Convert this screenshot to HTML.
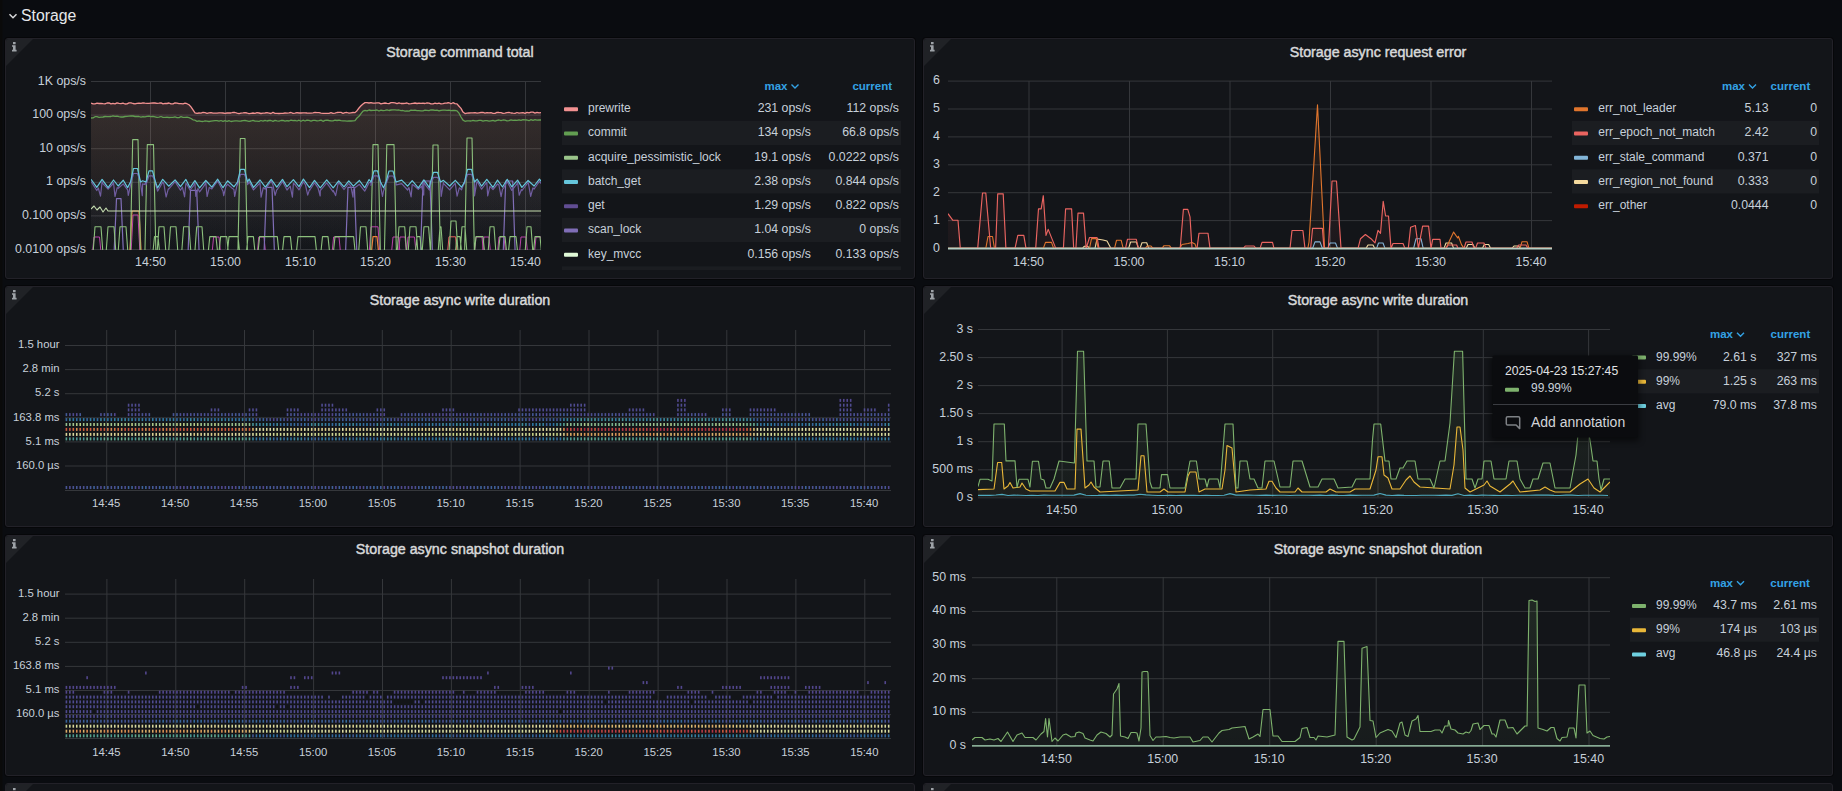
<!DOCTYPE html>
<html><head><meta charset="utf-8"><title>Storage</title>
<style>html,body{margin:0;padding:0;background:#0a0c10;overflow:hidden;width:1842px;height:791px}svg{display:block}</style>
</head><body><svg width="1842" height="791" viewBox="0 0 1842 791" font-family='"Liberation Sans", sans-serif'><rect x="0" y="0" width="1842" height="791" fill="#0a0c10"/>
<rect x="0" y="0" width="2.5" height="791" fill="#0a0a0a"/>
<path d="M9.5 14.2 l3.5 3.5 l3.5 -3.5" stroke="#d8d9da" stroke-width="1.5" fill="none"/>
<text x="21" y="20.5" font-size="15.8" fill="#e6e8ea" text-anchor="start" font-weight="normal" >Storage</text>
<rect x="4.5" y="37.5" width="911" height="242" rx="3" fill="none" stroke="#060709" stroke-width="1"/>
<rect x="5.5" y="38.5" width="909" height="240" rx="2.5" fill="#131519" stroke="#222128" stroke-width="1"/>
<path d="M6 41.5 Q6 39 8.5 39 L33 39 L6 66 Z" fill="#202226"/>
<path d="M13 42h2.6v2.2h-2.6z M12 45.2h3.6v4.6h1v1.6h-4.6v-1.6h1v-3h-1z" fill="#9ea3a8"/>
<text x="460.0" y="56.7" font-size="14.25" fill="#d8d9da" text-anchor="middle" font-weight="normal" stroke="#d8d9da" stroke-width="0.45">Storage command total</text>
<line x1="91" y1="81.5" x2="541" y2="81.5" stroke="#35373b" stroke-width="1"/>
<line x1="91" y1="115.1" x2="541" y2="115.1" stroke="#35373b" stroke-width="1"/>
<line x1="91" y1="148.7" x2="541" y2="148.7" stroke="#35373b" stroke-width="1"/>
<line x1="91" y1="182.3" x2="541" y2="182.3" stroke="#35373b" stroke-width="1"/>
<line x1="91" y1="215.9" x2="541" y2="215.9" stroke="#35373b" stroke-width="1"/>
<line x1="91" y1="249.5" x2="541" y2="249.5" stroke="#35373b" stroke-width="1"/>
<line x1="150.5" y1="81" x2="150.5" y2="249" stroke="#35373b" stroke-width="1"/>
<line x1="225.5" y1="81" x2="225.5" y2="249" stroke="#35373b" stroke-width="1"/>
<line x1="300.5" y1="81" x2="300.5" y2="249" stroke="#35373b" stroke-width="1"/>
<line x1="375.5" y1="81" x2="375.5" y2="249" stroke="#35373b" stroke-width="1"/>
<line x1="450.5" y1="81" x2="450.5" y2="249" stroke="#35373b" stroke-width="1"/>
<line x1="525.5" y1="81" x2="525.5" y2="249" stroke="#35373b" stroke-width="1"/>
<text x="86" y="84.5" font-size="12.4" fill="#c7d0d9" text-anchor="end" font-weight="normal" >1K ops/s</text>
<text x="86" y="118.1" font-size="12.4" fill="#c7d0d9" text-anchor="end" font-weight="normal" >100 ops/s</text>
<text x="86" y="151.7" font-size="12.4" fill="#c7d0d9" text-anchor="end" font-weight="normal" >10 ops/s</text>
<text x="86" y="185.3" font-size="12.4" fill="#c7d0d9" text-anchor="end" font-weight="normal" >1 ops/s</text>
<text x="86" y="218.9" font-size="12.4" fill="#c7d0d9" text-anchor="end" font-weight="normal" >0.100 ops/s</text>
<text x="86" y="252.5" font-size="12.4" fill="#c7d0d9" text-anchor="end" font-weight="normal" >0.0100 ops/s</text>
<text x="150.5" y="266" font-size="12.4" fill="#c7d0d9" text-anchor="middle" font-weight="normal" >14:50</text>
<text x="225.5" y="266" font-size="12.4" fill="#c7d0d9" text-anchor="middle" font-weight="normal" >15:00</text>
<text x="300.5" y="266" font-size="12.4" fill="#c7d0d9" text-anchor="middle" font-weight="normal" >15:10</text>
<text x="375.5" y="266" font-size="12.4" fill="#c7d0d9" text-anchor="middle" font-weight="normal" >15:20</text>
<text x="450.5" y="266" font-size="12.4" fill="#c7d0d9" text-anchor="middle" font-weight="normal" >15:30</text>
<text x="525.5" y="266" font-size="12.4" fill="#c7d0d9" text-anchor="middle" font-weight="normal" >15:40</text>
<clipPath id="cA"><rect x="91" y="60" width="450" height="190"/></clipPath>
<linearGradient id="gPink" x1="0" y1="81" x2="0" y2="249" gradientUnits="userSpaceOnUse"><stop offset="0" stop-color="#F29191" stop-opacity="0.17"/><stop offset="1" stop-color="#F29191" stop-opacity="0.0"/></linearGradient>
<linearGradient id="gGreen" x1="0" y1="81" x2="0" y2="249" gradientUnits="userSpaceOnUse"><stop offset="0" stop-color="#629E51" stop-opacity="0.07"/><stop offset="1" stop-color="#629E51" stop-opacity="0.0"/></linearGradient>
<linearGradient id="gBlue" x1="0" y1="81" x2="0" y2="249" gradientUnits="userSpaceOnUse"><stop offset="0" stop-color="#65C5DB" stop-opacity="0.06"/><stop offset="1" stop-color="#65C5DB" stop-opacity="0.005"/></linearGradient>
<linearGradient id="gPurp" x1="0" y1="81" x2="0" y2="249" gradientUnits="userSpaceOnUse"><stop offset="0" stop-color="#806EB7" stop-opacity="0.06"/><stop offset="1" stop-color="#806EB7" stop-opacity="0.005"/></linearGradient>
<path d="M91.0 103.1 L93.0 103.9 L95.0 103.8 L97.0 103.2 L99.0 103.5 L101.0 103.4 L103.0 103.7 L105.0 103.8 L107.0 103.0 L109.0 102.9 L111.0 103.9 L113.0 103.4 L115.0 103.8 L117.0 102.8 L119.0 103.4 L121.0 103.7 L123.0 103.1 L125.0 104.0 L127.0 103.9 L129.0 102.9 L131.0 102.8 L133.0 103.5 L135.0 103.9 L137.0 103.3 L139.0 103.1 L141.0 103.3 L143.0 102.8 L145.0 103.1 L147.0 103.3 L149.0 103.4 L151.0 103.1 L153.0 103.0 L155.0 103.0 L157.0 103.3 L159.0 103.1 L161.0 102.8 L163.0 103.8 L165.0 103.4 L167.0 103.5 L169.0 103.0 L171.0 103.9 L173.0 103.8 L175.0 102.9 L177.0 103.1 L179.0 103.6 L181.0 103.6 L183.0 103.8 L185.0 103.2 L187.0 103.7 L189.0 104.8 L191.0 106.9 L193.0 109.9 L195.0 112.8 L197.0 113.4 L199.0 113.0 L201.0 113.1 L203.0 112.4 L205.0 112.7 L207.0 113.4 L209.0 112.9 L211.0 112.6 L213.0 113.1 L215.0 113.2 L217.0 113.2 L219.0 112.8 L221.0 112.9 L223.0 113.0 L225.0 113.3 L227.0 113.0 L229.0 112.9 L231.0 113.0 L233.0 112.4 L235.0 112.5 L237.0 113.2 L239.0 113.6 L241.0 113.1 L243.0 112.9 L245.0 112.6 L247.0 113.0 L249.0 113.6 L251.0 113.3 L253.0 113.0 L255.0 113.4 L257.0 112.7 L259.0 113.0 L261.0 113.5 L263.0 113.1 L265.0 113.0 L267.0 112.7 L269.0 113.1 L271.0 113.5 L273.0 112.4 L275.0 113.3 L277.0 113.4 L279.0 113.5 L281.0 113.3 L283.0 113.4 L285.0 113.0 L287.0 113.1 L289.0 112.9 L291.0 112.5 L293.0 113.4 L295.0 113.1 L297.0 112.6 L299.0 113.0 L301.0 113.0 L303.0 112.8 L305.0 112.8 L307.0 113.0 L309.0 113.1 L311.0 113.1 L313.0 112.9 L315.0 112.4 L317.0 112.7 L319.0 112.6 L321.0 113.1 L323.0 113.4 L325.0 113.4 L327.0 113.4 L329.0 113.4 L331.0 112.7 L333.0 113.4 L335.0 113.2 L337.0 112.5 L339.0 112.4 L341.0 112.4 L343.0 113.3 L345.0 112.7 L347.0 112.5 L349.0 113.1 L351.0 112.8 L353.0 112.5 L355.0 112.6 L357.0 110.7 L359.0 108.0 L361.0 105.8 L363.0 104.0 L365.0 102.6 L367.0 102.6 L369.0 103.0 L371.0 102.6 L373.0 103.2 L375.0 103.2 L377.0 102.9 L379.0 102.8 L381.0 103.8 L383.0 103.3 L385.0 103.0 L387.0 103.4 L389.0 103.7 L391.0 102.7 L393.0 102.7 L395.0 102.9 L397.0 103.6 L399.0 102.9 L401.0 103.5 L403.0 103.5 L405.0 103.4 L407.0 103.0 L409.0 103.9 L411.0 103.7 L413.0 103.3 L415.0 103.0 L417.0 103.5 L419.0 103.2 L421.0 103.4 L423.0 103.1 L425.0 103.5 L427.0 102.8 L429.0 103.1 L431.0 103.9 L433.0 103.8 L435.0 103.1 L437.0 103.7 L439.0 103.1 L441.0 103.8 L443.0 103.6 L445.0 103.2 L447.0 103.0 L449.0 102.7 L451.0 103.8 L453.0 102.7 L455.0 103.7 L457.0 103.9 L459.0 106.2 L461.0 108.4 L463.0 112.1 L465.0 113.6 L467.0 113.2 L469.0 113.0 L471.0 112.8 L473.0 112.8 L475.0 112.6 L477.0 113.1 L479.0 112.8 L481.0 112.5 L483.0 112.4 L485.0 113.1 L487.0 112.6 L489.0 112.9 L491.0 112.7 L493.0 113.3 L495.0 113.3 L497.0 112.3 L499.0 112.5 L501.0 112.6 L503.0 113.4 L505.0 113.1 L507.0 112.6 L509.0 112.4 L511.0 113.0 L513.0 113.2 L515.0 113.3 L517.0 112.5 L519.0 113.2 L521.0 112.9 L523.0 112.7 L525.0 113.3 L527.0 112.4 L529.0 112.9 L531.0 112.2 L533.0 112.2 L535.0 113.1 L537.0 112.3 L539.0 112.9 L541.0 112.7 L541.0 249.2 L91.0 249.2 Z" fill="url(#gPink)" stroke="none" clip-path="url(#cA)"/>
<path d="M91.0 118.0 L93.0 117.9 L95.0 116.7 L97.0 116.7 L99.0 117.4 L101.0 117.2 L103.0 117.0 L105.0 116.5 L107.0 116.7 L109.0 116.6 L111.0 116.5 L113.0 115.9 L115.0 116.3 L117.0 116.2 L119.0 116.7 L121.0 117.0 L123.0 117.0 L125.0 116.5 L127.0 116.4 L129.0 116.2 L131.0 116.0 L133.0 116.0 L135.0 116.5 L137.0 116.4 L139.0 116.5 L141.0 117.1 L143.0 116.7 L145.0 116.8 L147.0 116.4 L149.0 116.2 L151.0 116.6 L153.0 116.3 L155.0 116.8 L157.0 117.4 L159.0 117.1 L161.0 116.5 L163.0 117.4 L165.0 117.3 L167.0 117.2 L169.0 117.5 L171.0 117.3 L173.0 117.4 L175.0 116.9 L177.0 117.6 L179.0 117.6 L181.0 116.7 L183.0 117.4 L185.0 117.4 L187.0 117.1 L189.0 117.7 L191.0 118.5 L193.0 119.8 L195.0 120.2 L197.0 121.4 L199.0 120.8 L201.0 121.4 L203.0 121.5 L205.0 120.9 L207.0 121.1 L209.0 121.5 L211.0 121.2 L213.0 120.9 L215.0 120.6 L217.0 120.7 L219.0 121.2 L221.0 120.5 L223.0 121.4 L225.0 120.7 L227.0 121.4 L229.0 120.7 L231.0 121.5 L233.0 121.2 L235.0 120.9 L237.0 120.9 L239.0 121.1 L241.0 121.0 L243.0 120.7 L245.0 120.5 L247.0 120.9 L249.0 121.4 L251.0 121.0 L253.0 120.3 L255.0 121.2 L257.0 121.1 L259.0 121.3 L261.0 120.5 L263.0 121.1 L265.0 120.3 L267.0 121.0 L269.0 120.5 L271.0 120.5 L273.0 121.3 L275.0 120.3 L277.0 120.8 L279.0 121.2 L281.0 120.5 L283.0 120.4 L285.0 121.2 L287.0 120.7 L289.0 121.0 L291.0 120.2 L293.0 120.6 L295.0 120.4 L297.0 121.0 L299.0 120.2 L301.0 121.3 L303.0 120.2 L305.0 121.0 L307.0 120.1 L309.0 120.4 L311.0 121.1 L313.0 120.3 L315.0 120.3 L317.0 120.9 L319.0 120.6 L321.0 120.1 L323.0 121.3 L325.0 120.3 L327.0 120.1 L329.0 120.5 L331.0 120.8 L333.0 120.9 L335.0 120.2 L337.0 120.5 L339.0 120.1 L341.0 120.6 L343.0 120.9 L345.0 120.9 L347.0 121.1 L349.0 120.9 L351.0 121.0 L353.0 120.9 L355.0 120.6 L357.0 118.0 L359.0 116.3 L361.0 113.6 L363.0 111.1 L365.0 110.3 L367.0 110.9 L369.0 110.0 L371.0 110.5 L373.0 110.3 L375.0 110.4 L377.0 110.0 L379.0 111.0 L381.0 110.1 L383.0 110.6 L385.0 110.3 L387.0 109.9 L389.0 110.5 L391.0 110.0 L393.0 109.9 L395.0 109.9 L397.0 110.1 L399.0 110.0 L401.0 110.6 L403.0 110.5 L405.0 111.1 L407.0 111.0 L409.0 111.1 L411.0 110.2 L413.0 110.4 L415.0 110.2 L417.0 110.6 L419.0 110.7 L421.0 110.9 L423.0 110.8 L425.0 110.2 L427.0 110.4 L429.0 110.6 L431.0 109.9 L433.0 110.0 L435.0 110.4 L437.0 110.1 L439.0 110.8 L441.0 110.3 L443.0 110.1 L445.0 110.2 L447.0 110.3 L449.0 110.2 L451.0 110.6 L453.0 110.5 L455.0 110.4 L457.0 110.8 L459.0 113.2 L461.0 117.0 L463.0 120.1 L465.0 121.3 L467.0 120.9 L469.0 120.9 L471.0 121.0 L473.0 120.3 L475.0 120.8 L477.0 120.9 L479.0 120.4 L481.0 120.3 L483.0 121.1 L485.0 120.6 L487.0 120.7 L489.0 121.2 L491.0 120.8 L493.0 120.4 L495.0 121.2 L497.0 120.4 L499.0 120.0 L501.0 120.7 L503.0 120.0 L505.0 120.2 L507.0 120.9 L509.0 120.6 L511.0 119.8 L513.0 120.3 L515.0 120.2 L517.0 120.3 L519.0 119.9 L521.0 120.4 L523.0 119.7 L525.0 119.9 L527.0 120.0 L529.0 120.7 L531.0 119.6 L533.0 120.4 L535.0 119.7 L537.0 120.1 L539.0 119.9 L541.0 120.0 L541.0 249.2 L91.0 249.2 Z" fill="url(#gGreen)" stroke="none" clip-path="url(#cA)"/>
<path d="M91.0 179.3 L96.8 187.3 L102.1 179.4 L108.1 187.6 L113.5 180.0 L118.2 186.0 L123.3 180.2 L127.6 187.6 L130.5 182.0 L133.5 168.5 L137.5 168.5 L140.5 182.0 L142.6 180.8 L146.0 182.0 L149.0 170.8 L152.5 170.8 L155.5 182.0 L157.6 187.9 L162.7 179.3 L168.7 186.2 L175.1 179.9 L180.5 186.7 L185.9 179.4 L190.1 187.7 L194.9 180.6 L199.6 187.9 L205.8 180.5 L211.8 187.2 L217.7 179.2 L223.0 187.7 L227.6 180.8 L233.9 186.8 L237.5 182.0 L240.5 169.3 L244.5 169.3 L247.5 182.0 L249.1 179.1 L253.5 187.4 L260.0 180.0 L265.3 187.1 L271.2 179.4 L276.8 187.1 L282.5 179.4 L287.0 186.7 L293.4 179.7 L299.0 186.6 L303.4 179.1 L309.5 187.6 L314.5 180.4 L320.3 187.8 L326.7 179.8 L333.2 187.9 L338.7 180.8 L344.0 186.8 L348.8 180.8 L353.4 186.1 L359.4 180.5 L364.7 187.7 L369.1 179.5 L371.0 182.0 L374.0 170.8 L377.5 170.8 L380.5 182.0 L383.5 187.8 L386.0 182.0 L389.0 171.0 L393.0 171.0 L396.0 182.0 L401.7 180.1 L407.6 186.1 L412.2 180.7 L418.3 187.8 L423.9 179.9 L429.4 187.7 L430.5 182.0 L433.5 172.4 L437.5 172.4 L440.5 182.0 L443.4 180.4 L449.7 186.0 L455.3 180.3 L461.5 187.2 L464.5 182.0 L467.5 169.4 L471.5 169.4 L474.5 182.0 L477.2 179.2 L481.6 186.1 L486.8 179.3 L493.0 187.3 L497.5 180.1 L502.5 187.0 L507.2 179.3 L511.8 186.8 L517.6 180.1 L521.9 187.4 L528.1 180.5 L534.1 186.0 L539.4 179.1 L545.4 186.4 L545.4 249.2 L91.0 249.2 Z" fill="url(#gBlue)" stroke="none" clip-path="url(#cA)"/>
<path d="M91.0 181.5 L96.8 190.5 L98.3 188.0 L100.5 196.2 L102.1 181.7 L102.7 183.3 L108.1 189.2 L112.8 184.0 L113.5 182.5 L115.0 196.5 L117.2 187.7 L118.2 188.3 L123.3 183.9 L126.1 187.9 L127.6 189.8 L128.3 195.4 L130.5 185.1 L130.5 182.0 L130.5 184.8 L133.5 173.5 L137.5 173.5 L140.5 182.0 L140.5 183.7 L142.3 195.7 L142.6 183.8 L144.5 184.5 L146.0 182.0 L146.0 184.8 L149.0 175.8 L152.5 175.8 L155.5 182.0 L155.5 184.3 L157.1 189.3 L157.6 191.2 L162.7 182.1 L163.9 183.8 L166.1 197.0 L168.3 188.8 L168.7 189.2 L175.1 181.6 L180.5 190.2 L182.4 187.1 L184.6 196.8 L185.9 183.3 L186.8 184.2 L190.1 190.1 L193.6 185.6 L194.9 182.9 L195.8 196.3 L198.0 188.4 L199.6 191.9 L204.9 184.6 L205.8 182.3 L207.1 196.5 L209.3 187.4 L211.8 188.9 L217.7 180.9 L221.5 188.3 L223.0 191.2 L223.7 195.6 L225.9 186.4 L227.6 184.2 L232.5 188.6 L233.9 189.4 L234.7 196.4 L236.9 185.7 L237.5 182.0 L237.5 185.1 L240.5 174.3 L244.5 174.3 L247.5 182.0 L247.5 184.6 L248.7 182.8 L249.1 181.8 L253.5 189.9 L258.9 184.2 L260.0 182.5 L261.1 197.2 L263.3 187.5 L265.3 189.2 L271.2 181.1 L272.9 184.7 L275.1 195.3 L276.8 189.7 L277.3 189.5 L282.5 181.5 L287.0 190.0 L290.2 186.2 L292.4 197.1 L293.4 183.2 L294.6 184.2 L299.0 189.9 L303.4 181.8 L305.5 185.0 L307.7 195.1 L309.5 189.6 L309.9 190.0 L314.5 182.8 L318.0 187.8 L320.2 196.0 L320.3 190.5 L322.4 188.2 L326.7 182.9 L333.2 191.8 L333.4 190.7 L335.6 195.6 L337.8 185.0 L338.7 182.5 L344.0 189.5 L348.8 183.5 L350.8 186.1 L353.0 197.1 L353.4 189.4 L355.2 187.5 L359.4 184.3 L364.7 191.1 L369.1 182.6 L369.2 182.7 L371.0 182.0 L371.0 185.4 L374.0 175.8 L377.5 175.8 L380.5 182.0 L380.5 185.2 L382.5 196.5 L383.5 191.0 L384.7 188.0 L386.0 182.0 L386.0 184.1 L389.0 176.0 L393.0 176.0 L396.0 182.0 L396.0 185.0 L396.4 184.9 L401.7 183.6 L407.6 190.0 L408.9 187.5 L411.1 196.9 L412.2 184.6 L413.3 185.0 L418.3 189.3 L421.5 186.2 L423.7 195.1 L423.9 182.1 L425.9 185.7 L429.4 190.0 L430.5 182.0 L430.5 184.5 L433.5 177.4 L437.5 177.4 L440.5 182.0 L440.5 183.7 L441.2 196.5 L443.4 182.6 L443.4 183.4 L449.7 189.9 L454.9 183.7 L455.3 183.6 L457.1 196.2 L459.3 187.8 L461.5 189.8 L464.5 182.0 L464.5 183.8 L467.5 174.4 L471.5 174.4 L474.5 182.0 L474.5 184.0 L474.5 195.8 L476.7 182.6 L477.2 181.5 L481.6 189.2 L485.5 184.0 L486.8 182.5 L487.7 195.9 L489.9 186.3 L493.0 189.5 L497.5 184.0 L498.9 185.0 L501.1 196.6 L502.5 189.3 L503.3 188.6 L507.2 181.5 L511.8 190.4 L517.0 183.8 L517.6 182.0 L519.2 195.2 L521.4 189.5 L521.9 190.6 L528.1 182.5 L528.5 183.9 L530.7 196.3 L532.9 187.9 L534.1 189.0 L539.4 181.3 L545.4 188.8 L545.4 249.2 L91.0 249.2 Z" fill="url(#gPurp)" stroke="none" clip-path="url(#cA)"/>
<path d="M91.0 262.0 L91.6 262.0 L94.0 237.0 L99.5 237.0 L101.9 262.0 L130.6 262.0 L133.0 215.0 L138.0 215.0 L140.4 262.0 L211.2 262.0 L213.6 237.0 L219.0 237.0 L221.4 262.0 L256.4 262.0 L258.8 237.0 L264.0 237.0 L266.4 262.0 L331.2 262.0 L333.6 237.0 L339.0 237.0 L341.4 262.0 L368.6 262.0 L371.0 226.8 L378.0 226.8 L380.4 262.0 L390.6 262.0 L393.0 237.0 L398.5 237.0 L400.9 262.0 L397.6 262.0 L400.0 237.0 L405.0 237.0 L407.4 262.0 L405.6 262.0 L408.0 237.0 L414.5 237.0 L416.9 262.0 L473.6 262.0 L476.0 237.0 L482.0 237.0 L484.4 262.0 L481.6 262.0 L484.0 237.0 L489.0 237.0 L491.4 262.0 L496.6 262.0 L499.0 237.0 L504.0 237.0 L506.4 262.0 L518.6 262.0 L521.0 237.0 L526.0 237.0 L528.4 262.0 L533.6 262.0 L536.0 237.0 L541.0 237.0 L543.4 262.0 L541.0 262.0" stroke="#BA43A9" stroke-width="1" fill="none" stroke-linejoin="round" clip-path="url(#cA)"/>
<path d="M91.0 262.0 L129.4 262.0 L132.0 211.0 L139.0 211.0 L141.6 262.0 L370.4 262.0 L373.0 236.7 L377.0 236.7 L379.6 262.0 L541.0 262.0" stroke="#EF843C" stroke-width="1.2" fill="none" stroke-linejoin="round" clip-path="url(#cA)"/>
<path d="M91.0 262.0 L446.6 262.0 L449.0 236.8 L455.6 236.8 L458.0 262.0 L541.0 262.0" stroke="#EA6460" stroke-width="1" fill="none" stroke-linejoin="round" clip-path="url(#cA)"/>
<path d="M91.0 262.0 L113.7 262.0 L116.5 198.6 L121.0 198.6 L123.8 262.0 L187.7 262.0 L190.5 190.4 L196.7 190.4 L199.5 262.0 L263.7 262.0 L266.5 187.3 L272.0 187.3 L274.8 262.0 L345.2 262.0 L348.0 187.3 L354.4 187.3 L357.2 262.0 L420.2 262.0 L423.0 181.0 L430.0 181.0 L432.8 262.0 L502.9 262.0 L505.7 181.0 L512.7 181.0 L515.5 262.0 L541.0 262.0" stroke="#806EB7" stroke-width="1.2" fill="none" stroke-linejoin="round" clip-path="url(#cA)"/>
<path d="M91.0 262.0 L92.4 262.0 L95.0 226.8 L101.0 226.8 L103.6 262.0 L105.4 262.0 L108.0 226.8 L114.0 226.8 L116.6 262.0 L117.4 262.0 L120.0 226.8 L126.0 226.8 L128.6 262.0 L130.1 262.0 L132.7 139.6 L138.0 139.6 L140.6 262.0 L144.7 262.0 L147.3 144.6 L153.5 144.6 L156.1 262.0 L151.9 262.0 L154.5 236.6 L158.0 236.6 L160.6 262.0 L156.4 262.0 L159.0 226.8 L164.0 226.8 L166.6 262.0 L167.9 262.0 L170.5 226.8 L176.0 226.8 L178.6 262.0 L181.0 262.0 L183.6 226.8 L189.0 226.8 L191.6 262.0 L194.1 262.0 L196.7 226.8 L202.0 226.8 L204.6 262.0 L207.2 262.0 L209.8 236.6 L216.0 236.6 L218.6 262.0 L218.0 262.0 L220.6 236.6 L226.7 236.6 L229.3 262.0 L226.4 262.0 L229.0 236.6 L238.0 236.6 L240.6 262.0 L237.7 262.0 L240.3 138.5 L245.0 138.5 L247.6 262.0 L245.4 262.0 L248.0 236.6 L253.4 236.6 L256.0 262.0 L257.0 262.0 L259.6 236.6 L277.3 236.6 L279.9 262.0 L281.4 262.0 L284.0 236.6 L290.4 236.6 L293.0 262.0 L295.4 262.0 L298.0 236.6 L315.0 236.6 L317.6 262.0 L319.9 262.0 L322.5 236.6 L328.0 236.6 L330.6 262.0 L332.4 262.0 L335.0 236.6 L353.6 236.6 L356.2 262.0 L357.9 262.0 L360.5 226.8 L366.0 226.8 L368.6 262.0 L370.4 262.0 L373.0 144.6 L378.0 144.6 L380.6 262.0 L384.2 262.0 L386.8 144.6 L394.0 144.6 L396.6 262.0 L396.4 262.0 L399.0 226.8 L404.7 226.8 L407.3 262.0 L407.4 262.0 L410.0 226.8 L416.0 226.8 L418.6 262.0 L414.4 262.0 L417.0 236.6 L420.0 236.6 L422.6 262.0 L421.4 262.0 L424.0 226.8 L428.6 226.8 L431.2 262.0 L430.4 262.0 L433.0 145.0 L438.0 145.0 L440.6 262.0 L437.4 262.0 L440.0 226.8 L441.0 226.8 L443.6 262.0 L448.4 262.0 L451.0 221.0 L456.0 221.0 L458.6 262.0 L454.4 262.0 L457.0 236.6 L460.0 236.6 L462.6 262.0 L459.4 262.0 L462.0 226.8 L465.0 226.8 L467.6 262.0 L464.4 262.0 L467.0 138.0 L472.0 138.0 L474.6 262.0 L473.4 262.0 L476.0 236.6 L483.0 236.6 L485.6 262.0 L487.4 262.0 L490.0 226.8 L494.0 226.8 L496.6 262.0 L497.4 262.0 L500.0 236.6 L505.0 236.6 L507.6 262.0 L507.4 262.0 L510.0 236.6 L516.0 236.6 L518.6 262.0 L524.4 262.0 L527.0 226.8 L531.0 226.8 L533.6 262.0 L532.4 262.0 L535.0 236.6 L540.0 236.6 L542.6 262.0 L541.0 262.0" stroke="#8CC07C" stroke-width="1.1" fill="none" stroke-linejoin="round" clip-path="url(#cA)"/>
<path d="M91.0 209.0 L94.0 206.0 L97.0 210.0 L100.0 207.0 L103.0 212.0 L106.0 208.0 L108.0 211.0 L541.0 211.0" stroke="#C5DDB0" stroke-width="1.1" fill="none" stroke-linejoin="round" clip-path="url(#cA)"/>
<path d="M91.0 181.5 L96.8 190.5 L98.3 188.0 L100.5 196.2 L102.1 181.7 L102.7 183.3 L108.1 189.2 L112.8 184.0 L113.5 182.5 L115.0 196.5 L117.2 187.7 L118.2 188.3 L123.3 183.9 L126.1 187.9 L127.6 189.8 L128.3 195.4 L130.5 185.1 L130.5 182.0 L130.5 184.8 L133.5 173.5 L137.5 173.5 L140.5 182.0 L140.5 183.7 L142.3 195.7 L142.6 183.8 L144.5 184.5 L146.0 182.0 L146.0 184.8 L149.0 175.8 L152.5 175.8 L155.5 182.0 L155.5 184.3 L157.1 189.3 L157.6 191.2 L162.7 182.1 L163.9 183.8 L166.1 197.0 L168.3 188.8 L168.7 189.2 L175.1 181.6 L180.5 190.2 L182.4 187.1 L184.6 196.8 L185.9 183.3 L186.8 184.2 L190.1 190.1 L193.6 185.6 L194.9 182.9 L195.8 196.3 L198.0 188.4 L199.6 191.9 L204.9 184.6 L205.8 182.3 L207.1 196.5 L209.3 187.4 L211.8 188.9 L217.7 180.9 L221.5 188.3 L223.0 191.2 L223.7 195.6 L225.9 186.4 L227.6 184.2 L232.5 188.6 L233.9 189.4 L234.7 196.4 L236.9 185.7 L237.5 182.0 L237.5 185.1 L240.5 174.3 L244.5 174.3 L247.5 182.0 L247.5 184.6 L248.7 182.8 L249.1 181.8 L253.5 189.9 L258.9 184.2 L260.0 182.5 L261.1 197.2 L263.3 187.5 L265.3 189.2 L271.2 181.1 L272.9 184.7 L275.1 195.3 L276.8 189.7 L277.3 189.5 L282.5 181.5 L287.0 190.0 L290.2 186.2 L292.4 197.1 L293.4 183.2 L294.6 184.2 L299.0 189.9 L303.4 181.8 L305.5 185.0 L307.7 195.1 L309.5 189.6 L309.9 190.0 L314.5 182.8 L318.0 187.8 L320.2 196.0 L320.3 190.5 L322.4 188.2 L326.7 182.9 L333.2 191.8 L333.4 190.7 L335.6 195.6 L337.8 185.0 L338.7 182.5 L344.0 189.5 L348.8 183.5 L350.8 186.1 L353.0 197.1 L353.4 189.4 L355.2 187.5 L359.4 184.3 L364.7 191.1 L369.1 182.6 L369.2 182.7 L371.0 182.0 L371.0 185.4 L374.0 175.8 L377.5 175.8 L380.5 182.0 L380.5 185.2 L382.5 196.5 L383.5 191.0 L384.7 188.0 L386.0 182.0 L386.0 184.1 L389.0 176.0 L393.0 176.0 L396.0 182.0 L396.0 185.0 L396.4 184.9 L401.7 183.6 L407.6 190.0 L408.9 187.5 L411.1 196.9 L412.2 184.6 L413.3 185.0 L418.3 189.3 L421.5 186.2 L423.7 195.1 L423.9 182.1 L425.9 185.7 L429.4 190.0 L430.5 182.0 L430.5 184.5 L433.5 177.4 L437.5 177.4 L440.5 182.0 L440.5 183.7 L441.2 196.5 L443.4 182.6 L443.4 183.4 L449.7 189.9 L454.9 183.7 L455.3 183.6 L457.1 196.2 L459.3 187.8 L461.5 189.8 L464.5 182.0 L464.5 183.8 L467.5 174.4 L471.5 174.4 L474.5 182.0 L474.5 184.0 L474.5 195.8 L476.7 182.6 L477.2 181.5 L481.6 189.2 L485.5 184.0 L486.8 182.5 L487.7 195.9 L489.9 186.3 L493.0 189.5 L497.5 184.0 L498.9 185.0 L501.1 196.6 L502.5 189.3 L503.3 188.6 L507.2 181.5 L511.8 190.4 L517.0 183.8 L517.6 182.0 L519.2 195.2 L521.4 189.5 L521.9 190.6 L528.1 182.5 L528.5 183.9 L530.7 196.3 L532.9 187.9 L534.1 189.0 L539.4 181.3 L545.4 188.8" stroke="#705DA0" stroke-width="1.2" fill="none" stroke-linejoin="round" clip-path="url(#cA)"/>
<path d="M91.0 179.3 L96.8 187.3 L102.1 179.4 L108.1 187.6 L113.5 180.0 L118.2 186.0 L123.3 180.2 L127.6 187.6 L130.5 182.0 L133.5 168.5 L137.5 168.5 L140.5 182.0 L142.6 180.8 L146.0 182.0 L149.0 170.8 L152.5 170.8 L155.5 182.0 L157.6 187.9 L162.7 179.3 L168.7 186.2 L175.1 179.9 L180.5 186.7 L185.9 179.4 L190.1 187.7 L194.9 180.6 L199.6 187.9 L205.8 180.5 L211.8 187.2 L217.7 179.2 L223.0 187.7 L227.6 180.8 L233.9 186.8 L237.5 182.0 L240.5 169.3 L244.5 169.3 L247.5 182.0 L249.1 179.1 L253.5 187.4 L260.0 180.0 L265.3 187.1 L271.2 179.4 L276.8 187.1 L282.5 179.4 L287.0 186.7 L293.4 179.7 L299.0 186.6 L303.4 179.1 L309.5 187.6 L314.5 180.4 L320.3 187.8 L326.7 179.8 L333.2 187.9 L338.7 180.8 L344.0 186.8 L348.8 180.8 L353.4 186.1 L359.4 180.5 L364.7 187.7 L369.1 179.5 L371.0 182.0 L374.0 170.8 L377.5 170.8 L380.5 182.0 L383.5 187.8 L386.0 182.0 L389.0 171.0 L393.0 171.0 L396.0 182.0 L401.7 180.1 L407.6 186.1 L412.2 180.7 L418.3 187.8 L423.9 179.9 L429.4 187.7 L430.5 182.0 L433.5 172.4 L437.5 172.4 L440.5 182.0 L443.4 180.4 L449.7 186.0 L455.3 180.3 L461.5 187.2 L464.5 182.0 L467.5 169.4 L471.5 169.4 L474.5 182.0 L477.2 179.2 L481.6 186.1 L486.8 179.3 L493.0 187.3 L497.5 180.1 L502.5 187.0 L507.2 179.3 L511.8 186.8 L517.6 180.1 L521.9 187.4 L528.1 180.5 L534.1 186.0 L539.4 179.1 L545.4 186.4" stroke="#65C5DB" stroke-width="1.2" fill="none" stroke-linejoin="round" clip-path="url(#cA)"/>
<path d="M91.0 118.0 L93.0 117.9 L95.0 116.7 L97.0 116.7 L99.0 117.4 L101.0 117.2 L103.0 117.0 L105.0 116.5 L107.0 116.7 L109.0 116.6 L111.0 116.5 L113.0 115.9 L115.0 116.3 L117.0 116.2 L119.0 116.7 L121.0 117.0 L123.0 117.0 L125.0 116.5 L127.0 116.4 L129.0 116.2 L131.0 116.0 L133.0 116.0 L135.0 116.5 L137.0 116.4 L139.0 116.5 L141.0 117.1 L143.0 116.7 L145.0 116.8 L147.0 116.4 L149.0 116.2 L151.0 116.6 L153.0 116.3 L155.0 116.8 L157.0 117.4 L159.0 117.1 L161.0 116.5 L163.0 117.4 L165.0 117.3 L167.0 117.2 L169.0 117.5 L171.0 117.3 L173.0 117.4 L175.0 116.9 L177.0 117.6 L179.0 117.6 L181.0 116.7 L183.0 117.4 L185.0 117.4 L187.0 117.1 L189.0 117.7 L191.0 118.5 L193.0 119.8 L195.0 120.2 L197.0 121.4 L199.0 120.8 L201.0 121.4 L203.0 121.5 L205.0 120.9 L207.0 121.1 L209.0 121.5 L211.0 121.2 L213.0 120.9 L215.0 120.6 L217.0 120.7 L219.0 121.2 L221.0 120.5 L223.0 121.4 L225.0 120.7 L227.0 121.4 L229.0 120.7 L231.0 121.5 L233.0 121.2 L235.0 120.9 L237.0 120.9 L239.0 121.1 L241.0 121.0 L243.0 120.7 L245.0 120.5 L247.0 120.9 L249.0 121.4 L251.0 121.0 L253.0 120.3 L255.0 121.2 L257.0 121.1 L259.0 121.3 L261.0 120.5 L263.0 121.1 L265.0 120.3 L267.0 121.0 L269.0 120.5 L271.0 120.5 L273.0 121.3 L275.0 120.3 L277.0 120.8 L279.0 121.2 L281.0 120.5 L283.0 120.4 L285.0 121.2 L287.0 120.7 L289.0 121.0 L291.0 120.2 L293.0 120.6 L295.0 120.4 L297.0 121.0 L299.0 120.2 L301.0 121.3 L303.0 120.2 L305.0 121.0 L307.0 120.1 L309.0 120.4 L311.0 121.1 L313.0 120.3 L315.0 120.3 L317.0 120.9 L319.0 120.6 L321.0 120.1 L323.0 121.3 L325.0 120.3 L327.0 120.1 L329.0 120.5 L331.0 120.8 L333.0 120.9 L335.0 120.2 L337.0 120.5 L339.0 120.1 L341.0 120.6 L343.0 120.9 L345.0 120.9 L347.0 121.1 L349.0 120.9 L351.0 121.0 L353.0 120.9 L355.0 120.6 L357.0 118.0 L359.0 116.3 L361.0 113.6 L363.0 111.1 L365.0 110.3 L367.0 110.9 L369.0 110.0 L371.0 110.5 L373.0 110.3 L375.0 110.4 L377.0 110.0 L379.0 111.0 L381.0 110.1 L383.0 110.6 L385.0 110.3 L387.0 109.9 L389.0 110.5 L391.0 110.0 L393.0 109.9 L395.0 109.9 L397.0 110.1 L399.0 110.0 L401.0 110.6 L403.0 110.5 L405.0 111.1 L407.0 111.0 L409.0 111.1 L411.0 110.2 L413.0 110.4 L415.0 110.2 L417.0 110.6 L419.0 110.7 L421.0 110.9 L423.0 110.8 L425.0 110.2 L427.0 110.4 L429.0 110.6 L431.0 109.9 L433.0 110.0 L435.0 110.4 L437.0 110.1 L439.0 110.8 L441.0 110.3 L443.0 110.1 L445.0 110.2 L447.0 110.3 L449.0 110.2 L451.0 110.6 L453.0 110.5 L455.0 110.4 L457.0 110.8 L459.0 113.2 L461.0 117.0 L463.0 120.1 L465.0 121.3 L467.0 120.9 L469.0 120.9 L471.0 121.0 L473.0 120.3 L475.0 120.8 L477.0 120.9 L479.0 120.4 L481.0 120.3 L483.0 121.1 L485.0 120.6 L487.0 120.7 L489.0 121.2 L491.0 120.8 L493.0 120.4 L495.0 121.2 L497.0 120.4 L499.0 120.0 L501.0 120.7 L503.0 120.0 L505.0 120.2 L507.0 120.9 L509.0 120.6 L511.0 119.8 L513.0 120.3 L515.0 120.2 L517.0 120.3 L519.0 119.9 L521.0 120.4 L523.0 119.7 L525.0 119.9 L527.0 120.0 L529.0 120.7 L531.0 119.6 L533.0 120.4 L535.0 119.7 L537.0 120.1 L539.0 119.9 L541.0 120.0" stroke="#629E51" stroke-width="1.3" fill="none" stroke-linejoin="round" clip-path="url(#cA)"/>
<path d="M91.0 103.1 L93.0 103.9 L95.0 103.8 L97.0 103.2 L99.0 103.5 L101.0 103.4 L103.0 103.7 L105.0 103.8 L107.0 103.0 L109.0 102.9 L111.0 103.9 L113.0 103.4 L115.0 103.8 L117.0 102.8 L119.0 103.4 L121.0 103.7 L123.0 103.1 L125.0 104.0 L127.0 103.9 L129.0 102.9 L131.0 102.8 L133.0 103.5 L135.0 103.9 L137.0 103.3 L139.0 103.1 L141.0 103.3 L143.0 102.8 L145.0 103.1 L147.0 103.3 L149.0 103.4 L151.0 103.1 L153.0 103.0 L155.0 103.0 L157.0 103.3 L159.0 103.1 L161.0 102.8 L163.0 103.8 L165.0 103.4 L167.0 103.5 L169.0 103.0 L171.0 103.9 L173.0 103.8 L175.0 102.9 L177.0 103.1 L179.0 103.6 L181.0 103.6 L183.0 103.8 L185.0 103.2 L187.0 103.7 L189.0 104.8 L191.0 106.9 L193.0 109.9 L195.0 112.8 L197.0 113.4 L199.0 113.0 L201.0 113.1 L203.0 112.4 L205.0 112.7 L207.0 113.4 L209.0 112.9 L211.0 112.6 L213.0 113.1 L215.0 113.2 L217.0 113.2 L219.0 112.8 L221.0 112.9 L223.0 113.0 L225.0 113.3 L227.0 113.0 L229.0 112.9 L231.0 113.0 L233.0 112.4 L235.0 112.5 L237.0 113.2 L239.0 113.6 L241.0 113.1 L243.0 112.9 L245.0 112.6 L247.0 113.0 L249.0 113.6 L251.0 113.3 L253.0 113.0 L255.0 113.4 L257.0 112.7 L259.0 113.0 L261.0 113.5 L263.0 113.1 L265.0 113.0 L267.0 112.7 L269.0 113.1 L271.0 113.5 L273.0 112.4 L275.0 113.3 L277.0 113.4 L279.0 113.5 L281.0 113.3 L283.0 113.4 L285.0 113.0 L287.0 113.1 L289.0 112.9 L291.0 112.5 L293.0 113.4 L295.0 113.1 L297.0 112.6 L299.0 113.0 L301.0 113.0 L303.0 112.8 L305.0 112.8 L307.0 113.0 L309.0 113.1 L311.0 113.1 L313.0 112.9 L315.0 112.4 L317.0 112.7 L319.0 112.6 L321.0 113.1 L323.0 113.4 L325.0 113.4 L327.0 113.4 L329.0 113.4 L331.0 112.7 L333.0 113.4 L335.0 113.2 L337.0 112.5 L339.0 112.4 L341.0 112.4 L343.0 113.3 L345.0 112.7 L347.0 112.5 L349.0 113.1 L351.0 112.8 L353.0 112.5 L355.0 112.6 L357.0 110.7 L359.0 108.0 L361.0 105.8 L363.0 104.0 L365.0 102.6 L367.0 102.6 L369.0 103.0 L371.0 102.6 L373.0 103.2 L375.0 103.2 L377.0 102.9 L379.0 102.8 L381.0 103.8 L383.0 103.3 L385.0 103.0 L387.0 103.4 L389.0 103.7 L391.0 102.7 L393.0 102.7 L395.0 102.9 L397.0 103.6 L399.0 102.9 L401.0 103.5 L403.0 103.5 L405.0 103.4 L407.0 103.0 L409.0 103.9 L411.0 103.7 L413.0 103.3 L415.0 103.0 L417.0 103.5 L419.0 103.2 L421.0 103.4 L423.0 103.1 L425.0 103.5 L427.0 102.8 L429.0 103.1 L431.0 103.9 L433.0 103.8 L435.0 103.1 L437.0 103.7 L439.0 103.1 L441.0 103.8 L443.0 103.6 L445.0 103.2 L447.0 103.0 L449.0 102.7 L451.0 103.8 L453.0 102.7 L455.0 103.7 L457.0 103.9 L459.0 106.2 L461.0 108.4 L463.0 112.1 L465.0 113.6 L467.0 113.2 L469.0 113.0 L471.0 112.8 L473.0 112.8 L475.0 112.6 L477.0 113.1 L479.0 112.8 L481.0 112.5 L483.0 112.4 L485.0 113.1 L487.0 112.6 L489.0 112.9 L491.0 112.7 L493.0 113.3 L495.0 113.3 L497.0 112.3 L499.0 112.5 L501.0 112.6 L503.0 113.4 L505.0 113.1 L507.0 112.6 L509.0 112.4 L511.0 113.0 L513.0 113.2 L515.0 113.3 L517.0 112.5 L519.0 113.2 L521.0 112.9 L523.0 112.7 L525.0 113.3 L527.0 112.4 L529.0 112.9 L531.0 112.2 L533.0 112.2 L535.0 113.1 L537.0 112.3 L539.0 112.9 L541.0 112.7" stroke="#F29191" stroke-width="1.3" fill="none" stroke-linejoin="round" clip-path="url(#cA)"/>
<text x="764.5" y="90" font-size="11.5" fill="#33a2e5" text-anchor="start" font-weight="bold" >max</text>
<path d="M791.5 84.4 l3.5 3.5 l3.5 -3.5" stroke="#33a2e5" stroke-width="1.4" fill="none"/>
<text x="852.4" y="90" font-size="11.5" fill="#33a2e5" text-anchor="start" font-weight="bold" >current</text>
<rect x="564" y="107.2" width="14" height="4" rx="1" fill="#F29191"/>
<text x="588" y="112.1" font-size="12" fill="#c7d0d9" text-anchor="start" font-weight="normal" >prewrite</text>
<text x="811" y="112.1" font-size="12.3" fill="#c7d0d9" text-anchor="end" font-weight="normal" >231 ops/s</text>
<text x="899" y="112.1" font-size="12.3" fill="#c7d0d9" text-anchor="end" font-weight="normal" >112 ops/s</text>
<rect x="562" y="120.8" width="339" height="24.2" fill="#1b1d21"/>
<rect x="564" y="131.4" width="14" height="4" rx="1" fill="#629E51"/>
<text x="588" y="136.3" font-size="12" fill="#c7d0d9" text-anchor="start" font-weight="normal" >commit</text>
<text x="811" y="136.3" font-size="12.3" fill="#c7d0d9" text-anchor="end" font-weight="normal" >134 ops/s</text>
<text x="899" y="136.3" font-size="12.3" fill="#c7d0d9" text-anchor="end" font-weight="normal" >66.8 ops/s</text>
<rect x="564" y="155.7" width="14" height="4" rx="1" fill="#9AC48A"/>
<text x="588" y="160.6" font-size="12" fill="#c7d0d9" text-anchor="start" font-weight="normal" >acquire_pessimistic_lock</text>
<text x="811" y="160.6" font-size="12.3" fill="#c7d0d9" text-anchor="end" font-weight="normal" >19.1 ops/s</text>
<text x="899" y="160.6" font-size="12.3" fill="#c7d0d9" text-anchor="end" font-weight="normal" >0.0222 ops/s</text>
<rect x="562" y="169.3" width="339" height="24.2" fill="#1b1d21"/>
<rect x="564" y="179.9" width="14" height="4" rx="1" fill="#65C5DB"/>
<text x="588" y="184.8" font-size="12" fill="#c7d0d9" text-anchor="start" font-weight="normal" >batch_get</text>
<text x="811" y="184.8" font-size="12.3" fill="#c7d0d9" text-anchor="end" font-weight="normal" >2.38 ops/s</text>
<text x="899" y="184.8" font-size="12.3" fill="#c7d0d9" text-anchor="end" font-weight="normal" >0.844 ops/s</text>
<rect x="564" y="204.2" width="14" height="4" rx="1" fill="#614D93"/>
<text x="588" y="209.1" font-size="12" fill="#c7d0d9" text-anchor="start" font-weight="normal" >get</text>
<text x="811" y="209.1" font-size="12.3" fill="#c7d0d9" text-anchor="end" font-weight="normal" >1.29 ops/s</text>
<text x="899" y="209.1" font-size="12.3" fill="#c7d0d9" text-anchor="end" font-weight="normal" >0.822 ops/s</text>
<rect x="562" y="217.8" width="339" height="24.2" fill="#1b1d21"/>
<rect x="564" y="228.4" width="14" height="4" rx="1" fill="#806EB7"/>
<text x="588" y="233.3" font-size="12" fill="#c7d0d9" text-anchor="start" font-weight="normal" >scan_lock</text>
<text x="811" y="233.3" font-size="12.3" fill="#c7d0d9" text-anchor="end" font-weight="normal" >1.04 ops/s</text>
<text x="899" y="233.3" font-size="12.3" fill="#c7d0d9" text-anchor="end" font-weight="normal" >0 ops/s</text>
<rect x="564" y="252.7" width="14" height="4" rx="1" fill="#E0F9D7"/>
<text x="588" y="257.6" font-size="12" fill="#c7d0d9" text-anchor="start" font-weight="normal" >key_mvcc</text>
<text x="811" y="257.6" font-size="12.3" fill="#c7d0d9" text-anchor="end" font-weight="normal" >0.156 ops/s</text>
<text x="899" y="257.6" font-size="12.3" fill="#c7d0d9" text-anchor="end" font-weight="normal" >0.133 ops/s</text>
<rect x="562" y="266.3" width="339" height="3.7" fill="#1b1d21"/>
<rect x="922.5" y="37.5" width="911" height="242" rx="3" fill="none" stroke="#060709" stroke-width="1"/>
<rect x="923.5" y="38.5" width="909" height="240" rx="2.5" fill="#131519" stroke="#222128" stroke-width="1"/>
<path d="M924 41.5 Q924 39 926.5 39 L951 39 L924 66 Z" fill="#202226"/>
<path d="M931 42h2.6v2.2h-2.6z M930 45.2h3.6v4.6h1v1.6h-4.6v-1.6h1v-3h-1z" fill="#9ea3a8"/>
<text x="1378.0" y="56.7" font-size="14.25" fill="#d8d9da" text-anchor="middle" font-weight="normal" stroke="#d8d9da" stroke-width="0.45">Storage async request error</text>
<line x1="948" y1="81.1" x2="1552" y2="81.1" stroke="#35373b" stroke-width="1"/>
<line x1="948" y1="109.0" x2="1552" y2="109.0" stroke="#35373b" stroke-width="1"/>
<line x1="948" y1="136.9" x2="1552" y2="136.9" stroke="#35373b" stroke-width="1"/>
<line x1="948" y1="164.8" x2="1552" y2="164.8" stroke="#35373b" stroke-width="1"/>
<line x1="948" y1="192.7" x2="1552" y2="192.7" stroke="#35373b" stroke-width="1"/>
<line x1="948" y1="220.6" x2="1552" y2="220.6" stroke="#35373b" stroke-width="1"/>
<line x1="948" y1="248.5" x2="1552" y2="248.5" stroke="#35373b" stroke-width="1"/>
<line x1="1029.0" y1="81" x2="1029.0" y2="248" stroke="#35373b" stroke-width="1"/>
<line x1="1129.5" y1="81" x2="1129.5" y2="248" stroke="#35373b" stroke-width="1"/>
<line x1="1230.0" y1="81" x2="1230.0" y2="248" stroke="#35373b" stroke-width="1"/>
<line x1="1330.5" y1="81" x2="1330.5" y2="248" stroke="#35373b" stroke-width="1"/>
<line x1="1431.0" y1="81" x2="1431.0" y2="248" stroke="#35373b" stroke-width="1"/>
<line x1="1531.5" y1="81" x2="1531.5" y2="248" stroke="#35373b" stroke-width="1"/>
<text x="940" y="84.1" font-size="12.4" fill="#c7d0d9" text-anchor="end" font-weight="normal" >6</text>
<text x="940" y="112.0" font-size="12.4" fill="#c7d0d9" text-anchor="end" font-weight="normal" >5</text>
<text x="940" y="139.9" font-size="12.4" fill="#c7d0d9" text-anchor="end" font-weight="normal" >4</text>
<text x="940" y="167.8" font-size="12.4" fill="#c7d0d9" text-anchor="end" font-weight="normal" >3</text>
<text x="940" y="195.7" font-size="12.4" fill="#c7d0d9" text-anchor="end" font-weight="normal" >2</text>
<text x="940" y="223.6" font-size="12.4" fill="#c7d0d9" text-anchor="end" font-weight="normal" >1</text>
<text x="940" y="251.5" font-size="12.4" fill="#c7d0d9" text-anchor="end" font-weight="normal" >0</text>
<text x="1028.5" y="266" font-size="12.4" fill="#c7d0d9" text-anchor="middle" font-weight="normal" >14:50</text>
<text x="1129" y="266" font-size="12.4" fill="#c7d0d9" text-anchor="middle" font-weight="normal" >15:00</text>
<text x="1229.5" y="266" font-size="12.4" fill="#c7d0d9" text-anchor="middle" font-weight="normal" >15:10</text>
<text x="1330" y="266" font-size="12.4" fill="#c7d0d9" text-anchor="middle" font-weight="normal" >15:20</text>
<text x="1430.5" y="266" font-size="12.4" fill="#c7d0d9" text-anchor="middle" font-weight="normal" >15:30</text>
<text x="1531" y="266" font-size="12.4" fill="#c7d0d9" text-anchor="middle" font-weight="normal" >15:40</text>
<clipPath id="cB"><rect x="948" y="60" width="604" height="189"/></clipPath>
<linearGradient id="gRed" x1="0" y1="80" x2="0" y2="248" gradientUnits="userSpaceOnUse"><stop offset="0" stop-color="#EA6460" stop-opacity="0.16"/><stop offset="1" stop-color="#EA6460" stop-opacity="0.04"/></linearGradient>
<linearGradient id="gOrg" x1="0" y1="80" x2="0" y2="248" gradientUnits="userSpaceOnUse"><stop offset="0" stop-color="#E0752D" stop-opacity="0.12"/><stop offset="1" stop-color="#E0752D" stop-opacity="0.03"/></linearGradient>
<path d="M948.0 213.7 L952.7 220.2 L958.0 220.2 L960.3 248.4 L977.7 248.4 L982.5 193.0 L985.8 193.0 L990.7 248.4 L995.6 248.4 L997.7 193.9 L1003.2 193.9 L1005.9 248.4 L1015.0 248.4 L1017.8 235.4 L1023.8 235.4 L1026.0 248.4 L1035.7 248.4 L1038.5 208.8 L1041.2 208.8 L1043.3 195.7 L1046.0 235.4 L1048.2 229.4 L1055.8 248.4 L1063.4 248.4 L1065.6 208.8 L1071.6 208.8 L1073.7 248.4 L1075.9 248.4 L1078.0 213.1 L1083.5 213.1 L1086.2 248.4 L1089.5 237.5 L1097.1 237.5 L1099.0 248.4 L1125.5 248.4 L1127.5 239.2 L1136.2 239.2 L1138.5 248.4 L1180.2 248.4 L1183.4 209.3 L1187.8 209.3 L1190.0 216.9 L1192.0 248.4 L1197.0 248.4 L1199.0 233.2 L1201.0 233.2 L1208.0 233.2 L1210.0 248.4 L1243.3 248.4 L1245.3 246.0 L1254.0 246.0 L1256.0 248.4 L1260.0 248.4 L1262.0 242.4 L1272.5 242.4 L1274.0 248.4 L1290.0 248.4 L1292.0 230.5 L1302.9 230.5 L1305.0 248.4 L1310.6 248.4 L1312.6 228.3 L1322.4 228.3 L1324.0 248.4 L1328.4 248.4 L1332.0 181.0 L1336.5 181.0 L1341.0 248.4 L1358.0 248.4 L1360.5 238.7 L1365.4 234.5 L1371.0 238.7 L1375.0 242.9 L1378.0 230.3 L1380.5 233.3 L1383.2 201.3 L1385.6 216.0 L1388.5 216.0 L1391.0 248.4 L1393.0 243.5 L1403.0 243.5 L1405.0 248.4 L1408.3 248.4 L1410.6 227.3 L1415.4 225.5 L1418.4 248.4 L1422.6 226.1 L1428.6 226.1 L1431.0 248.4 L1432.7 239.3 L1440.0 239.3 L1441.0 248.4 L1446.0 248.4 L1448.0 245.0 L1456.6 245.0 L1458.0 248.4 L1464.0 248.4 L1466.0 242.0 L1472.0 242.0 L1474.0 248.4 L1475.5 248.4 L1477.5 243.0 L1484.0 243.0 L1486.0 248.4 L1516.7 248.4 L1518.7 245.0 L1526.0 245.0 L1528.0 248.4 L1552.0 248.4 L1552.0 249.4 L948.0 249.4 Z" fill="url(#gRed)" stroke="none" clip-path="url(#cB)"/>
<path d="M948.0 248.4 L985.8 248.4 L988.0 236.5 L992.5 236.5 L994.5 248.4 L1043.3 248.4 L1045.5 242.4 L1051.5 242.4 L1053.7 248.4 L1089.5 248.4 L1091.5 238.6 L1096.2 238.6 L1098.2 248.4 L1114.5 248.4 L1116.5 240.3 L1121.2 240.3 L1123.2 248.4 L1145.4 248.4 L1147.0 246.0 L1151.0 246.0 L1153.0 248.4 L1162.0 248.4 L1164.0 245.7 L1169.5 245.7 L1171.5 248.4 L1179.6 248.4 L1182.0 244.5 L1188.0 243.5 L1192.0 242.5 L1195.0 244.0 L1196.5 248.4 L1307.8 248.4 L1309.0 242.0 L1317.5 104.9 L1324.6 248.4 L1445.9 248.4 L1453.6 232.1 L1457.7 238.0 L1458.4 236.3 L1461.5 244.6 L1464.0 248.4 L1520.0 248.4 L1522.0 241.7 L1527.0 241.7 L1529.0 248.4 L1552.0 248.4 L1552.0 249.4 L948.0 249.4 Z" fill="url(#gOrg)" stroke="none" clip-path="url(#cB)"/>
<path d="M948.0 248.4 L1082.4 248.4 L1084.4 246.2 L1087.5 246.2 L1089.5 248.4 L1095.0 248.4 L1097.0 239.0 L1103.0 240.0 L1107.0 241.0 L1111.0 248.4 L1128.6 248.4 L1130.6 242.0 L1136.4 242.0 L1138.4 248.4 L1140.0 248.4 L1142.0 242.8 L1146.7 242.8 L1148.7 248.4 L1366.0 248.4 L1368.0 245.0 L1373.0 245.0 L1374.8 248.4 L1444.0 248.4 L1446.0 243.0 L1451.6 243.0 L1453.6 248.4 L1466.0 248.4 L1468.0 244.5 L1473.0 244.5 L1475.0 248.4 L1482.3 248.4 L1484.3 244.5 L1488.7 244.5 L1490.7 248.4 L1512.0 248.4 L1514.0 246.0 L1518.5 246.0 L1520.5 248.4 L1552.0 248.4" stroke="#F2D9A0" stroke-width="1.1" fill="none" stroke-linejoin="round" clip-path="url(#cB)"/>
<path d="M948.0 248.4 L1312.6 248.4 L1315.0 241.9 L1320.0 241.9 L1322.4 248.4 L1327.8 248.4 L1330.0 243.0 L1335.5 243.0 L1337.6 248.4 L1376.6 248.4 L1378.5 243.0 L1383.0 243.0 L1385.0 248.4 L1413.6 248.4 L1416.0 238.7 L1421.0 238.7 L1423.2 248.4 L1552.0 248.4" stroke="#82B5D8" stroke-width="1.1" fill="none" stroke-linejoin="round" clip-path="url(#cB)"/>
<path d="M948.0 248.4 L985.8 248.4 L988.0 236.5 L992.5 236.5 L994.5 248.4 L1043.3 248.4 L1045.5 242.4 L1051.5 242.4 L1053.7 248.4 L1089.5 248.4 L1091.5 238.6 L1096.2 238.6 L1098.2 248.4 L1114.5 248.4 L1116.5 240.3 L1121.2 240.3 L1123.2 248.4 L1145.4 248.4 L1147.0 246.0 L1151.0 246.0 L1153.0 248.4 L1162.0 248.4 L1164.0 245.7 L1169.5 245.7 L1171.5 248.4 L1179.6 248.4 L1182.0 244.5 L1188.0 243.5 L1192.0 242.5 L1195.0 244.0 L1196.5 248.4 L1307.8 248.4 L1309.0 242.0 L1317.5 104.9 L1324.6 248.4 L1445.9 248.4 L1453.6 232.1 L1457.7 238.0 L1458.4 236.3 L1461.5 244.6 L1464.0 248.4 L1520.0 248.4 L1522.0 241.7 L1527.0 241.7 L1529.0 248.4 L1552.0 248.4" stroke="#E0752D" stroke-width="1.1" fill="none" stroke-linejoin="round" clip-path="url(#cB)"/>
<path d="M948.0 213.7 L952.7 220.2 L958.0 220.2 L960.3 248.4 L977.7 248.4 L982.5 193.0 L985.8 193.0 L990.7 248.4 L995.6 248.4 L997.7 193.9 L1003.2 193.9 L1005.9 248.4 L1015.0 248.4 L1017.8 235.4 L1023.8 235.4 L1026.0 248.4 L1035.7 248.4 L1038.5 208.8 L1041.2 208.8 L1043.3 195.7 L1046.0 235.4 L1048.2 229.4 L1055.8 248.4 L1063.4 248.4 L1065.6 208.8 L1071.6 208.8 L1073.7 248.4 L1075.9 248.4 L1078.0 213.1 L1083.5 213.1 L1086.2 248.4 L1089.5 237.5 L1097.1 237.5 L1099.0 248.4 L1125.5 248.4 L1127.5 239.2 L1136.2 239.2 L1138.5 248.4 L1180.2 248.4 L1183.4 209.3 L1187.8 209.3 L1190.0 216.9 L1192.0 248.4 L1197.0 248.4 L1199.0 233.2 L1201.0 233.2 L1208.0 233.2 L1210.0 248.4 L1243.3 248.4 L1245.3 246.0 L1254.0 246.0 L1256.0 248.4 L1260.0 248.4 L1262.0 242.4 L1272.5 242.4 L1274.0 248.4 L1290.0 248.4 L1292.0 230.5 L1302.9 230.5 L1305.0 248.4 L1310.6 248.4 L1312.6 228.3 L1322.4 228.3 L1324.0 248.4 L1328.4 248.4 L1332.0 181.0 L1336.5 181.0 L1341.0 248.4 L1358.0 248.4 L1360.5 238.7 L1365.4 234.5 L1371.0 238.7 L1375.0 242.9 L1378.0 230.3 L1380.5 233.3 L1383.2 201.3 L1385.6 216.0 L1388.5 216.0 L1391.0 248.4 L1393.0 243.5 L1403.0 243.5 L1405.0 248.4 L1408.3 248.4 L1410.6 227.3 L1415.4 225.5 L1418.4 248.4 L1422.6 226.1 L1428.6 226.1 L1431.0 248.4 L1432.7 239.3 L1440.0 239.3 L1441.0 248.4 L1446.0 248.4 L1448.0 245.0 L1456.6 245.0 L1458.0 248.4 L1464.0 248.4 L1466.0 242.0 L1472.0 242.0 L1474.0 248.4 L1475.5 248.4 L1477.5 243.0 L1484.0 243.0 L1486.0 248.4 L1516.7 248.4 L1518.7 245.0 L1526.0 245.0 L1528.0 248.4 L1552.0 248.4" stroke="#EA6460" stroke-width="1.15" fill="none" stroke-linejoin="round" clip-path="url(#cB)"/>
<line x1="948" y1="248.6" x2="1552" y2="248.6" stroke="#B5CFC4" stroke-width="1.6"/>
<text x="1722" y="90" font-size="11.5" fill="#33a2e5" text-anchor="start" font-weight="bold" >max</text>
<path d="M1749 84.4 l3.5 3.5 l3.5 -3.5" stroke="#33a2e5" stroke-width="1.4" fill="none"/>
<text x="1770.6" y="90" font-size="11.5" fill="#33a2e5" text-anchor="start" font-weight="bold" >current</text>
<rect x="1574" y="107.2" width="14" height="4" rx="1" fill="#E0752D"/>
<text x="1598.3" y="112.1" font-size="12" fill="#c7d0d9" text-anchor="start" font-weight="normal" >err_not_leader</text>
<text x="1768.5" y="112.1" font-size="12.3" fill="#c7d0d9" text-anchor="end" font-weight="normal" >5.13</text>
<text x="1817" y="112.1" font-size="12.3" fill="#c7d0d9" text-anchor="end" font-weight="normal" >0</text>
<rect x="1572" y="120.8" width="247" height="24.2" fill="#1b1d21"/>
<rect x="1574" y="131.4" width="14" height="4" rx="1" fill="#EA6460"/>
<text x="1598.3" y="136.3" font-size="12" fill="#c7d0d9" text-anchor="start" font-weight="normal" >err_epoch_not_match</text>
<text x="1768.5" y="136.3" font-size="12.3" fill="#c7d0d9" text-anchor="end" font-weight="normal" >2.42</text>
<text x="1817" y="136.3" font-size="12.3" fill="#c7d0d9" text-anchor="end" font-weight="normal" >0</text>
<rect x="1574" y="155.7" width="14" height="4" rx="1" fill="#82B5D8"/>
<text x="1598.3" y="160.6" font-size="12" fill="#c7d0d9" text-anchor="start" font-weight="normal" >err_stale_command</text>
<text x="1768.5" y="160.6" font-size="12.3" fill="#c7d0d9" text-anchor="end" font-weight="normal" >0.371</text>
<text x="1817" y="160.6" font-size="12.3" fill="#c7d0d9" text-anchor="end" font-weight="normal" >0</text>
<rect x="1572" y="169.3" width="247" height="24.2" fill="#1b1d21"/>
<rect x="1574" y="179.9" width="14" height="4" rx="1" fill="#F5DA9E"/>
<text x="1598.3" y="184.8" font-size="12" fill="#c7d0d9" text-anchor="start" font-weight="normal" >err_region_not_found</text>
<text x="1768.5" y="184.8" font-size="12.3" fill="#c7d0d9" text-anchor="end" font-weight="normal" >0.333</text>
<text x="1817" y="184.8" font-size="12.3" fill="#c7d0d9" text-anchor="end" font-weight="normal" >0</text>
<rect x="1574" y="204.2" width="14" height="4" rx="1" fill="#BF1B00"/>
<text x="1598.3" y="209.1" font-size="12" fill="#c7d0d9" text-anchor="start" font-weight="normal" >err_other</text>
<text x="1768.5" y="209.1" font-size="12.3" fill="#c7d0d9" text-anchor="end" font-weight="normal" >0.0444</text>
<text x="1817" y="209.1" font-size="12.3" fill="#c7d0d9" text-anchor="end" font-weight="normal" >0</text>
<rect x="4.5" y="285.5" width="911" height="242" rx="3" fill="none" stroke="#060709" stroke-width="1"/>
<rect x="5.5" y="286.5" width="909" height="240" rx="2.5" fill="#131519" stroke="#222128" stroke-width="1"/>
<path d="M6 289.5 Q6 287 8.5 287 L33 287 L6 314 Z" fill="#202226"/>
<path d="M13 290h2.6v2.2h-2.6z M12 293.2h3.6v4.6h1v1.6h-4.6v-1.6h1v-3h-1z" fill="#9ea3a8"/>
<text x="460.0" y="304.7" font-size="14.25" fill="#d8d9da" text-anchor="middle" font-weight="normal" stroke="#d8d9da" stroke-width="0.45">Storage async write duration</text>
<line x1="65" y1="345.5" x2="891" y2="345.5" stroke="#35373b" stroke-width="1"/>
<line x1="65" y1="369.6" x2="891" y2="369.6" stroke="#35373b" stroke-width="1"/>
<line x1="65" y1="393.7" x2="891" y2="393.7" stroke="#35373b" stroke-width="1"/>
<line x1="65" y1="417.8" x2="891" y2="417.8" stroke="#35373b" stroke-width="1"/>
<line x1="65" y1="441.9" x2="891" y2="441.9" stroke="#35373b" stroke-width="1"/>
<line x1="65" y1="466.0" x2="891" y2="466.0" stroke="#35373b" stroke-width="1"/>
<line x1="65" y1="490.5" x2="891" y2="490.5" stroke="#35373b" stroke-width="1"/>
<line x1="106.7" y1="330" x2="106.7" y2="490" stroke="#35373b" stroke-width="1"/>
<line x1="175.6" y1="330" x2="175.6" y2="490" stroke="#35373b" stroke-width="1"/>
<line x1="244.5" y1="330" x2="244.5" y2="490" stroke="#35373b" stroke-width="1"/>
<line x1="313.4" y1="330" x2="313.4" y2="490" stroke="#35373b" stroke-width="1"/>
<line x1="382.3" y1="330" x2="382.3" y2="490" stroke="#35373b" stroke-width="1"/>
<line x1="451.2" y1="330" x2="451.2" y2="490" stroke="#35373b" stroke-width="1"/>
<line x1="520.1" y1="330" x2="520.1" y2="490" stroke="#35373b" stroke-width="1"/>
<line x1="589.0" y1="330" x2="589.0" y2="490" stroke="#35373b" stroke-width="1"/>
<line x1="657.9" y1="330" x2="657.9" y2="490" stroke="#35373b" stroke-width="1"/>
<line x1="726.8" y1="330" x2="726.8" y2="490" stroke="#35373b" stroke-width="1"/>
<line x1="795.7" y1="330" x2="795.7" y2="490" stroke="#35373b" stroke-width="1"/>
<line x1="864.6" y1="330" x2="864.6" y2="490" stroke="#35373b" stroke-width="1"/>
<text x="59.5" y="348.2" font-size="11.3" fill="#c7d0d9" text-anchor="end" font-weight="normal" >1.5 hour</text>
<text x="59.5" y="372.3" font-size="11.3" fill="#c7d0d9" text-anchor="end" font-weight="normal" >2.8 min</text>
<text x="59.5" y="396.4" font-size="11.3" fill="#c7d0d9" text-anchor="end" font-weight="normal" >5.2 s</text>
<text x="59.5" y="420.5" font-size="11.3" fill="#c7d0d9" text-anchor="end" font-weight="normal" >163.8 ms</text>
<text x="59.5" y="444.6" font-size="11.3" fill="#c7d0d9" text-anchor="end" font-weight="normal" >5.1 ms</text>
<text x="59.5" y="468.7" font-size="11.3" fill="#c7d0d9" text-anchor="end" font-weight="normal" >160.0 µs</text>
<text x="106.2" y="507" font-size="11.3" fill="#c7d0d9" text-anchor="middle" font-weight="normal" >14:45</text>
<text x="175.10000000000002" y="507" font-size="11.3" fill="#c7d0d9" text-anchor="middle" font-weight="normal" >14:50</text>
<text x="244.0" y="507" font-size="11.3" fill="#c7d0d9" text-anchor="middle" font-weight="normal" >14:55</text>
<text x="312.90000000000003" y="507" font-size="11.3" fill="#c7d0d9" text-anchor="middle" font-weight="normal" >15:00</text>
<text x="381.8" y="507" font-size="11.3" fill="#c7d0d9" text-anchor="middle" font-weight="normal" >15:05</text>
<text x="450.7" y="507" font-size="11.3" fill="#c7d0d9" text-anchor="middle" font-weight="normal" >15:10</text>
<text x="519.6" y="507" font-size="11.3" fill="#c7d0d9" text-anchor="middle" font-weight="normal" >15:15</text>
<text x="588.5000000000001" y="507" font-size="11.3" fill="#c7d0d9" text-anchor="middle" font-weight="normal" >15:20</text>
<text x="657.4000000000001" y="507" font-size="11.3" fill="#c7d0d9" text-anchor="middle" font-weight="normal" >15:25</text>
<text x="726.3000000000001" y="507" font-size="11.3" fill="#c7d0d9" text-anchor="middle" font-weight="normal" >15:30</text>
<text x="795.2" y="507" font-size="11.3" fill="#c7d0d9" text-anchor="middle" font-weight="normal" >15:35</text>
<text x="864.1000000000001" y="507" font-size="11.3" fill="#c7d0d9" text-anchor="middle" font-weight="normal" >15:40</text>
<g opacity="0.85"><rect x="65.60" y="437.40" width="1.6" height="3.0" fill="#61bca7"/><rect x="69.06" y="437.40" width="1.6" height="3.0" fill="#5cb7aa"/><rect x="72.51" y="437.40" width="1.6" height="3.0" fill="#5ab4ab"/><rect x="75.97" y="437.40" width="1.6" height="3.0" fill="#54adad"/><rect x="79.42" y="437.40" width="1.6" height="3.0" fill="#5cb7aa"/><rect x="82.88" y="437.40" width="1.6" height="3.0" fill="#54aead"/><rect x="86.33" y="437.40" width="1.6" height="3.0" fill="#80cca5"/><rect x="89.79" y="437.40" width="1.6" height="3.0" fill="#68c3a5"/><rect x="93.24" y="437.40" width="1.6" height="3.0" fill="#54adae"/><rect x="96.70" y="437.40" width="1.6" height="3.0" fill="#60bba8"/><rect x="100.15" y="437.40" width="1.6" height="3.0" fill="#55afad"/><rect x="103.61" y="437.40" width="1.6" height="3.0" fill="#7bcaa5"/><rect x="107.06" y="437.40" width="1.6" height="3.0" fill="#68c3a5"/><rect x="110.52" y="437.40" width="1.6" height="3.0" fill="#74c7a5"/><rect x="113.97" y="437.40" width="1.6" height="3.0" fill="#64c0a6"/><rect x="117.43" y="437.40" width="1.6" height="3.0" fill="#63bfa6"/><rect x="120.88" y="437.40" width="1.6" height="3.0" fill="#81cda5"/><rect x="124.34" y="437.40" width="1.6" height="3.0" fill="#76c8a5"/><rect x="127.79" y="437.40" width="1.6" height="3.0" fill="#72c7a5"/><rect x="131.25" y="437.40" width="1.6" height="3.0" fill="#55afad"/><rect x="134.70" y="437.40" width="1.6" height="3.0" fill="#5bb6aa"/><rect x="138.16" y="437.40" width="1.6" height="3.0" fill="#79c9a5"/><rect x="141.61" y="437.40" width="1.6" height="3.0" fill="#5ab4ab"/><rect x="145.06" y="437.40" width="1.6" height="3.0" fill="#7acaa5"/><rect x="148.52" y="437.40" width="1.6" height="3.0" fill="#61bda7"/><rect x="151.97" y="437.40" width="1.6" height="3.0" fill="#7bcaa5"/><rect x="155.43" y="437.40" width="1.6" height="3.0" fill="#82cda5"/><rect x="158.88" y="437.40" width="1.6" height="3.0" fill="#57b1ac"/><rect x="162.34" y="437.40" width="1.6" height="3.0" fill="#76c8a5"/><rect x="165.80" y="437.40" width="1.6" height="3.0" fill="#76c8a5"/><rect x="169.25" y="437.40" width="1.6" height="3.0" fill="#52acae"/><rect x="172.70" y="437.40" width="1.6" height="3.0" fill="#57b1ac"/><rect x="176.16" y="437.40" width="1.6" height="3.0" fill="#72c7a5"/><rect x="179.62" y="437.40" width="1.6" height="3.0" fill="#53adae"/><rect x="183.07" y="437.40" width="1.6" height="3.0" fill="#64c0a6"/><rect x="186.52" y="437.40" width="1.6" height="3.0" fill="#5fbaa8"/><rect x="189.98" y="437.40" width="1.6" height="3.0" fill="#76c8a5"/><rect x="193.44" y="437.40" width="1.6" height="3.0" fill="#54aead"/><rect x="196.89" y="437.40" width="1.6" height="3.0" fill="#5eb9a9"/><rect x="200.34" y="437.40" width="1.6" height="3.0" fill="#53acae"/><rect x="203.80" y="437.40" width="1.6" height="3.0" fill="#56b0ad"/><rect x="207.25" y="437.40" width="1.6" height="3.0" fill="#71c6a5"/><rect x="210.71" y="437.40" width="1.6" height="3.0" fill="#6ec5a5"/><rect x="214.16" y="437.40" width="1.6" height="3.0" fill="#78c9a5"/><rect x="217.62" y="437.40" width="1.6" height="3.0" fill="#7acaa5"/><rect x="221.07" y="437.40" width="1.6" height="3.0" fill="#7ecba5"/><rect x="224.53" y="437.40" width="1.6" height="3.0" fill="#71c6a5"/><rect x="227.98" y="437.40" width="1.6" height="3.0" fill="#62bda7"/><rect x="231.44" y="437.40" width="1.6" height="3.0" fill="#81cda5"/><rect x="234.90" y="437.40" width="1.6" height="3.0" fill="#5fbaa8"/><rect x="238.35" y="437.40" width="1.6" height="3.0" fill="#6fc6a5"/><rect x="241.81" y="437.40" width="1.6" height="3.0" fill="#70c6a5"/><rect x="245.26" y="437.40" width="1.6" height="3.0" fill="#59b3ab"/><rect x="248.72" y="437.40" width="1.6" height="3.0" fill="#67c2a5"/><rect x="252.17" y="437.40" width="1.6" height="3.0" fill="#479fb3"/><rect x="255.62" y="437.40" width="1.6" height="3.0" fill="#3389bd"/><rect x="259.08" y="437.40" width="1.6" height="3.0" fill="#397fb9"/><rect x="262.54" y="437.40" width="1.6" height="3.0" fill="#449db4"/><rect x="265.99" y="437.40" width="1.6" height="3.0" fill="#4372b3"/><rect x="269.44" y="437.40" width="1.6" height="3.0" fill="#469eb4"/><rect x="272.90" y="437.40" width="1.6" height="3.0" fill="#3b7db8"/><rect x="276.35" y="437.40" width="1.6" height="3.0" fill="#3e78b6"/><rect x="279.81" y="437.40" width="1.6" height="3.0" fill="#469eb4"/><rect x="283.26" y="437.40" width="1.6" height="3.0" fill="#3c7bb7"/><rect x="286.72" y="437.40" width="1.6" height="3.0" fill="#388eba"/><rect x="290.18" y="437.40" width="1.6" height="3.0" fill="#3584bb"/><rect x="293.63" y="437.40" width="1.6" height="3.0" fill="#469fb4"/><rect x="297.08" y="437.40" width="1.6" height="3.0" fill="#459db4"/><rect x="300.54" y="437.40" width="1.6" height="3.0" fill="#3f97b7"/><rect x="304.00" y="437.40" width="1.6" height="3.0" fill="#4273b3"/><rect x="307.45" y="437.40" width="1.6" height="3.0" fill="#3f96b7"/><rect x="310.91" y="437.40" width="1.6" height="3.0" fill="#3b7cb7"/><rect x="314.36" y="437.40" width="1.6" height="3.0" fill="#4174b4"/><rect x="317.81" y="437.40" width="1.6" height="3.0" fill="#4274b3"/><rect x="321.27" y="437.40" width="1.6" height="3.0" fill="#388fba"/><rect x="324.72" y="437.40" width="1.6" height="3.0" fill="#388fba"/><rect x="328.18" y="437.40" width="1.6" height="3.0" fill="#3387bc"/><rect x="331.64" y="437.40" width="1.6" height="3.0" fill="#3c7bb7"/><rect x="335.09" y="437.40" width="1.6" height="3.0" fill="#429ab5"/><rect x="338.55" y="437.40" width="1.6" height="3.0" fill="#3b7db8"/><rect x="342.00" y="437.40" width="1.6" height="3.0" fill="#3c7ab7"/><rect x="345.45" y="437.40" width="1.6" height="3.0" fill="#3f78b5"/><rect x="348.91" y="437.40" width="1.6" height="3.0" fill="#459eb4"/><rect x="352.36" y="437.40" width="1.6" height="3.0" fill="#4274b3"/><rect x="355.82" y="437.40" width="1.6" height="3.0" fill="#439bb5"/><rect x="359.28" y="437.40" width="1.6" height="3.0" fill="#398fba"/><rect x="362.73" y="437.40" width="1.6" height="3.0" fill="#3683bb"/><rect x="366.19" y="437.40" width="1.6" height="3.0" fill="#4175b4"/><rect x="369.64" y="437.40" width="1.6" height="3.0" fill="#398fba"/><rect x="373.09" y="437.40" width="1.6" height="3.0" fill="#4175b4"/><rect x="376.55" y="437.40" width="1.6" height="3.0" fill="#3486bc"/><rect x="380.01" y="437.40" width="1.6" height="3.0" fill="#3a91b9"/><rect x="383.46" y="437.40" width="1.6" height="3.0" fill="#3a91b9"/><rect x="386.92" y="437.40" width="1.6" height="3.0" fill="#3f97b7"/><rect x="390.37" y="437.40" width="1.6" height="3.0" fill="#449cb5"/><rect x="393.82" y="437.40" width="1.6" height="3.0" fill="#4198b6"/><rect x="397.28" y="437.40" width="1.6" height="3.0" fill="#397fb9"/><rect x="400.73" y="437.40" width="1.6" height="3.0" fill="#4371b2"/><rect x="404.19" y="437.40" width="1.6" height="3.0" fill="#4098b7"/><rect x="407.65" y="437.40" width="1.6" height="3.0" fill="#459db4"/><rect x="411.10" y="437.40" width="1.6" height="3.0" fill="#4372b2"/><rect x="414.56" y="437.40" width="1.6" height="3.0" fill="#3386bc"/><rect x="418.01" y="437.40" width="1.6" height="3.0" fill="#368cbb"/><rect x="421.46" y="437.40" width="1.6" height="3.0" fill="#3d94b8"/><rect x="424.92" y="437.40" width="1.6" height="3.0" fill="#3584bb"/><rect x="428.38" y="437.40" width="1.6" height="3.0" fill="#3d79b6"/><rect x="431.83" y="437.40" width="1.6" height="3.0" fill="#348abc"/><rect x="435.29" y="437.40" width="1.6" height="3.0" fill="#358cbb"/><rect x="438.74" y="437.40" width="1.6" height="3.0" fill="#449db4"/><rect x="442.19" y="437.40" width="1.6" height="3.0" fill="#4175b4"/><rect x="445.65" y="437.40" width="1.6" height="3.0" fill="#459eb4"/><rect x="449.10" y="437.40" width="1.6" height="3.0" fill="#3288bd"/><rect x="452.56" y="437.40" width="1.6" height="3.0" fill="#3e79b6"/><rect x="456.02" y="437.40" width="1.6" height="3.0" fill="#4199b6"/><rect x="459.47" y="437.40" width="1.6" height="3.0" fill="#3a7db8"/><rect x="462.93" y="437.40" width="1.6" height="3.0" fill="#4273b3"/><rect x="466.38" y="437.40" width="1.6" height="3.0" fill="#3782ba"/><rect x="469.83" y="437.40" width="1.6" height="3.0" fill="#3c7bb7"/><rect x="473.29" y="437.40" width="1.6" height="3.0" fill="#429ab5"/><rect x="476.74" y="437.40" width="1.6" height="3.0" fill="#358bbc"/><rect x="480.20" y="437.40" width="1.6" height="3.0" fill="#4198b6"/><rect x="483.66" y="437.40" width="1.6" height="3.0" fill="#3e78b6"/><rect x="487.11" y="437.40" width="1.6" height="3.0" fill="#3b92b9"/><rect x="490.56" y="437.40" width="1.6" height="3.0" fill="#348abc"/><rect x="494.02" y="437.40" width="1.6" height="3.0" fill="#4471b2"/><rect x="497.47" y="437.40" width="1.6" height="3.0" fill="#3e78b5"/><rect x="500.93" y="437.40" width="1.6" height="3.0" fill="#4372b3"/><rect x="504.39" y="437.40" width="1.6" height="3.0" fill="#348abc"/><rect x="507.84" y="437.40" width="1.6" height="3.0" fill="#3289bd"/><rect x="511.30" y="437.40" width="1.6" height="3.0" fill="#3a7eb8"/><rect x="514.75" y="437.40" width="1.6" height="3.0" fill="#3389bd"/><rect x="518.21" y="437.40" width="1.6" height="3.0" fill="#3b92b9"/><rect x="521.66" y="437.40" width="1.6" height="3.0" fill="#368cbb"/><rect x="525.12" y="437.40" width="1.6" height="3.0" fill="#4198b6"/><rect x="528.57" y="437.40" width="1.6" height="3.0" fill="#378ebb"/><rect x="532.03" y="437.40" width="1.6" height="3.0" fill="#4372b2"/><rect x="535.48" y="437.40" width="1.6" height="3.0" fill="#4273b3"/><rect x="538.94" y="437.40" width="1.6" height="3.0" fill="#3682ba"/><rect x="542.39" y="437.40" width="1.6" height="3.0" fill="#3288bd"/><rect x="545.85" y="437.40" width="1.6" height="3.0" fill="#398fba"/><rect x="549.30" y="437.40" width="1.6" height="3.0" fill="#439bb5"/><rect x="552.76" y="437.40" width="1.6" height="3.0" fill="#3b93b9"/><rect x="556.21" y="437.40" width="1.6" height="3.0" fill="#3c7bb7"/><rect x="559.67" y="437.40" width="1.6" height="3.0" fill="#3485bc"/><rect x="563.12" y="437.40" width="1.6" height="3.0" fill="#57b1ac"/><rect x="566.58" y="437.40" width="1.6" height="3.0" fill="#57b1ac"/><rect x="570.03" y="437.40" width="1.6" height="3.0" fill="#5bb5aa"/><rect x="573.49" y="437.40" width="1.6" height="3.0" fill="#5eb9a9"/><rect x="576.94" y="437.40" width="1.6" height="3.0" fill="#5fbaa8"/><rect x="580.39" y="437.40" width="1.6" height="3.0" fill="#5bb6aa"/><rect x="583.85" y="437.40" width="1.6" height="3.0" fill="#6ec5a5"/><rect x="587.31" y="437.40" width="1.6" height="3.0" fill="#5db9a9"/><rect x="590.76" y="437.40" width="1.6" height="3.0" fill="#72c7a5"/><rect x="594.22" y="437.40" width="1.6" height="3.0" fill="#67c2a5"/><rect x="597.67" y="437.40" width="1.6" height="3.0" fill="#5bb5aa"/><rect x="601.12" y="437.40" width="1.6" height="3.0" fill="#5eb9a9"/><rect x="604.58" y="437.40" width="1.6" height="3.0" fill="#71c6a5"/><rect x="608.04" y="437.40" width="1.6" height="3.0" fill="#53adae"/><rect x="611.49" y="437.40" width="1.6" height="3.0" fill="#60bba8"/><rect x="614.95" y="437.40" width="1.6" height="3.0" fill="#63bea7"/><rect x="618.40" y="437.40" width="1.6" height="3.0" fill="#81cda5"/><rect x="621.86" y="437.40" width="1.6" height="3.0" fill="#64c0a6"/><rect x="625.31" y="437.40" width="1.6" height="3.0" fill="#74c7a5"/><rect x="628.76" y="437.40" width="1.6" height="3.0" fill="#5fbaa8"/><rect x="632.22" y="437.40" width="1.6" height="3.0" fill="#68c3a5"/><rect x="635.68" y="437.40" width="1.6" height="3.0" fill="#59b3ab"/><rect x="639.13" y="437.40" width="1.6" height="3.0" fill="#60bba8"/><rect x="642.59" y="437.40" width="1.6" height="3.0" fill="#5ab4ab"/><rect x="646.04" y="437.40" width="1.6" height="3.0" fill="#6ec5a5"/><rect x="649.50" y="437.40" width="1.6" height="3.0" fill="#60bba8"/><rect x="652.95" y="437.40" width="1.6" height="3.0" fill="#5cb7aa"/><rect x="656.41" y="437.40" width="1.6" height="3.0" fill="#58b3ab"/><rect x="659.86" y="437.40" width="1.6" height="3.0" fill="#6ec5a5"/><rect x="663.32" y="437.40" width="1.6" height="3.0" fill="#58b2ac"/><rect x="666.77" y="437.40" width="1.6" height="3.0" fill="#57b1ac"/><rect x="670.23" y="437.40" width="1.6" height="3.0" fill="#5eb9a9"/><rect x="673.68" y="437.40" width="1.6" height="3.0" fill="#52acae"/><rect x="677.13" y="437.40" width="1.6" height="3.0" fill="#53adae"/><rect x="680.59" y="437.40" width="1.6" height="3.0" fill="#65c1a5"/><rect x="684.05" y="437.40" width="1.6" height="3.0" fill="#65c1a6"/><rect x="687.50" y="437.40" width="1.6" height="3.0" fill="#78c9a5"/><rect x="690.96" y="437.40" width="1.6" height="3.0" fill="#58b2ab"/><rect x="694.41" y="437.40" width="1.6" height="3.0" fill="#54aead"/><rect x="697.87" y="437.40" width="1.6" height="3.0" fill="#67c2a5"/><rect x="701.32" y="437.40" width="1.6" height="3.0" fill="#5eb9a9"/><rect x="704.78" y="437.40" width="1.6" height="3.0" fill="#5db8a9"/><rect x="708.23" y="437.40" width="1.6" height="3.0" fill="#5cb7a9"/><rect x="711.69" y="437.40" width="1.6" height="3.0" fill="#78c9a5"/><rect x="715.14" y="437.40" width="1.6" height="3.0" fill="#5ab5aa"/><rect x="718.60" y="437.40" width="1.6" height="3.0" fill="#63bea7"/><rect x="722.05" y="437.40" width="1.6" height="3.0" fill="#5fbaa8"/><rect x="725.50" y="437.40" width="1.6" height="3.0" fill="#6ac4a5"/><rect x="728.96" y="437.40" width="1.6" height="3.0" fill="#61bca7"/><rect x="732.42" y="437.40" width="1.6" height="3.0" fill="#5bb5aa"/><rect x="735.87" y="437.40" width="1.6" height="3.0" fill="#60bca8"/><rect x="739.33" y="437.40" width="1.6" height="3.0" fill="#5db8a9"/><rect x="742.78" y="437.40" width="1.6" height="3.0" fill="#80cca5"/><rect x="746.24" y="437.40" width="1.6" height="3.0" fill="#79c9a5"/><rect x="749.69" y="437.40" width="1.6" height="3.0" fill="#5cb6aa"/><rect x="753.14" y="437.40" width="1.6" height="3.0" fill="#4199b6"/><rect x="756.60" y="437.40" width="1.6" height="3.0" fill="#4199b6"/><rect x="760.06" y="437.40" width="1.6" height="3.0" fill="#3980b9"/><rect x="763.51" y="437.40" width="1.6" height="3.0" fill="#3782ba"/><rect x="766.97" y="437.40" width="1.6" height="3.0" fill="#459db4"/><rect x="770.42" y="437.40" width="1.6" height="3.0" fill="#3389bc"/><rect x="773.88" y="437.40" width="1.6" height="3.0" fill="#3d95b8"/><rect x="777.33" y="437.40" width="1.6" height="3.0" fill="#459db4"/><rect x="780.79" y="437.40" width="1.6" height="3.0" fill="#4199b6"/><rect x="784.24" y="437.40" width="1.6" height="3.0" fill="#3a90b9"/><rect x="787.70" y="437.40" width="1.6" height="3.0" fill="#3f97b7"/><rect x="791.15" y="437.40" width="1.6" height="3.0" fill="#3f96b7"/><rect x="794.61" y="437.40" width="1.6" height="3.0" fill="#459eb4"/><rect x="798.06" y="437.40" width="1.6" height="3.0" fill="#338abc"/><rect x="801.51" y="437.40" width="1.6" height="3.0" fill="#378ebb"/><rect x="804.97" y="437.40" width="1.6" height="3.0" fill="#3683bb"/><rect x="808.43" y="437.40" width="1.6" height="3.0" fill="#3584bb"/><rect x="811.88" y="437.40" width="1.6" height="3.0" fill="#3d94b8"/><rect x="815.34" y="437.40" width="1.6" height="3.0" fill="#4076b4"/><rect x="818.79" y="437.40" width="1.6" height="3.0" fill="#479fb3"/><rect x="822.25" y="437.40" width="1.6" height="3.0" fill="#368cbb"/><rect x="825.70" y="437.40" width="1.6" height="3.0" fill="#3b92b9"/><rect x="829.16" y="437.40" width="1.6" height="3.0" fill="#368cbb"/><rect x="832.61" y="437.40" width="1.6" height="3.0" fill="#429ab6"/><rect x="836.07" y="437.40" width="1.6" height="3.0" fill="#3e79b6"/><rect x="839.52" y="437.40" width="1.6" height="3.0" fill="#378ebb"/><rect x="842.98" y="437.40" width="1.6" height="3.0" fill="#459eb4"/><rect x="846.43" y="437.40" width="1.6" height="3.0" fill="#3683bb"/><rect x="849.88" y="437.40" width="1.6" height="3.0" fill="#439bb5"/><rect x="853.34" y="437.40" width="1.6" height="3.0" fill="#3486bc"/><rect x="856.80" y="437.40" width="1.6" height="3.0" fill="#398fba"/><rect x="860.25" y="437.40" width="1.6" height="3.0" fill="#3584bb"/><rect x="863.71" y="437.40" width="1.6" height="3.0" fill="#4273b3"/><rect x="867.16" y="437.40" width="1.6" height="3.0" fill="#3d79b6"/><rect x="870.62" y="437.40" width="1.6" height="3.0" fill="#358cbb"/><rect x="874.07" y="437.40" width="1.6" height="3.0" fill="#3d7ab6"/><rect x="877.53" y="437.40" width="1.6" height="3.0" fill="#3782ba"/><rect x="880.98" y="437.40" width="1.6" height="3.0" fill="#378eba"/><rect x="884.44" y="437.40" width="1.6" height="3.0" fill="#4199b6"/><rect x="887.89" y="437.40" width="1.6" height="3.0" fill="#3584bb"/><rect x="65.60" y="432.90" width="1.6" height="3.0" fill="#fff8b3"/><rect x="69.06" y="432.90" width="1.6" height="3.0" fill="#fbfdb9"/><rect x="72.51" y="432.90" width="1.6" height="3.0" fill="#fbfdb8"/><rect x="75.97" y="432.90" width="1.6" height="3.0" fill="#fff9b5"/><rect x="79.42" y="432.90" width="1.6" height="3.0" fill="#fff1a8"/><rect x="82.88" y="432.90" width="1.6" height="3.0" fill="#fdfebb"/><rect x="86.33" y="432.90" width="1.6" height="3.0" fill="#fee695"/><rect x="89.79" y="432.90" width="1.6" height="3.0" fill="#feea9b"/><rect x="93.24" y="432.90" width="1.6" height="3.0" fill="#fff8b3"/><rect x="96.70" y="432.90" width="1.6" height="3.0" fill="#fff9b5"/><rect x="100.15" y="432.90" width="1.6" height="3.0" fill="#feeb9d"/><rect x="103.61" y="432.90" width="1.6" height="3.0" fill="#fffab6"/><rect x="107.06" y="432.90" width="1.6" height="3.0" fill="#fdfebb"/><rect x="110.52" y="432.90" width="1.6" height="3.0" fill="#fff2a9"/><rect x="113.97" y="432.90" width="1.6" height="3.0" fill="#fff4ac"/><rect x="117.43" y="432.90" width="1.6" height="3.0" fill="#feeda1"/><rect x="120.88" y="432.90" width="1.6" height="3.0" fill="#feefa5"/><rect x="124.34" y="432.90" width="1.6" height="3.0" fill="#fbfdb8"/><rect x="127.79" y="432.90" width="1.6" height="3.0" fill="#fff2a9"/><rect x="131.25" y="432.90" width="1.6" height="3.0" fill="#fbfdb9"/><rect x="134.70" y="432.90" width="1.6" height="3.0" fill="#fcfebb"/><rect x="138.16" y="432.90" width="1.6" height="3.0" fill="#fff9b4"/><rect x="141.61" y="432.90" width="1.6" height="3.0" fill="#feeea3"/><rect x="145.06" y="432.90" width="1.6" height="3.0" fill="#fafdb8"/><rect x="148.52" y="432.90" width="1.6" height="3.0" fill="#fff6af"/><rect x="151.97" y="432.90" width="1.6" height="3.0" fill="#fff3ab"/><rect x="155.43" y="432.90" width="1.6" height="3.0" fill="#fff0a6"/><rect x="158.88" y="432.90" width="1.6" height="3.0" fill="#fafdb8"/><rect x="162.34" y="432.90" width="1.6" height="3.0" fill="#fff5af"/><rect x="165.80" y="432.90" width="1.6" height="3.0" fill="#feefa4"/><rect x="169.25" y="432.90" width="1.6" height="3.0" fill="#fff5ae"/><rect x="172.70" y="432.90" width="1.6" height="3.0" fill="#feea9c"/><rect x="176.16" y="432.90" width="1.6" height="3.0" fill="#fff9b6"/><rect x="179.62" y="432.90" width="1.6" height="3.0" fill="#fff4ac"/><rect x="183.07" y="432.90" width="1.6" height="3.0" fill="#feefa5"/><rect x="186.52" y="432.90" width="1.6" height="3.0" fill="#fffebe"/><rect x="189.98" y="432.90" width="1.6" height="3.0" fill="#feffbe"/><rect x="193.44" y="432.90" width="1.6" height="3.0" fill="#fee796"/><rect x="196.89" y="432.90" width="1.6" height="3.0" fill="#fff7b1"/><rect x="200.34" y="432.90" width="1.6" height="3.0" fill="#feefa4"/><rect x="203.80" y="432.90" width="1.6" height="3.0" fill="#fcfeba"/><rect x="207.25" y="432.90" width="1.6" height="3.0" fill="#fffebe"/><rect x="210.71" y="432.90" width="1.6" height="3.0" fill="#feeea2"/><rect x="214.16" y="432.90" width="1.6" height="3.0" fill="#feeea3"/><rect x="217.62" y="432.90" width="1.6" height="3.0" fill="#feeb9d"/><rect x="221.07" y="432.90" width="1.6" height="3.0" fill="#fafdb8"/><rect x="224.53" y="432.90" width="1.6" height="3.0" fill="#feefa5"/><rect x="227.98" y="432.90" width="1.6" height="3.0" fill="#fff9b5"/><rect x="231.44" y="432.90" width="1.6" height="3.0" fill="#fff5ae"/><rect x="234.90" y="432.90" width="1.6" height="3.0" fill="#fffab7"/><rect x="238.35" y="432.90" width="1.6" height="3.0" fill="#fff9b5"/><rect x="241.81" y="432.90" width="1.6" height="3.0" fill="#fffdbc"/><rect x="245.26" y="432.90" width="1.6" height="3.0" fill="#feea9c"/><rect x="248.72" y="432.90" width="1.6" height="3.0" fill="#fffebd"/><rect x="252.17" y="432.90" width="1.6" height="3.0" fill="#fbfdb8"/><rect x="255.62" y="432.90" width="1.6" height="3.0" fill="#eff9a6"/><rect x="259.08" y="432.90" width="1.6" height="3.0" fill="#f4fbae"/><rect x="262.54" y="432.90" width="1.6" height="3.0" fill="#f5fbb0"/><rect x="265.99" y="432.90" width="1.6" height="3.0" fill="#eff9a6"/><rect x="269.44" y="432.90" width="1.6" height="3.0" fill="#f1f9a9"/><rect x="272.90" y="432.90" width="1.6" height="3.0" fill="#f3faad"/><rect x="276.35" y="432.90" width="1.6" height="3.0" fill="#eaf79e"/><rect x="279.81" y="432.90" width="1.6" height="3.0" fill="#eef8a4"/><rect x="283.26" y="432.90" width="1.6" height="3.0" fill="#fcfeba"/><rect x="286.72" y="432.90" width="1.6" height="3.0" fill="#f6fbb1"/><rect x="290.18" y="432.90" width="1.6" height="3.0" fill="#f1f9a9"/><rect x="293.63" y="432.90" width="1.6" height="3.0" fill="#e5f598"/><rect x="297.08" y="432.90" width="1.6" height="3.0" fill="#e6f598"/><rect x="300.54" y="432.90" width="1.6" height="3.0" fill="#eff9a6"/><rect x="304.00" y="432.90" width="1.6" height="3.0" fill="#fcfebb"/><rect x="307.45" y="432.90" width="1.6" height="3.0" fill="#e9f69d"/><rect x="310.91" y="432.90" width="1.6" height="3.0" fill="#f2faaa"/><rect x="314.36" y="432.90" width="1.6" height="3.0" fill="#eef8a5"/><rect x="317.81" y="432.90" width="1.6" height="3.0" fill="#ebf79f"/><rect x="321.27" y="432.90" width="1.6" height="3.0" fill="#edf8a2"/><rect x="324.72" y="432.90" width="1.6" height="3.0" fill="#f0f9a8"/><rect x="328.18" y="432.90" width="1.6" height="3.0" fill="#e5f598"/><rect x="331.64" y="432.90" width="1.6" height="3.0" fill="#f3faac"/><rect x="335.09" y="432.90" width="1.6" height="3.0" fill="#f3faac"/><rect x="338.55" y="432.90" width="1.6" height="3.0" fill="#e7f59a"/><rect x="342.00" y="432.90" width="1.6" height="3.0" fill="#f8fcb3"/><rect x="345.45" y="432.90" width="1.6" height="3.0" fill="#f5fbb0"/><rect x="348.91" y="432.90" width="1.6" height="3.0" fill="#e8f69b"/><rect x="352.36" y="432.90" width="1.6" height="3.0" fill="#fbfdb9"/><rect x="355.82" y="432.90" width="1.6" height="3.0" fill="#e8f69a"/><rect x="359.28" y="432.90" width="1.6" height="3.0" fill="#ebf7a0"/><rect x="362.73" y="432.90" width="1.6" height="3.0" fill="#f2faaa"/><rect x="366.19" y="432.90" width="1.6" height="3.0" fill="#f5fbb0"/><rect x="369.64" y="432.90" width="1.6" height="3.0" fill="#e9f69d"/><rect x="373.09" y="432.90" width="1.6" height="3.0" fill="#e5f598"/><rect x="376.55" y="432.90" width="1.6" height="3.0" fill="#f9fdb6"/><rect x="380.01" y="432.90" width="1.6" height="3.0" fill="#f1f9a8"/><rect x="383.46" y="432.90" width="1.6" height="3.0" fill="#eff9a6"/><rect x="386.92" y="432.90" width="1.6" height="3.0" fill="#f0f9a8"/><rect x="390.37" y="432.90" width="1.6" height="3.0" fill="#f4fbae"/><rect x="393.82" y="432.90" width="1.6" height="3.0" fill="#f9fcb5"/><rect x="397.28" y="432.90" width="1.6" height="3.0" fill="#eef8a4"/><rect x="400.73" y="432.90" width="1.6" height="3.0" fill="#e8f69b"/><rect x="404.19" y="432.90" width="1.6" height="3.0" fill="#fbfdb8"/><rect x="407.65" y="432.90" width="1.6" height="3.0" fill="#f7fcb2"/><rect x="411.10" y="432.90" width="1.6" height="3.0" fill="#e8f69b"/><rect x="414.56" y="432.90" width="1.6" height="3.0" fill="#e9f69c"/><rect x="418.01" y="432.90" width="1.6" height="3.0" fill="#ecf7a1"/><rect x="421.46" y="432.90" width="1.6" height="3.0" fill="#fcfeba"/><rect x="424.92" y="432.90" width="1.6" height="3.0" fill="#eaf79f"/><rect x="428.38" y="432.90" width="1.6" height="3.0" fill="#e1f399"/><rect x="431.83" y="432.90" width="1.6" height="3.0" fill="#e0f399"/><rect x="435.29" y="432.90" width="1.6" height="3.0" fill="#ebf7a0"/><rect x="438.74" y="432.90" width="1.6" height="3.0" fill="#fbfeb9"/><rect x="442.19" y="432.90" width="1.6" height="3.0" fill="#e7f69a"/><rect x="445.65" y="432.90" width="1.6" height="3.0" fill="#f7fcb3"/><rect x="449.10" y="432.90" width="1.6" height="3.0" fill="#ecf8a2"/><rect x="452.56" y="432.90" width="1.6" height="3.0" fill="#e3f499"/><rect x="456.02" y="432.90" width="1.6" height="3.0" fill="#ebf79f"/><rect x="459.47" y="432.90" width="1.6" height="3.0" fill="#f9fdb6"/><rect x="462.93" y="432.90" width="1.6" height="3.0" fill="#f5fbb0"/><rect x="466.38" y="432.90" width="1.6" height="3.0" fill="#e5f598"/><rect x="469.83" y="432.90" width="1.6" height="3.0" fill="#f9fdb5"/><rect x="473.29" y="432.90" width="1.6" height="3.0" fill="#edf8a3"/><rect x="476.74" y="432.90" width="1.6" height="3.0" fill="#f2faab"/><rect x="480.20" y="432.90" width="1.6" height="3.0" fill="#f8fcb5"/><rect x="483.66" y="432.90" width="1.6" height="3.0" fill="#edf8a3"/><rect x="487.11" y="432.90" width="1.6" height="3.0" fill="#fbfeb9"/><rect x="490.56" y="432.90" width="1.6" height="3.0" fill="#fafdb7"/><rect x="494.02" y="432.90" width="1.6" height="3.0" fill="#f3faac"/><rect x="497.47" y="432.90" width="1.6" height="3.0" fill="#fbfdb8"/><rect x="500.93" y="432.90" width="1.6" height="3.0" fill="#fbfdb9"/><rect x="504.39" y="432.90" width="1.6" height="3.0" fill="#eef8a5"/><rect x="507.84" y="432.90" width="1.6" height="3.0" fill="#eaf79e"/><rect x="511.30" y="432.90" width="1.6" height="3.0" fill="#e7f599"/><rect x="514.75" y="432.90" width="1.6" height="3.0" fill="#f9fdb6"/><rect x="518.21" y="432.90" width="1.6" height="3.0" fill="#f2faaa"/><rect x="521.66" y="432.90" width="1.6" height="3.0" fill="#f5fbaf"/><rect x="525.12" y="432.90" width="1.6" height="3.0" fill="#edf8a4"/><rect x="528.57" y="432.90" width="1.6" height="3.0" fill="#f0f9a8"/><rect x="532.03" y="432.90" width="1.6" height="3.0" fill="#e4f498"/><rect x="535.48" y="432.90" width="1.6" height="3.0" fill="#f3faad"/><rect x="538.94" y="432.90" width="1.6" height="3.0" fill="#fbfdb9"/><rect x="542.39" y="432.90" width="1.6" height="3.0" fill="#ebf7a0"/><rect x="545.85" y="432.90" width="1.6" height="3.0" fill="#f9fcb5"/><rect x="549.30" y="432.90" width="1.6" height="3.0" fill="#edf8a2"/><rect x="552.76" y="432.90" width="1.6" height="3.0" fill="#f0f9a7"/><rect x="556.21" y="432.90" width="1.6" height="3.0" fill="#e5f598"/><rect x="559.67" y="432.90" width="1.6" height="3.0" fill="#fdfebc"/><rect x="563.12" y="432.90" width="1.6" height="3.0" fill="#feeb9e"/><rect x="566.58" y="432.90" width="1.6" height="3.0" fill="#fdb86a"/><rect x="570.03" y="432.90" width="1.6" height="3.0" fill="#fdc070"/><rect x="573.49" y="432.90" width="1.6" height="3.0" fill="#fdb163"/><rect x="576.94" y="432.90" width="1.6" height="3.0" fill="#feca78"/><rect x="580.39" y="432.90" width="1.6" height="3.0" fill="#fdbe6e"/><rect x="583.85" y="432.90" width="1.6" height="3.0" fill="#fcaa5f"/><rect x="587.31" y="432.90" width="1.6" height="3.0" fill="#fdb062"/><rect x="590.76" y="432.90" width="1.6" height="3.0" fill="#fdb768"/><rect x="594.22" y="432.90" width="1.6" height="3.0" fill="#fec978"/><rect x="597.67" y="432.90" width="1.6" height="3.0" fill="#fdad60"/><rect x="601.12" y="432.90" width="1.6" height="3.0" fill="#fec877"/><rect x="604.58" y="432.90" width="1.6" height="3.0" fill="#fdc574"/><rect x="608.04" y="432.90" width="1.6" height="3.0" fill="#fca75e"/><rect x="611.49" y="432.90" width="1.6" height="3.0" fill="#fdc575"/><rect x="614.95" y="432.90" width="1.6" height="3.0" fill="#fca75e"/><rect x="618.40" y="432.90" width="1.6" height="3.0" fill="#fca95f"/><rect x="621.86" y="432.90" width="1.6" height="3.0" fill="#fdc272"/><rect x="625.31" y="432.90" width="1.6" height="3.0" fill="#fdb063"/><rect x="628.76" y="432.90" width="1.6" height="3.0" fill="#fed07d"/><rect x="632.22" y="432.90" width="1.6" height="3.0" fill="#fdbc6d"/><rect x="635.68" y="432.90" width="1.6" height="3.0" fill="#fdb466"/><rect x="639.13" y="432.90" width="1.6" height="3.0" fill="#fecc7a"/><rect x="642.59" y="432.90" width="1.6" height="3.0" fill="#fba35c"/><rect x="646.04" y="432.90" width="1.6" height="3.0" fill="#fec877"/><rect x="649.50" y="432.90" width="1.6" height="3.0" fill="#fca45d"/><rect x="652.95" y="432.90" width="1.6" height="3.0" fill="#fdab60"/><rect x="656.41" y="432.90" width="1.6" height="3.0" fill="#fed481"/><rect x="659.86" y="432.90" width="1.6" height="3.0" fill="#fdc675"/><rect x="663.32" y="432.90" width="1.6" height="3.0" fill="#fdaf62"/><rect x="666.77" y="432.90" width="1.6" height="3.0" fill="#fca95e"/><rect x="670.23" y="432.90" width="1.6" height="3.0" fill="#fed581"/><rect x="673.68" y="432.90" width="1.6" height="3.0" fill="#fdc575"/><rect x="677.13" y="432.90" width="1.6" height="3.0" fill="#fecd7b"/><rect x="680.59" y="432.90" width="1.6" height="3.0" fill="#fcaa5f"/><rect x="684.05" y="432.90" width="1.6" height="3.0" fill="#fdc373"/><rect x="687.50" y="432.90" width="1.6" height="3.0" fill="#fdb667"/><rect x="690.96" y="432.90" width="1.6" height="3.0" fill="#fdb062"/><rect x="694.41" y="432.90" width="1.6" height="3.0" fill="#fdb567"/><rect x="697.87" y="432.90" width="1.6" height="3.0" fill="#fdc372"/><rect x="701.32" y="432.90" width="1.6" height="3.0" fill="#fdb567"/><rect x="704.78" y="432.90" width="1.6" height="3.0" fill="#fdb769"/><rect x="708.23" y="432.90" width="1.6" height="3.0" fill="#fcaa5f"/><rect x="711.69" y="432.90" width="1.6" height="3.0" fill="#fece7c"/><rect x="715.14" y="432.90" width="1.6" height="3.0" fill="#fdc474"/><rect x="718.60" y="432.90" width="1.6" height="3.0" fill="#fecc7a"/><rect x="722.05" y="432.90" width="1.6" height="3.0" fill="#fdba6b"/><rect x="725.50" y="432.90" width="1.6" height="3.0" fill="#fecf7c"/><rect x="728.96" y="432.90" width="1.6" height="3.0" fill="#fdbe6e"/><rect x="732.42" y="432.90" width="1.6" height="3.0" fill="#fdc271"/><rect x="735.87" y="432.90" width="1.6" height="3.0" fill="#fdc171"/><rect x="739.33" y="432.90" width="1.6" height="3.0" fill="#fec978"/><rect x="742.78" y="432.90" width="1.6" height="3.0" fill="#fdb869"/><rect x="746.24" y="432.90" width="1.6" height="3.0" fill="#fca75e"/><rect x="749.69" y="432.90" width="1.6" height="3.0" fill="#fdc272"/><rect x="753.14" y="432.90" width="1.6" height="3.0" fill="#feeb9e"/><rect x="756.60" y="432.90" width="1.6" height="3.0" fill="#ffffbf"/><rect x="760.06" y="432.90" width="1.6" height="3.0" fill="#e6f598"/><rect x="763.51" y="432.90" width="1.6" height="3.0" fill="#f0f9a8"/><rect x="766.97" y="432.90" width="1.6" height="3.0" fill="#e9f69d"/><rect x="770.42" y="432.90" width="1.6" height="3.0" fill="#fcfebb"/><rect x="773.88" y="432.90" width="1.6" height="3.0" fill="#f1f9a9"/><rect x="777.33" y="432.90" width="1.6" height="3.0" fill="#e6f598"/><rect x="780.79" y="432.90" width="1.6" height="3.0" fill="#edf8a3"/><rect x="784.24" y="432.90" width="1.6" height="3.0" fill="#f2faaa"/><rect x="787.70" y="432.90" width="1.6" height="3.0" fill="#f1f9a9"/><rect x="791.15" y="432.90" width="1.6" height="3.0" fill="#fafdb7"/><rect x="794.61" y="432.90" width="1.6" height="3.0" fill="#f9fcb5"/><rect x="798.06" y="432.90" width="1.6" height="3.0" fill="#f9fcb5"/><rect x="801.51" y="432.90" width="1.6" height="3.0" fill="#f3faac"/><rect x="804.97" y="432.90" width="1.6" height="3.0" fill="#f3faac"/><rect x="808.43" y="432.90" width="1.6" height="3.0" fill="#e6f599"/><rect x="811.88" y="432.90" width="1.6" height="3.0" fill="#f9fcb5"/><rect x="815.34" y="432.90" width="1.6" height="3.0" fill="#f6fbb1"/><rect x="818.79" y="432.90" width="1.6" height="3.0" fill="#f6fbb0"/><rect x="822.25" y="432.90" width="1.6" height="3.0" fill="#f8fcb5"/><rect x="825.70" y="432.90" width="1.6" height="3.0" fill="#f5fbb0"/><rect x="829.16" y="432.90" width="1.6" height="3.0" fill="#f7fcb2"/><rect x="832.61" y="432.90" width="1.6" height="3.0" fill="#f0f9a8"/><rect x="836.07" y="432.90" width="1.6" height="3.0" fill="#fcfeba"/><rect x="839.52" y="432.90" width="1.6" height="3.0" fill="#e5f498"/><rect x="842.98" y="432.90" width="1.6" height="3.0" fill="#f3faad"/><rect x="846.43" y="432.90" width="1.6" height="3.0" fill="#e4f498"/><rect x="849.88" y="432.90" width="1.6" height="3.0" fill="#ebf7a0"/><rect x="853.34" y="432.90" width="1.6" height="3.0" fill="#ecf7a1"/><rect x="856.80" y="432.90" width="1.6" height="3.0" fill="#f1f9a9"/><rect x="860.25" y="432.90" width="1.6" height="3.0" fill="#e3f499"/><rect x="863.71" y="432.90" width="1.6" height="3.0" fill="#fafdb7"/><rect x="867.16" y="432.90" width="1.6" height="3.0" fill="#ecf7a1"/><rect x="870.62" y="432.90" width="1.6" height="3.0" fill="#f5fbb0"/><rect x="874.07" y="432.90" width="1.6" height="3.0" fill="#ecf7a1"/><rect x="877.53" y="432.90" width="1.6" height="3.0" fill="#eaf79f"/><rect x="880.98" y="432.90" width="1.6" height="3.0" fill="#f8fcb5"/><rect x="884.44" y="432.90" width="1.6" height="3.0" fill="#f7fcb3"/><rect x="887.89" y="432.90" width="1.6" height="3.0" fill="#fcfeba"/><rect x="65.60" y="427.90" width="1.6" height="3.0" fill="#f06744"/><rect x="69.06" y="427.90" width="1.6" height="3.0" fill="#eb5f47"/><rect x="72.51" y="427.90" width="1.6" height="3.0" fill="#f57245"/><rect x="75.97" y="427.90" width="1.6" height="3.0" fill="#fb9f5a"/><rect x="79.42" y="427.90" width="1.6" height="3.0" fill="#f46f44"/><rect x="82.88" y="427.90" width="1.6" height="3.0" fill="#f36c43"/><rect x="86.33" y="427.90" width="1.6" height="3.0" fill="#f57848"/><rect x="89.79" y="427.90" width="1.6" height="3.0" fill="#f26a44"/><rect x="93.24" y="427.90" width="1.6" height="3.0" fill="#f88c51"/><rect x="96.70" y="427.90" width="1.6" height="3.0" fill="#f88b51"/><rect x="100.15" y="427.90" width="1.6" height="3.0" fill="#ee6345"/><rect x="103.61" y="427.90" width="1.6" height="3.0" fill="#f16844"/><rect x="107.06" y="427.90" width="1.6" height="3.0" fill="#f8874f"/><rect x="110.52" y="427.90" width="1.6" height="3.0" fill="#fb9c59"/><rect x="113.97" y="427.90" width="1.6" height="3.0" fill="#f7854e"/><rect x="117.43" y="427.90" width="1.6" height="3.0" fill="#f57547"/><rect x="120.88" y="427.90" width="1.6" height="3.0" fill="#fb9f5a"/><rect x="124.34" y="427.90" width="1.6" height="3.0" fill="#e85b48"/><rect x="127.79" y="427.90" width="1.6" height="3.0" fill="#ea5e47"/><rect x="131.25" y="427.90" width="1.6" height="3.0" fill="#f99053"/><rect x="134.70" y="427.90" width="1.6" height="3.0" fill="#f57346"/><rect x="138.16" y="427.90" width="1.6" height="3.0" fill="#e95d47"/><rect x="141.61" y="427.90" width="1.6" height="3.0" fill="#f67e4b"/><rect x="145.06" y="427.90" width="1.6" height="3.0" fill="#fba05b"/><rect x="148.52" y="427.90" width="1.6" height="3.0" fill="#f67b4a"/><rect x="151.97" y="427.90" width="1.6" height="3.0" fill="#f46e44"/><rect x="155.43" y="427.90" width="1.6" height="3.0" fill="#eb5f46"/><rect x="158.88" y="427.90" width="1.6" height="3.0" fill="#ea5e47"/><rect x="162.34" y="427.90" width="1.6" height="3.0" fill="#fa9957"/><rect x="165.80" y="427.90" width="1.6" height="3.0" fill="#f67949"/><rect x="169.25" y="427.90" width="1.6" height="3.0" fill="#fb9c59"/><rect x="172.70" y="427.90" width="1.6" height="3.0" fill="#ea5d47"/><rect x="176.16" y="427.90" width="1.6" height="3.0" fill="#f16844"/><rect x="179.62" y="427.90" width="1.6" height="3.0" fill="#e95d47"/><rect x="183.07" y="427.90" width="1.6" height="3.0" fill="#f57245"/><rect x="186.52" y="427.90" width="1.6" height="3.0" fill="#ea5e47"/><rect x="189.98" y="427.90" width="1.6" height="3.0" fill="#f16944"/><rect x="193.44" y="427.90" width="1.6" height="3.0" fill="#f57346"/><rect x="196.89" y="427.90" width="1.6" height="3.0" fill="#f36b43"/><rect x="200.34" y="427.90" width="1.6" height="3.0" fill="#ea5d47"/><rect x="203.80" y="427.90" width="1.6" height="3.0" fill="#e95c47"/><rect x="207.25" y="427.90" width="1.6" height="3.0" fill="#fb9f5a"/><rect x="210.71" y="427.90" width="1.6" height="3.0" fill="#ee6445"/><rect x="214.16" y="427.90" width="1.6" height="3.0" fill="#f67b49"/><rect x="217.62" y="427.90" width="1.6" height="3.0" fill="#f57245"/><rect x="221.07" y="427.90" width="1.6" height="3.0" fill="#f67c4a"/><rect x="224.53" y="427.90" width="1.6" height="3.0" fill="#eb5f47"/><rect x="227.98" y="427.90" width="1.6" height="3.0" fill="#f36c43"/><rect x="231.44" y="427.90" width="1.6" height="3.0" fill="#ec6046"/><rect x="234.90" y="427.90" width="1.6" height="3.0" fill="#f67d4b"/><rect x="238.35" y="427.90" width="1.6" height="3.0" fill="#fa9b58"/><rect x="241.81" y="427.90" width="1.6" height="3.0" fill="#f7824d"/><rect x="245.26" y="427.90" width="1.6" height="3.0" fill="#fa9656"/><rect x="248.72" y="427.90" width="1.6" height="3.0" fill="#f06645"/><rect x="252.17" y="427.90" width="1.6" height="3.0" fill="#feca78"/><rect x="255.62" y="427.90" width="1.6" height="3.0" fill="#fffab7"/><rect x="259.08" y="427.90" width="1.6" height="3.0" fill="#fff8b4"/><rect x="262.54" y="427.90" width="1.6" height="3.0" fill="#fffbb9"/><rect x="265.99" y="427.90" width="1.6" height="3.0" fill="#fff4ad"/><rect x="269.44" y="427.90" width="1.6" height="3.0" fill="#fffdbc"/><rect x="272.90" y="427.90" width="1.6" height="3.0" fill="#fdfebc"/><rect x="276.35" y="427.90" width="1.6" height="3.0" fill="#f8fcb3"/><rect x="279.81" y="427.90" width="1.6" height="3.0" fill="#fff2a9"/><rect x="283.26" y="427.90" width="1.6" height="3.0" fill="#fff7b1"/><rect x="286.72" y="427.90" width="1.6" height="3.0" fill="#fafdb8"/><rect x="290.18" y="427.90" width="1.6" height="3.0" fill="#feefa3"/><rect x="293.63" y="427.90" width="1.6" height="3.0" fill="#feeb9d"/><rect x="297.08" y="427.90" width="1.6" height="3.0" fill="#fff2a9"/><rect x="300.54" y="427.90" width="1.6" height="3.0" fill="#fee99b"/><rect x="304.00" y="427.90" width="1.6" height="3.0" fill="#fcfeba"/><rect x="307.45" y="427.90" width="1.6" height="3.0" fill="#fafdb8"/><rect x="310.91" y="427.90" width="1.6" height="3.0" fill="#fff2a9"/><rect x="314.36" y="427.90" width="1.6" height="3.0" fill="#feeb9e"/><rect x="317.81" y="427.90" width="1.6" height="3.0" fill="#fee99b"/><rect x="321.27" y="427.90" width="1.6" height="3.0" fill="#feefa5"/><rect x="324.72" y="427.90" width="1.6" height="3.0" fill="#fee99b"/><rect x="328.18" y="427.90" width="1.6" height="3.0" fill="#fff6b0"/><rect x="331.64" y="427.90" width="1.6" height="3.0" fill="#fffcb9"/><rect x="335.09" y="427.90" width="1.6" height="3.0" fill="#feefa5"/><rect x="338.55" y="427.90" width="1.6" height="3.0" fill="#fee899"/><rect x="342.00" y="427.90" width="1.6" height="3.0" fill="#feffbd"/><rect x="345.45" y="427.90" width="1.6" height="3.0" fill="#fee898"/><rect x="348.91" y="427.90" width="1.6" height="3.0" fill="#feeea2"/><rect x="352.36" y="427.90" width="1.6" height="3.0" fill="#fff1a7"/><rect x="355.82" y="427.90" width="1.6" height="3.0" fill="#fff4ad"/><rect x="359.28" y="427.90" width="1.6" height="3.0" fill="#feea9c"/><rect x="362.73" y="427.90" width="1.6" height="3.0" fill="#fff6b0"/><rect x="366.19" y="427.90" width="1.6" height="3.0" fill="#fff2a9"/><rect x="369.64" y="427.90" width="1.6" height="3.0" fill="#fcfebb"/><rect x="373.09" y="427.90" width="1.6" height="3.0" fill="#fffbb8"/><rect x="376.55" y="427.90" width="1.6" height="3.0" fill="#f8fcb4"/><rect x="380.01" y="427.90" width="1.6" height="3.0" fill="#ffffbe"/><rect x="383.46" y="427.90" width="1.6" height="3.0" fill="#fcfebb"/><rect x="386.92" y="427.90" width="1.6" height="3.0" fill="#fffcb9"/><rect x="390.37" y="427.90" width="1.6" height="3.0" fill="#fff7b1"/><rect x="393.82" y="427.90" width="1.6" height="3.0" fill="#fafdb8"/><rect x="397.28" y="427.90" width="1.6" height="3.0" fill="#ffffbe"/><rect x="400.73" y="427.90" width="1.6" height="3.0" fill="#f6fcb2"/><rect x="404.19" y="427.90" width="1.6" height="3.0" fill="#fdfebc"/><rect x="407.65" y="427.90" width="1.6" height="3.0" fill="#feffbd"/><rect x="411.10" y="427.90" width="1.6" height="3.0" fill="#fff0a6"/><rect x="414.56" y="427.90" width="1.6" height="3.0" fill="#fbfdb8"/><rect x="418.01" y="427.90" width="1.6" height="3.0" fill="#fff4ad"/><rect x="421.46" y="427.90" width="1.6" height="3.0" fill="#feeb9e"/><rect x="424.92" y="427.90" width="1.6" height="3.0" fill="#fee99a"/><rect x="428.38" y="427.90" width="1.6" height="3.0" fill="#feeda0"/><rect x="431.83" y="427.90" width="1.6" height="3.0" fill="#fff0a6"/><rect x="435.29" y="427.90" width="1.6" height="3.0" fill="#ffffbf"/><rect x="438.74" y="427.90" width="1.6" height="3.0" fill="#fff1a7"/><rect x="442.19" y="427.90" width="1.6" height="3.0" fill="#fee999"/><rect x="445.65" y="427.90" width="1.6" height="3.0" fill="#fcfeba"/><rect x="449.10" y="427.90" width="1.6" height="3.0" fill="#fffbb8"/><rect x="452.56" y="427.90" width="1.6" height="3.0" fill="#fee797"/><rect x="456.02" y="427.90" width="1.6" height="3.0" fill="#fee899"/><rect x="459.47" y="427.90" width="1.6" height="3.0" fill="#feeb9e"/><rect x="462.93" y="427.90" width="1.6" height="3.0" fill="#fff3ac"/><rect x="466.38" y="427.90" width="1.6" height="3.0" fill="#f9fdb6"/><rect x="469.83" y="427.90" width="1.6" height="3.0" fill="#f7fcb2"/><rect x="473.29" y="427.90" width="1.6" height="3.0" fill="#fffdbc"/><rect x="476.74" y="427.90" width="1.6" height="3.0" fill="#feefa4"/><rect x="480.20" y="427.90" width="1.6" height="3.0" fill="#fff6b0"/><rect x="483.66" y="427.90" width="1.6" height="3.0" fill="#fff4ac"/><rect x="487.11" y="427.90" width="1.6" height="3.0" fill="#fff2aa"/><rect x="490.56" y="427.90" width="1.6" height="3.0" fill="#fee796"/><rect x="494.02" y="427.90" width="1.6" height="3.0" fill="#fffcba"/><rect x="497.47" y="427.90" width="1.6" height="3.0" fill="#fafdb8"/><rect x="500.93" y="427.90" width="1.6" height="3.0" fill="#fdfebc"/><rect x="504.39" y="427.90" width="1.6" height="3.0" fill="#feea9b"/><rect x="507.84" y="427.90" width="1.6" height="3.0" fill="#fffab6"/><rect x="511.30" y="427.90" width="1.6" height="3.0" fill="#feeda0"/><rect x="514.75" y="427.90" width="1.6" height="3.0" fill="#fefebd"/><rect x="518.21" y="427.90" width="1.6" height="3.0" fill="#fff7b1"/><rect x="521.66" y="427.90" width="1.6" height="3.0" fill="#f7fcb2"/><rect x="525.12" y="427.90" width="1.6" height="3.0" fill="#fbfdb9"/><rect x="528.57" y="427.90" width="1.6" height="3.0" fill="#feeb9d"/><rect x="532.03" y="427.90" width="1.6" height="3.0" fill="#fff2a9"/><rect x="535.48" y="427.90" width="1.6" height="3.0" fill="#f8fcb3"/><rect x="538.94" y="427.90" width="1.6" height="3.0" fill="#fff7b2"/><rect x="542.39" y="427.90" width="1.6" height="3.0" fill="#fff6b0"/><rect x="545.85" y="427.90" width="1.6" height="3.0" fill="#fff7b1"/><rect x="549.30" y="427.90" width="1.6" height="3.0" fill="#fcfeba"/><rect x="552.76" y="427.90" width="1.6" height="3.0" fill="#f7fcb2"/><rect x="556.21" y="427.90" width="1.6" height="3.0" fill="#fffab7"/><rect x="559.67" y="427.90" width="1.6" height="3.0" fill="#fff0a5"/><rect x="563.12" y="427.90" width="1.6" height="3.0" fill="#fca45c"/><rect x="566.58" y="427.90" width="1.6" height="3.0" fill="#d6404e"/><rect x="570.03" y="427.90" width="1.6" height="3.0" fill="#ea5e47"/><rect x="573.49" y="427.90" width="1.6" height="3.0" fill="#db484d"/><rect x="576.94" y="427.90" width="1.6" height="3.0" fill="#c8304c"/><rect x="580.39" y="427.90" width="1.6" height="3.0" fill="#f06745"/><rect x="583.85" y="427.90" width="1.6" height="3.0" fill="#c72e4c"/><rect x="587.31" y="427.90" width="1.6" height="3.0" fill="#e1504a"/><rect x="590.76" y="427.90" width="1.6" height="3.0" fill="#de4b4c"/><rect x="594.22" y="427.90" width="1.6" height="3.0" fill="#ed6246"/><rect x="597.67" y="427.90" width="1.6" height="3.0" fill="#da464d"/><rect x="601.12" y="427.90" width="1.6" height="3.0" fill="#d33b4e"/><rect x="604.58" y="427.90" width="1.6" height="3.0" fill="#d6404f"/><rect x="608.04" y="427.90" width="1.6" height="3.0" fill="#d23a4e"/><rect x="611.49" y="427.90" width="1.6" height="3.0" fill="#e1504b"/><rect x="614.95" y="427.90" width="1.6" height="3.0" fill="#d9444d"/><rect x="618.40" y="427.90" width="1.6" height="3.0" fill="#e85a48"/><rect x="621.86" y="427.90" width="1.6" height="3.0" fill="#d43d4f"/><rect x="625.31" y="427.90" width="1.6" height="3.0" fill="#d9444e"/><rect x="628.76" y="427.90" width="1.6" height="3.0" fill="#d53e4f"/><rect x="632.22" y="427.90" width="1.6" height="3.0" fill="#f06744"/><rect x="635.68" y="427.90" width="1.6" height="3.0" fill="#eb5f47"/><rect x="639.13" y="427.90" width="1.6" height="3.0" fill="#eb6046"/><rect x="642.59" y="427.90" width="1.6" height="3.0" fill="#e3534a"/><rect x="646.04" y="427.90" width="1.6" height="3.0" fill="#db474d"/><rect x="649.50" y="427.90" width="1.6" height="3.0" fill="#ce364d"/><rect x="652.95" y="427.90" width="1.6" height="3.0" fill="#eb5f47"/><rect x="656.41" y="427.90" width="1.6" height="3.0" fill="#de4c4c"/><rect x="659.86" y="427.90" width="1.6" height="3.0" fill="#c72e4c"/><rect x="663.32" y="427.90" width="1.6" height="3.0" fill="#d0384e"/><rect x="666.77" y="427.90" width="1.6" height="3.0" fill="#cb334d"/><rect x="670.23" y="427.90" width="1.6" height="3.0" fill="#e65848"/><rect x="673.68" y="427.90" width="1.6" height="3.0" fill="#ed6346"/><rect x="677.13" y="427.90" width="1.6" height="3.0" fill="#d23a4e"/><rect x="680.59" y="427.90" width="1.6" height="3.0" fill="#e95d47"/><rect x="684.05" y="427.90" width="1.6" height="3.0" fill="#d8424e"/><rect x="687.50" y="427.90" width="1.6" height="3.0" fill="#e55649"/><rect x="690.96" y="427.90" width="1.6" height="3.0" fill="#ec6146"/><rect x="694.41" y="427.90" width="1.6" height="3.0" fill="#e3534a"/><rect x="697.87" y="427.90" width="1.6" height="3.0" fill="#e95d47"/><rect x="701.32" y="427.90" width="1.6" height="3.0" fill="#da454d"/><rect x="704.78" y="427.90" width="1.6" height="3.0" fill="#c52c4b"/><rect x="708.23" y="427.90" width="1.6" height="3.0" fill="#df4d4b"/><rect x="711.69" y="427.90" width="1.6" height="3.0" fill="#e2514a"/><rect x="715.14" y="427.90" width="1.6" height="3.0" fill="#d1394e"/><rect x="718.60" y="427.90" width="1.6" height="3.0" fill="#da464d"/><rect x="722.05" y="427.90" width="1.6" height="3.0" fill="#d8424e"/><rect x="725.50" y="427.90" width="1.6" height="3.0" fill="#c62e4c"/><rect x="728.96" y="427.90" width="1.6" height="3.0" fill="#d7424e"/><rect x="732.42" y="427.90" width="1.6" height="3.0" fill="#da454d"/><rect x="735.87" y="427.90" width="1.6" height="3.0" fill="#dd4b4c"/><rect x="739.33" y="427.90" width="1.6" height="3.0" fill="#e65848"/><rect x="742.78" y="427.90" width="1.6" height="3.0" fill="#db464d"/><rect x="746.24" y="427.90" width="1.6" height="3.0" fill="#f06744"/><rect x="749.69" y="427.90" width="1.6" height="3.0" fill="#f99154"/><rect x="753.14" y="427.90" width="1.6" height="3.0" fill="#feda86"/><rect x="756.60" y="427.90" width="1.6" height="3.0" fill="#fff9b6"/><rect x="760.06" y="427.90" width="1.6" height="3.0" fill="#ffffbf"/><rect x="763.51" y="427.90" width="1.6" height="3.0" fill="#fffab7"/><rect x="766.97" y="427.90" width="1.6" height="3.0" fill="#fbfdb9"/><rect x="770.42" y="427.90" width="1.6" height="3.0" fill="#fff4ac"/><rect x="773.88" y="427.90" width="1.6" height="3.0" fill="#fffcba"/><rect x="777.33" y="427.90" width="1.6" height="3.0" fill="#ffffbe"/><rect x="780.79" y="427.90" width="1.6" height="3.0" fill="#fffab6"/><rect x="784.24" y="427.90" width="1.6" height="3.0" fill="#fff1a7"/><rect x="787.70" y="427.90" width="1.6" height="3.0" fill="#fee99a"/><rect x="791.15" y="427.90" width="1.6" height="3.0" fill="#fee99b"/><rect x="794.61" y="427.90" width="1.6" height="3.0" fill="#fff3ac"/><rect x="798.06" y="427.90" width="1.6" height="3.0" fill="#fffcba"/><rect x="801.51" y="427.90" width="1.6" height="3.0" fill="#fcfebb"/><rect x="804.97" y="427.90" width="1.6" height="3.0" fill="#fefebd"/><rect x="808.43" y="427.90" width="1.6" height="3.0" fill="#fff2a9"/><rect x="811.88" y="427.90" width="1.6" height="3.0" fill="#f7fcb3"/><rect x="815.34" y="427.90" width="1.6" height="3.0" fill="#fff0a7"/><rect x="818.79" y="427.90" width="1.6" height="3.0" fill="#fefebd"/><rect x="822.25" y="427.90" width="1.6" height="3.0" fill="#fee99a"/><rect x="825.70" y="427.90" width="1.6" height="3.0" fill="#fcfebb"/><rect x="829.16" y="427.90" width="1.6" height="3.0" fill="#ffffbf"/><rect x="832.61" y="427.90" width="1.6" height="3.0" fill="#f6fcb1"/><rect x="836.07" y="427.90" width="1.6" height="3.0" fill="#f8fcb4"/><rect x="839.52" y="427.90" width="1.6" height="3.0" fill="#feffbe"/><rect x="842.98" y="427.90" width="1.6" height="3.0" fill="#fafdb7"/><rect x="846.43" y="427.90" width="1.6" height="3.0" fill="#fdfebc"/><rect x="849.88" y="427.90" width="1.6" height="3.0" fill="#fffdbc"/><rect x="853.34" y="427.90" width="1.6" height="3.0" fill="#feeea2"/><rect x="856.80" y="427.90" width="1.6" height="3.0" fill="#fff9b6"/><rect x="860.25" y="427.90" width="1.6" height="3.0" fill="#f8fcb4"/><rect x="863.71" y="427.90" width="1.6" height="3.0" fill="#feefa4"/><rect x="867.16" y="427.90" width="1.6" height="3.0" fill="#f6fbb1"/><rect x="870.62" y="427.90" width="1.6" height="3.0" fill="#fffab7"/><rect x="874.07" y="427.90" width="1.6" height="3.0" fill="#fff5ae"/><rect x="877.53" y="427.90" width="1.6" height="3.0" fill="#fee696"/><rect x="880.98" y="427.90" width="1.6" height="3.0" fill="#fff5ae"/><rect x="884.44" y="427.90" width="1.6" height="3.0" fill="#feeda1"/><rect x="887.89" y="427.90" width="1.6" height="3.0" fill="#fffebe"/><rect x="65.60" y="423.00" width="1.6" height="3.0" fill="#abdda4"/><rect x="69.06" y="423.00" width="1.6" height="3.0" fill="#aadda4"/><rect x="72.51" y="423.00" width="1.6" height="3.0" fill="#bce4a1"/><rect x="75.97" y="423.00" width="1.6" height="3.0" fill="#c9e99e"/><rect x="79.42" y="423.00" width="1.6" height="3.0" fill="#daf09b"/><rect x="82.88" y="423.00" width="1.6" height="3.0" fill="#b7e2a1"/><rect x="86.33" y="423.00" width="1.6" height="3.0" fill="#bfe5a0"/><rect x="89.79" y="423.00" width="1.6" height="3.0" fill="#b6e1a2"/><rect x="93.24" y="423.00" width="1.6" height="3.0" fill="#caea9e"/><rect x="96.70" y="423.00" width="1.6" height="3.0" fill="#acdda4"/><rect x="100.15" y="423.00" width="1.6" height="3.0" fill="#d4ed9c"/><rect x="103.61" y="423.00" width="1.6" height="3.0" fill="#ceeb9d"/><rect x="107.06" y="423.00" width="1.6" height="3.0" fill="#d0ec9c"/><rect x="110.52" y="423.00" width="1.6" height="3.0" fill="#bbe4a1"/><rect x="113.97" y="423.00" width="1.6" height="3.0" fill="#abdda4"/><rect x="117.43" y="423.00" width="1.6" height="3.0" fill="#d6ef9b"/><rect x="120.88" y="423.00" width="1.6" height="3.0" fill="#bbe3a1"/><rect x="124.34" y="423.00" width="1.6" height="3.0" fill="#b3e0a2"/><rect x="127.79" y="423.00" width="1.6" height="3.0" fill="#d3ed9c"/><rect x="131.25" y="423.00" width="1.6" height="3.0" fill="#dcf19a"/><rect x="134.70" y="423.00" width="1.6" height="3.0" fill="#bfe5a0"/><rect x="138.16" y="423.00" width="1.6" height="3.0" fill="#afdfa3"/><rect x="141.61" y="423.00" width="1.6" height="3.0" fill="#acdea4"/><rect x="145.06" y="423.00" width="1.6" height="3.0" fill="#b5e1a2"/><rect x="148.52" y="423.00" width="1.6" height="3.0" fill="#c8e99e"/><rect x="151.97" y="423.00" width="1.6" height="3.0" fill="#c7e89e"/><rect x="155.43" y="423.00" width="1.6" height="3.0" fill="#c1e6a0"/><rect x="158.88" y="423.00" width="1.6" height="3.0" fill="#abdda4"/><rect x="162.34" y="423.00" width="1.6" height="3.0" fill="#ceeb9d"/><rect x="165.80" y="423.00" width="1.6" height="3.0" fill="#d0ec9d"/><rect x="169.25" y="423.00" width="1.6" height="3.0" fill="#bce4a0"/><rect x="172.70" y="423.00" width="1.6" height="3.0" fill="#a6dba4"/><rect x="176.16" y="423.00" width="1.6" height="3.0" fill="#d5ee9b"/><rect x="179.62" y="423.00" width="1.6" height="3.0" fill="#def29a"/><rect x="183.07" y="423.00" width="1.6" height="3.0" fill="#d9f09b"/><rect x="186.52" y="423.00" width="1.6" height="3.0" fill="#bfe5a0"/><rect x="189.98" y="423.00" width="1.6" height="3.0" fill="#bce4a0"/><rect x="193.44" y="423.00" width="1.6" height="3.0" fill="#d5ee9b"/><rect x="196.89" y="423.00" width="1.6" height="3.0" fill="#d5ee9b"/><rect x="200.34" y="423.00" width="1.6" height="3.0" fill="#bde4a0"/><rect x="203.80" y="423.00" width="1.6" height="3.0" fill="#bae3a1"/><rect x="207.25" y="423.00" width="1.6" height="3.0" fill="#b7e2a1"/><rect x="210.71" y="423.00" width="1.6" height="3.0" fill="#b5e1a2"/><rect x="214.16" y="423.00" width="1.6" height="3.0" fill="#dcf19a"/><rect x="217.62" y="423.00" width="1.6" height="3.0" fill="#c4e79f"/><rect x="221.07" y="423.00" width="1.6" height="3.0" fill="#afdfa3"/><rect x="224.53" y="423.00" width="1.6" height="3.0" fill="#a7dba4"/><rect x="227.98" y="423.00" width="1.6" height="3.0" fill="#cdeb9d"/><rect x="231.44" y="423.00" width="1.6" height="3.0" fill="#aedea3"/><rect x="234.90" y="423.00" width="1.6" height="3.0" fill="#bae3a1"/><rect x="238.35" y="423.00" width="1.6" height="3.0" fill="#a9dca4"/><rect x="241.81" y="423.00" width="1.6" height="3.0" fill="#d3ed9c"/><rect x="245.26" y="423.00" width="1.6" height="3.0" fill="#b7e2a2"/><rect x="248.72" y="423.00" width="1.6" height="3.0" fill="#aedea3"/><rect x="252.17" y="423.00" width="1.6" height="3.0" fill="#53adae"/><rect x="255.62" y="423.00" width="1.6" height="3.0" fill="#479fb3"/><rect x="259.08" y="423.00" width="1.6" height="3.0" fill="#429ab6"/><rect x="262.54" y="423.00" width="1.6" height="3.0" fill="#449cb5"/><rect x="265.99" y="423.00" width="1.6" height="3.0" fill="#47a0b3"/><rect x="269.44" y="423.00" width="1.6" height="3.0" fill="#449cb5"/><rect x="272.90" y="423.00" width="1.6" height="3.0" fill="#3781ba"/><rect x="276.35" y="423.00" width="1.6" height="3.0" fill="#479fb4"/><rect x="279.81" y="423.00" width="1.6" height="3.0" fill="#3d79b6"/><rect x="283.26" y="423.00" width="1.6" height="3.0" fill="#3c7bb7"/><rect x="286.72" y="423.00" width="1.6" height="3.0" fill="#4076b4"/><rect x="290.18" y="423.00" width="1.6" height="3.0" fill="#3f77b5"/><rect x="293.63" y="423.00" width="1.6" height="3.0" fill="#3b7cb7"/><rect x="297.08" y="423.00" width="1.6" height="3.0" fill="#4570b2"/><rect x="300.54" y="423.00" width="1.6" height="3.0" fill="#466eb1"/><rect x="304.00" y="423.00" width="1.6" height="3.0" fill="#3881ba"/><rect x="307.45" y="423.00" width="1.6" height="3.0" fill="#466db0"/><rect x="310.91" y="423.00" width="1.6" height="3.0" fill="#479fb3"/><rect x="314.36" y="423.00" width="1.6" height="3.0" fill="#479fb3"/><rect x="317.81" y="423.00" width="1.6" height="3.0" fill="#49a1b3"/><rect x="321.27" y="423.00" width="1.6" height="3.0" fill="#4199b6"/><rect x="324.72" y="423.00" width="1.6" height="3.0" fill="#398fba"/><rect x="328.18" y="423.00" width="1.6" height="3.0" fill="#348abc"/><rect x="331.64" y="423.00" width="1.6" height="3.0" fill="#3a7eb8"/><rect x="335.09" y="423.00" width="1.6" height="3.0" fill="#3d7ab6"/><rect x="338.55" y="423.00" width="1.6" height="3.0" fill="#48a0b3"/><rect x="342.00" y="423.00" width="1.6" height="3.0" fill="#378ebb"/><rect x="345.45" y="423.00" width="1.6" height="3.0" fill="#3486bc"/><rect x="348.91" y="423.00" width="1.6" height="3.0" fill="#388fba"/><rect x="352.36" y="423.00" width="1.6" height="3.0" fill="#469eb4"/><rect x="355.82" y="423.00" width="1.6" height="3.0" fill="#3682ba"/><rect x="359.28" y="423.00" width="1.6" height="3.0" fill="#398fba"/><rect x="362.73" y="423.00" width="1.6" height="3.0" fill="#3a7eb8"/><rect x="366.19" y="423.00" width="1.6" height="3.0" fill="#3288bd"/><rect x="369.64" y="423.00" width="1.6" height="3.0" fill="#466eb1"/><rect x="373.09" y="423.00" width="1.6" height="3.0" fill="#466fb1"/><rect x="376.55" y="423.00" width="1.6" height="3.0" fill="#48a1b3"/><rect x="380.01" y="423.00" width="1.6" height="3.0" fill="#3d79b6"/><rect x="383.46" y="423.00" width="1.6" height="3.0" fill="#3c7bb7"/><rect x="386.92" y="423.00" width="1.6" height="3.0" fill="#3d94b8"/><rect x="390.37" y="423.00" width="1.6" height="3.0" fill="#469eb4"/><rect x="393.82" y="423.00" width="1.6" height="3.0" fill="#3389bc"/><rect x="397.28" y="423.00" width="1.6" height="3.0" fill="#3a90b9"/><rect x="400.73" y="423.00" width="1.6" height="3.0" fill="#3c7ab7"/><rect x="404.19" y="423.00" width="1.6" height="3.0" fill="#4470b2"/><rect x="407.65" y="423.00" width="1.6" height="3.0" fill="#388fba"/><rect x="411.10" y="423.00" width="1.6" height="3.0" fill="#3d94b8"/><rect x="414.56" y="423.00" width="1.6" height="3.0" fill="#3288bd"/><rect x="418.01" y="423.00" width="1.6" height="3.0" fill="#3b7db8"/><rect x="421.46" y="423.00" width="1.6" height="3.0" fill="#3f78b5"/><rect x="424.92" y="423.00" width="1.6" height="3.0" fill="#3584bb"/><rect x="428.38" y="423.00" width="1.6" height="3.0" fill="#3d94b8"/><rect x="431.83" y="423.00" width="1.6" height="3.0" fill="#3a91b9"/><rect x="435.29" y="423.00" width="1.6" height="3.0" fill="#4174b4"/><rect x="438.74" y="423.00" width="1.6" height="3.0" fill="#3387bc"/><rect x="442.19" y="423.00" width="1.6" height="3.0" fill="#49a2b2"/><rect x="445.65" y="423.00" width="1.6" height="3.0" fill="#368dbb"/><rect x="449.10" y="423.00" width="1.6" height="3.0" fill="#4097b7"/><rect x="452.56" y="423.00" width="1.6" height="3.0" fill="#397fb9"/><rect x="456.02" y="423.00" width="1.6" height="3.0" fill="#48a1b3"/><rect x="459.47" y="423.00" width="1.6" height="3.0" fill="#3e95b8"/><rect x="462.93" y="423.00" width="1.6" height="3.0" fill="#479fb3"/><rect x="466.38" y="423.00" width="1.6" height="3.0" fill="#3389bc"/><rect x="469.83" y="423.00" width="1.6" height="3.0" fill="#476cb0"/><rect x="473.29" y="423.00" width="1.6" height="3.0" fill="#3486bc"/><rect x="476.74" y="423.00" width="1.6" height="3.0" fill="#388fba"/><rect x="480.20" y="423.00" width="1.6" height="3.0" fill="#456fb1"/><rect x="483.66" y="423.00" width="1.6" height="3.0" fill="#47a0b3"/><rect x="487.11" y="423.00" width="1.6" height="3.0" fill="#3990ba"/><rect x="490.56" y="423.00" width="1.6" height="3.0" fill="#4076b5"/><rect x="494.02" y="423.00" width="1.6" height="3.0" fill="#4ca5b1"/><rect x="497.47" y="423.00" width="1.6" height="3.0" fill="#3e79b6"/><rect x="500.93" y="423.00" width="1.6" height="3.0" fill="#3990ba"/><rect x="504.39" y="423.00" width="1.6" height="3.0" fill="#4ba4b1"/><rect x="507.84" y="423.00" width="1.6" height="3.0" fill="#3f96b7"/><rect x="511.30" y="423.00" width="1.6" height="3.0" fill="#348abc"/><rect x="514.75" y="423.00" width="1.6" height="3.0" fill="#388fba"/><rect x="518.21" y="423.00" width="1.6" height="3.0" fill="#3387bd"/><rect x="521.66" y="423.00" width="1.6" height="3.0" fill="#49a2b2"/><rect x="525.12" y="423.00" width="1.6" height="3.0" fill="#4198b6"/><rect x="528.57" y="423.00" width="1.6" height="3.0" fill="#476db0"/><rect x="532.03" y="423.00" width="1.6" height="3.0" fill="#358bbc"/><rect x="535.48" y="423.00" width="1.6" height="3.0" fill="#338abc"/><rect x="538.94" y="423.00" width="1.6" height="3.0" fill="#48a0b3"/><rect x="542.39" y="423.00" width="1.6" height="3.0" fill="#3d95b8"/><rect x="545.85" y="423.00" width="1.6" height="3.0" fill="#466eb1"/><rect x="549.30" y="423.00" width="1.6" height="3.0" fill="#3a7db8"/><rect x="552.76" y="423.00" width="1.6" height="3.0" fill="#3288bd"/><rect x="556.21" y="423.00" width="1.6" height="3.0" fill="#49a2b2"/><rect x="559.67" y="423.00" width="1.6" height="3.0" fill="#51abaf"/><rect x="563.12" y="423.00" width="1.6" height="3.0" fill="#61bda7"/><rect x="566.58" y="423.00" width="1.6" height="3.0" fill="#a7dba4"/><rect x="570.03" y="423.00" width="1.6" height="3.0" fill="#a5daa4"/><rect x="573.49" y="423.00" width="1.6" height="3.0" fill="#8fd2a4"/><rect x="576.94" y="423.00" width="1.6" height="3.0" fill="#a1d9a4"/><rect x="580.39" y="423.00" width="1.6" height="3.0" fill="#a2d9a4"/><rect x="583.85" y="423.00" width="1.6" height="3.0" fill="#c6e89e"/><rect x="587.31" y="423.00" width="1.6" height="3.0" fill="#c7e89e"/><rect x="590.76" y="423.00" width="1.6" height="3.0" fill="#98d6a4"/><rect x="594.22" y="423.00" width="1.6" height="3.0" fill="#b0dfa3"/><rect x="597.67" y="423.00" width="1.6" height="3.0" fill="#91d3a4"/><rect x="601.12" y="423.00" width="1.6" height="3.0" fill="#95d4a4"/><rect x="604.58" y="423.00" width="1.6" height="3.0" fill="#8ed2a4"/><rect x="608.04" y="423.00" width="1.6" height="3.0" fill="#b2e0a3"/><rect x="611.49" y="423.00" width="1.6" height="3.0" fill="#89d0a4"/><rect x="614.95" y="423.00" width="1.6" height="3.0" fill="#99d6a4"/><rect x="618.40" y="423.00" width="1.6" height="3.0" fill="#90d2a4"/><rect x="621.86" y="423.00" width="1.6" height="3.0" fill="#c0e5a0"/><rect x="625.31" y="423.00" width="1.6" height="3.0" fill="#98d5a4"/><rect x="628.76" y="423.00" width="1.6" height="3.0" fill="#b0dfa3"/><rect x="632.22" y="423.00" width="1.6" height="3.0" fill="#8ad0a4"/><rect x="635.68" y="423.00" width="1.6" height="3.0" fill="#89d0a4"/><rect x="639.13" y="423.00" width="1.6" height="3.0" fill="#bce4a1"/><rect x="642.59" y="423.00" width="1.6" height="3.0" fill="#b0dfa3"/><rect x="646.04" y="423.00" width="1.6" height="3.0" fill="#b9e2a1"/><rect x="649.50" y="423.00" width="1.6" height="3.0" fill="#addea4"/><rect x="652.95" y="423.00" width="1.6" height="3.0" fill="#b8e2a1"/><rect x="656.41" y="423.00" width="1.6" height="3.0" fill="#a0d9a4"/><rect x="659.86" y="423.00" width="1.6" height="3.0" fill="#c1e69f"/><rect x="663.32" y="423.00" width="1.6" height="3.0" fill="#bfe5a0"/><rect x="666.77" y="423.00" width="1.6" height="3.0" fill="#addea3"/><rect x="670.23" y="423.00" width="1.6" height="3.0" fill="#c4e79f"/><rect x="673.68" y="423.00" width="1.6" height="3.0" fill="#b2e0a3"/><rect x="677.13" y="423.00" width="1.6" height="3.0" fill="#90d2a4"/><rect x="680.59" y="423.00" width="1.6" height="3.0" fill="#90d3a4"/><rect x="684.05" y="423.00" width="1.6" height="3.0" fill="#bde4a0"/><rect x="687.50" y="423.00" width="1.6" height="3.0" fill="#c7e99e"/><rect x="690.96" y="423.00" width="1.6" height="3.0" fill="#94d4a4"/><rect x="694.41" y="423.00" width="1.6" height="3.0" fill="#8bd1a4"/><rect x="697.87" y="423.00" width="1.6" height="3.0" fill="#a4daa4"/><rect x="701.32" y="423.00" width="1.6" height="3.0" fill="#c0e6a0"/><rect x="704.78" y="423.00" width="1.6" height="3.0" fill="#bbe3a1"/><rect x="708.23" y="423.00" width="1.6" height="3.0" fill="#8ed2a4"/><rect x="711.69" y="423.00" width="1.6" height="3.0" fill="#8dd1a4"/><rect x="715.14" y="423.00" width="1.6" height="3.0" fill="#c7e89e"/><rect x="718.60" y="423.00" width="1.6" height="3.0" fill="#bee5a0"/><rect x="722.05" y="423.00" width="1.6" height="3.0" fill="#afdfa3"/><rect x="725.50" y="423.00" width="1.6" height="3.0" fill="#b9e3a1"/><rect x="728.96" y="423.00" width="1.6" height="3.0" fill="#99d6a4"/><rect x="732.42" y="423.00" width="1.6" height="3.0" fill="#b2e0a2"/><rect x="735.87" y="423.00" width="1.6" height="3.0" fill="#98d6a4"/><rect x="739.33" y="423.00" width="1.6" height="3.0" fill="#c0e5a0"/><rect x="742.78" y="423.00" width="1.6" height="3.0" fill="#aadda4"/><rect x="746.24" y="423.00" width="1.6" height="3.0" fill="#8ad0a4"/><rect x="749.69" y="423.00" width="1.6" height="3.0" fill="#7bcaa5"/><rect x="753.14" y="423.00" width="1.6" height="3.0" fill="#75c8a5"/><rect x="756.60" y="423.00" width="1.6" height="3.0" fill="#4ca6b1"/><rect x="760.06" y="423.00" width="1.6" height="3.0" fill="#3880b9"/><rect x="763.51" y="423.00" width="1.6" height="3.0" fill="#398fba"/><rect x="766.97" y="423.00" width="1.6" height="3.0" fill="#3990ba"/><rect x="770.42" y="423.00" width="1.6" height="3.0" fill="#3389bc"/><rect x="773.88" y="423.00" width="1.6" height="3.0" fill="#3683bb"/><rect x="777.33" y="423.00" width="1.6" height="3.0" fill="#466db0"/><rect x="780.79" y="423.00" width="1.6" height="3.0" fill="#3f97b7"/><rect x="784.24" y="423.00" width="1.6" height="3.0" fill="#3584bb"/><rect x="787.70" y="423.00" width="1.6" height="3.0" fill="#3e96b7"/><rect x="791.15" y="423.00" width="1.6" height="3.0" fill="#3485bc"/><rect x="794.61" y="423.00" width="1.6" height="3.0" fill="#3c7bb7"/><rect x="798.06" y="423.00" width="1.6" height="3.0" fill="#459db4"/><rect x="801.51" y="423.00" width="1.6" height="3.0" fill="#3389bd"/><rect x="804.97" y="423.00" width="1.6" height="3.0" fill="#3b7cb7"/><rect x="808.43" y="423.00" width="1.6" height="3.0" fill="#4ca5b1"/><rect x="811.88" y="423.00" width="1.6" height="3.0" fill="#3e79b6"/><rect x="815.34" y="423.00" width="1.6" height="3.0" fill="#368dbb"/><rect x="818.79" y="423.00" width="1.6" height="3.0" fill="#3288bd"/><rect x="822.25" y="423.00" width="1.6" height="3.0" fill="#3782ba"/><rect x="825.70" y="423.00" width="1.6" height="3.0" fill="#3f77b5"/><rect x="829.16" y="423.00" width="1.6" height="3.0" fill="#49a2b2"/><rect x="832.61" y="423.00" width="1.6" height="3.0" fill="#3288bd"/><rect x="836.07" y="423.00" width="1.6" height="3.0" fill="#4aa3b2"/><rect x="839.52" y="423.00" width="1.6" height="3.0" fill="#388fba"/><rect x="842.98" y="423.00" width="1.6" height="3.0" fill="#3a91b9"/><rect x="846.43" y="423.00" width="1.6" height="3.0" fill="#4ba4b2"/><rect x="849.88" y="423.00" width="1.6" height="3.0" fill="#3d94b8"/><rect x="853.34" y="423.00" width="1.6" height="3.0" fill="#358bbc"/><rect x="856.80" y="423.00" width="1.6" height="3.0" fill="#397fb9"/><rect x="860.25" y="423.00" width="1.6" height="3.0" fill="#4570b2"/><rect x="863.71" y="423.00" width="1.6" height="3.0" fill="#3990ba"/><rect x="867.16" y="423.00" width="1.6" height="3.0" fill="#3386bc"/><rect x="870.62" y="423.00" width="1.6" height="3.0" fill="#3b7cb7"/><rect x="874.07" y="423.00" width="1.6" height="3.0" fill="#456fb1"/><rect x="877.53" y="423.00" width="1.6" height="3.0" fill="#466eb1"/><rect x="880.98" y="423.00" width="1.6" height="3.0" fill="#476cb0"/><rect x="884.44" y="423.00" width="1.6" height="3.0" fill="#3c93b8"/><rect x="887.89" y="423.00" width="1.6" height="3.0" fill="#439bb5"/><rect x="65.60" y="418.10" width="1.6" height="3.0" fill="#3d79b6"/><rect x="69.06" y="418.10" width="1.6" height="3.0" fill="#3f97b7"/><rect x="72.51" y="418.10" width="1.6" height="3.0" fill="#348abc"/><rect x="75.97" y="418.10" width="1.6" height="3.0" fill="#3880b9"/><rect x="79.42" y="418.10" width="1.6" height="3.0" fill="#3387bd"/><rect x="82.88" y="418.10" width="1.6" height="3.0" fill="#358cbb"/><rect x="86.33" y="418.10" width="1.6" height="3.0" fill="#3d79b6"/><rect x="89.79" y="418.10" width="1.6" height="3.0" fill="#388fba"/><rect x="93.24" y="418.10" width="1.6" height="3.0" fill="#3386bc"/><rect x="96.70" y="418.10" width="1.6" height="3.0" fill="#3b7db8"/><rect x="100.15" y="418.10" width="1.6" height="3.0" fill="#3d95b8"/><rect x="103.61" y="418.10" width="1.6" height="3.0" fill="#378dbb"/><rect x="107.06" y="418.10" width="1.6" height="3.0" fill="#3288bd"/><rect x="110.52" y="418.10" width="1.6" height="3.0" fill="#3486bc"/><rect x="113.97" y="418.10" width="1.6" height="3.0" fill="#3b92b9"/><rect x="117.43" y="418.10" width="1.6" height="3.0" fill="#338abc"/><rect x="120.88" y="418.10" width="1.6" height="3.0" fill="#4097b7"/><rect x="124.34" y="418.10" width="1.6" height="3.0" fill="#3f96b7"/><rect x="127.79" y="418.10" width="1.6" height="3.0" fill="#378dbb"/><rect x="131.25" y="418.10" width="1.6" height="3.0" fill="#3d94b8"/><rect x="134.70" y="418.10" width="1.6" height="3.0" fill="#3e78b5"/><rect x="138.16" y="418.10" width="1.6" height="3.0" fill="#3990ba"/><rect x="141.61" y="418.10" width="1.6" height="3.0" fill="#3990ba"/><rect x="145.06" y="418.10" width="1.6" height="3.0" fill="#397eb8"/><rect x="148.52" y="418.10" width="1.6" height="3.0" fill="#3880b9"/><rect x="151.97" y="418.10" width="1.6" height="3.0" fill="#3990ba"/><rect x="155.43" y="418.10" width="1.6" height="3.0" fill="#3b7db8"/><rect x="158.88" y="418.10" width="1.6" height="3.0" fill="#3584bb"/><rect x="162.34" y="418.10" width="1.6" height="3.0" fill="#358cbb"/><rect x="165.80" y="418.10" width="1.6" height="3.0" fill="#3584bb"/><rect x="169.25" y="418.10" width="1.6" height="3.0" fill="#3a91b9"/><rect x="172.70" y="418.10" width="1.6" height="3.0" fill="#3990ba"/><rect x="176.16" y="418.10" width="1.6" height="3.0" fill="#3c7bb7"/><rect x="179.62" y="418.10" width="1.6" height="3.0" fill="#348abc"/><rect x="183.07" y="418.10" width="1.6" height="3.0" fill="#3c7ab7"/><rect x="186.52" y="418.10" width="1.6" height="3.0" fill="#3c93b8"/><rect x="189.98" y="418.10" width="1.6" height="3.0" fill="#3d95b8"/><rect x="193.44" y="418.10" width="1.6" height="3.0" fill="#4098b7"/><rect x="196.89" y="418.10" width="1.6" height="3.0" fill="#3880b9"/><rect x="200.34" y="418.10" width="1.6" height="3.0" fill="#3486bc"/><rect x="203.80" y="418.10" width="1.6" height="3.0" fill="#4199b6"/><rect x="207.25" y="418.10" width="1.6" height="3.0" fill="#4098b6"/><rect x="210.71" y="418.10" width="1.6" height="3.0" fill="#3b7db8"/><rect x="214.16" y="418.10" width="1.6" height="3.0" fill="#3288bd"/><rect x="217.62" y="418.10" width="1.6" height="3.0" fill="#3c7bb7"/><rect x="221.07" y="418.10" width="1.6" height="3.0" fill="#4098b6"/><rect x="224.53" y="418.10" width="1.6" height="3.0" fill="#3485bc"/><rect x="227.98" y="418.10" width="1.6" height="3.0" fill="#3e95b7"/><rect x="231.44" y="418.10" width="1.6" height="3.0" fill="#3880b9"/><rect x="234.90" y="418.10" width="1.6" height="3.0" fill="#3584bb"/><rect x="238.35" y="418.10" width="1.6" height="3.0" fill="#3584bb"/><rect x="241.81" y="418.10" width="1.6" height="3.0" fill="#3b92b9"/><rect x="245.26" y="418.10" width="1.6" height="3.0" fill="#3e79b6"/><rect x="248.72" y="418.10" width="1.6" height="3.0" fill="#3e96b7"/><rect x="252.17" y="418.10" width="1.6" height="3.0" fill="#3d79b6"/><rect x="255.62" y="418.10" width="1.6" height="3.0" fill="#565aa7"/><rect x="259.08" y="418.10" width="1.6" height="3.0" fill="#466eb1"/><rect x="262.54" y="418.10" width="1.6" height="3.0" fill="#456fb1"/><rect x="265.99" y="418.10" width="1.6" height="3.0" fill="#5061ab"/><rect x="269.44" y="418.10" width="1.6" height="3.0" fill="#555ba8"/><rect x="272.90" y="418.10" width="1.6" height="3.0" fill="#5b53a4"/><rect x="276.35" y="418.10" width="1.6" height="3.0" fill="#5759a7"/><rect x="279.81" y="418.10" width="1.6" height="3.0" fill="#456fb1"/><rect x="283.26" y="418.10" width="1.6" height="3.0" fill="#555ba8"/><rect x="286.72" y="418.10" width="1.6" height="3.0" fill="#5a54a5"/><rect x="290.18" y="418.10" width="1.6" height="3.0" fill="#476db0"/><rect x="293.63" y="418.10" width="1.6" height="3.0" fill="#5857a6"/><rect x="297.08" y="418.10" width="1.6" height="3.0" fill="#4a68ae"/><rect x="300.54" y="418.10" width="1.6" height="3.0" fill="#4b67ad"/><rect x="304.00" y="418.10" width="1.6" height="3.0" fill="#4471b2"/><rect x="307.45" y="418.10" width="1.6" height="3.0" fill="#5857a6"/><rect x="310.91" y="418.10" width="1.6" height="3.0" fill="#5160aa"/><rect x="314.36" y="418.10" width="1.6" height="3.0" fill="#5b52a4"/><rect x="317.81" y="418.10" width="1.6" height="3.0" fill="#5061ab"/><rect x="321.27" y="418.10" width="1.6" height="3.0" fill="#486cb0"/><rect x="324.72" y="418.10" width="1.6" height="3.0" fill="#496aaf"/><rect x="328.18" y="418.10" width="1.6" height="3.0" fill="#4b68ae"/><rect x="331.64" y="418.10" width="1.6" height="3.0" fill="#5d51a3"/><rect x="335.09" y="418.10" width="1.6" height="3.0" fill="#496aaf"/><rect x="338.55" y="418.10" width="1.6" height="3.0" fill="#466eb1"/><rect x="342.00" y="418.10" width="1.6" height="3.0" fill="#4d65ac"/><rect x="345.45" y="418.10" width="1.6" height="3.0" fill="#466eb1"/><rect x="348.91" y="418.10" width="1.6" height="3.0" fill="#4f63ab"/><rect x="352.36" y="418.10" width="1.6" height="3.0" fill="#545ca8"/><rect x="355.82" y="418.10" width="1.6" height="3.0" fill="#555ba8"/><rect x="359.28" y="418.10" width="1.6" height="3.0" fill="#486baf"/><rect x="362.73" y="418.10" width="1.6" height="3.0" fill="#476cb0"/><rect x="366.19" y="418.10" width="1.6" height="3.0" fill="#5160aa"/><rect x="369.64" y="418.10" width="1.6" height="3.0" fill="#565aa7"/><rect x="373.09" y="418.10" width="1.6" height="3.0" fill="#4f62ab"/><rect x="376.55" y="418.10" width="1.6" height="3.0" fill="#535ea9"/><rect x="380.01" y="418.10" width="1.6" height="3.0" fill="#5c52a3"/><rect x="383.46" y="418.10" width="1.6" height="3.0" fill="#476cb0"/><rect x="386.92" y="418.10" width="1.6" height="3.0" fill="#4b68ae"/><rect x="390.37" y="418.10" width="1.6" height="3.0" fill="#5160aa"/><rect x="393.82" y="418.10" width="1.6" height="3.0" fill="#525faa"/><rect x="397.28" y="418.10" width="1.6" height="3.0" fill="#5b52a4"/><rect x="400.73" y="418.10" width="1.6" height="3.0" fill="#525ea9"/><rect x="404.19" y="418.10" width="1.6" height="3.0" fill="#555ba7"/><rect x="407.65" y="418.10" width="1.6" height="3.0" fill="#4f63ab"/><rect x="411.10" y="418.10" width="1.6" height="3.0" fill="#5856a5"/><rect x="414.56" y="418.10" width="1.6" height="3.0" fill="#5a55a5"/><rect x="418.01" y="418.10" width="1.6" height="3.0" fill="#4b67ad"/><rect x="421.46" y="418.10" width="1.6" height="3.0" fill="#466eb0"/><rect x="424.92" y="418.10" width="1.6" height="3.0" fill="#4a68ae"/><rect x="428.38" y="418.10" width="1.6" height="3.0" fill="#4d65ac"/><rect x="431.83" y="418.10" width="1.6" height="3.0" fill="#5b53a4"/><rect x="435.29" y="418.10" width="1.6" height="3.0" fill="#4b68ae"/><rect x="438.74" y="418.10" width="1.6" height="3.0" fill="#545ca8"/><rect x="442.19" y="418.10" width="1.6" height="3.0" fill="#555ba8"/><rect x="445.65" y="418.10" width="1.6" height="3.0" fill="#5d50a3"/><rect x="449.10" y="418.10" width="1.6" height="3.0" fill="#476db0"/><rect x="452.56" y="418.10" width="1.6" height="3.0" fill="#5857a6"/><rect x="456.02" y="418.10" width="1.6" height="3.0" fill="#4c66ad"/><rect x="459.47" y="418.10" width="1.6" height="3.0" fill="#466eb1"/><rect x="462.93" y="418.10" width="1.6" height="3.0" fill="#545ca8"/><rect x="466.38" y="418.10" width="1.6" height="3.0" fill="#5a54a5"/><rect x="469.83" y="418.10" width="1.6" height="3.0" fill="#535da9"/><rect x="473.29" y="418.10" width="1.6" height="3.0" fill="#456fb1"/><rect x="476.74" y="418.10" width="1.6" height="3.0" fill="#5d50a2"/><rect x="480.20" y="418.10" width="1.6" height="3.0" fill="#4e64ac"/><rect x="483.66" y="418.10" width="1.6" height="3.0" fill="#545ba8"/><rect x="487.11" y="418.10" width="1.6" height="3.0" fill="#5758a6"/><rect x="490.56" y="418.10" width="1.6" height="3.0" fill="#4a68ae"/><rect x="494.02" y="418.10" width="1.6" height="3.0" fill="#4e63ac"/><rect x="497.47" y="418.10" width="1.6" height="3.0" fill="#4c66ad"/><rect x="500.93" y="418.10" width="1.6" height="3.0" fill="#466eb1"/><rect x="504.39" y="418.10" width="1.6" height="3.0" fill="#456fb1"/><rect x="507.84" y="418.10" width="1.6" height="3.0" fill="#5759a7"/><rect x="511.30" y="418.10" width="1.6" height="3.0" fill="#4e63ac"/><rect x="514.75" y="418.10" width="1.6" height="3.0" fill="#5b53a4"/><rect x="518.21" y="418.10" width="1.6" height="3.0" fill="#456fb1"/><rect x="521.66" y="418.10" width="1.6" height="3.0" fill="#4c67ad"/><rect x="525.12" y="418.10" width="1.6" height="3.0" fill="#486baf"/><rect x="528.57" y="418.10" width="1.6" height="3.0" fill="#5d51a3"/><rect x="532.03" y="418.10" width="1.6" height="3.0" fill="#5856a5"/><rect x="535.48" y="418.10" width="1.6" height="3.0" fill="#5b53a4"/><rect x="538.94" y="418.10" width="1.6" height="3.0" fill="#5160aa"/><rect x="542.39" y="418.10" width="1.6" height="3.0" fill="#466eb1"/><rect x="545.85" y="418.10" width="1.6" height="3.0" fill="#4f63ab"/><rect x="549.30" y="418.10" width="1.6" height="3.0" fill="#4a69af"/><rect x="552.76" y="418.10" width="1.6" height="3.0" fill="#4470b2"/><rect x="556.21" y="418.10" width="1.6" height="3.0" fill="#535ea9"/><rect x="559.67" y="418.10" width="1.6" height="3.0" fill="#3f77b5"/><rect x="563.12" y="418.10" width="1.6" height="3.0" fill="#3c93b9"/><rect x="566.58" y="418.10" width="1.6" height="3.0" fill="#439bb5"/><rect x="570.03" y="418.10" width="1.6" height="3.0" fill="#3990ba"/><rect x="573.49" y="418.10" width="1.6" height="3.0" fill="#3990ba"/><rect x="576.94" y="418.10" width="1.6" height="3.0" fill="#48a0b3"/><rect x="580.39" y="418.10" width="1.6" height="3.0" fill="#53adae"/><rect x="583.85" y="418.10" width="1.6" height="3.0" fill="#3e96b7"/><rect x="587.31" y="418.10" width="1.6" height="3.0" fill="#53adae"/><rect x="590.76" y="418.10" width="1.6" height="3.0" fill="#469eb4"/><rect x="594.22" y="418.10" width="1.6" height="3.0" fill="#54aead"/><rect x="597.67" y="418.10" width="1.6" height="3.0" fill="#388eba"/><rect x="601.12" y="418.10" width="1.6" height="3.0" fill="#459eb4"/><rect x="604.58" y="418.10" width="1.6" height="3.0" fill="#49a1b2"/><rect x="608.04" y="418.10" width="1.6" height="3.0" fill="#4ea7b0"/><rect x="611.49" y="418.10" width="1.6" height="3.0" fill="#459db4"/><rect x="614.95" y="418.10" width="1.6" height="3.0" fill="#388fba"/><rect x="618.40" y="418.10" width="1.6" height="3.0" fill="#49a2b2"/><rect x="621.86" y="418.10" width="1.6" height="3.0" fill="#50a9af"/><rect x="625.31" y="418.10" width="1.6" height="3.0" fill="#469fb4"/><rect x="628.76" y="418.10" width="1.6" height="3.0" fill="#3a91b9"/><rect x="632.22" y="418.10" width="1.6" height="3.0" fill="#4aa3b2"/><rect x="635.68" y="418.10" width="1.6" height="3.0" fill="#439bb5"/><rect x="639.13" y="418.10" width="1.6" height="3.0" fill="#3a91b9"/><rect x="642.59" y="418.10" width="1.6" height="3.0" fill="#4ca5b1"/><rect x="646.04" y="418.10" width="1.6" height="3.0" fill="#3d94b8"/><rect x="649.50" y="418.10" width="1.6" height="3.0" fill="#469eb4"/><rect x="652.95" y="418.10" width="1.6" height="3.0" fill="#52acae"/><rect x="656.41" y="418.10" width="1.6" height="3.0" fill="#55afad"/><rect x="659.86" y="418.10" width="1.6" height="3.0" fill="#3990ba"/><rect x="663.32" y="418.10" width="1.6" height="3.0" fill="#48a0b3"/><rect x="666.77" y="418.10" width="1.6" height="3.0" fill="#49a1b3"/><rect x="670.23" y="418.10" width="1.6" height="3.0" fill="#3a91b9"/><rect x="673.68" y="418.10" width="1.6" height="3.0" fill="#449db4"/><rect x="677.13" y="418.10" width="1.6" height="3.0" fill="#479fb3"/><rect x="680.59" y="418.10" width="1.6" height="3.0" fill="#4ea7b0"/><rect x="684.05" y="418.10" width="1.6" height="3.0" fill="#3f97b7"/><rect x="687.50" y="418.10" width="1.6" height="3.0" fill="#4ea8b0"/><rect x="690.96" y="418.10" width="1.6" height="3.0" fill="#48a0b3"/><rect x="694.41" y="418.10" width="1.6" height="3.0" fill="#3f96b7"/><rect x="697.87" y="418.10" width="1.6" height="3.0" fill="#449cb5"/><rect x="701.32" y="418.10" width="1.6" height="3.0" fill="#52acae"/><rect x="704.78" y="418.10" width="1.6" height="3.0" fill="#50aaaf"/><rect x="708.23" y="418.10" width="1.6" height="3.0" fill="#4198b6"/><rect x="711.69" y="418.10" width="1.6" height="3.0" fill="#4097b7"/><rect x="715.14" y="418.10" width="1.6" height="3.0" fill="#53adae"/><rect x="718.60" y="418.10" width="1.6" height="3.0" fill="#378ebb"/><rect x="722.05" y="418.10" width="1.6" height="3.0" fill="#52acae"/><rect x="725.50" y="418.10" width="1.6" height="3.0" fill="#51abaf"/><rect x="728.96" y="418.10" width="1.6" height="3.0" fill="#54adad"/><rect x="732.42" y="418.10" width="1.6" height="3.0" fill="#48a1b3"/><rect x="735.87" y="418.10" width="1.6" height="3.0" fill="#439bb5"/><rect x="739.33" y="418.10" width="1.6" height="3.0" fill="#3c93b9"/><rect x="742.78" y="418.10" width="1.6" height="3.0" fill="#51abaf"/><rect x="746.24" y="418.10" width="1.6" height="3.0" fill="#4198b6"/><rect x="749.69" y="418.10" width="1.6" height="3.0" fill="#459db4"/><rect x="753.14" y="418.10" width="1.6" height="3.0" fill="#3f77b5"/><rect x="756.60" y="418.10" width="1.6" height="3.0" fill="#476cb0"/><rect x="760.06" y="418.10" width="1.6" height="3.0" fill="#4d65ac"/><rect x="763.51" y="418.10" width="1.6" height="3.0" fill="#456fb1"/><rect x="766.97" y="418.10" width="1.6" height="3.0" fill="#5759a7"/><rect x="770.42" y="418.10" width="1.6" height="3.0" fill="#476db0"/><rect x="773.88" y="418.10" width="1.6" height="3.0" fill="#5857a6"/><rect x="777.33" y="418.10" width="1.6" height="3.0" fill="#4c66ad"/><rect x="780.79" y="418.10" width="1.6" height="3.0" fill="#535da9"/><rect x="784.24" y="418.10" width="1.6" height="3.0" fill="#545ba8"/><rect x="787.70" y="418.10" width="1.6" height="3.0" fill="#5160aa"/><rect x="791.15" y="418.10" width="1.6" height="3.0" fill="#5b53a4"/><rect x="794.61" y="418.10" width="1.6" height="3.0" fill="#5c52a3"/><rect x="798.06" y="418.10" width="1.6" height="3.0" fill="#4b68ae"/><rect x="801.51" y="418.10" width="1.6" height="3.0" fill="#4c66ad"/><rect x="804.97" y="418.10" width="1.6" height="3.0" fill="#5b53a4"/><rect x="808.43" y="418.10" width="1.6" height="3.0" fill="#476db0"/><rect x="811.88" y="418.10" width="1.6" height="3.0" fill="#4f63ab"/><rect x="815.34" y="418.10" width="1.6" height="3.0" fill="#4f63ab"/><rect x="818.79" y="418.10" width="1.6" height="3.0" fill="#5d50a2"/><rect x="822.25" y="418.10" width="1.6" height="3.0" fill="#476db0"/><rect x="825.70" y="418.10" width="1.6" height="3.0" fill="#555ba8"/><rect x="829.16" y="418.10" width="1.6" height="3.0" fill="#5857a6"/><rect x="832.61" y="418.10" width="1.6" height="3.0" fill="#5758a6"/><rect x="836.07" y="418.10" width="1.6" height="3.0" fill="#4471b2"/><rect x="839.52" y="418.10" width="1.6" height="3.0" fill="#5d51a3"/><rect x="842.98" y="418.10" width="1.6" height="3.0" fill="#4c67ad"/><rect x="846.43" y="418.10" width="1.6" height="3.0" fill="#5a54a4"/><rect x="849.88" y="418.10" width="1.6" height="3.0" fill="#555ba7"/><rect x="853.34" y="418.10" width="1.6" height="3.0" fill="#4f63ab"/><rect x="856.80" y="418.10" width="1.6" height="3.0" fill="#5a55a5"/><rect x="860.25" y="418.10" width="1.6" height="3.0" fill="#555aa7"/><rect x="863.71" y="418.10" width="1.6" height="3.0" fill="#4d66ad"/><rect x="867.16" y="418.10" width="1.6" height="3.0" fill="#5758a6"/><rect x="870.62" y="418.10" width="1.6" height="3.0" fill="#5160aa"/><rect x="874.07" y="418.10" width="1.6" height="3.0" fill="#5659a7"/><rect x="877.53" y="418.10" width="1.6" height="3.0" fill="#545ca8"/><rect x="880.98" y="418.10" width="1.6" height="3.0" fill="#5956a5"/><rect x="884.44" y="418.10" width="1.6" height="3.0" fill="#486cb0"/><rect x="887.89" y="418.10" width="1.6" height="3.0" fill="#5160aa"/><rect x="65.60" y="413.10" width="1.6" height="3.0" fill="#4c66ad"/><rect x="69.06" y="413.10" width="1.6" height="3.0" fill="#5a54a4"/><rect x="72.51" y="413.10" width="1.6" height="3.0" fill="#5a54a4"/><rect x="75.97" y="413.10" width="1.6" height="3.0" fill="#5b53a4"/><rect x="79.42" y="413.10" width="1.6" height="3.0" fill="#4d65ac"/><rect x="100.15" y="413.10" width="1.6" height="3.0" fill="#565aa7"/><rect x="103.61" y="413.10" width="1.6" height="3.0" fill="#555ba8"/><rect x="107.06" y="413.10" width="1.6" height="3.0" fill="#4f63ac"/><rect x="110.52" y="413.10" width="1.6" height="3.0" fill="#5061ab"/><rect x="113.97" y="413.10" width="1.6" height="3.0" fill="#5e50a2"/><rect x="127.79" y="413.10" width="1.6" height="3.0" fill="#5b52a4"/><rect x="131.25" y="413.10" width="1.6" height="3.0" fill="#5160aa"/><rect x="134.70" y="413.10" width="1.6" height="3.0" fill="#5b53a4"/><rect x="138.16" y="413.10" width="1.6" height="3.0" fill="#5857a6"/><rect x="141.61" y="413.10" width="1.6" height="3.0" fill="#535da9"/><rect x="145.06" y="413.10" width="1.6" height="3.0" fill="#5857a6"/><rect x="148.52" y="413.10" width="1.6" height="3.0" fill="#5061aa"/><rect x="172.70" y="413.10" width="1.6" height="3.0" fill="#5160aa"/><rect x="176.16" y="413.10" width="1.6" height="3.0" fill="#4d66ad"/><rect x="179.62" y="413.10" width="1.6" height="3.0" fill="#5857a6"/><rect x="183.07" y="413.10" width="1.6" height="3.0" fill="#5759a7"/><rect x="186.52" y="413.10" width="1.6" height="3.0" fill="#5955a5"/><rect x="189.98" y="413.10" width="1.6" height="3.0" fill="#555aa7"/><rect x="193.44" y="413.10" width="1.6" height="3.0" fill="#545ca8"/><rect x="196.89" y="413.10" width="1.6" height="3.0" fill="#525fa9"/><rect x="200.34" y="413.10" width="1.6" height="3.0" fill="#5955a5"/><rect x="203.80" y="413.10" width="1.6" height="3.0" fill="#535da9"/><rect x="207.25" y="413.10" width="1.6" height="3.0" fill="#5758a6"/><rect x="210.71" y="413.10" width="1.6" height="3.0" fill="#5a55a5"/><rect x="214.16" y="413.10" width="1.6" height="3.0" fill="#545ca8"/><rect x="217.62" y="413.10" width="1.6" height="3.0" fill="#5856a5"/><rect x="221.07" y="413.10" width="1.6" height="3.0" fill="#4d64ac"/><rect x="224.53" y="413.10" width="1.6" height="3.0" fill="#5160aa"/><rect x="227.98" y="413.10" width="1.6" height="3.0" fill="#5b53a4"/><rect x="231.44" y="413.10" width="1.6" height="3.0" fill="#4f62ab"/><rect x="234.90" y="413.10" width="1.6" height="3.0" fill="#4d65ac"/><rect x="238.35" y="413.10" width="1.6" height="3.0" fill="#4d65ad"/><rect x="241.81" y="413.10" width="1.6" height="3.0" fill="#5a54a5"/><rect x="245.26" y="413.10" width="1.6" height="3.0" fill="#4e63ac"/><rect x="248.72" y="413.10" width="1.6" height="3.0" fill="#545ba8"/><rect x="252.17" y="413.10" width="1.6" height="3.0" fill="#545ca8"/><rect x="255.62" y="413.10" width="1.6" height="3.0" fill="#5b53a4"/><rect x="286.72" y="413.10" width="1.6" height="3.0" fill="#555ba8"/><rect x="290.18" y="413.10" width="1.6" height="3.0" fill="#565aa7"/><rect x="293.63" y="413.10" width="1.6" height="3.0" fill="#4d65ad"/><rect x="297.08" y="413.10" width="1.6" height="3.0" fill="#5a54a4"/><rect x="300.54" y="413.10" width="1.6" height="3.0" fill="#5a54a5"/><rect x="304.00" y="413.10" width="1.6" height="3.0" fill="#5758a6"/><rect x="307.45" y="413.10" width="1.6" height="3.0" fill="#5b53a4"/><rect x="310.91" y="413.10" width="1.6" height="3.0" fill="#5758a6"/><rect x="314.36" y="413.10" width="1.6" height="3.0" fill="#5955a5"/><rect x="317.81" y="413.10" width="1.6" height="3.0" fill="#5b52a4"/><rect x="321.27" y="413.10" width="1.6" height="3.0" fill="#5758a6"/><rect x="324.72" y="413.10" width="1.6" height="3.0" fill="#4d65ad"/><rect x="328.18" y="413.10" width="1.6" height="3.0" fill="#5c52a3"/><rect x="331.64" y="413.10" width="1.6" height="3.0" fill="#5e4fa2"/><rect x="335.09" y="413.10" width="1.6" height="3.0" fill="#5061ab"/><rect x="338.55" y="413.10" width="1.6" height="3.0" fill="#4e64ac"/><rect x="342.00" y="413.10" width="1.6" height="3.0" fill="#525ea9"/><rect x="345.45" y="413.10" width="1.6" height="3.0" fill="#4e64ac"/><rect x="348.91" y="413.10" width="1.6" height="3.0" fill="#535da9"/><rect x="352.36" y="413.10" width="1.6" height="3.0" fill="#4e64ac"/><rect x="355.82" y="413.10" width="1.6" height="3.0" fill="#5061aa"/><rect x="359.28" y="413.10" width="1.6" height="3.0" fill="#4c66ad"/><rect x="362.73" y="413.10" width="1.6" height="3.0" fill="#545ca8"/><rect x="366.19" y="413.10" width="1.6" height="3.0" fill="#525faa"/><rect x="369.64" y="413.10" width="1.6" height="3.0" fill="#5955a5"/><rect x="373.09" y="413.10" width="1.6" height="3.0" fill="#535da9"/><rect x="376.55" y="413.10" width="1.6" height="3.0" fill="#4f62ab"/><rect x="380.01" y="413.10" width="1.6" height="3.0" fill="#5d50a3"/><rect x="383.46" y="413.10" width="1.6" height="3.0" fill="#5c51a3"/><rect x="400.73" y="413.10" width="1.6" height="3.0" fill="#5956a5"/><rect x="404.19" y="413.10" width="1.6" height="3.0" fill="#5061aa"/><rect x="407.65" y="413.10" width="1.6" height="3.0" fill="#535da8"/><rect x="411.10" y="413.10" width="1.6" height="3.0" fill="#545ca8"/><rect x="414.56" y="413.10" width="1.6" height="3.0" fill="#545ca8"/><rect x="418.01" y="413.10" width="1.6" height="3.0" fill="#4d65ad"/><rect x="421.46" y="413.10" width="1.6" height="3.0" fill="#545ba8"/><rect x="424.92" y="413.10" width="1.6" height="3.0" fill="#5a54a5"/><rect x="428.38" y="413.10" width="1.6" height="3.0" fill="#5956a5"/><rect x="431.83" y="413.10" width="1.6" height="3.0" fill="#5c52a4"/><rect x="435.29" y="413.10" width="1.6" height="3.0" fill="#5856a5"/><rect x="438.74" y="413.10" width="1.6" height="3.0" fill="#5a54a5"/><rect x="442.19" y="413.10" width="1.6" height="3.0" fill="#5c52a3"/><rect x="445.65" y="413.10" width="1.6" height="3.0" fill="#5d51a3"/><rect x="449.10" y="413.10" width="1.6" height="3.0" fill="#5a54a4"/><rect x="452.56" y="413.10" width="1.6" height="3.0" fill="#545ca8"/><rect x="456.02" y="413.10" width="1.6" height="3.0" fill="#5857a6"/><rect x="459.47" y="413.10" width="1.6" height="3.0" fill="#5857a6"/><rect x="462.93" y="413.10" width="1.6" height="3.0" fill="#5c52a3"/><rect x="466.38" y="413.10" width="1.6" height="3.0" fill="#5956a5"/><rect x="469.83" y="413.10" width="1.6" height="3.0" fill="#545ca8"/><rect x="473.29" y="413.10" width="1.6" height="3.0" fill="#5061ab"/><rect x="476.74" y="413.10" width="1.6" height="3.0" fill="#525ea9"/><rect x="480.20" y="413.10" width="1.6" height="3.0" fill="#5160aa"/><rect x="483.66" y="413.10" width="1.6" height="3.0" fill="#5856a5"/><rect x="487.11" y="413.10" width="1.6" height="3.0" fill="#5a54a4"/><rect x="490.56" y="413.10" width="1.6" height="3.0" fill="#5061ab"/><rect x="494.02" y="413.10" width="1.6" height="3.0" fill="#565aa7"/><rect x="497.47" y="413.10" width="1.6" height="3.0" fill="#5b53a4"/><rect x="500.93" y="413.10" width="1.6" height="3.0" fill="#535da9"/><rect x="504.39" y="413.10" width="1.6" height="3.0" fill="#4e64ac"/><rect x="507.84" y="413.10" width="1.6" height="3.0" fill="#5758a6"/><rect x="511.30" y="413.10" width="1.6" height="3.0" fill="#535ea9"/><rect x="514.75" y="413.10" width="1.6" height="3.0" fill="#4f63ab"/><rect x="518.21" y="413.10" width="1.6" height="3.0" fill="#515faa"/><rect x="521.66" y="413.10" width="1.6" height="3.0" fill="#4d66ad"/><rect x="525.12" y="413.10" width="1.6" height="3.0" fill="#4f62ab"/><rect x="528.57" y="413.10" width="1.6" height="3.0" fill="#545ca8"/><rect x="532.03" y="413.10" width="1.6" height="3.0" fill="#4e63ac"/><rect x="535.48" y="413.10" width="1.6" height="3.0" fill="#4d66ad"/><rect x="538.94" y="413.10" width="1.6" height="3.0" fill="#5659a7"/><rect x="542.39" y="413.10" width="1.6" height="3.0" fill="#5d50a2"/><rect x="545.85" y="413.10" width="1.6" height="3.0" fill="#5b53a4"/><rect x="549.30" y="413.10" width="1.6" height="3.0" fill="#525ea9"/><rect x="552.76" y="413.10" width="1.6" height="3.0" fill="#5d51a3"/><rect x="556.21" y="413.10" width="1.6" height="3.0" fill="#4e64ac"/><rect x="559.67" y="413.10" width="1.6" height="3.0" fill="#4f62ab"/><rect x="563.12" y="413.10" width="1.6" height="3.0" fill="#4d66ad"/><rect x="566.58" y="413.10" width="1.6" height="3.0" fill="#4d64ac"/><rect x="570.03" y="413.10" width="1.6" height="3.0" fill="#5758a6"/><rect x="573.49" y="413.10" width="1.6" height="3.0" fill="#5a55a5"/><rect x="576.94" y="413.10" width="1.6" height="3.0" fill="#555ba8"/><rect x="580.39" y="413.10" width="1.6" height="3.0" fill="#5b53a4"/><rect x="583.85" y="413.10" width="1.6" height="3.0" fill="#545ca8"/><rect x="587.31" y="413.10" width="1.6" height="3.0" fill="#5d51a3"/><rect x="590.76" y="413.10" width="1.6" height="3.0" fill="#5758a6"/><rect x="594.22" y="413.10" width="1.6" height="3.0" fill="#565aa7"/><rect x="597.67" y="413.10" width="1.6" height="3.0" fill="#4f62ab"/><rect x="601.12" y="413.10" width="1.6" height="3.0" fill="#545ca8"/><rect x="604.58" y="413.10" width="1.6" height="3.0" fill="#545ca8"/><rect x="608.04" y="413.10" width="1.6" height="3.0" fill="#5b53a4"/><rect x="611.49" y="413.10" width="1.6" height="3.0" fill="#5061aa"/><rect x="614.95" y="413.10" width="1.6" height="3.0" fill="#525faa"/><rect x="618.40" y="413.10" width="1.6" height="3.0" fill="#5b53a4"/><rect x="621.86" y="413.10" width="1.6" height="3.0" fill="#4e64ac"/><rect x="625.31" y="413.10" width="1.6" height="3.0" fill="#565aa7"/><rect x="628.76" y="413.10" width="1.6" height="3.0" fill="#5061aa"/><rect x="632.22" y="413.10" width="1.6" height="3.0" fill="#5857a6"/><rect x="635.68" y="413.10" width="1.6" height="3.0" fill="#5758a6"/><rect x="639.13" y="413.10" width="1.6" height="3.0" fill="#4e64ac"/><rect x="642.59" y="413.10" width="1.6" height="3.0" fill="#5955a5"/><rect x="646.04" y="413.10" width="1.6" height="3.0" fill="#545da8"/><rect x="649.50" y="413.10" width="1.6" height="3.0" fill="#525ea9"/><rect x="652.95" y="413.10" width="1.6" height="3.0" fill="#5b52a4"/><rect x="677.13" y="413.10" width="1.6" height="3.0" fill="#5a54a4"/><rect x="680.59" y="413.10" width="1.6" height="3.0" fill="#525fa9"/><rect x="684.05" y="413.10" width="1.6" height="3.0" fill="#5856a5"/><rect x="687.50" y="413.10" width="1.6" height="3.0" fill="#4f63ab"/><rect x="690.96" y="413.10" width="1.6" height="3.0" fill="#565aa7"/><rect x="694.41" y="413.10" width="1.6" height="3.0" fill="#4e64ac"/><rect x="697.87" y="413.10" width="1.6" height="3.0" fill="#5857a6"/><rect x="701.32" y="413.10" width="1.6" height="3.0" fill="#5d51a3"/><rect x="704.78" y="413.10" width="1.6" height="3.0" fill="#5857a6"/><rect x="722.05" y="413.10" width="1.6" height="3.0" fill="#4d65ac"/><rect x="725.50" y="413.10" width="1.6" height="3.0" fill="#555aa7"/><rect x="728.96" y="413.10" width="1.6" height="3.0" fill="#555ba8"/><rect x="749.69" y="413.10" width="1.6" height="3.0" fill="#545ca8"/><rect x="753.14" y="413.10" width="1.6" height="3.0" fill="#4f62ab"/><rect x="756.60" y="413.10" width="1.6" height="3.0" fill="#515faa"/><rect x="760.06" y="413.10" width="1.6" height="3.0" fill="#545ca8"/><rect x="763.51" y="413.10" width="1.6" height="3.0" fill="#4e64ac"/><rect x="766.97" y="413.10" width="1.6" height="3.0" fill="#5856a6"/><rect x="770.42" y="413.10" width="1.6" height="3.0" fill="#5160aa"/><rect x="773.88" y="413.10" width="1.6" height="3.0" fill="#525faa"/><rect x="777.33" y="413.10" width="1.6" height="3.0" fill="#4e64ac"/><rect x="780.79" y="413.10" width="1.6" height="3.0" fill="#525faa"/><rect x="784.24" y="413.10" width="1.6" height="3.0" fill="#5d51a3"/><rect x="787.70" y="413.10" width="1.6" height="3.0" fill="#525faa"/><rect x="791.15" y="413.10" width="1.6" height="3.0" fill="#4e64ac"/><rect x="794.61" y="413.10" width="1.6" height="3.0" fill="#525ea9"/><rect x="798.06" y="413.10" width="1.6" height="3.0" fill="#5d50a3"/><rect x="801.51" y="413.10" width="1.6" height="3.0" fill="#4e64ac"/><rect x="804.97" y="413.10" width="1.6" height="3.0" fill="#525ea9"/><rect x="808.43" y="413.10" width="1.6" height="3.0" fill="#5061ab"/><rect x="839.52" y="413.10" width="1.6" height="3.0" fill="#5856a5"/><rect x="842.98" y="413.10" width="1.6" height="3.0" fill="#555ba8"/><rect x="846.43" y="413.10" width="1.6" height="3.0" fill="#4e64ac"/><rect x="849.88" y="413.10" width="1.6" height="3.0" fill="#5c52a3"/><rect x="853.34" y="413.10" width="1.6" height="3.0" fill="#525ea9"/><rect x="856.80" y="413.10" width="1.6" height="3.0" fill="#5856a5"/><rect x="860.25" y="413.10" width="1.6" height="3.0" fill="#545ba8"/><rect x="863.71" y="413.10" width="1.6" height="3.0" fill="#5c52a3"/><rect x="867.16" y="413.10" width="1.6" height="3.0" fill="#4d64ac"/><rect x="870.62" y="413.10" width="1.6" height="3.0" fill="#5061aa"/><rect x="874.07" y="413.10" width="1.6" height="3.0" fill="#515faa"/><rect x="877.53" y="413.10" width="1.6" height="3.0" fill="#5160aa"/><rect x="880.98" y="413.10" width="1.6" height="3.0" fill="#5b53a4"/><rect x="884.44" y="413.10" width="1.6" height="3.0" fill="#555aa7"/><rect x="887.89" y="413.10" width="1.6" height="3.0" fill="#535ea9"/><rect x="127.79" y="408.40" width="1.6" height="3.0" fill="#5a55a5"/><rect x="131.25" y="408.40" width="1.6" height="3.0" fill="#5a55a5"/><rect x="134.70" y="408.40" width="1.6" height="3.0" fill="#5a55a5"/><rect x="138.16" y="408.40" width="1.6" height="3.0" fill="#5a55a5"/><rect x="210.71" y="408.40" width="1.6" height="3.0" fill="#5a55a5"/><rect x="214.16" y="408.40" width="1.6" height="3.0" fill="#5a55a5"/><rect x="217.62" y="408.40" width="1.6" height="3.0" fill="#5a55a5"/><rect x="248.72" y="408.40" width="1.6" height="3.0" fill="#5a55a5"/><rect x="252.17" y="408.40" width="1.6" height="3.0" fill="#5a55a5"/><rect x="255.62" y="408.40" width="1.6" height="3.0" fill="#5a55a5"/><rect x="286.72" y="408.40" width="1.6" height="3.0" fill="#5a55a5"/><rect x="290.18" y="408.40" width="1.6" height="3.0" fill="#5a55a5"/><rect x="293.63" y="408.40" width="1.6" height="3.0" fill="#5a55a5"/><rect x="297.08" y="408.40" width="1.6" height="3.0" fill="#5a55a5"/><rect x="321.27" y="408.40" width="1.6" height="3.0" fill="#5a55a5"/><rect x="324.72" y="408.40" width="1.6" height="3.0" fill="#5a55a5"/><rect x="328.18" y="408.40" width="1.6" height="3.0" fill="#5a55a5"/><rect x="331.64" y="408.40" width="1.6" height="3.0" fill="#5a55a5"/><rect x="335.09" y="408.40" width="1.6" height="3.0" fill="#5a55a5"/><rect x="338.55" y="408.40" width="1.6" height="3.0" fill="#5a55a5"/><rect x="342.00" y="408.40" width="1.6" height="3.0" fill="#5a55a5"/><rect x="345.45" y="408.40" width="1.6" height="3.0" fill="#5a55a5"/><rect x="376.55" y="408.40" width="1.6" height="3.0" fill="#5a55a5"/><rect x="380.01" y="408.40" width="1.6" height="3.0" fill="#5a55a5"/><rect x="383.46" y="408.40" width="1.6" height="3.0" fill="#5a55a5"/><rect x="442.19" y="408.40" width="1.6" height="3.0" fill="#5a55a5"/><rect x="445.65" y="408.40" width="1.6" height="3.0" fill="#5a55a5"/><rect x="449.10" y="408.40" width="1.6" height="3.0" fill="#5a55a5"/><rect x="452.56" y="408.40" width="1.6" height="3.0" fill="#5a55a5"/><rect x="518.21" y="408.40" width="1.6" height="3.0" fill="#5a55a5"/><rect x="521.66" y="408.40" width="1.6" height="3.0" fill="#5a55a5"/><rect x="525.12" y="408.40" width="1.6" height="3.0" fill="#5a55a5"/><rect x="528.57" y="408.40" width="1.6" height="3.0" fill="#5a55a5"/><rect x="532.03" y="408.40" width="1.6" height="3.0" fill="#5a55a5"/><rect x="535.48" y="408.40" width="1.6" height="3.0" fill="#5a55a5"/><rect x="538.94" y="408.40" width="1.6" height="3.0" fill="#5a55a5"/><rect x="542.39" y="408.40" width="1.6" height="3.0" fill="#5a55a5"/><rect x="545.85" y="408.40" width="1.6" height="3.0" fill="#5a55a5"/><rect x="549.30" y="408.40" width="1.6" height="3.0" fill="#5a55a5"/><rect x="552.76" y="408.40" width="1.6" height="3.0" fill="#5a55a5"/><rect x="556.21" y="408.40" width="1.6" height="3.0" fill="#5a55a5"/><rect x="559.67" y="408.40" width="1.6" height="3.0" fill="#5a55a5"/><rect x="563.12" y="408.40" width="1.6" height="3.0" fill="#5a55a5"/><rect x="566.58" y="408.40" width="1.6" height="3.0" fill="#5a55a5"/><rect x="570.03" y="408.40" width="1.6" height="3.0" fill="#5a55a5"/><rect x="573.49" y="408.40" width="1.6" height="3.0" fill="#5a55a5"/><rect x="576.94" y="408.40" width="1.6" height="3.0" fill="#5a55a5"/><rect x="580.39" y="408.40" width="1.6" height="3.0" fill="#5a55a5"/><rect x="583.85" y="408.40" width="1.6" height="3.0" fill="#5a55a5"/><rect x="628.76" y="408.40" width="1.6" height="3.0" fill="#5a55a5"/><rect x="632.22" y="408.40" width="1.6" height="3.0" fill="#5a55a5"/><rect x="635.68" y="408.40" width="1.6" height="3.0" fill="#5a55a5"/><rect x="639.13" y="408.40" width="1.6" height="3.0" fill="#5a55a5"/><rect x="642.59" y="408.40" width="1.6" height="3.0" fill="#5a55a5"/><rect x="677.13" y="408.40" width="1.6" height="3.0" fill="#5a55a5"/><rect x="680.59" y="408.40" width="1.6" height="3.0" fill="#5a55a5"/><rect x="684.05" y="408.40" width="1.6" height="3.0" fill="#5a55a5"/><rect x="722.05" y="408.40" width="1.6" height="3.0" fill="#5a55a5"/><rect x="725.50" y="408.40" width="1.6" height="3.0" fill="#5a55a5"/><rect x="728.96" y="408.40" width="1.6" height="3.0" fill="#5a55a5"/><rect x="749.69" y="408.40" width="1.6" height="3.0" fill="#5a55a5"/><rect x="753.14" y="408.40" width="1.6" height="3.0" fill="#5a55a5"/><rect x="756.60" y="408.40" width="1.6" height="3.0" fill="#5a55a5"/><rect x="760.06" y="408.40" width="1.6" height="3.0" fill="#5a55a5"/><rect x="763.51" y="408.40" width="1.6" height="3.0" fill="#5a55a5"/><rect x="766.97" y="408.40" width="1.6" height="3.0" fill="#5a55a5"/><rect x="770.42" y="408.40" width="1.6" height="3.0" fill="#5a55a5"/><rect x="773.88" y="408.40" width="1.6" height="3.0" fill="#5a55a5"/><rect x="839.52" y="408.40" width="1.6" height="3.0" fill="#5a55a5"/><rect x="842.98" y="408.40" width="1.6" height="3.0" fill="#5a55a5"/><rect x="846.43" y="408.40" width="1.6" height="3.0" fill="#5a55a5"/><rect x="849.88" y="408.40" width="1.6" height="3.0" fill="#5a55a5"/><rect x="863.71" y="408.40" width="1.6" height="3.0" fill="#5a55a5"/><rect x="867.16" y="408.40" width="1.6" height="3.0" fill="#5a55a5"/><rect x="870.62" y="408.40" width="1.6" height="3.0" fill="#5a55a5"/><rect x="874.07" y="408.40" width="1.6" height="3.0" fill="#5a55a5"/><rect x="887.89" y="408.40" width="1.6" height="3.0" fill="#5a55a5"/><rect x="127.79" y="403.70" width="1.6" height="3.0" fill="#5a55a5"/><rect x="131.25" y="403.70" width="1.6" height="3.0" fill="#5a55a5"/><rect x="134.70" y="403.70" width="1.6" height="3.0" fill="#5a55a5"/><rect x="138.16" y="403.70" width="1.6" height="3.0" fill="#5a55a5"/><rect x="321.27" y="403.70" width="1.6" height="3.0" fill="#5a55a5"/><rect x="324.72" y="403.70" width="1.6" height="3.0" fill="#5a55a5"/><rect x="328.18" y="403.70" width="1.6" height="3.0" fill="#5a55a5"/><rect x="331.64" y="403.70" width="1.6" height="3.0" fill="#5a55a5"/><rect x="570.03" y="403.70" width="1.6" height="3.0" fill="#5a55a5"/><rect x="573.49" y="403.70" width="1.6" height="3.0" fill="#5a55a5"/><rect x="576.94" y="403.70" width="1.6" height="3.0" fill="#5a55a5"/><rect x="580.39" y="403.70" width="1.6" height="3.0" fill="#5a55a5"/><rect x="583.85" y="403.70" width="1.6" height="3.0" fill="#5a55a5"/><rect x="677.13" y="403.70" width="1.6" height="3.0" fill="#5a55a5"/><rect x="680.59" y="403.70" width="1.6" height="3.0" fill="#5a55a5"/><rect x="684.05" y="403.70" width="1.6" height="3.0" fill="#5a55a5"/><rect x="839.52" y="403.70" width="1.6" height="3.0" fill="#5a55a5"/><rect x="842.98" y="403.70" width="1.6" height="3.0" fill="#5a55a5"/><rect x="846.43" y="403.70" width="1.6" height="3.0" fill="#5a55a5"/><rect x="849.88" y="403.70" width="1.6" height="3.0" fill="#5a55a5"/><rect x="887.89" y="403.70" width="1.6" height="3.0" fill="#5a55a5"/><rect x="677.13" y="398.90" width="1.6" height="3.0" fill="#5e4fa2"/><rect x="680.59" y="398.90" width="1.6" height="3.0" fill="#5e4fa2"/><rect x="684.05" y="398.90" width="1.6" height="3.0" fill="#5e4fa2"/><rect x="839.52" y="398.90" width="1.6" height="3.0" fill="#5e4fa2"/><rect x="842.98" y="398.90" width="1.6" height="3.0" fill="#5e4fa2"/><rect x="846.43" y="398.90" width="1.6" height="3.0" fill="#5e4fa2"/><rect x="849.88" y="398.90" width="1.6" height="3.0" fill="#5e4fa2"/><rect x="65.60" y="486.00" width="1.6" height="3.0" fill="#5160aa"/><rect x="69.06" y="486.00" width="1.6" height="3.0" fill="#5a54a4"/><rect x="72.51" y="486.00" width="1.6" height="3.0" fill="#535ea9"/><rect x="75.97" y="486.00" width="1.6" height="3.0" fill="#5062ab"/><rect x="79.42" y="486.00" width="1.6" height="3.0" fill="#555ba8"/><rect x="82.88" y="486.00" width="1.6" height="3.0" fill="#545ca8"/><rect x="86.33" y="486.00" width="1.6" height="3.0" fill="#4e63ac"/><rect x="89.79" y="486.00" width="1.6" height="3.0" fill="#4f63ab"/><rect x="93.24" y="486.00" width="1.6" height="3.0" fill="#476db0"/><rect x="96.70" y="486.00" width="1.6" height="3.0" fill="#4f62ab"/><rect x="100.15" y="486.00" width="1.6" height="3.0" fill="#5b53a4"/><rect x="103.61" y="486.00" width="1.6" height="3.0" fill="#4c67ad"/><rect x="107.06" y="486.00" width="1.6" height="3.0" fill="#4d65ac"/><rect x="110.52" y="486.00" width="1.6" height="3.0" fill="#545da8"/><rect x="113.97" y="486.00" width="1.6" height="3.0" fill="#535da9"/><rect x="117.43" y="486.00" width="1.6" height="3.0" fill="#486baf"/><rect x="120.88" y="486.00" width="1.6" height="3.0" fill="#4f62ab"/><rect x="124.34" y="486.00" width="1.6" height="3.0" fill="#5758a6"/><rect x="127.79" y="486.00" width="1.6" height="3.0" fill="#4570b2"/><rect x="131.25" y="486.00" width="1.6" height="3.0" fill="#466db0"/><rect x="134.70" y="486.00" width="1.6" height="3.0" fill="#5857a6"/><rect x="138.16" y="486.00" width="1.6" height="3.0" fill="#5b52a4"/><rect x="141.61" y="486.00" width="1.6" height="3.0" fill="#456fb1"/><rect x="145.06" y="486.00" width="1.6" height="3.0" fill="#466eb1"/><rect x="148.52" y="486.00" width="1.6" height="3.0" fill="#545ca8"/><rect x="151.97" y="486.00" width="1.6" height="3.0" fill="#4b67ae"/><rect x="155.43" y="486.00" width="1.6" height="3.0" fill="#555ba8"/><rect x="158.88" y="486.00" width="1.6" height="3.0" fill="#4570b2"/><rect x="162.34" y="486.00" width="1.6" height="3.0" fill="#5062ab"/><rect x="165.80" y="486.00" width="1.6" height="3.0" fill="#486cb0"/><rect x="169.25" y="486.00" width="1.6" height="3.0" fill="#4c66ad"/><rect x="172.70" y="486.00" width="1.6" height="3.0" fill="#5659a7"/><rect x="176.16" y="486.00" width="1.6" height="3.0" fill="#5160aa"/><rect x="179.62" y="486.00" width="1.6" height="3.0" fill="#5a54a4"/><rect x="183.07" y="486.00" width="1.6" height="3.0" fill="#5a54a5"/><rect x="186.52" y="486.00" width="1.6" height="3.0" fill="#545ca8"/><rect x="189.98" y="486.00" width="1.6" height="3.0" fill="#5a54a4"/><rect x="193.44" y="486.00" width="1.6" height="3.0" fill="#486baf"/><rect x="196.89" y="486.00" width="1.6" height="3.0" fill="#5061ab"/><rect x="200.34" y="486.00" width="1.6" height="3.0" fill="#4c66ad"/><rect x="203.80" y="486.00" width="1.6" height="3.0" fill="#545ca8"/><rect x="207.25" y="486.00" width="1.6" height="3.0" fill="#476db0"/><rect x="210.71" y="486.00" width="1.6" height="3.0" fill="#5b53a4"/><rect x="214.16" y="486.00" width="1.6" height="3.0" fill="#4d65ac"/><rect x="217.62" y="486.00" width="1.6" height="3.0" fill="#5856a6"/><rect x="221.07" y="486.00" width="1.6" height="3.0" fill="#5c51a3"/><rect x="224.53" y="486.00" width="1.6" height="3.0" fill="#5c51a3"/><rect x="227.98" y="486.00" width="1.6" height="3.0" fill="#4e64ac"/><rect x="231.44" y="486.00" width="1.6" height="3.0" fill="#5a54a4"/><rect x="234.90" y="486.00" width="1.6" height="3.0" fill="#5e4fa2"/><rect x="238.35" y="486.00" width="1.6" height="3.0" fill="#476db0"/><rect x="241.81" y="486.00" width="1.6" height="3.0" fill="#5758a6"/><rect x="245.26" y="486.00" width="1.6" height="3.0" fill="#5758a6"/><rect x="248.72" y="486.00" width="1.6" height="3.0" fill="#5062ab"/><rect x="252.17" y="486.00" width="1.6" height="3.0" fill="#4b68ae"/><rect x="255.62" y="486.00" width="1.6" height="3.0" fill="#486baf"/><rect x="259.08" y="486.00" width="1.6" height="3.0" fill="#4e63ac"/><rect x="262.54" y="486.00" width="1.6" height="3.0" fill="#5c51a3"/><rect x="265.99" y="486.00" width="1.6" height="3.0" fill="#4e63ac"/><rect x="269.44" y="486.00" width="1.6" height="3.0" fill="#4a68ae"/><rect x="272.90" y="486.00" width="1.6" height="3.0" fill="#545ca8"/><rect x="276.35" y="486.00" width="1.6" height="3.0" fill="#4f62ab"/><rect x="279.81" y="486.00" width="1.6" height="3.0" fill="#545ca8"/><rect x="283.26" y="486.00" width="1.6" height="3.0" fill="#5062ab"/><rect x="286.72" y="486.00" width="1.6" height="3.0" fill="#4b67ae"/><rect x="290.18" y="486.00" width="1.6" height="3.0" fill="#4570b2"/><rect x="293.63" y="486.00" width="1.6" height="3.0" fill="#5955a5"/><rect x="297.08" y="486.00" width="1.6" height="3.0" fill="#555ba8"/><rect x="300.54" y="486.00" width="1.6" height="3.0" fill="#4a69ae"/><rect x="304.00" y="486.00" width="1.6" height="3.0" fill="#5160aa"/><rect x="307.45" y="486.00" width="1.6" height="3.0" fill="#535da9"/><rect x="310.91" y="486.00" width="1.6" height="3.0" fill="#5160aa"/><rect x="314.36" y="486.00" width="1.6" height="3.0" fill="#5b52a4"/><rect x="317.81" y="486.00" width="1.6" height="3.0" fill="#5857a6"/><rect x="321.27" y="486.00" width="1.6" height="3.0" fill="#4c67ad"/><rect x="324.72" y="486.00" width="1.6" height="3.0" fill="#4d66ad"/><rect x="328.18" y="486.00" width="1.6" height="3.0" fill="#545ca8"/><rect x="331.64" y="486.00" width="1.6" height="3.0" fill="#486cb0"/><rect x="335.09" y="486.00" width="1.6" height="3.0" fill="#5c51a3"/><rect x="338.55" y="486.00" width="1.6" height="3.0" fill="#4570b1"/><rect x="342.00" y="486.00" width="1.6" height="3.0" fill="#5160aa"/><rect x="345.45" y="486.00" width="1.6" height="3.0" fill="#4b68ae"/><rect x="348.91" y="486.00" width="1.6" height="3.0" fill="#515faa"/><rect x="352.36" y="486.00" width="1.6" height="3.0" fill="#4570b1"/><rect x="355.82" y="486.00" width="1.6" height="3.0" fill="#4a6aaf"/><rect x="359.28" y="486.00" width="1.6" height="3.0" fill="#5e4fa2"/><rect x="362.73" y="486.00" width="1.6" height="3.0" fill="#5856a5"/><rect x="366.19" y="486.00" width="1.6" height="3.0" fill="#496aaf"/><rect x="369.64" y="486.00" width="1.6" height="3.0" fill="#5062ab"/><rect x="373.09" y="486.00" width="1.6" height="3.0" fill="#4470b2"/><rect x="376.55" y="486.00" width="1.6" height="3.0" fill="#476db0"/><rect x="380.01" y="486.00" width="1.6" height="3.0" fill="#496baf"/><rect x="383.46" y="486.00" width="1.6" height="3.0" fill="#5e50a2"/><rect x="386.92" y="486.00" width="1.6" height="3.0" fill="#4c67ad"/><rect x="390.37" y="486.00" width="1.6" height="3.0" fill="#4a69ae"/><rect x="393.82" y="486.00" width="1.6" height="3.0" fill="#456fb1"/><rect x="397.28" y="486.00" width="1.6" height="3.0" fill="#476db0"/><rect x="400.73" y="486.00" width="1.6" height="3.0" fill="#5e4fa2"/><rect x="404.19" y="486.00" width="1.6" height="3.0" fill="#5758a6"/><rect x="407.65" y="486.00" width="1.6" height="3.0" fill="#5c52a3"/><rect x="411.10" y="486.00" width="1.6" height="3.0" fill="#5a55a5"/><rect x="414.56" y="486.00" width="1.6" height="3.0" fill="#5856a6"/><rect x="418.01" y="486.00" width="1.6" height="3.0" fill="#4a68ae"/><rect x="421.46" y="486.00" width="1.6" height="3.0" fill="#486baf"/><rect x="424.92" y="486.00" width="1.6" height="3.0" fill="#4b68ae"/><rect x="428.38" y="486.00" width="1.6" height="3.0" fill="#456fb1"/><rect x="431.83" y="486.00" width="1.6" height="3.0" fill="#486baf"/><rect x="435.29" y="486.00" width="1.6" height="3.0" fill="#5759a7"/><rect x="438.74" y="486.00" width="1.6" height="3.0" fill="#5160aa"/><rect x="442.19" y="486.00" width="1.6" height="3.0" fill="#4471b2"/><rect x="445.65" y="486.00" width="1.6" height="3.0" fill="#4c67ad"/><rect x="449.10" y="486.00" width="1.6" height="3.0" fill="#5a54a4"/><rect x="452.56" y="486.00" width="1.6" height="3.0" fill="#5a54a4"/><rect x="456.02" y="486.00" width="1.6" height="3.0" fill="#5758a6"/><rect x="459.47" y="486.00" width="1.6" height="3.0" fill="#5758a6"/><rect x="462.93" y="486.00" width="1.6" height="3.0" fill="#5c52a3"/><rect x="466.38" y="486.00" width="1.6" height="3.0" fill="#525ea9"/><rect x="469.83" y="486.00" width="1.6" height="3.0" fill="#4e64ac"/><rect x="473.29" y="486.00" width="1.6" height="3.0" fill="#535ea9"/><rect x="476.74" y="486.00" width="1.6" height="3.0" fill="#4b68ae"/><rect x="480.20" y="486.00" width="1.6" height="3.0" fill="#4570b2"/><rect x="483.66" y="486.00" width="1.6" height="3.0" fill="#4a68ae"/><rect x="487.11" y="486.00" width="1.6" height="3.0" fill="#5062ab"/><rect x="490.56" y="486.00" width="1.6" height="3.0" fill="#476db0"/><rect x="494.02" y="486.00" width="1.6" height="3.0" fill="#466eb1"/><rect x="497.47" y="486.00" width="1.6" height="3.0" fill="#4a69ae"/><rect x="500.93" y="486.00" width="1.6" height="3.0" fill="#4d65ac"/><rect x="504.39" y="486.00" width="1.6" height="3.0" fill="#5d50a3"/><rect x="507.84" y="486.00" width="1.6" height="3.0" fill="#5061aa"/><rect x="511.30" y="486.00" width="1.6" height="3.0" fill="#5a55a5"/><rect x="514.75" y="486.00" width="1.6" height="3.0" fill="#5758a6"/><rect x="518.21" y="486.00" width="1.6" height="3.0" fill="#535da9"/><rect x="521.66" y="486.00" width="1.6" height="3.0" fill="#4c66ad"/><rect x="525.12" y="486.00" width="1.6" height="3.0" fill="#4e64ac"/><rect x="528.57" y="486.00" width="1.6" height="3.0" fill="#4c66ad"/><rect x="532.03" y="486.00" width="1.6" height="3.0" fill="#545ca8"/><rect x="535.48" y="486.00" width="1.6" height="3.0" fill="#5a54a4"/><rect x="538.94" y="486.00" width="1.6" height="3.0" fill="#5856a5"/><rect x="542.39" y="486.00" width="1.6" height="3.0" fill="#4b67ad"/><rect x="545.85" y="486.00" width="1.6" height="3.0" fill="#486cb0"/><rect x="549.30" y="486.00" width="1.6" height="3.0" fill="#4471b2"/><rect x="552.76" y="486.00" width="1.6" height="3.0" fill="#535da9"/><rect x="556.21" y="486.00" width="1.6" height="3.0" fill="#4a69af"/><rect x="559.67" y="486.00" width="1.6" height="3.0" fill="#4471b2"/><rect x="563.12" y="486.00" width="1.6" height="3.0" fill="#4c67ad"/><rect x="566.58" y="486.00" width="1.6" height="3.0" fill="#4a69ae"/><rect x="570.03" y="486.00" width="1.6" height="3.0" fill="#496aaf"/><rect x="573.49" y="486.00" width="1.6" height="3.0" fill="#555aa7"/><rect x="576.94" y="486.00" width="1.6" height="3.0" fill="#535da9"/><rect x="580.39" y="486.00" width="1.6" height="3.0" fill="#4b68ae"/><rect x="583.85" y="486.00" width="1.6" height="3.0" fill="#5758a6"/><rect x="587.31" y="486.00" width="1.6" height="3.0" fill="#496aaf"/><rect x="590.76" y="486.00" width="1.6" height="3.0" fill="#5c52a3"/><rect x="594.22" y="486.00" width="1.6" height="3.0" fill="#476db0"/><rect x="597.67" y="486.00" width="1.6" height="3.0" fill="#535da9"/><rect x="601.12" y="486.00" width="1.6" height="3.0" fill="#5659a7"/><rect x="604.58" y="486.00" width="1.6" height="3.0" fill="#5758a6"/><rect x="608.04" y="486.00" width="1.6" height="3.0" fill="#5061aa"/><rect x="611.49" y="486.00" width="1.6" height="3.0" fill="#5b53a4"/><rect x="614.95" y="486.00" width="1.6" height="3.0" fill="#545ca8"/><rect x="618.40" y="486.00" width="1.6" height="3.0" fill="#565aa7"/><rect x="621.86" y="486.00" width="1.6" height="3.0" fill="#466eb1"/><rect x="625.31" y="486.00" width="1.6" height="3.0" fill="#496baf"/><rect x="628.76" y="486.00" width="1.6" height="3.0" fill="#5061ab"/><rect x="632.22" y="486.00" width="1.6" height="3.0" fill="#525fa9"/><rect x="635.68" y="486.00" width="1.6" height="3.0" fill="#466eb1"/><rect x="639.13" y="486.00" width="1.6" height="3.0" fill="#5758a6"/><rect x="642.59" y="486.00" width="1.6" height="3.0" fill="#4d65ad"/><rect x="646.04" y="486.00" width="1.6" height="3.0" fill="#5061ab"/><rect x="649.50" y="486.00" width="1.6" height="3.0" fill="#515faa"/><rect x="652.95" y="486.00" width="1.6" height="3.0" fill="#5a55a5"/><rect x="656.41" y="486.00" width="1.6" height="3.0" fill="#4c67ad"/><rect x="659.86" y="486.00" width="1.6" height="3.0" fill="#525ea9"/><rect x="663.32" y="486.00" width="1.6" height="3.0" fill="#545ca8"/><rect x="666.77" y="486.00" width="1.6" height="3.0" fill="#555ba8"/><rect x="670.23" y="486.00" width="1.6" height="3.0" fill="#4c67ad"/><rect x="673.68" y="486.00" width="1.6" height="3.0" fill="#4b68ae"/><rect x="677.13" y="486.00" width="1.6" height="3.0" fill="#5061ab"/><rect x="680.59" y="486.00" width="1.6" height="3.0" fill="#535da8"/><rect x="684.05" y="486.00" width="1.6" height="3.0" fill="#555ba8"/><rect x="687.50" y="486.00" width="1.6" height="3.0" fill="#476db0"/><rect x="690.96" y="486.00" width="1.6" height="3.0" fill="#4f62ab"/><rect x="694.41" y="486.00" width="1.6" height="3.0" fill="#525ea9"/><rect x="697.87" y="486.00" width="1.6" height="3.0" fill="#496baf"/><rect x="701.32" y="486.00" width="1.6" height="3.0" fill="#466eb1"/><rect x="704.78" y="486.00" width="1.6" height="3.0" fill="#5c51a3"/><rect x="708.23" y="486.00" width="1.6" height="3.0" fill="#4470b2"/><rect x="711.69" y="486.00" width="1.6" height="3.0" fill="#5160aa"/><rect x="715.14" y="486.00" width="1.6" height="3.0" fill="#4b67ad"/><rect x="718.60" y="486.00" width="1.6" height="3.0" fill="#4470b2"/><rect x="722.05" y="486.00" width="1.6" height="3.0" fill="#4b68ae"/><rect x="725.50" y="486.00" width="1.6" height="3.0" fill="#486cb0"/><rect x="728.96" y="486.00" width="1.6" height="3.0" fill="#4e64ac"/><rect x="732.42" y="486.00" width="1.6" height="3.0" fill="#5c52a3"/><rect x="735.87" y="486.00" width="1.6" height="3.0" fill="#466eb1"/><rect x="739.33" y="486.00" width="1.6" height="3.0" fill="#4d65ad"/><rect x="742.78" y="486.00" width="1.6" height="3.0" fill="#5659a7"/><rect x="746.24" y="486.00" width="1.6" height="3.0" fill="#545ca8"/><rect x="749.69" y="486.00" width="1.6" height="3.0" fill="#4470b2"/><rect x="753.14" y="486.00" width="1.6" height="3.0" fill="#4a69ae"/><rect x="756.60" y="486.00" width="1.6" height="3.0" fill="#4b68ae"/><rect x="760.06" y="486.00" width="1.6" height="3.0" fill="#5b53a4"/><rect x="763.51" y="486.00" width="1.6" height="3.0" fill="#4f62ab"/><rect x="766.97" y="486.00" width="1.6" height="3.0" fill="#4a68ae"/><rect x="770.42" y="486.00" width="1.6" height="3.0" fill="#5061aa"/><rect x="773.88" y="486.00" width="1.6" height="3.0" fill="#5061aa"/><rect x="777.33" y="486.00" width="1.6" height="3.0" fill="#486cb0"/><rect x="780.79" y="486.00" width="1.6" height="3.0" fill="#555aa7"/><rect x="784.24" y="486.00" width="1.6" height="3.0" fill="#5759a7"/><rect x="787.70" y="486.00" width="1.6" height="3.0" fill="#5061aa"/><rect x="791.15" y="486.00" width="1.6" height="3.0" fill="#525fa9"/><rect x="794.61" y="486.00" width="1.6" height="3.0" fill="#5857a6"/><rect x="798.06" y="486.00" width="1.6" height="3.0" fill="#5d50a3"/><rect x="801.51" y="486.00" width="1.6" height="3.0" fill="#545ca8"/><rect x="804.97" y="486.00" width="1.6" height="3.0" fill="#4570b1"/><rect x="808.43" y="486.00" width="1.6" height="3.0" fill="#5160aa"/><rect x="811.88" y="486.00" width="1.6" height="3.0" fill="#555ba7"/><rect x="815.34" y="486.00" width="1.6" height="3.0" fill="#4c66ad"/><rect x="818.79" y="486.00" width="1.6" height="3.0" fill="#565aa7"/><rect x="822.25" y="486.00" width="1.6" height="3.0" fill="#4d65ac"/><rect x="825.70" y="486.00" width="1.6" height="3.0" fill="#545ca8"/><rect x="829.16" y="486.00" width="1.6" height="3.0" fill="#545ca8"/><rect x="832.61" y="486.00" width="1.6" height="3.0" fill="#555aa7"/><rect x="836.07" y="486.00" width="1.6" height="3.0" fill="#5c52a3"/><rect x="839.52" y="486.00" width="1.6" height="3.0" fill="#5659a7"/><rect x="842.98" y="486.00" width="1.6" height="3.0" fill="#5659a7"/><rect x="846.43" y="486.00" width="1.6" height="3.0" fill="#5659a7"/><rect x="849.88" y="486.00" width="1.6" height="3.0" fill="#4a69ae"/><rect x="853.34" y="486.00" width="1.6" height="3.0" fill="#545ca8"/><rect x="856.80" y="486.00" width="1.6" height="3.0" fill="#545ca8"/><rect x="860.25" y="486.00" width="1.6" height="3.0" fill="#456fb1"/><rect x="863.71" y="486.00" width="1.6" height="3.0" fill="#5857a6"/><rect x="867.16" y="486.00" width="1.6" height="3.0" fill="#4a69af"/><rect x="870.62" y="486.00" width="1.6" height="3.0" fill="#5160aa"/><rect x="874.07" y="486.00" width="1.6" height="3.0" fill="#515faa"/><rect x="877.53" y="486.00" width="1.6" height="3.0" fill="#5759a7"/><rect x="880.98" y="486.00" width="1.6" height="3.0" fill="#5857a6"/><rect x="884.44" y="486.00" width="1.6" height="3.0" fill="#5061ab"/><rect x="887.89" y="486.00" width="1.6" height="3.0" fill="#5c51a3"/></g>
<rect x="922.5" y="285.5" width="911" height="242" rx="3" fill="none" stroke="#060709" stroke-width="1"/>
<rect x="923.5" y="286.5" width="909" height="240" rx="2.5" fill="#131519" stroke="#222128" stroke-width="1"/>
<path d="M924 289.5 Q924 287 926.5 287 L951 287 L924 314 Z" fill="#202226"/>
<path d="M931 290h2.6v2.2h-2.6z M930 293.2h3.6v4.6h1v1.6h-4.6v-1.6h1v-3h-1z" fill="#9ea3a8"/>
<text x="1378.0" y="304.7" font-size="14.25" fill="#d8d9da" text-anchor="middle" font-weight="normal" stroke="#d8d9da" stroke-width="0.45">Storage async write duration</text>
<line x1="978" y1="329.5" x2="1610" y2="329.5" stroke="#35373b" stroke-width="1"/>
<line x1="978" y1="357.6" x2="1610" y2="357.6" stroke="#35373b" stroke-width="1"/>
<line x1="978" y1="385.6" x2="1610" y2="385.6" stroke="#35373b" stroke-width="1"/>
<line x1="978" y1="413.6" x2="1610" y2="413.6" stroke="#35373b" stroke-width="1"/>
<line x1="978" y1="441.7" x2="1610" y2="441.7" stroke="#35373b" stroke-width="1"/>
<line x1="978" y1="469.8" x2="1610" y2="469.8" stroke="#35373b" stroke-width="1"/>
<line x1="978" y1="497.8" x2="1610" y2="497.8" stroke="#35373b" stroke-width="1"/>
<line x1="1062.1" y1="329" x2="1062.1" y2="497.5" stroke="#35373b" stroke-width="1"/>
<line x1="1167.4" y1="329" x2="1167.4" y2="497.5" stroke="#35373b" stroke-width="1"/>
<line x1="1272.7" y1="329" x2="1272.7" y2="497.5" stroke="#35373b" stroke-width="1"/>
<line x1="1378.0" y1="329" x2="1378.0" y2="497.5" stroke="#35373b" stroke-width="1"/>
<line x1="1483.3" y1="329" x2="1483.3" y2="497.5" stroke="#35373b" stroke-width="1"/>
<line x1="1588.6" y1="329" x2="1588.6" y2="497.5" stroke="#35373b" stroke-width="1"/>
<text x="973" y="332.5" font-size="12.4" fill="#c7d0d9" text-anchor="end" font-weight="normal" >3 s</text>
<text x="973" y="360.5" font-size="12.4" fill="#c7d0d9" text-anchor="end" font-weight="normal" >2.50 s</text>
<text x="973" y="388.6" font-size="12.4" fill="#c7d0d9" text-anchor="end" font-weight="normal" >2 s</text>
<text x="973" y="416.6" font-size="12.4" fill="#c7d0d9" text-anchor="end" font-weight="normal" >1.50 s</text>
<text x="973" y="444.7" font-size="12.4" fill="#c7d0d9" text-anchor="end" font-weight="normal" >1 s</text>
<text x="973" y="472.7" font-size="12.4" fill="#c7d0d9" text-anchor="end" font-weight="normal" >500 ms</text>
<text x="973" y="500.8" font-size="12.4" fill="#c7d0d9" text-anchor="end" font-weight="normal" >0 s</text>
<text x="1061.6" y="514" font-size="12.4" fill="#c7d0d9" text-anchor="middle" font-weight="normal" >14:50</text>
<text x="1166.8999999999999" y="514" font-size="12.4" fill="#c7d0d9" text-anchor="middle" font-weight="normal" >15:00</text>
<text x="1272.1999999999998" y="514" font-size="12.4" fill="#c7d0d9" text-anchor="middle" font-weight="normal" >15:10</text>
<text x="1377.5" y="514" font-size="12.4" fill="#c7d0d9" text-anchor="middle" font-weight="normal" >15:20</text>
<text x="1482.8" y="514" font-size="12.4" fill="#c7d0d9" text-anchor="middle" font-weight="normal" >15:30</text>
<text x="1588.1" y="514" font-size="12.4" fill="#c7d0d9" text-anchor="middle" font-weight="normal" >15:40</text>
<clipPath id="cD"><rect x="978" y="320" width="632" height="178"/></clipPath>
<linearGradient id="gGrnD" x1="0" y1="329" x2="0" y2="497" gradientUnits="userSpaceOnUse"><stop offset="0" stop-color="#7EB26D" stop-opacity="0.14"/><stop offset="1" stop-color="#7EB26D" stop-opacity="0.04"/></linearGradient>
<linearGradient id="gYelD" x1="0" y1="329" x2="0" y2="497" gradientUnits="userSpaceOnUse"><stop offset="0" stop-color="#EAB839" stop-opacity="0.1"/><stop offset="1" stop-color="#EAB839" stop-opacity="0.03"/></linearGradient>
<path d="M978.0 486.5 L980.0 479.3 L988.0 479.3 L992.0 481.0 L994.0 424.0 L995.5 424.0 L1004.3 424.0 L1006.0 460.9 L1015.0 460.9 L1017.0 487.5 L1019.0 479.3 L1028.0 479.3 L1030.0 487.0 L1032.4 461.3 L1038.5 461.3 L1041.0 479.0 L1044.0 480.0 L1046.0 488.0 L1050.0 488.0 L1054.0 479.0 L1059.0 461.0 L1074.4 463.0 L1077.5 351.3 L1083.6 351.3 L1087.0 461.0 L1094.0 461.0 L1096.0 487.0 L1100.0 487.0 L1103.0 461.0 L1109.2 461.0 L1112.0 488.0 L1120.0 488.0 L1125.0 479.0 L1136.0 479.0 L1138.0 424.0 L1146.0 424.0 L1150.0 482.0 L1152.0 488.0 L1160.0 488.0 L1161.5 474.6 L1167.6 474.6 L1170.0 488.0 L1185.0 488.0 L1190.0 461.0 L1196.4 461.0 L1199.0 479.0 L1205.0 479.0 L1207.0 487.0 L1209.0 479.0 L1218.0 479.0 L1220.0 488.0 L1225.0 424.0 L1233.0 424.0 L1236.0 488.0 L1238.0 488.0 L1240.0 461.0 L1247.0 461.0 L1250.0 479.0 L1254.0 479.0 L1258.0 488.0 L1262.0 488.0 L1265.0 461.0 L1274.0 461.0 L1280.0 487.0 L1290.0 487.0 L1293.0 461.0 L1302.0 461.0 L1310.0 487.0 L1318.0 487.0 L1322.0 479.0 L1334.0 479.0 L1338.0 488.0 L1352.0 487.0 L1356.0 479.0 L1370.0 479.0 L1372.5 440.0 L1374.0 424.0 L1380.7 424.0 L1385.0 461.0 L1389.0 461.0 L1391.0 479.0 L1396.0 479.0 L1400.0 468.0 L1403.0 468.0 L1407.0 461.0 L1415.0 461.0 L1418.0 479.0 L1430.0 479.0 L1434.0 488.0 L1440.0 461.0 L1445.0 461.0 L1450.0 423.0 L1454.4 351.3 L1462.6 351.3 L1466.0 479.0 L1472.0 479.0 L1475.0 488.0 L1478.0 479.0 L1482.0 479.0 L1484.0 461.0 L1491.0 461.0 L1494.0 479.0 L1506.0 479.0 L1509.0 461.0 L1517.0 461.0 L1520.0 479.0 L1525.0 488.0 L1530.0 488.0 L1533.0 479.0 L1538.0 479.0 L1543.0 463.0 L1550.0 463.0 L1555.0 488.0 L1570.0 488.0 L1576.0 455.0 L1579.0 424.0 L1587.0 424.0 L1590.0 440.0 L1593.0 461.0 L1597.0 461.0 L1599.0 479.0 L1601.0 490.0 L1604.0 479.0 L1610.0 479.0 L1610.0 497.5 L978.0 497.5 Z" fill="url(#gGrnD)" stroke="none" clip-path="url(#cD)"/>
<path d="M978.0 489.6 L994.0 489.0 L997.6 462.5 L1001.7 462.5 L1004.0 489.0 L1008.0 486.0 L1010.0 482.4 L1013.0 488.0 L1020.0 487.0 L1022.0 483.0 L1026.0 489.0 L1030.0 491.0 L1055.0 491.0 L1060.0 482.4 L1064.0 482.4 L1067.0 489.0 L1075.0 489.0 L1077.0 429.1 L1081.0 429.1 L1085.0 488.0 L1089.0 485.0 L1091.0 482.0 L1094.0 487.0 L1100.0 492.0 L1138.0 490.0 L1141.0 455.8 L1144.0 455.8 L1147.0 492.0 L1160.0 492.0 L1164.0 489.0 L1168.0 492.0 L1185.0 492.0 L1188.0 476.0 L1190.0 472.0 L1196.0 472.0 L1199.0 492.0 L1205.0 489.0 L1222.0 489.0 L1225.0 470.0 L1227.0 445.5 L1232.0 448.0 L1236.0 492.0 L1250.0 490.0 L1266.0 489.0 L1269.0 481.3 L1272.0 481.3 L1276.0 488.0 L1280.0 492.0 L1295.0 492.0 L1298.0 488.0 L1302.0 492.0 L1326.0 492.0 L1330.0 489.0 L1336.0 492.0 L1350.0 492.0 L1355.0 489.0 L1370.0 489.0 L1376.0 470.0 L1378.0 456.8 L1382.0 456.8 L1384.0 475.0 L1388.0 478.0 L1392.0 489.0 L1400.0 489.0 L1406.0 480.0 L1410.0 476.0 L1414.0 482.0 L1420.0 487.0 L1450.0 489.0 L1454.0 465.0 L1457.0 427.0 L1460.0 427.0 L1463.0 450.0 L1465.0 488.0 L1470.0 492.0 L1484.0 485.0 L1487.0 481.0 L1490.0 486.0 L1500.0 492.0 L1510.0 484.0 L1513.0 481.0 L1516.0 486.0 L1520.0 492.0 L1540.0 490.0 L1545.0 487.0 L1550.0 490.0 L1555.0 492.0 L1570.0 492.0 L1580.0 484.0 L1588.0 479.0 L1594.0 488.0 L1600.0 492.0 L1606.0 486.0 L1610.0 482.0 L1610.0 497.5 L978.0 497.5 Z" fill="url(#gYelD)" stroke="none" clip-path="url(#cD)"/>
<path d="M978.0 495.4 L984.0 495.4 L990.0 495.4 L996.0 495.0 L1002.0 494.4 L1008.0 495.5 L1014.0 495.1 L1020.0 495.3 L1026.0 495.5 L1032.0 495.4 L1038.0 495.5 L1044.0 495.1 L1050.0 495.3 L1056.0 495.2 L1062.0 495.3 L1068.0 495.3 L1074.0 495.1 L1080.0 493.6 L1086.0 495.2 L1092.0 495.5 L1098.0 495.4 L1104.0 495.1 L1110.0 495.4 L1116.0 495.1 L1122.0 495.4 L1128.0 495.1 L1134.0 495.1 L1140.0 494.2 L1146.0 494.9 L1152.0 495.2 L1158.0 495.5 L1164.0 495.5 L1170.0 495.2 L1176.0 495.5 L1182.0 495.3 L1188.0 495.4 L1194.0 495.2 L1200.0 495.5 L1206.0 495.4 L1212.0 495.5 L1218.0 495.5 L1224.0 495.2 L1230.0 493.6 L1236.0 495.1 L1242.0 495.1 L1248.0 495.1 L1254.0 495.2 L1260.0 495.4 L1266.0 495.1 L1272.0 495.4 L1278.0 495.2 L1284.0 495.2 L1290.0 495.5 L1296.0 495.3 L1302.0 495.2 L1308.0 495.3 L1314.0 495.4 L1320.0 495.1 L1326.0 495.5 L1332.0 495.1 L1338.0 495.4 L1344.0 495.5 L1350.0 495.1 L1356.0 495.4 L1362.0 495.2 L1368.0 495.3 L1374.0 495.1 L1380.0 493.5 L1386.0 495.1 L1392.0 495.5 L1398.0 495.1 L1404.0 495.4 L1410.0 495.5 L1416.0 495.5 L1422.0 495.2 L1428.0 495.2 L1434.0 495.3 L1440.0 495.4 L1446.0 495.1 L1452.0 495.4 L1458.0 493.8 L1464.0 495.5 L1470.0 495.1 L1476.0 495.5 L1482.0 495.1 L1488.0 495.2 L1494.0 495.4 L1500.0 495.5 L1506.0 495.2 L1512.0 495.5 L1518.0 495.3 L1524.0 495.2 L1530.0 495.2 L1536.0 495.1 L1542.0 495.1 L1548.0 495.1 L1554.0 495.4 L1560.0 495.5 L1566.0 495.1 L1572.0 495.1 L1578.0 495.5 L1584.0 495.3 L1590.0 495.3 L1596.0 495.2 L1602.0 495.3 L1608.0 495.5" stroke="#4FA9BE" stroke-width="1.1" fill="none" stroke-linejoin="round" clip-path="url(#cD)"/>
<path d="M978.0 489.6 L994.0 489.0 L997.6 462.5 L1001.7 462.5 L1004.0 489.0 L1008.0 486.0 L1010.0 482.4 L1013.0 488.0 L1020.0 487.0 L1022.0 483.0 L1026.0 489.0 L1030.0 491.0 L1055.0 491.0 L1060.0 482.4 L1064.0 482.4 L1067.0 489.0 L1075.0 489.0 L1077.0 429.1 L1081.0 429.1 L1085.0 488.0 L1089.0 485.0 L1091.0 482.0 L1094.0 487.0 L1100.0 492.0 L1138.0 490.0 L1141.0 455.8 L1144.0 455.8 L1147.0 492.0 L1160.0 492.0 L1164.0 489.0 L1168.0 492.0 L1185.0 492.0 L1188.0 476.0 L1190.0 472.0 L1196.0 472.0 L1199.0 492.0 L1205.0 489.0 L1222.0 489.0 L1225.0 470.0 L1227.0 445.5 L1232.0 448.0 L1236.0 492.0 L1250.0 490.0 L1266.0 489.0 L1269.0 481.3 L1272.0 481.3 L1276.0 488.0 L1280.0 492.0 L1295.0 492.0 L1298.0 488.0 L1302.0 492.0 L1326.0 492.0 L1330.0 489.0 L1336.0 492.0 L1350.0 492.0 L1355.0 489.0 L1370.0 489.0 L1376.0 470.0 L1378.0 456.8 L1382.0 456.8 L1384.0 475.0 L1388.0 478.0 L1392.0 489.0 L1400.0 489.0 L1406.0 480.0 L1410.0 476.0 L1414.0 482.0 L1420.0 487.0 L1450.0 489.0 L1454.0 465.0 L1457.0 427.0 L1460.0 427.0 L1463.0 450.0 L1465.0 488.0 L1470.0 492.0 L1484.0 485.0 L1487.0 481.0 L1490.0 486.0 L1500.0 492.0 L1510.0 484.0 L1513.0 481.0 L1516.0 486.0 L1520.0 492.0 L1540.0 490.0 L1545.0 487.0 L1550.0 490.0 L1555.0 492.0 L1570.0 492.0 L1580.0 484.0 L1588.0 479.0 L1594.0 488.0 L1600.0 492.0 L1606.0 486.0 L1610.0 482.0" stroke="#EAB839" stroke-width="1.1" fill="none" stroke-linejoin="round" clip-path="url(#cD)"/>
<path d="M978.0 486.5 L980.0 479.3 L988.0 479.3 L992.0 481.0 L994.0 424.0 L995.5 424.0 L1004.3 424.0 L1006.0 460.9 L1015.0 460.9 L1017.0 487.5 L1019.0 479.3 L1028.0 479.3 L1030.0 487.0 L1032.4 461.3 L1038.5 461.3 L1041.0 479.0 L1044.0 480.0 L1046.0 488.0 L1050.0 488.0 L1054.0 479.0 L1059.0 461.0 L1074.4 463.0 L1077.5 351.3 L1083.6 351.3 L1087.0 461.0 L1094.0 461.0 L1096.0 487.0 L1100.0 487.0 L1103.0 461.0 L1109.2 461.0 L1112.0 488.0 L1120.0 488.0 L1125.0 479.0 L1136.0 479.0 L1138.0 424.0 L1146.0 424.0 L1150.0 482.0 L1152.0 488.0 L1160.0 488.0 L1161.5 474.6 L1167.6 474.6 L1170.0 488.0 L1185.0 488.0 L1190.0 461.0 L1196.4 461.0 L1199.0 479.0 L1205.0 479.0 L1207.0 487.0 L1209.0 479.0 L1218.0 479.0 L1220.0 488.0 L1225.0 424.0 L1233.0 424.0 L1236.0 488.0 L1238.0 488.0 L1240.0 461.0 L1247.0 461.0 L1250.0 479.0 L1254.0 479.0 L1258.0 488.0 L1262.0 488.0 L1265.0 461.0 L1274.0 461.0 L1280.0 487.0 L1290.0 487.0 L1293.0 461.0 L1302.0 461.0 L1310.0 487.0 L1318.0 487.0 L1322.0 479.0 L1334.0 479.0 L1338.0 488.0 L1352.0 487.0 L1356.0 479.0 L1370.0 479.0 L1372.5 440.0 L1374.0 424.0 L1380.7 424.0 L1385.0 461.0 L1389.0 461.0 L1391.0 479.0 L1396.0 479.0 L1400.0 468.0 L1403.0 468.0 L1407.0 461.0 L1415.0 461.0 L1418.0 479.0 L1430.0 479.0 L1434.0 488.0 L1440.0 461.0 L1445.0 461.0 L1450.0 423.0 L1454.4 351.3 L1462.6 351.3 L1466.0 479.0 L1472.0 479.0 L1475.0 488.0 L1478.0 479.0 L1482.0 479.0 L1484.0 461.0 L1491.0 461.0 L1494.0 479.0 L1506.0 479.0 L1509.0 461.0 L1517.0 461.0 L1520.0 479.0 L1525.0 488.0 L1530.0 488.0 L1533.0 479.0 L1538.0 479.0 L1543.0 463.0 L1550.0 463.0 L1555.0 488.0 L1570.0 488.0 L1576.0 455.0 L1579.0 424.0 L1587.0 424.0 L1590.0 440.0 L1593.0 461.0 L1597.0 461.0 L1599.0 479.0 L1601.0 490.0 L1604.0 479.0 L1610.0 479.0" stroke="#7EB26D" stroke-width="1.1" fill="none" stroke-linejoin="round" clip-path="url(#cD)"/>
<line x1="978" y1="497.5" x2="1610" y2="497.5" stroke="#262a2e" stroke-width="1"/>
<text x="1710" y="338.4" font-size="11.5" fill="#33a2e5" text-anchor="start" font-weight="bold" >max</text>
<path d="M1737 332.79999999999995 l3.5 3.5 l3.5 -3.5" stroke="#33a2e5" stroke-width="1.4" fill="none"/>
<text x="1770.6" y="338.4" font-size="11.5" fill="#33a2e5" text-anchor="start" font-weight="bold" >current</text>
<rect x="1632" y="355.6" width="14" height="4" rx="1" fill="#7EB26D"/>
<text x="1656" y="360.5" font-size="12" fill="#c7d0d9" text-anchor="start" font-weight="normal" >99.99%</text>
<text x="1756.5" y="360.5" font-size="12.3" fill="#c7d0d9" text-anchor="end" font-weight="normal" >2.61 s</text>
<text x="1817" y="360.5" font-size="12.3" fill="#c7d0d9" text-anchor="end" font-weight="normal" >327 ms</text>
<rect x="1630" y="369.2" width="189" height="24.2" fill="#1b1d21"/>
<rect x="1632" y="379.8" width="14" height="4" rx="1" fill="#EAB839"/>
<text x="1656" y="384.7" font-size="12" fill="#c7d0d9" text-anchor="start" font-weight="normal" >99%</text>
<text x="1756.5" y="384.7" font-size="12.3" fill="#c7d0d9" text-anchor="end" font-weight="normal" >1.25 s</text>
<text x="1817" y="384.7" font-size="12.3" fill="#c7d0d9" text-anchor="end" font-weight="normal" >263 ms</text>
<rect x="1632" y="404.1" width="14" height="4" rx="1" fill="#6ED0E0"/>
<text x="1656" y="409.0" font-size="12" fill="#c7d0d9" text-anchor="start" font-weight="normal" >avg</text>
<text x="1756.5" y="409.0" font-size="12.3" fill="#c7d0d9" text-anchor="end" font-weight="normal" >79.0 ms</text>
<text x="1817" y="409.0" font-size="12.3" fill="#c7d0d9" text-anchor="end" font-weight="normal" >37.8 ms</text>
<rect x="4.5" y="534.5" width="911" height="242" rx="3" fill="none" stroke="#060709" stroke-width="1"/>
<rect x="5.5" y="535.5" width="909" height="240" rx="2.5" fill="#131519" stroke="#222128" stroke-width="1"/>
<path d="M6 538.5 Q6 536 8.5 536 L33 536 L6 563 Z" fill="#202226"/>
<path d="M13 539h2.6v2.2h-2.6z M12 542.2h3.6v4.6h1v1.6h-4.6v-1.6h1v-3h-1z" fill="#9ea3a8"/>
<text x="460.0" y="553.7" font-size="14.25" fill="#d8d9da" text-anchor="middle" font-weight="normal" stroke="#d8d9da" stroke-width="0.45">Storage async snapshot duration</text>
<line x1="65" y1="594.1" x2="891" y2="594.1" stroke="#35373b" stroke-width="1"/>
<line x1="65" y1="618.2" x2="891" y2="618.2" stroke="#35373b" stroke-width="1"/>
<line x1="65" y1="642.3" x2="891" y2="642.3" stroke="#35373b" stroke-width="1"/>
<line x1="65" y1="666.4" x2="891" y2="666.4" stroke="#35373b" stroke-width="1"/>
<line x1="65" y1="690.5" x2="891" y2="690.5" stroke="#35373b" stroke-width="1"/>
<line x1="65" y1="714.6" x2="891" y2="714.6" stroke="#35373b" stroke-width="1"/>
<line x1="65" y1="738.5" x2="891" y2="738.5" stroke="#35373b" stroke-width="1"/>
<line x1="106.9" y1="579" x2="106.9" y2="738" stroke="#35373b" stroke-width="1"/>
<line x1="175.8" y1="579" x2="175.8" y2="738" stroke="#35373b" stroke-width="1"/>
<line x1="244.7" y1="579" x2="244.7" y2="738" stroke="#35373b" stroke-width="1"/>
<line x1="313.6" y1="579" x2="313.6" y2="738" stroke="#35373b" stroke-width="1"/>
<line x1="382.5" y1="579" x2="382.5" y2="738" stroke="#35373b" stroke-width="1"/>
<line x1="451.4" y1="579" x2="451.4" y2="738" stroke="#35373b" stroke-width="1"/>
<line x1="520.3" y1="579" x2="520.3" y2="738" stroke="#35373b" stroke-width="1"/>
<line x1="589.2" y1="579" x2="589.2" y2="738" stroke="#35373b" stroke-width="1"/>
<line x1="658.1" y1="579" x2="658.1" y2="738" stroke="#35373b" stroke-width="1"/>
<line x1="727.0" y1="579" x2="727.0" y2="738" stroke="#35373b" stroke-width="1"/>
<line x1="795.9" y1="579" x2="795.9" y2="738" stroke="#35373b" stroke-width="1"/>
<line x1="864.8" y1="579" x2="864.8" y2="738" stroke="#35373b" stroke-width="1"/>
<text x="59.5" y="596.8" font-size="11.3" fill="#c7d0d9" text-anchor="end" font-weight="normal" >1.5 hour</text>
<text x="59.5" y="620.9" font-size="11.3" fill="#c7d0d9" text-anchor="end" font-weight="normal" >2.8 min</text>
<text x="59.5" y="645.0" font-size="11.3" fill="#c7d0d9" text-anchor="end" font-weight="normal" >5.2 s</text>
<text x="59.5" y="669.1" font-size="11.3" fill="#c7d0d9" text-anchor="end" font-weight="normal" >163.8 ms</text>
<text x="59.5" y="693.2" font-size="11.3" fill="#c7d0d9" text-anchor="end" font-weight="normal" >5.1 ms</text>
<text x="59.5" y="717.3" font-size="11.3" fill="#c7d0d9" text-anchor="end" font-weight="normal" >160.0 µs</text>
<text x="106.4" y="755.5" font-size="11.3" fill="#c7d0d9" text-anchor="middle" font-weight="normal" >14:45</text>
<text x="175.3" y="755.5" font-size="11.3" fill="#c7d0d9" text-anchor="middle" font-weight="normal" >14:50</text>
<text x="244.20000000000002" y="755.5" font-size="11.3" fill="#c7d0d9" text-anchor="middle" font-weight="normal" >14:55</text>
<text x="313.1" y="755.5" font-size="11.3" fill="#c7d0d9" text-anchor="middle" font-weight="normal" >15:00</text>
<text x="382.0" y="755.5" font-size="11.3" fill="#c7d0d9" text-anchor="middle" font-weight="normal" >15:05</text>
<text x="450.9" y="755.5" font-size="11.3" fill="#c7d0d9" text-anchor="middle" font-weight="normal" >15:10</text>
<text x="519.8000000000001" y="755.5" font-size="11.3" fill="#c7d0d9" text-anchor="middle" font-weight="normal" >15:15</text>
<text x="588.7" y="755.5" font-size="11.3" fill="#c7d0d9" text-anchor="middle" font-weight="normal" >15:20</text>
<text x="657.6" y="755.5" font-size="11.3" fill="#c7d0d9" text-anchor="middle" font-weight="normal" >15:25</text>
<text x="726.5" y="755.5" font-size="11.3" fill="#c7d0d9" text-anchor="middle" font-weight="normal" >15:30</text>
<text x="795.4" y="755.5" font-size="11.3" fill="#c7d0d9" text-anchor="middle" font-weight="normal" >15:35</text>
<text x="864.3000000000001" y="755.5" font-size="11.3" fill="#c7d0d9" text-anchor="middle" font-weight="normal" >15:40</text>
<g opacity="0.85"><rect x="65.60" y="734.30" width="1.6" height="3.0" fill="#68c3a5"/><rect x="69.06" y="734.30" width="1.6" height="3.0" fill="#64c0a6"/><rect x="72.51" y="734.30" width="1.6" height="3.0" fill="#59b3ab"/><rect x="75.97" y="734.30" width="1.6" height="3.0" fill="#67c3a5"/><rect x="79.42" y="734.30" width="1.6" height="3.0" fill="#66c2a5"/><rect x="82.88" y="734.30" width="1.6" height="3.0" fill="#63bfa6"/><rect x="86.33" y="734.30" width="1.6" height="3.0" fill="#73c7a5"/><rect x="89.79" y="734.30" width="1.6" height="3.0" fill="#66c2a5"/><rect x="93.24" y="734.30" width="1.6" height="3.0" fill="#62bda7"/><rect x="96.70" y="734.30" width="1.6" height="3.0" fill="#5db8a9"/><rect x="100.15" y="734.30" width="1.6" height="3.0" fill="#77c9a5"/><rect x="103.61" y="734.30" width="1.6" height="3.0" fill="#6ec5a5"/><rect x="107.06" y="734.30" width="1.6" height="3.0" fill="#77c9a5"/><rect x="110.52" y="734.30" width="1.6" height="3.0" fill="#5cb7a9"/><rect x="113.97" y="734.30" width="1.6" height="3.0" fill="#60bba8"/><rect x="117.43" y="734.30" width="1.6" height="3.0" fill="#79c9a5"/><rect x="120.88" y="734.30" width="1.6" height="3.0" fill="#57b1ac"/><rect x="124.34" y="734.30" width="1.6" height="3.0" fill="#57b2ac"/><rect x="127.79" y="734.30" width="1.6" height="3.0" fill="#61bda7"/><rect x="131.25" y="734.30" width="1.6" height="3.0" fill="#62bea7"/><rect x="134.70" y="734.30" width="1.6" height="3.0" fill="#74c8a5"/><rect x="138.16" y="734.30" width="1.6" height="3.0" fill="#7acaa5"/><rect x="141.61" y="734.30" width="1.6" height="3.0" fill="#65c1a5"/><rect x="145.06" y="734.30" width="1.6" height="3.0" fill="#78c9a5"/><rect x="148.52" y="734.30" width="1.6" height="3.0" fill="#73c7a5"/><rect x="151.97" y="734.30" width="1.6" height="3.0" fill="#71c6a5"/><rect x="155.43" y="734.30" width="1.6" height="3.0" fill="#79caa5"/><rect x="158.88" y="734.30" width="1.6" height="3.0" fill="#67c3a5"/><rect x="162.34" y="734.30" width="1.6" height="3.0" fill="#68c3a5"/><rect x="165.80" y="734.30" width="1.6" height="3.0" fill="#5bb6aa"/><rect x="169.25" y="734.30" width="1.6" height="3.0" fill="#65c1a5"/><rect x="172.70" y="734.30" width="1.6" height="3.0" fill="#62bda7"/><rect x="176.16" y="734.30" width="1.6" height="3.0" fill="#66c2a5"/><rect x="179.62" y="734.30" width="1.6" height="3.0" fill="#61bca7"/><rect x="183.07" y="734.30" width="1.6" height="3.0" fill="#68c3a5"/><rect x="186.52" y="734.30" width="1.6" height="3.0" fill="#6fc6a5"/><rect x="189.98" y="734.30" width="1.6" height="3.0" fill="#56b1ac"/><rect x="193.44" y="734.30" width="1.6" height="3.0" fill="#57b1ac"/><rect x="196.89" y="734.30" width="1.6" height="3.0" fill="#5bb6aa"/><rect x="200.34" y="734.30" width="1.6" height="3.0" fill="#60bba8"/><rect x="203.80" y="734.30" width="1.6" height="3.0" fill="#6ec5a5"/><rect x="207.25" y="734.30" width="1.6" height="3.0" fill="#71c6a5"/><rect x="210.71" y="734.30" width="1.6" height="3.0" fill="#6fc5a5"/><rect x="214.16" y="734.30" width="1.6" height="3.0" fill="#78c9a5"/><rect x="217.62" y="734.30" width="1.6" height="3.0" fill="#5eb9a9"/><rect x="221.07" y="734.30" width="1.6" height="3.0" fill="#6ac4a5"/><rect x="224.53" y="734.30" width="1.6" height="3.0" fill="#5bb6aa"/><rect x="227.98" y="734.30" width="1.6" height="3.0" fill="#6bc4a5"/><rect x="231.44" y="734.30" width="1.6" height="3.0" fill="#58b2ac"/><rect x="234.90" y="734.30" width="1.6" height="3.0" fill="#5bb6aa"/><rect x="238.35" y="734.30" width="1.6" height="3.0" fill="#7bcaa5"/><rect x="241.81" y="734.30" width="1.6" height="3.0" fill="#72c7a5"/><rect x="245.26" y="734.30" width="1.6" height="3.0" fill="#59b4ab"/><rect x="248.72" y="734.30" width="1.6" height="3.0" fill="#5bb6aa"/><rect x="252.17" y="734.30" width="1.6" height="3.0" fill="#4c66ad"/><rect x="255.62" y="734.30" width="1.6" height="3.0" fill="#3c7ab7"/><rect x="259.08" y="734.30" width="1.6" height="3.0" fill="#3486bc"/><rect x="262.54" y="734.30" width="1.6" height="3.0" fill="#4372b3"/><rect x="265.99" y="734.30" width="1.6" height="3.0" fill="#476db0"/><rect x="269.44" y="734.30" width="1.6" height="3.0" fill="#397fb9"/><rect x="272.90" y="734.30" width="1.6" height="3.0" fill="#3485bc"/><rect x="276.35" y="734.30" width="1.6" height="3.0" fill="#3b7db8"/><rect x="279.81" y="734.30" width="1.6" height="3.0" fill="#4b67ad"/><rect x="283.26" y="734.30" width="1.6" height="3.0" fill="#466eb1"/><rect x="286.72" y="734.30" width="1.6" height="3.0" fill="#3584bb"/><rect x="290.18" y="734.30" width="1.6" height="3.0" fill="#3980b9"/><rect x="293.63" y="734.30" width="1.6" height="3.0" fill="#3585bb"/><rect x="297.08" y="734.30" width="1.6" height="3.0" fill="#3486bc"/><rect x="300.54" y="734.30" width="1.6" height="3.0" fill="#476db0"/><rect x="304.00" y="734.30" width="1.6" height="3.0" fill="#3782ba"/><rect x="307.45" y="734.30" width="1.6" height="3.0" fill="#4175b4"/><rect x="310.91" y="734.30" width="1.6" height="3.0" fill="#3e79b6"/><rect x="314.36" y="734.30" width="1.6" height="3.0" fill="#3781ba"/><rect x="317.81" y="734.30" width="1.6" height="3.0" fill="#456fb1"/><rect x="321.27" y="734.30" width="1.6" height="3.0" fill="#3584bb"/><rect x="324.72" y="734.30" width="1.6" height="3.0" fill="#4372b3"/><rect x="328.18" y="734.30" width="1.6" height="3.0" fill="#3584bb"/><rect x="331.64" y="734.30" width="1.6" height="3.0" fill="#3d7ab6"/><rect x="335.09" y="734.30" width="1.6" height="3.0" fill="#3881ba"/><rect x="338.55" y="734.30" width="1.6" height="3.0" fill="#397fb9"/><rect x="342.00" y="734.30" width="1.6" height="3.0" fill="#4c67ad"/><rect x="345.45" y="734.30" width="1.6" height="3.0" fill="#476db0"/><rect x="348.91" y="734.30" width="1.6" height="3.0" fill="#3a7eb8"/><rect x="352.36" y="734.30" width="1.6" height="3.0" fill="#496aaf"/><rect x="355.82" y="734.30" width="1.6" height="3.0" fill="#3881ba"/><rect x="359.28" y="734.30" width="1.6" height="3.0" fill="#3c7bb7"/><rect x="362.73" y="734.30" width="1.6" height="3.0" fill="#496baf"/><rect x="366.19" y="734.30" width="1.6" height="3.0" fill="#4372b3"/><rect x="369.64" y="734.30" width="1.6" height="3.0" fill="#3585bb"/><rect x="373.09" y="734.30" width="1.6" height="3.0" fill="#4c66ad"/><rect x="376.55" y="734.30" width="1.6" height="3.0" fill="#3881ba"/><rect x="380.01" y="734.30" width="1.6" height="3.0" fill="#397fb9"/><rect x="383.46" y="734.30" width="1.6" height="3.0" fill="#466eb0"/><rect x="386.92" y="734.30" width="1.6" height="3.0" fill="#3b7db8"/><rect x="390.37" y="734.30" width="1.6" height="3.0" fill="#3a7eb8"/><rect x="393.82" y="734.30" width="1.6" height="3.0" fill="#3485bc"/><rect x="397.28" y="734.30" width="1.6" height="3.0" fill="#3485bc"/><rect x="400.73" y="734.30" width="1.6" height="3.0" fill="#4174b4"/><rect x="404.19" y="734.30" width="1.6" height="3.0" fill="#3880b9"/><rect x="407.65" y="734.30" width="1.6" height="3.0" fill="#4273b3"/><rect x="411.10" y="734.30" width="1.6" height="3.0" fill="#3c7bb7"/><rect x="414.56" y="734.30" width="1.6" height="3.0" fill="#3e79b6"/><rect x="418.01" y="734.30" width="1.6" height="3.0" fill="#4b67ad"/><rect x="421.46" y="734.30" width="1.6" height="3.0" fill="#3f77b5"/><rect x="424.92" y="734.30" width="1.6" height="3.0" fill="#4174b4"/><rect x="428.38" y="734.30" width="1.6" height="3.0" fill="#496aaf"/><rect x="431.83" y="734.30" width="1.6" height="3.0" fill="#3782ba"/><rect x="435.29" y="734.30" width="1.6" height="3.0" fill="#3683bb"/><rect x="438.74" y="734.30" width="1.6" height="3.0" fill="#4a69ae"/><rect x="442.19" y="734.30" width="1.6" height="3.0" fill="#486cb0"/><rect x="445.65" y="734.30" width="1.6" height="3.0" fill="#397fb9"/><rect x="449.10" y="734.30" width="1.6" height="3.0" fill="#3782ba"/><rect x="452.56" y="734.30" width="1.6" height="3.0" fill="#466fb1"/><rect x="456.02" y="734.30" width="1.6" height="3.0" fill="#4b68ae"/><rect x="459.47" y="734.30" width="1.6" height="3.0" fill="#3781ba"/><rect x="462.93" y="734.30" width="1.6" height="3.0" fill="#4b68ae"/><rect x="466.38" y="734.30" width="1.6" height="3.0" fill="#496aaf"/><rect x="469.83" y="734.30" width="1.6" height="3.0" fill="#4273b3"/><rect x="473.29" y="734.30" width="1.6" height="3.0" fill="#3d7ab6"/><rect x="476.74" y="734.30" width="1.6" height="3.0" fill="#3584bb"/><rect x="480.20" y="734.30" width="1.6" height="3.0" fill="#3387bc"/><rect x="483.66" y="734.30" width="1.6" height="3.0" fill="#4b67ad"/><rect x="487.11" y="734.30" width="1.6" height="3.0" fill="#3880b9"/><rect x="490.56" y="734.30" width="1.6" height="3.0" fill="#4570b2"/><rect x="494.02" y="734.30" width="1.6" height="3.0" fill="#397fb9"/><rect x="497.47" y="734.30" width="1.6" height="3.0" fill="#486cb0"/><rect x="500.93" y="734.30" width="1.6" height="3.0" fill="#4274b3"/><rect x="504.39" y="734.30" width="1.6" height="3.0" fill="#3a7eb8"/><rect x="507.84" y="734.30" width="1.6" height="3.0" fill="#3782ba"/><rect x="511.30" y="734.30" width="1.6" height="3.0" fill="#456fb1"/><rect x="514.75" y="734.30" width="1.6" height="3.0" fill="#3486bc"/><rect x="518.21" y="734.30" width="1.6" height="3.0" fill="#3880b9"/><rect x="521.66" y="734.30" width="1.6" height="3.0" fill="#4175b4"/><rect x="525.12" y="734.30" width="1.6" height="3.0" fill="#496baf"/><rect x="528.57" y="734.30" width="1.6" height="3.0" fill="#4273b3"/><rect x="532.03" y="734.30" width="1.6" height="3.0" fill="#397eb8"/><rect x="535.48" y="734.30" width="1.6" height="3.0" fill="#4a69ae"/><rect x="538.94" y="734.30" width="1.6" height="3.0" fill="#3781ba"/><rect x="542.39" y="734.30" width="1.6" height="3.0" fill="#3287bd"/><rect x="545.85" y="734.30" width="1.6" height="3.0" fill="#397fb9"/><rect x="549.30" y="734.30" width="1.6" height="3.0" fill="#3e79b6"/><rect x="552.76" y="734.30" width="1.6" height="3.0" fill="#3990ba"/><rect x="556.21" y="734.30" width="1.6" height="3.0" fill="#3f96b7"/><rect x="559.67" y="734.30" width="1.6" height="3.0" fill="#4098b6"/><rect x="563.12" y="734.30" width="1.6" height="3.0" fill="#3a91b9"/><rect x="566.58" y="734.30" width="1.6" height="3.0" fill="#48a0b3"/><rect x="570.03" y="734.30" width="1.6" height="3.0" fill="#4198b6"/><rect x="573.49" y="734.30" width="1.6" height="3.0" fill="#3486bc"/><rect x="576.94" y="734.30" width="1.6" height="3.0" fill="#3683bb"/><rect x="580.39" y="734.30" width="1.6" height="3.0" fill="#388eba"/><rect x="583.85" y="734.30" width="1.6" height="3.0" fill="#368dbb"/><rect x="587.31" y="734.30" width="1.6" height="3.0" fill="#3a91b9"/><rect x="590.76" y="734.30" width="1.6" height="3.0" fill="#48a0b3"/><rect x="594.22" y="734.30" width="1.6" height="3.0" fill="#4ba4b2"/><rect x="597.67" y="734.30" width="1.6" height="3.0" fill="#4ba4b1"/><rect x="601.12" y="734.30" width="1.6" height="3.0" fill="#3485bc"/><rect x="604.58" y="734.30" width="1.6" height="3.0" fill="#368dbb"/><rect x="608.04" y="734.30" width="1.6" height="3.0" fill="#3584bb"/><rect x="611.49" y="734.30" width="1.6" height="3.0" fill="#4ba4b1"/><rect x="614.95" y="734.30" width="1.6" height="3.0" fill="#388fba"/><rect x="618.40" y="734.30" width="1.6" height="3.0" fill="#3d94b8"/><rect x="621.86" y="734.30" width="1.6" height="3.0" fill="#358cbc"/><rect x="625.31" y="734.30" width="1.6" height="3.0" fill="#429ab6"/><rect x="628.76" y="734.30" width="1.6" height="3.0" fill="#3682ba"/><rect x="632.22" y="734.30" width="1.6" height="3.0" fill="#4aa2b2"/><rect x="635.68" y="734.30" width="1.6" height="3.0" fill="#3b92b9"/><rect x="639.13" y="734.30" width="1.6" height="3.0" fill="#358bbc"/><rect x="642.59" y="734.30" width="1.6" height="3.0" fill="#3486bc"/><rect x="646.04" y="734.30" width="1.6" height="3.0" fill="#358bbc"/><rect x="649.50" y="734.30" width="1.6" height="3.0" fill="#368dbb"/><rect x="652.95" y="734.30" width="1.6" height="3.0" fill="#3389bc"/><rect x="656.41" y="734.30" width="1.6" height="3.0" fill="#3485bc"/><rect x="659.86" y="734.30" width="1.6" height="3.0" fill="#4199b6"/><rect x="663.32" y="734.30" width="1.6" height="3.0" fill="#378dbb"/><rect x="666.77" y="734.30" width="1.6" height="3.0" fill="#3486bc"/><rect x="670.23" y="734.30" width="1.6" height="3.0" fill="#3387bc"/><rect x="673.68" y="734.30" width="1.6" height="3.0" fill="#3f96b7"/><rect x="677.13" y="734.30" width="1.6" height="3.0" fill="#3389bc"/><rect x="680.59" y="734.30" width="1.6" height="3.0" fill="#3387bd"/><rect x="684.05" y="734.30" width="1.6" height="3.0" fill="#3a91b9"/><rect x="687.50" y="734.30" width="1.6" height="3.0" fill="#398fba"/><rect x="690.96" y="734.30" width="1.6" height="3.0" fill="#4098b7"/><rect x="694.41" y="734.30" width="1.6" height="3.0" fill="#3a91b9"/><rect x="697.87" y="734.30" width="1.6" height="3.0" fill="#3990ba"/><rect x="701.32" y="734.30" width="1.6" height="3.0" fill="#49a2b2"/><rect x="704.78" y="734.30" width="1.6" height="3.0" fill="#388fba"/><rect x="708.23" y="734.30" width="1.6" height="3.0" fill="#3683ba"/><rect x="711.69" y="734.30" width="1.6" height="3.0" fill="#3386bc"/><rect x="715.14" y="734.30" width="1.6" height="3.0" fill="#358cbb"/><rect x="718.60" y="734.30" width="1.6" height="3.0" fill="#4097b7"/><rect x="722.05" y="734.30" width="1.6" height="3.0" fill="#358bbc"/><rect x="725.50" y="734.30" width="1.6" height="3.0" fill="#3a91b9"/><rect x="728.96" y="734.30" width="1.6" height="3.0" fill="#3e96b7"/><rect x="732.42" y="734.30" width="1.6" height="3.0" fill="#3288bd"/><rect x="735.87" y="734.30" width="1.6" height="3.0" fill="#49a2b2"/><rect x="739.33" y="734.30" width="1.6" height="3.0" fill="#358bbc"/><rect x="742.78" y="734.30" width="1.6" height="3.0" fill="#4ba4b1"/><rect x="746.24" y="734.30" width="1.6" height="3.0" fill="#348abc"/><rect x="749.69" y="734.30" width="1.6" height="3.0" fill="#3584bb"/><rect x="753.14" y="734.30" width="1.6" height="3.0" fill="#3683bb"/><rect x="756.60" y="734.30" width="1.6" height="3.0" fill="#4470b2"/><rect x="760.06" y="734.30" width="1.6" height="3.0" fill="#3f77b5"/><rect x="763.51" y="734.30" width="1.6" height="3.0" fill="#4273b3"/><rect x="766.97" y="734.30" width="1.6" height="3.0" fill="#4a69ae"/><rect x="770.42" y="734.30" width="1.6" height="3.0" fill="#397fb9"/><rect x="773.88" y="734.30" width="1.6" height="3.0" fill="#3288bd"/><rect x="777.33" y="734.30" width="1.6" height="3.0" fill="#3a7eb8"/><rect x="780.79" y="734.30" width="1.6" height="3.0" fill="#4471b2"/><rect x="784.24" y="734.30" width="1.6" height="3.0" fill="#3781ba"/><rect x="787.70" y="734.30" width="1.6" height="3.0" fill="#3682ba"/><rect x="791.15" y="734.30" width="1.6" height="3.0" fill="#4a69ae"/><rect x="794.61" y="734.30" width="1.6" height="3.0" fill="#4371b2"/><rect x="798.06" y="734.30" width="1.6" height="3.0" fill="#3e79b6"/><rect x="801.51" y="734.30" width="1.6" height="3.0" fill="#4a6aaf"/><rect x="804.97" y="734.30" width="1.6" height="3.0" fill="#3b7db8"/><rect x="808.43" y="734.30" width="1.6" height="3.0" fill="#4471b2"/><rect x="811.88" y="734.30" width="1.6" height="3.0" fill="#3781ba"/><rect x="815.34" y="734.30" width="1.6" height="3.0" fill="#3d79b6"/><rect x="818.79" y="734.30" width="1.6" height="3.0" fill="#476cb0"/><rect x="822.25" y="734.30" width="1.6" height="3.0" fill="#4a69ae"/><rect x="825.70" y="734.30" width="1.6" height="3.0" fill="#496aaf"/><rect x="829.16" y="734.30" width="1.6" height="3.0" fill="#3c7bb7"/><rect x="832.61" y="734.30" width="1.6" height="3.0" fill="#4174b4"/><rect x="836.07" y="734.30" width="1.6" height="3.0" fill="#3a7db8"/><rect x="839.52" y="734.30" width="1.6" height="3.0" fill="#3683bb"/><rect x="842.98" y="734.30" width="1.6" height="3.0" fill="#3f77b5"/><rect x="846.43" y="734.30" width="1.6" height="3.0" fill="#486baf"/><rect x="849.88" y="734.30" width="1.6" height="3.0" fill="#486baf"/><rect x="853.34" y="734.30" width="1.6" height="3.0" fill="#4570b1"/><rect x="856.80" y="734.30" width="1.6" height="3.0" fill="#4b68ae"/><rect x="860.25" y="734.30" width="1.6" height="3.0" fill="#397fb9"/><rect x="863.71" y="734.30" width="1.6" height="3.0" fill="#3682ba"/><rect x="867.16" y="734.30" width="1.6" height="3.0" fill="#3e79b6"/><rect x="870.62" y="734.30" width="1.6" height="3.0" fill="#397fb9"/><rect x="874.07" y="734.30" width="1.6" height="3.0" fill="#3881ba"/><rect x="877.53" y="734.30" width="1.6" height="3.0" fill="#3d7ab6"/><rect x="880.98" y="734.30" width="1.6" height="3.0" fill="#4373b3"/><rect x="884.44" y="734.30" width="1.6" height="3.0" fill="#3f77b5"/><rect x="887.89" y="734.30" width="1.6" height="3.0" fill="#3a7db8"/><rect x="65.60" y="729.70" width="1.6" height="3.0" fill="#fec978"/><rect x="69.06" y="729.70" width="1.6" height="3.0" fill="#fed07e"/><rect x="72.51" y="729.70" width="1.6" height="3.0" fill="#fdb667"/><rect x="75.97" y="729.70" width="1.6" height="3.0" fill="#fb9f5a"/><rect x="79.42" y="729.70" width="1.6" height="3.0" fill="#fb9d59"/><rect x="82.88" y="729.70" width="1.6" height="3.0" fill="#fecb79"/><rect x="86.33" y="729.70" width="1.6" height="3.0" fill="#fb9d59"/><rect x="89.79" y="729.70" width="1.6" height="3.0" fill="#fdc272"/><rect x="93.24" y="729.70" width="1.6" height="3.0" fill="#fdbc6c"/><rect x="96.70" y="729.70" width="1.6" height="3.0" fill="#fdae61"/><rect x="100.15" y="729.70" width="1.6" height="3.0" fill="#fdc776"/><rect x="103.61" y="729.70" width="1.6" height="3.0" fill="#fa9c59"/><rect x="107.06" y="729.70" width="1.6" height="3.0" fill="#fca35c"/><rect x="110.52" y="729.70" width="1.6" height="3.0" fill="#fdb668"/><rect x="113.97" y="729.70" width="1.6" height="3.0" fill="#fb9c59"/><rect x="117.43" y="729.70" width="1.6" height="3.0" fill="#fec877"/><rect x="120.88" y="729.70" width="1.6" height="3.0" fill="#fcaa5f"/><rect x="124.34" y="729.70" width="1.6" height="3.0" fill="#fca45c"/><rect x="127.79" y="729.70" width="1.6" height="3.0" fill="#fb9e59"/><rect x="131.25" y="729.70" width="1.6" height="3.0" fill="#fdbe6f"/><rect x="134.70" y="729.70" width="1.6" height="3.0" fill="#fdb567"/><rect x="138.16" y="729.70" width="1.6" height="3.0" fill="#fdbe6f"/><rect x="141.61" y="729.70" width="1.6" height="3.0" fill="#fdc070"/><rect x="145.06" y="729.70" width="1.6" height="3.0" fill="#fec776"/><rect x="148.52" y="729.70" width="1.6" height="3.0" fill="#fecf7d"/><rect x="151.97" y="729.70" width="1.6" height="3.0" fill="#fdc171"/><rect x="155.43" y="729.70" width="1.6" height="3.0" fill="#fca75e"/><rect x="158.88" y="729.70" width="1.6" height="3.0" fill="#fdb768"/><rect x="162.34" y="729.70" width="1.6" height="3.0" fill="#fca65d"/><rect x="165.80" y="729.70" width="1.6" height="3.0" fill="#fa9b58"/><rect x="169.25" y="729.70" width="1.6" height="3.0" fill="#fdb768"/><rect x="172.70" y="729.70" width="1.6" height="3.0" fill="#fdc372"/><rect x="176.16" y="729.70" width="1.6" height="3.0" fill="#fca65d"/><rect x="179.62" y="729.70" width="1.6" height="3.0" fill="#fdac60"/><rect x="183.07" y="729.70" width="1.6" height="3.0" fill="#fdb063"/><rect x="186.52" y="729.70" width="1.6" height="3.0" fill="#fdc272"/><rect x="189.98" y="729.70" width="1.6" height="3.0" fill="#fdb96a"/><rect x="193.44" y="729.70" width="1.6" height="3.0" fill="#fdbe6e"/><rect x="196.89" y="729.70" width="1.6" height="3.0" fill="#fdc574"/><rect x="200.34" y="729.70" width="1.6" height="3.0" fill="#fdb365"/><rect x="203.80" y="729.70" width="1.6" height="3.0" fill="#fdc776"/><rect x="207.25" y="729.70" width="1.6" height="3.0" fill="#fecc7a"/><rect x="210.71" y="729.70" width="1.6" height="3.0" fill="#fba05b"/><rect x="214.16" y="729.70" width="1.6" height="3.0" fill="#fece7c"/><rect x="217.62" y="729.70" width="1.6" height="3.0" fill="#fdc373"/><rect x="221.07" y="729.70" width="1.6" height="3.0" fill="#fba35c"/><rect x="224.53" y="729.70" width="1.6" height="3.0" fill="#fdb667"/><rect x="227.98" y="729.70" width="1.6" height="3.0" fill="#fdbe6f"/><rect x="231.44" y="729.70" width="1.6" height="3.0" fill="#fecc7b"/><rect x="234.90" y="729.70" width="1.6" height="3.0" fill="#fdb264"/><rect x="238.35" y="729.70" width="1.6" height="3.0" fill="#fdbb6c"/><rect x="241.81" y="729.70" width="1.6" height="3.0" fill="#fecb79"/><rect x="245.26" y="729.70" width="1.6" height="3.0" fill="#fdc776"/><rect x="248.72" y="729.70" width="1.6" height="3.0" fill="#fedf8a"/><rect x="252.17" y="729.70" width="1.6" height="3.0" fill="#fbfdb9"/><rect x="255.62" y="729.70" width="1.6" height="3.0" fill="#f6fbb1"/><rect x="259.08" y="729.70" width="1.6" height="3.0" fill="#fffcba"/><rect x="262.54" y="729.70" width="1.6" height="3.0" fill="#f4fbaf"/><rect x="265.99" y="729.70" width="1.6" height="3.0" fill="#f2faab"/><rect x="269.44" y="729.70" width="1.6" height="3.0" fill="#f6fcb2"/><rect x="272.90" y="729.70" width="1.6" height="3.0" fill="#f5fbaf"/><rect x="276.35" y="729.70" width="1.6" height="3.0" fill="#fffcba"/><rect x="279.81" y="729.70" width="1.6" height="3.0" fill="#f0f9a8"/><rect x="283.26" y="729.70" width="1.6" height="3.0" fill="#eef8a4"/><rect x="286.72" y="729.70" width="1.6" height="3.0" fill="#eef8a5"/><rect x="290.18" y="729.70" width="1.6" height="3.0" fill="#f9fdb6"/><rect x="293.63" y="729.70" width="1.6" height="3.0" fill="#f3faac"/><rect x="297.08" y="729.70" width="1.6" height="3.0" fill="#feffbe"/><rect x="300.54" y="729.70" width="1.6" height="3.0" fill="#f0f9a7"/><rect x="304.00" y="729.70" width="1.6" height="3.0" fill="#f1f9a9"/><rect x="307.45" y="729.70" width="1.6" height="3.0" fill="#feffbd"/><rect x="310.91" y="729.70" width="1.6" height="3.0" fill="#fff8b4"/><rect x="314.36" y="729.70" width="1.6" height="3.0" fill="#fbfeba"/><rect x="317.81" y="729.70" width="1.6" height="3.0" fill="#f9fcb5"/><rect x="321.27" y="729.70" width="1.6" height="3.0" fill="#f3faad"/><rect x="324.72" y="729.70" width="1.6" height="3.0" fill="#fafdb8"/><rect x="328.18" y="729.70" width="1.6" height="3.0" fill="#fff7b1"/><rect x="331.64" y="729.70" width="1.6" height="3.0" fill="#f2faab"/><rect x="335.09" y="729.70" width="1.6" height="3.0" fill="#fff8b3"/><rect x="338.55" y="729.70" width="1.6" height="3.0" fill="#f3faac"/><rect x="342.00" y="729.70" width="1.6" height="3.0" fill="#fffbb8"/><rect x="345.45" y="729.70" width="1.6" height="3.0" fill="#feffbe"/><rect x="348.91" y="729.70" width="1.6" height="3.0" fill="#f3faac"/><rect x="352.36" y="729.70" width="1.6" height="3.0" fill="#fffab7"/><rect x="355.82" y="729.70" width="1.6" height="3.0" fill="#fffab7"/><rect x="359.28" y="729.70" width="1.6" height="3.0" fill="#fafdb7"/><rect x="362.73" y="729.70" width="1.6" height="3.0" fill="#f4fbae"/><rect x="366.19" y="729.70" width="1.6" height="3.0" fill="#f2faaa"/><rect x="369.64" y="729.70" width="1.6" height="3.0" fill="#f5fbb0"/><rect x="373.09" y="729.70" width="1.6" height="3.0" fill="#eff9a6"/><rect x="376.55" y="729.70" width="1.6" height="3.0" fill="#fafdb7"/><rect x="380.01" y="729.70" width="1.6" height="3.0" fill="#eff9a6"/><rect x="383.46" y="729.70" width="1.6" height="3.0" fill="#fff8b4"/><rect x="386.92" y="729.70" width="1.6" height="3.0" fill="#fffdbb"/><rect x="390.37" y="729.70" width="1.6" height="3.0" fill="#f9fdb6"/><rect x="393.82" y="729.70" width="1.6" height="3.0" fill="#ffffbe"/><rect x="397.28" y="729.70" width="1.6" height="3.0" fill="#f4fbae"/><rect x="400.73" y="729.70" width="1.6" height="3.0" fill="#f7fcb2"/><rect x="404.19" y="729.70" width="1.6" height="3.0" fill="#f9fdb6"/><rect x="407.65" y="729.70" width="1.6" height="3.0" fill="#f1faaa"/><rect x="411.10" y="729.70" width="1.6" height="3.0" fill="#f9fcb5"/><rect x="414.56" y="729.70" width="1.6" height="3.0" fill="#ffffbf"/><rect x="418.01" y="729.70" width="1.6" height="3.0" fill="#fdfebc"/><rect x="421.46" y="729.70" width="1.6" height="3.0" fill="#f1faaa"/><rect x="424.92" y="729.70" width="1.6" height="3.0" fill="#f0f9a8"/><rect x="428.38" y="729.70" width="1.6" height="3.0" fill="#fffcba"/><rect x="431.83" y="729.70" width="1.6" height="3.0" fill="#f1f9aa"/><rect x="435.29" y="729.70" width="1.6" height="3.0" fill="#eef8a5"/><rect x="438.74" y="729.70" width="1.6" height="3.0" fill="#f9fdb6"/><rect x="442.19" y="729.70" width="1.6" height="3.0" fill="#f8fcb4"/><rect x="445.65" y="729.70" width="1.6" height="3.0" fill="#fffcba"/><rect x="449.10" y="729.70" width="1.6" height="3.0" fill="#f9fdb6"/><rect x="452.56" y="729.70" width="1.6" height="3.0" fill="#fafdb7"/><rect x="456.02" y="729.70" width="1.6" height="3.0" fill="#f7fcb3"/><rect x="459.47" y="729.70" width="1.6" height="3.0" fill="#fff7b1"/><rect x="462.93" y="729.70" width="1.6" height="3.0" fill="#eef8a5"/><rect x="466.38" y="729.70" width="1.6" height="3.0" fill="#fafdb7"/><rect x="469.83" y="729.70" width="1.6" height="3.0" fill="#fcfebb"/><rect x="473.29" y="729.70" width="1.6" height="3.0" fill="#f2faab"/><rect x="476.74" y="729.70" width="1.6" height="3.0" fill="#f8fcb5"/><rect x="480.20" y="729.70" width="1.6" height="3.0" fill="#fafdb8"/><rect x="483.66" y="729.70" width="1.6" height="3.0" fill="#f5fbb0"/><rect x="487.11" y="729.70" width="1.6" height="3.0" fill="#fff8b3"/><rect x="490.56" y="729.70" width="1.6" height="3.0" fill="#f9fdb6"/><rect x="494.02" y="729.70" width="1.6" height="3.0" fill="#fcfebb"/><rect x="497.47" y="729.70" width="1.6" height="3.0" fill="#eff8a5"/><rect x="500.93" y="729.70" width="1.6" height="3.0" fill="#eff9a7"/><rect x="504.39" y="729.70" width="1.6" height="3.0" fill="#fffebd"/><rect x="507.84" y="729.70" width="1.6" height="3.0" fill="#fbfdb8"/><rect x="511.30" y="729.70" width="1.6" height="3.0" fill="#fffab6"/><rect x="514.75" y="729.70" width="1.6" height="3.0" fill="#fcfeba"/><rect x="518.21" y="729.70" width="1.6" height="3.0" fill="#f2faab"/><rect x="521.66" y="729.70" width="1.6" height="3.0" fill="#f0f9a8"/><rect x="525.12" y="729.70" width="1.6" height="3.0" fill="#fbfdb8"/><rect x="528.57" y="729.70" width="1.6" height="3.0" fill="#ffffbe"/><rect x="532.03" y="729.70" width="1.6" height="3.0" fill="#fffcb9"/><rect x="535.48" y="729.70" width="1.6" height="3.0" fill="#f7fcb3"/><rect x="538.94" y="729.70" width="1.6" height="3.0" fill="#eff9a7"/><rect x="542.39" y="729.70" width="1.6" height="3.0" fill="#fffab6"/><rect x="545.85" y="729.70" width="1.6" height="3.0" fill="#f3faac"/><rect x="549.30" y="729.70" width="1.6" height="3.0" fill="#fff5af"/><rect x="552.76" y="729.70" width="1.6" height="3.0" fill="#fec978"/><rect x="556.21" y="729.70" width="1.6" height="3.0" fill="#f67e4b"/><rect x="559.67" y="729.70" width="1.6" height="3.0" fill="#e75a48"/><rect x="563.12" y="729.70" width="1.6" height="3.0" fill="#dc484c"/><rect x="566.58" y="729.70" width="1.6" height="3.0" fill="#dd4a4c"/><rect x="570.03" y="729.70" width="1.6" height="3.0" fill="#e55649"/><rect x="573.49" y="729.70" width="1.6" height="3.0" fill="#d53e4f"/><rect x="576.94" y="729.70" width="1.6" height="3.0" fill="#e95c47"/><rect x="580.39" y="729.70" width="1.6" height="3.0" fill="#d63f4f"/><rect x="583.85" y="729.70" width="1.6" height="3.0" fill="#e2514a"/><rect x="587.31" y="729.70" width="1.6" height="3.0" fill="#da454d"/><rect x="590.76" y="729.70" width="1.6" height="3.0" fill="#d8434e"/><rect x="594.22" y="729.70" width="1.6" height="3.0" fill="#e2524a"/><rect x="597.67" y="729.70" width="1.6" height="3.0" fill="#df4e4b"/><rect x="601.12" y="729.70" width="1.6" height="3.0" fill="#de4b4c"/><rect x="604.58" y="729.70" width="1.6" height="3.0" fill="#df4d4b"/><rect x="608.04" y="729.70" width="1.6" height="3.0" fill="#e2524a"/><rect x="611.49" y="729.70" width="1.6" height="3.0" fill="#d7414e"/><rect x="614.95" y="729.70" width="1.6" height="3.0" fill="#d8434e"/><rect x="618.40" y="729.70" width="1.6" height="3.0" fill="#e55749"/><rect x="621.86" y="729.70" width="1.6" height="3.0" fill="#e65749"/><rect x="625.31" y="729.70" width="1.6" height="3.0" fill="#e2524a"/><rect x="628.76" y="729.70" width="1.6" height="3.0" fill="#ec6146"/><rect x="632.22" y="729.70" width="1.6" height="3.0" fill="#e55649"/><rect x="635.68" y="729.70" width="1.6" height="3.0" fill="#ec6246"/><rect x="639.13" y="729.70" width="1.6" height="3.0" fill="#d9444d"/><rect x="642.59" y="729.70" width="1.6" height="3.0" fill="#e95c47"/><rect x="646.04" y="729.70" width="1.6" height="3.0" fill="#eb5f46"/><rect x="649.50" y="729.70" width="1.6" height="3.0" fill="#ee6445"/><rect x="652.95" y="729.70" width="1.6" height="3.0" fill="#dc484c"/><rect x="656.41" y="729.70" width="1.6" height="3.0" fill="#dc484c"/><rect x="659.86" y="729.70" width="1.6" height="3.0" fill="#ef6545"/><rect x="663.32" y="729.70" width="1.6" height="3.0" fill="#d9444e"/><rect x="666.77" y="729.70" width="1.6" height="3.0" fill="#f16844"/><rect x="670.23" y="729.70" width="1.6" height="3.0" fill="#ed6346"/><rect x="673.68" y="729.70" width="1.6" height="3.0" fill="#d6404f"/><rect x="677.13" y="729.70" width="1.6" height="3.0" fill="#d9454d"/><rect x="680.59" y="729.70" width="1.6" height="3.0" fill="#e85b47"/><rect x="684.05" y="729.70" width="1.6" height="3.0" fill="#da454d"/><rect x="687.50" y="729.70" width="1.6" height="3.0" fill="#d53e4f"/><rect x="690.96" y="729.70" width="1.6" height="3.0" fill="#ec6046"/><rect x="694.41" y="729.70" width="1.6" height="3.0" fill="#df4d4b"/><rect x="697.87" y="729.70" width="1.6" height="3.0" fill="#ea5e47"/><rect x="701.32" y="729.70" width="1.6" height="3.0" fill="#d63f4f"/><rect x="704.78" y="729.70" width="1.6" height="3.0" fill="#de4c4b"/><rect x="708.23" y="729.70" width="1.6" height="3.0" fill="#e75a48"/><rect x="711.69" y="729.70" width="1.6" height="3.0" fill="#d0394e"/><rect x="715.14" y="729.70" width="1.6" height="3.0" fill="#d8434e"/><rect x="718.60" y="729.70" width="1.6" height="3.0" fill="#e75948"/><rect x="722.05" y="729.70" width="1.6" height="3.0" fill="#ee6445"/><rect x="725.50" y="729.70" width="1.6" height="3.0" fill="#f06745"/><rect x="728.96" y="729.70" width="1.6" height="3.0" fill="#d53f4f"/><rect x="732.42" y="729.70" width="1.6" height="3.0" fill="#e2514a"/><rect x="735.87" y="729.70" width="1.6" height="3.0" fill="#e95d47"/><rect x="739.33" y="729.70" width="1.6" height="3.0" fill="#e1514a"/><rect x="742.78" y="729.70" width="1.6" height="3.0" fill="#e75a48"/><rect x="746.24" y="729.70" width="1.6" height="3.0" fill="#f06745"/><rect x="749.69" y="729.70" width="1.6" height="3.0" fill="#fdb163"/><rect x="753.14" y="729.70" width="1.6" height="3.0" fill="#feeda0"/><rect x="756.60" y="729.70" width="1.6" height="3.0" fill="#fff7b1"/><rect x="760.06" y="729.70" width="1.6" height="3.0" fill="#f9fcb5"/><rect x="763.51" y="729.70" width="1.6" height="3.0" fill="#fafdb7"/><rect x="766.97" y="729.70" width="1.6" height="3.0" fill="#f8fcb5"/><rect x="770.42" y="729.70" width="1.6" height="3.0" fill="#fffab7"/><rect x="773.88" y="729.70" width="1.6" height="3.0" fill="#fffbb9"/><rect x="777.33" y="729.70" width="1.6" height="3.0" fill="#fffcba"/><rect x="780.79" y="729.70" width="1.6" height="3.0" fill="#f1faaa"/><rect x="784.24" y="729.70" width="1.6" height="3.0" fill="#eef8a4"/><rect x="787.70" y="729.70" width="1.6" height="3.0" fill="#eff9a7"/><rect x="791.15" y="729.70" width="1.6" height="3.0" fill="#fff9b4"/><rect x="794.61" y="729.70" width="1.6" height="3.0" fill="#fff8b3"/><rect x="798.06" y="729.70" width="1.6" height="3.0" fill="#eff8a6"/><rect x="801.51" y="729.70" width="1.6" height="3.0" fill="#fbfdb9"/><rect x="804.97" y="729.70" width="1.6" height="3.0" fill="#f3faad"/><rect x="808.43" y="729.70" width="1.6" height="3.0" fill="#feffbe"/><rect x="811.88" y="729.70" width="1.6" height="3.0" fill="#fbfdb8"/><rect x="815.34" y="729.70" width="1.6" height="3.0" fill="#fafdb7"/><rect x="818.79" y="729.70" width="1.6" height="3.0" fill="#fcfeba"/><rect x="822.25" y="729.70" width="1.6" height="3.0" fill="#f7fcb3"/><rect x="825.70" y="729.70" width="1.6" height="3.0" fill="#fff6b0"/><rect x="829.16" y="729.70" width="1.6" height="3.0" fill="#f5fbaf"/><rect x="832.61" y="729.70" width="1.6" height="3.0" fill="#f1faaa"/><rect x="836.07" y="729.70" width="1.6" height="3.0" fill="#fffbb9"/><rect x="839.52" y="729.70" width="1.6" height="3.0" fill="#fbfdb9"/><rect x="842.98" y="729.70" width="1.6" height="3.0" fill="#f4fbae"/><rect x="846.43" y="729.70" width="1.6" height="3.0" fill="#fcfebb"/><rect x="849.88" y="729.70" width="1.6" height="3.0" fill="#fffcba"/><rect x="853.34" y="729.70" width="1.6" height="3.0" fill="#fffbb8"/><rect x="856.80" y="729.70" width="1.6" height="3.0" fill="#fafdb7"/><rect x="860.25" y="729.70" width="1.6" height="3.0" fill="#fff6b0"/><rect x="863.71" y="729.70" width="1.6" height="3.0" fill="#f0f9a8"/><rect x="867.16" y="729.70" width="1.6" height="3.0" fill="#f2faab"/><rect x="870.62" y="729.70" width="1.6" height="3.0" fill="#f5fbaf"/><rect x="874.07" y="729.70" width="1.6" height="3.0" fill="#f1f9a9"/><rect x="877.53" y="729.70" width="1.6" height="3.0" fill="#f7fcb2"/><rect x="880.98" y="729.70" width="1.6" height="3.0" fill="#fcfebb"/><rect x="884.44" y="729.70" width="1.6" height="3.0" fill="#f8fcb3"/><rect x="887.89" y="729.70" width="1.6" height="3.0" fill="#fafdb7"/><rect x="65.60" y="724.70" width="1.6" height="3.0" fill="#f3faac"/><rect x="69.06" y="724.70" width="1.6" height="3.0" fill="#f7fcb3"/><rect x="72.51" y="724.70" width="1.6" height="3.0" fill="#fff8b2"/><rect x="75.97" y="724.70" width="1.6" height="3.0" fill="#f5fbaf"/><rect x="79.42" y="724.70" width="1.6" height="3.0" fill="#f9fdb5"/><rect x="82.88" y="724.70" width="1.6" height="3.0" fill="#f8fcb4"/><rect x="86.33" y="724.70" width="1.6" height="3.0" fill="#f7fcb3"/><rect x="89.79" y="724.70" width="1.6" height="3.0" fill="#fffcba"/><rect x="93.24" y="724.70" width="1.6" height="3.0" fill="#f5fbb0"/><rect x="96.70" y="724.70" width="1.6" height="3.0" fill="#f6fbb0"/><rect x="100.15" y="724.70" width="1.6" height="3.0" fill="#fafdb7"/><rect x="103.61" y="724.70" width="1.6" height="3.0" fill="#f8fcb5"/><rect x="107.06" y="724.70" width="1.6" height="3.0" fill="#f8fcb5"/><rect x="110.52" y="724.70" width="1.6" height="3.0" fill="#fffcba"/><rect x="113.97" y="724.70" width="1.6" height="3.0" fill="#f9fdb6"/><rect x="117.43" y="724.70" width="1.6" height="3.0" fill="#fff2a9"/><rect x="120.88" y="724.70" width="1.6" height="3.0" fill="#fffab7"/><rect x="124.34" y="724.70" width="1.6" height="3.0" fill="#fffebd"/><rect x="127.79" y="724.70" width="1.6" height="3.0" fill="#fff0a6"/><rect x="131.25" y="724.70" width="1.6" height="3.0" fill="#fffbb7"/><rect x="134.70" y="724.70" width="1.6" height="3.0" fill="#fcfeba"/><rect x="138.16" y="724.70" width="1.6" height="3.0" fill="#fcfeba"/><rect x="141.61" y="724.70" width="1.6" height="3.0" fill="#fff7b1"/><rect x="145.06" y="724.70" width="1.6" height="3.0" fill="#f4fbae"/><rect x="148.52" y="724.70" width="1.6" height="3.0" fill="#fbfdb9"/><rect x="151.97" y="724.70" width="1.6" height="3.0" fill="#fffab7"/><rect x="155.43" y="724.70" width="1.6" height="3.0" fill="#fbfdb9"/><rect x="158.88" y="724.70" width="1.6" height="3.0" fill="#fdfebc"/><rect x="162.34" y="724.70" width="1.6" height="3.0" fill="#feffbe"/><rect x="165.80" y="724.70" width="1.6" height="3.0" fill="#fffcb9"/><rect x="169.25" y="724.70" width="1.6" height="3.0" fill="#f3faac"/><rect x="172.70" y="724.70" width="1.6" height="3.0" fill="#fbfeb9"/><rect x="176.16" y="724.70" width="1.6" height="3.0" fill="#fafdb7"/><rect x="179.62" y="724.70" width="1.6" height="3.0" fill="#f8fcb5"/><rect x="183.07" y="724.70" width="1.6" height="3.0" fill="#f3faac"/><rect x="186.52" y="724.70" width="1.6" height="3.0" fill="#fff0a6"/><rect x="189.98" y="724.70" width="1.6" height="3.0" fill="#fcfeba"/><rect x="193.44" y="724.70" width="1.6" height="3.0" fill="#f9fdb6"/><rect x="196.89" y="724.70" width="1.6" height="3.0" fill="#fff7b2"/><rect x="200.34" y="724.70" width="1.6" height="3.0" fill="#fffcba"/><rect x="203.80" y="724.70" width="1.6" height="3.0" fill="#fff1a8"/><rect x="207.25" y="724.70" width="1.6" height="3.0" fill="#fff6af"/><rect x="210.71" y="724.70" width="1.6" height="3.0" fill="#fffbb9"/><rect x="214.16" y="724.70" width="1.6" height="3.0" fill="#fff3aa"/><rect x="217.62" y="724.70" width="1.6" height="3.0" fill="#fff7b2"/><rect x="221.07" y="724.70" width="1.6" height="3.0" fill="#f5fbaf"/><rect x="224.53" y="724.70" width="1.6" height="3.0" fill="#fefebd"/><rect x="227.98" y="724.70" width="1.6" height="3.0" fill="#ffffbf"/><rect x="231.44" y="724.70" width="1.6" height="3.0" fill="#f3faad"/><rect x="234.90" y="724.70" width="1.6" height="3.0" fill="#fdfebc"/><rect x="238.35" y="724.70" width="1.6" height="3.0" fill="#f3faac"/><rect x="241.81" y="724.70" width="1.6" height="3.0" fill="#fcfeba"/><rect x="245.26" y="724.70" width="1.6" height="3.0" fill="#f7fcb3"/><rect x="248.72" y="724.70" width="1.6" height="3.0" fill="#fff2a9"/><rect x="252.17" y="724.70" width="1.6" height="3.0" fill="#fdfebb"/><rect x="255.62" y="724.70" width="1.6" height="3.0" fill="#f9fcb5"/><rect x="259.08" y="724.70" width="1.6" height="3.0" fill="#fff1a7"/><rect x="262.54" y="724.70" width="1.6" height="3.0" fill="#f4fbae"/><rect x="265.99" y="724.70" width="1.6" height="3.0" fill="#fff4ad"/><rect x="269.44" y="724.70" width="1.6" height="3.0" fill="#fffebe"/><rect x="272.90" y="724.70" width="1.6" height="3.0" fill="#fff5ae"/><rect x="276.35" y="724.70" width="1.6" height="3.0" fill="#ffffbf"/><rect x="279.81" y="724.70" width="1.6" height="3.0" fill="#fcfebb"/><rect x="283.26" y="724.70" width="1.6" height="3.0" fill="#fff1a8"/><rect x="286.72" y="724.70" width="1.6" height="3.0" fill="#f4fbae"/><rect x="290.18" y="724.70" width="1.6" height="3.0" fill="#fffdbb"/><rect x="293.63" y="724.70" width="1.6" height="3.0" fill="#feffbe"/><rect x="297.08" y="724.70" width="1.6" height="3.0" fill="#fdfebb"/><rect x="300.54" y="724.70" width="1.6" height="3.0" fill="#fffbb8"/><rect x="304.00" y="724.70" width="1.6" height="3.0" fill="#fff8b4"/><rect x="307.45" y="724.70" width="1.6" height="3.0" fill="#fbfdb9"/><rect x="310.91" y="724.70" width="1.6" height="3.0" fill="#fdfebd"/><rect x="314.36" y="724.70" width="1.6" height="3.0" fill="#fff8b4"/><rect x="317.81" y="724.70" width="1.6" height="3.0" fill="#fafdb7"/><rect x="321.27" y="724.70" width="1.6" height="3.0" fill="#fff9b4"/><rect x="324.72" y="724.70" width="1.6" height="3.0" fill="#fff0a6"/><rect x="328.18" y="724.70" width="1.6" height="3.0" fill="#fff7b2"/><rect x="331.64" y="724.70" width="1.6" height="3.0" fill="#fff1a7"/><rect x="335.09" y="724.70" width="1.6" height="3.0" fill="#fff4ad"/><rect x="338.55" y="724.70" width="1.6" height="3.0" fill="#f9fcb5"/><rect x="342.00" y="724.70" width="1.6" height="3.0" fill="#fffcb9"/><rect x="345.45" y="724.70" width="1.6" height="3.0" fill="#f5fbaf"/><rect x="348.91" y="724.70" width="1.6" height="3.0" fill="#f9fdb5"/><rect x="352.36" y="724.70" width="1.6" height="3.0" fill="#fff1a8"/><rect x="355.82" y="724.70" width="1.6" height="3.0" fill="#f3faac"/><rect x="359.28" y="724.70" width="1.6" height="3.0" fill="#f4fbae"/><rect x="362.73" y="724.70" width="1.6" height="3.0" fill="#fff2a9"/><rect x="366.19" y="724.70" width="1.6" height="3.0" fill="#f5fbaf"/><rect x="369.64" y="724.70" width="1.6" height="3.0" fill="#fffdbb"/><rect x="373.09" y="724.70" width="1.6" height="3.0" fill="#fffebe"/><rect x="376.55" y="724.70" width="1.6" height="3.0" fill="#f3faad"/><rect x="380.01" y="724.70" width="1.6" height="3.0" fill="#fff7b2"/><rect x="383.46" y="724.70" width="1.6" height="3.0" fill="#feffbe"/><rect x="386.92" y="724.70" width="1.6" height="3.0" fill="#f4fbae"/><rect x="390.37" y="724.70" width="1.6" height="3.0" fill="#f9fdb6"/><rect x="393.82" y="724.70" width="1.6" height="3.0" fill="#fffebd"/><rect x="397.28" y="724.70" width="1.6" height="3.0" fill="#f3faac"/><rect x="400.73" y="724.70" width="1.6" height="3.0" fill="#f7fcb3"/><rect x="404.19" y="724.70" width="1.6" height="3.0" fill="#fcfebb"/><rect x="407.65" y="724.70" width="1.6" height="3.0" fill="#fff3ab"/><rect x="411.10" y="724.70" width="1.6" height="3.0" fill="#fcfeba"/><rect x="414.56" y="724.70" width="1.6" height="3.0" fill="#fffebd"/><rect x="418.01" y="724.70" width="1.6" height="3.0" fill="#fff6b0"/><rect x="421.46" y="724.70" width="1.6" height="3.0" fill="#fff1a8"/><rect x="424.92" y="724.70" width="1.6" height="3.0" fill="#feffbe"/><rect x="428.38" y="724.70" width="1.6" height="3.0" fill="#fff3ab"/><rect x="431.83" y="724.70" width="1.6" height="3.0" fill="#fffdbc"/><rect x="435.29" y="724.70" width="1.6" height="3.0" fill="#fbfdb8"/><rect x="438.74" y="724.70" width="1.6" height="3.0" fill="#fffebd"/><rect x="442.19" y="724.70" width="1.6" height="3.0" fill="#fff8b3"/><rect x="445.65" y="724.70" width="1.6" height="3.0" fill="#fdfebc"/><rect x="449.10" y="724.70" width="1.6" height="3.0" fill="#fffdbb"/><rect x="452.56" y="724.70" width="1.6" height="3.0" fill="#f8fcb4"/><rect x="456.02" y="724.70" width="1.6" height="3.0" fill="#feffbe"/><rect x="459.47" y="724.70" width="1.6" height="3.0" fill="#f3faac"/><rect x="462.93" y="724.70" width="1.6" height="3.0" fill="#f4faad"/><rect x="466.38" y="724.70" width="1.6" height="3.0" fill="#f9fdb6"/><rect x="469.83" y="724.70" width="1.6" height="3.0" fill="#fff7b1"/><rect x="473.29" y="724.70" width="1.6" height="3.0" fill="#fff3ab"/><rect x="476.74" y="724.70" width="1.6" height="3.0" fill="#f5fbb0"/><rect x="480.20" y="724.70" width="1.6" height="3.0" fill="#f8fcb4"/><rect x="483.66" y="724.70" width="1.6" height="3.0" fill="#fcfeba"/><rect x="487.11" y="724.70" width="1.6" height="3.0" fill="#fffbb8"/><rect x="490.56" y="724.70" width="1.6" height="3.0" fill="#fff8b3"/><rect x="494.02" y="724.70" width="1.6" height="3.0" fill="#fafdb8"/><rect x="497.47" y="724.70" width="1.6" height="3.0" fill="#fdfebc"/><rect x="500.93" y="724.70" width="1.6" height="3.0" fill="#fdfebb"/><rect x="504.39" y="724.70" width="1.6" height="3.0" fill="#fcfeba"/><rect x="507.84" y="724.70" width="1.6" height="3.0" fill="#f9fcb5"/><rect x="511.30" y="724.70" width="1.6" height="3.0" fill="#fff5af"/><rect x="514.75" y="724.70" width="1.6" height="3.0" fill="#fff7b2"/><rect x="518.21" y="724.70" width="1.6" height="3.0" fill="#f3faac"/><rect x="521.66" y="724.70" width="1.6" height="3.0" fill="#f5fbaf"/><rect x="525.12" y="724.70" width="1.6" height="3.0" fill="#f6fbb0"/><rect x="528.57" y="724.70" width="1.6" height="3.0" fill="#fff1a7"/><rect x="532.03" y="724.70" width="1.6" height="3.0" fill="#fff1a8"/><rect x="535.48" y="724.70" width="1.6" height="3.0" fill="#fff8b3"/><rect x="538.94" y="724.70" width="1.6" height="3.0" fill="#fffdbb"/><rect x="542.39" y="724.70" width="1.6" height="3.0" fill="#fcfeba"/><rect x="545.85" y="724.70" width="1.6" height="3.0" fill="#fff3aa"/><rect x="549.30" y="724.70" width="1.6" height="3.0" fill="#feffbe"/><rect x="552.76" y="724.70" width="1.6" height="3.0" fill="#fee593"/><rect x="556.21" y="724.70" width="1.6" height="3.0" fill="#fed380"/><rect x="559.67" y="724.70" width="1.6" height="3.0" fill="#fedf8a"/><rect x="563.12" y="724.70" width="1.6" height="3.0" fill="#fed985"/><rect x="566.58" y="724.70" width="1.6" height="3.0" fill="#fedd88"/><rect x="570.03" y="724.70" width="1.6" height="3.0" fill="#fed07d"/><rect x="573.49" y="724.70" width="1.6" height="3.0" fill="#fed582"/><rect x="576.94" y="724.70" width="1.6" height="3.0" fill="#fec876"/><rect x="580.39" y="724.70" width="1.6" height="3.0" fill="#fece7c"/><rect x="583.85" y="724.70" width="1.6" height="3.0" fill="#fee18d"/><rect x="587.31" y="724.70" width="1.6" height="3.0" fill="#fee492"/><rect x="590.76" y="724.70" width="1.6" height="3.0" fill="#fdc171"/><rect x="594.22" y="724.70" width="1.6" height="3.0" fill="#fdc373"/><rect x="597.67" y="724.70" width="1.6" height="3.0" fill="#fee391"/><rect x="601.12" y="724.70" width="1.6" height="3.0" fill="#fedc88"/><rect x="604.58" y="724.70" width="1.6" height="3.0" fill="#fee28f"/><rect x="608.04" y="724.70" width="1.6" height="3.0" fill="#fec877"/><rect x="611.49" y="724.70" width="1.6" height="3.0" fill="#fed27f"/><rect x="614.95" y="724.70" width="1.6" height="3.0" fill="#feca78"/><rect x="618.40" y="724.70" width="1.6" height="3.0" fill="#fee391"/><rect x="621.86" y="724.70" width="1.6" height="3.0" fill="#fecf7d"/><rect x="625.31" y="724.70" width="1.6" height="3.0" fill="#fede89"/><rect x="628.76" y="724.70" width="1.6" height="3.0" fill="#fee99a"/><rect x="632.22" y="724.70" width="1.6" height="3.0" fill="#fecd7b"/><rect x="635.68" y="724.70" width="1.6" height="3.0" fill="#fed885"/><rect x="639.13" y="724.70" width="1.6" height="3.0" fill="#fee18d"/><rect x="642.59" y="724.70" width="1.6" height="3.0" fill="#fee796"/><rect x="646.04" y="724.70" width="1.6" height="3.0" fill="#fed280"/><rect x="649.50" y="724.70" width="1.6" height="3.0" fill="#fecf7d"/><rect x="652.95" y="724.70" width="1.6" height="3.0" fill="#fdc272"/><rect x="656.41" y="724.70" width="1.6" height="3.0" fill="#fee594"/><rect x="659.86" y="724.70" width="1.6" height="3.0" fill="#fdc171"/><rect x="663.32" y="724.70" width="1.6" height="3.0" fill="#fdc171"/><rect x="666.77" y="724.70" width="1.6" height="3.0" fill="#fed985"/><rect x="670.23" y="724.70" width="1.6" height="3.0" fill="#fed582"/><rect x="673.68" y="724.70" width="1.6" height="3.0" fill="#fedf8a"/><rect x="677.13" y="724.70" width="1.6" height="3.0" fill="#fecc7a"/><rect x="680.59" y="724.70" width="1.6" height="3.0" fill="#fee28f"/><rect x="684.05" y="724.70" width="1.6" height="3.0" fill="#fdc171"/><rect x="687.50" y="724.70" width="1.6" height="3.0" fill="#fec877"/><rect x="690.96" y="724.70" width="1.6" height="3.0" fill="#fede89"/><rect x="694.41" y="724.70" width="1.6" height="3.0" fill="#fdc171"/><rect x="697.87" y="724.70" width="1.6" height="3.0" fill="#fecc7a"/><rect x="701.32" y="724.70" width="1.6" height="3.0" fill="#fee18c"/><rect x="704.78" y="724.70" width="1.6" height="3.0" fill="#fee08b"/><rect x="708.23" y="724.70" width="1.6" height="3.0" fill="#fecb79"/><rect x="711.69" y="724.70" width="1.6" height="3.0" fill="#fdc474"/><rect x="715.14" y="724.70" width="1.6" height="3.0" fill="#fecf7d"/><rect x="718.60" y="724.70" width="1.6" height="3.0" fill="#fee18c"/><rect x="722.05" y="724.70" width="1.6" height="3.0" fill="#fecf7d"/><rect x="725.50" y="724.70" width="1.6" height="3.0" fill="#fdc373"/><rect x="728.96" y="724.70" width="1.6" height="3.0" fill="#fee08b"/><rect x="732.42" y="724.70" width="1.6" height="3.0" fill="#fed986"/><rect x="735.87" y="724.70" width="1.6" height="3.0" fill="#fee796"/><rect x="739.33" y="724.70" width="1.6" height="3.0" fill="#fee797"/><rect x="742.78" y="724.70" width="1.6" height="3.0" fill="#fee796"/><rect x="746.24" y="724.70" width="1.6" height="3.0" fill="#fedf8a"/><rect x="749.69" y="724.70" width="1.6" height="3.0" fill="#fff8b3"/><rect x="753.14" y="724.70" width="1.6" height="3.0" fill="#fff5ae"/><rect x="756.60" y="724.70" width="1.6" height="3.0" fill="#fff9b6"/><rect x="760.06" y="724.70" width="1.6" height="3.0" fill="#fffcba"/><rect x="763.51" y="724.70" width="1.6" height="3.0" fill="#f4fbae"/><rect x="766.97" y="724.70" width="1.6" height="3.0" fill="#f5fbb0"/><rect x="770.42" y="724.70" width="1.6" height="3.0" fill="#fff7b2"/><rect x="773.88" y="724.70" width="1.6" height="3.0" fill="#fffbb8"/><rect x="777.33" y="724.70" width="1.6" height="3.0" fill="#fffbb8"/><rect x="780.79" y="724.70" width="1.6" height="3.0" fill="#fffbb8"/><rect x="784.24" y="724.70" width="1.6" height="3.0" fill="#fffcba"/><rect x="787.70" y="724.70" width="1.6" height="3.0" fill="#fffcb9"/><rect x="791.15" y="724.70" width="1.6" height="3.0" fill="#fff6af"/><rect x="794.61" y="724.70" width="1.6" height="3.0" fill="#fdfebd"/><rect x="798.06" y="724.70" width="1.6" height="3.0" fill="#f8fcb3"/><rect x="801.51" y="724.70" width="1.6" height="3.0" fill="#feffbd"/><rect x="804.97" y="724.70" width="1.6" height="3.0" fill="#f7fcb2"/><rect x="808.43" y="724.70" width="1.6" height="3.0" fill="#fdfebd"/><rect x="811.88" y="724.70" width="1.6" height="3.0" fill="#fff5ae"/><rect x="815.34" y="724.70" width="1.6" height="3.0" fill="#f9fcb5"/><rect x="818.79" y="724.70" width="1.6" height="3.0" fill="#f5fbb0"/><rect x="822.25" y="724.70" width="1.6" height="3.0" fill="#fff8b4"/><rect x="825.70" y="724.70" width="1.6" height="3.0" fill="#fff0a6"/><rect x="829.16" y="724.70" width="1.6" height="3.0" fill="#ffffbe"/><rect x="832.61" y="724.70" width="1.6" height="3.0" fill="#feffbd"/><rect x="836.07" y="724.70" width="1.6" height="3.0" fill="#fdfebc"/><rect x="839.52" y="724.70" width="1.6" height="3.0" fill="#f3faad"/><rect x="842.98" y="724.70" width="1.6" height="3.0" fill="#fbfdb9"/><rect x="846.43" y="724.70" width="1.6" height="3.0" fill="#f7fcb3"/><rect x="849.88" y="724.70" width="1.6" height="3.0" fill="#fff1a8"/><rect x="853.34" y="724.70" width="1.6" height="3.0" fill="#feffbd"/><rect x="856.80" y="724.70" width="1.6" height="3.0" fill="#f8fcb4"/><rect x="860.25" y="724.70" width="1.6" height="3.0" fill="#fff2a9"/><rect x="863.71" y="724.70" width="1.6" height="3.0" fill="#fff2a9"/><rect x="867.16" y="724.70" width="1.6" height="3.0" fill="#f9fdb6"/><rect x="870.62" y="724.70" width="1.6" height="3.0" fill="#f5fbaf"/><rect x="874.07" y="724.70" width="1.6" height="3.0" fill="#fff2a9"/><rect x="877.53" y="724.70" width="1.6" height="3.0" fill="#fcfeba"/><rect x="880.98" y="724.70" width="1.6" height="3.0" fill="#fff4ac"/><rect x="884.44" y="724.70" width="1.6" height="3.0" fill="#f9fdb5"/><rect x="887.89" y="724.70" width="1.6" height="3.0" fill="#fbfeb9"/><rect x="65.60" y="719.70" width="1.6" height="3.0" fill="#4174b4"/><rect x="69.06" y="719.70" width="1.6" height="3.0" fill="#4175b4"/><rect x="72.51" y="719.70" width="1.6" height="3.0" fill="#4f62ab"/><rect x="75.97" y="719.70" width="1.6" height="3.0" fill="#496baf"/><rect x="79.42" y="719.70" width="1.6" height="3.0" fill="#4f62ab"/><rect x="82.88" y="719.70" width="1.6" height="3.0" fill="#456fb1"/><rect x="86.33" y="719.70" width="1.6" height="3.0" fill="#4471b2"/><rect x="89.79" y="719.70" width="1.6" height="3.0" fill="#545ba8"/><rect x="93.24" y="719.70" width="1.6" height="3.0" fill="#4d66ad"/><rect x="96.70" y="719.70" width="1.6" height="3.0" fill="#486cb0"/><rect x="100.15" y="719.70" width="1.6" height="3.0" fill="#496aaf"/><rect x="103.61" y="719.70" width="1.6" height="3.0" fill="#4e64ac"/><rect x="107.06" y="719.70" width="1.6" height="3.0" fill="#4d64ac"/><rect x="110.52" y="719.70" width="1.6" height="3.0" fill="#535da9"/><rect x="113.97" y="719.70" width="1.6" height="3.0" fill="#466fb1"/><rect x="117.43" y="719.70" width="1.6" height="3.0" fill="#5160aa"/><rect x="120.88" y="719.70" width="1.6" height="3.0" fill="#4c66ad"/><rect x="124.34" y="719.70" width="1.6" height="3.0" fill="#515faa"/><rect x="127.79" y="719.70" width="1.6" height="3.0" fill="#5061ab"/><rect x="131.25" y="719.70" width="1.6" height="3.0" fill="#5160aa"/><rect x="134.70" y="719.70" width="1.6" height="3.0" fill="#525ea9"/><rect x="138.16" y="719.70" width="1.6" height="3.0" fill="#545ca8"/><rect x="141.61" y="719.70" width="1.6" height="3.0" fill="#4c67ad"/><rect x="145.06" y="719.70" width="1.6" height="3.0" fill="#496baf"/><rect x="148.52" y="719.70" width="1.6" height="3.0" fill="#4e64ac"/><rect x="151.97" y="719.70" width="1.6" height="3.0" fill="#5061ab"/><rect x="155.43" y="719.70" width="1.6" height="3.0" fill="#466eb1"/><rect x="158.88" y="719.70" width="1.6" height="3.0" fill="#466eb1"/><rect x="162.34" y="719.70" width="1.6" height="3.0" fill="#3f78b5"/><rect x="165.80" y="719.70" width="1.6" height="3.0" fill="#4e63ac"/><rect x="169.25" y="719.70" width="1.6" height="3.0" fill="#555ba8"/><rect x="172.70" y="719.70" width="1.6" height="3.0" fill="#4570b2"/><rect x="176.16" y="719.70" width="1.6" height="3.0" fill="#3f77b5"/><rect x="179.62" y="719.70" width="1.6" height="3.0" fill="#4076b4"/><rect x="183.07" y="719.70" width="1.6" height="3.0" fill="#466eb1"/><rect x="186.52" y="719.70" width="1.6" height="3.0" fill="#4373b3"/><rect x="189.98" y="719.70" width="1.6" height="3.0" fill="#545ba8"/><rect x="193.44" y="719.70" width="1.6" height="3.0" fill="#3c7bb7"/><rect x="196.89" y="719.70" width="1.6" height="3.0" fill="#4372b3"/><rect x="200.34" y="719.70" width="1.6" height="3.0" fill="#3e79b6"/><rect x="203.80" y="719.70" width="1.6" height="3.0" fill="#4c66ad"/><rect x="207.25" y="719.70" width="1.6" height="3.0" fill="#4f62ab"/><rect x="210.71" y="719.70" width="1.6" height="3.0" fill="#4076b5"/><rect x="214.16" y="719.70" width="1.6" height="3.0" fill="#3c7ab7"/><rect x="217.62" y="719.70" width="1.6" height="3.0" fill="#476db0"/><rect x="221.07" y="719.70" width="1.6" height="3.0" fill="#4a69ae"/><rect x="224.53" y="719.70" width="1.6" height="3.0" fill="#535ea9"/><rect x="227.98" y="719.70" width="1.6" height="3.0" fill="#3c7bb7"/><rect x="231.44" y="719.70" width="1.6" height="3.0" fill="#3e79b6"/><rect x="234.90" y="719.70" width="1.6" height="3.0" fill="#4076b5"/><rect x="238.35" y="719.70" width="1.6" height="3.0" fill="#4175b4"/><rect x="241.81" y="719.70" width="1.6" height="3.0" fill="#4175b4"/><rect x="245.26" y="719.70" width="1.6" height="3.0" fill="#4e64ac"/><rect x="248.72" y="719.70" width="1.6" height="3.0" fill="#4b68ae"/><rect x="252.17" y="719.70" width="1.6" height="3.0" fill="#4175b4"/><rect x="255.62" y="719.70" width="1.6" height="3.0" fill="#4076b5"/><rect x="259.08" y="719.70" width="1.6" height="3.0" fill="#4273b3"/><rect x="262.54" y="719.70" width="1.6" height="3.0" fill="#3f77b5"/><rect x="265.99" y="719.70" width="1.6" height="3.0" fill="#4f63ab"/><rect x="269.44" y="719.70" width="1.6" height="3.0" fill="#4372b3"/><rect x="272.90" y="719.70" width="1.6" height="3.0" fill="#496aaf"/><rect x="276.35" y="719.70" width="1.6" height="3.0" fill="#5061aa"/><rect x="279.81" y="719.70" width="1.6" height="3.0" fill="#476cb0"/><rect x="283.26" y="719.70" width="1.6" height="3.0" fill="#4274b3"/><rect x="286.72" y="719.70" width="1.6" height="3.0" fill="#525ea9"/><rect x="290.18" y="719.70" width="1.6" height="3.0" fill="#535da9"/><rect x="293.63" y="719.70" width="1.6" height="3.0" fill="#4471b2"/><rect x="297.08" y="719.70" width="1.6" height="3.0" fill="#496aaf"/><rect x="300.54" y="719.70" width="1.6" height="3.0" fill="#545ca8"/><rect x="304.00" y="719.70" width="1.6" height="3.0" fill="#486cb0"/><rect x="307.45" y="719.70" width="1.6" height="3.0" fill="#4175b4"/><rect x="310.91" y="719.70" width="1.6" height="3.0" fill="#3c7bb7"/><rect x="314.36" y="719.70" width="1.6" height="3.0" fill="#545ca8"/><rect x="317.81" y="719.70" width="1.6" height="3.0" fill="#5061ab"/><rect x="321.27" y="719.70" width="1.6" height="3.0" fill="#456fb1"/><rect x="324.72" y="719.70" width="1.6" height="3.0" fill="#496baf"/><rect x="328.18" y="719.70" width="1.6" height="3.0" fill="#486baf"/><rect x="331.64" y="719.70" width="1.6" height="3.0" fill="#4273b3"/><rect x="335.09" y="719.70" width="1.6" height="3.0" fill="#555ba8"/><rect x="338.55" y="719.70" width="1.6" height="3.0" fill="#4c66ad"/><rect x="342.00" y="719.70" width="1.6" height="3.0" fill="#4174b4"/><rect x="345.45" y="719.70" width="1.6" height="3.0" fill="#3b7cb7"/><rect x="348.91" y="719.70" width="1.6" height="3.0" fill="#476cb0"/><rect x="352.36" y="719.70" width="1.6" height="3.0" fill="#4570b2"/><rect x="355.82" y="719.70" width="1.6" height="3.0" fill="#5061ab"/><rect x="359.28" y="719.70" width="1.6" height="3.0" fill="#4e64ac"/><rect x="362.73" y="719.70" width="1.6" height="3.0" fill="#4b68ae"/><rect x="366.19" y="719.70" width="1.6" height="3.0" fill="#3f77b5"/><rect x="369.64" y="719.70" width="1.6" height="3.0" fill="#3f77b5"/><rect x="373.09" y="719.70" width="1.6" height="3.0" fill="#4372b2"/><rect x="376.55" y="719.70" width="1.6" height="3.0" fill="#4274b3"/><rect x="380.01" y="719.70" width="1.6" height="3.0" fill="#525faa"/><rect x="383.46" y="719.70" width="1.6" height="3.0" fill="#486baf"/><rect x="386.92" y="719.70" width="1.6" height="3.0" fill="#4c67ad"/><rect x="390.37" y="719.70" width="1.6" height="3.0" fill="#555ba8"/><rect x="393.82" y="719.70" width="1.6" height="3.0" fill="#4273b3"/><rect x="397.28" y="719.70" width="1.6" height="3.0" fill="#496aaf"/><rect x="400.73" y="719.70" width="1.6" height="3.0" fill="#3f77b5"/><rect x="404.19" y="719.70" width="1.6" height="3.0" fill="#4f62ab"/><rect x="407.65" y="719.70" width="1.6" height="3.0" fill="#3b7db8"/><rect x="411.10" y="719.70" width="1.6" height="3.0" fill="#5061aa"/><rect x="414.56" y="719.70" width="1.6" height="3.0" fill="#5160aa"/><rect x="418.01" y="719.70" width="1.6" height="3.0" fill="#5160aa"/><rect x="421.46" y="719.70" width="1.6" height="3.0" fill="#3d7ab6"/><rect x="424.92" y="719.70" width="1.6" height="3.0" fill="#4273b3"/><rect x="428.38" y="719.70" width="1.6" height="3.0" fill="#4e64ac"/><rect x="431.83" y="719.70" width="1.6" height="3.0" fill="#3d79b6"/><rect x="435.29" y="719.70" width="1.6" height="3.0" fill="#476cb0"/><rect x="438.74" y="719.70" width="1.6" height="3.0" fill="#476db0"/><rect x="442.19" y="719.70" width="1.6" height="3.0" fill="#545ca8"/><rect x="445.65" y="719.70" width="1.6" height="3.0" fill="#4a69ae"/><rect x="449.10" y="719.70" width="1.6" height="3.0" fill="#515faa"/><rect x="452.56" y="719.70" width="1.6" height="3.0" fill="#4372b3"/><rect x="456.02" y="719.70" width="1.6" height="3.0" fill="#5062ab"/><rect x="459.47" y="719.70" width="1.6" height="3.0" fill="#466eb1"/><rect x="462.93" y="719.70" width="1.6" height="3.0" fill="#535da9"/><rect x="466.38" y="719.70" width="1.6" height="3.0" fill="#3d79b6"/><rect x="469.83" y="719.70" width="1.6" height="3.0" fill="#5160aa"/><rect x="473.29" y="719.70" width="1.6" height="3.0" fill="#4075b4"/><rect x="476.74" y="719.70" width="1.6" height="3.0" fill="#496aaf"/><rect x="480.20" y="719.70" width="1.6" height="3.0" fill="#496baf"/><rect x="483.66" y="719.70" width="1.6" height="3.0" fill="#3f77b5"/><rect x="487.11" y="719.70" width="1.6" height="3.0" fill="#5160aa"/><rect x="490.56" y="719.70" width="1.6" height="3.0" fill="#4372b3"/><rect x="494.02" y="719.70" width="1.6" height="3.0" fill="#4372b3"/><rect x="497.47" y="719.70" width="1.6" height="3.0" fill="#3d7ab6"/><rect x="500.93" y="719.70" width="1.6" height="3.0" fill="#4372b3"/><rect x="504.39" y="719.70" width="1.6" height="3.0" fill="#476db0"/><rect x="507.84" y="719.70" width="1.6" height="3.0" fill="#4e64ac"/><rect x="511.30" y="719.70" width="1.6" height="3.0" fill="#4470b2"/><rect x="514.75" y="719.70" width="1.6" height="3.0" fill="#4d65ac"/><rect x="518.21" y="719.70" width="1.6" height="3.0" fill="#3e79b6"/><rect x="521.66" y="719.70" width="1.6" height="3.0" fill="#456fb1"/><rect x="525.12" y="719.70" width="1.6" height="3.0" fill="#476db0"/><rect x="528.57" y="719.70" width="1.6" height="3.0" fill="#545ca8"/><rect x="532.03" y="719.70" width="1.6" height="3.0" fill="#5160aa"/><rect x="535.48" y="719.70" width="1.6" height="3.0" fill="#4c66ad"/><rect x="538.94" y="719.70" width="1.6" height="3.0" fill="#3b7cb7"/><rect x="542.39" y="719.70" width="1.6" height="3.0" fill="#4570b1"/><rect x="545.85" y="719.70" width="1.6" height="3.0" fill="#4e64ac"/><rect x="549.30" y="719.70" width="1.6" height="3.0" fill="#4174b4"/><rect x="552.76" y="719.70" width="1.6" height="3.0" fill="#4a69ae"/><rect x="556.21" y="719.70" width="1.6" height="3.0" fill="#476db0"/><rect x="559.67" y="719.70" width="1.6" height="3.0" fill="#3b7cb7"/><rect x="563.12" y="719.70" width="1.6" height="3.0" fill="#555ba8"/><rect x="566.58" y="719.70" width="1.6" height="3.0" fill="#5061ab"/><rect x="570.03" y="719.70" width="1.6" height="3.0" fill="#4076b4"/><rect x="573.49" y="719.70" width="1.6" height="3.0" fill="#4b68ae"/><rect x="576.94" y="719.70" width="1.6" height="3.0" fill="#4273b3"/><rect x="580.39" y="719.70" width="1.6" height="3.0" fill="#4570b2"/><rect x="583.85" y="719.70" width="1.6" height="3.0" fill="#496aaf"/><rect x="587.31" y="719.70" width="1.6" height="3.0" fill="#4372b3"/><rect x="590.76" y="719.70" width="1.6" height="3.0" fill="#4471b2"/><rect x="594.22" y="719.70" width="1.6" height="3.0" fill="#456fb1"/><rect x="597.67" y="719.70" width="1.6" height="3.0" fill="#4c66ad"/><rect x="601.12" y="719.70" width="1.6" height="3.0" fill="#4274b3"/><rect x="604.58" y="719.70" width="1.6" height="3.0" fill="#4076b4"/><rect x="608.04" y="719.70" width="1.6" height="3.0" fill="#4e64ac"/><rect x="611.49" y="719.70" width="1.6" height="3.0" fill="#4371b2"/><rect x="614.95" y="719.70" width="1.6" height="3.0" fill="#545ca8"/><rect x="618.40" y="719.70" width="1.6" height="3.0" fill="#4a69ae"/><rect x="621.86" y="719.70" width="1.6" height="3.0" fill="#4e64ac"/><rect x="625.31" y="719.70" width="1.6" height="3.0" fill="#4471b2"/><rect x="628.76" y="719.70" width="1.6" height="3.0" fill="#5160aa"/><rect x="632.22" y="719.70" width="1.6" height="3.0" fill="#3d79b6"/><rect x="635.68" y="719.70" width="1.6" height="3.0" fill="#3f78b5"/><rect x="639.13" y="719.70" width="1.6" height="3.0" fill="#3d79b6"/><rect x="642.59" y="719.70" width="1.6" height="3.0" fill="#4d65ad"/><rect x="646.04" y="719.70" width="1.6" height="3.0" fill="#4d64ac"/><rect x="649.50" y="719.70" width="1.6" height="3.0" fill="#4076b5"/><rect x="652.95" y="719.70" width="1.6" height="3.0" fill="#456fb1"/><rect x="656.41" y="719.70" width="1.6" height="3.0" fill="#5160aa"/><rect x="659.86" y="719.70" width="1.6" height="3.0" fill="#4a68ae"/><rect x="663.32" y="719.70" width="1.6" height="3.0" fill="#3d7ab6"/><rect x="666.77" y="719.70" width="1.6" height="3.0" fill="#4175b4"/><rect x="670.23" y="719.70" width="1.6" height="3.0" fill="#3f77b5"/><rect x="673.68" y="719.70" width="1.6" height="3.0" fill="#3e78b6"/><rect x="677.13" y="719.70" width="1.6" height="3.0" fill="#466fb1"/><rect x="680.59" y="719.70" width="1.6" height="3.0" fill="#3d7ab6"/><rect x="684.05" y="719.70" width="1.6" height="3.0" fill="#535da9"/><rect x="687.50" y="719.70" width="1.6" height="3.0" fill="#466eb1"/><rect x="690.96" y="719.70" width="1.6" height="3.0" fill="#486baf"/><rect x="694.41" y="719.70" width="1.6" height="3.0" fill="#4c66ad"/><rect x="697.87" y="719.70" width="1.6" height="3.0" fill="#4f62ab"/><rect x="701.32" y="719.70" width="1.6" height="3.0" fill="#5061aa"/><rect x="704.78" y="719.70" width="1.6" height="3.0" fill="#456fb1"/><rect x="708.23" y="719.70" width="1.6" height="3.0" fill="#4471b2"/><rect x="711.69" y="719.70" width="1.6" height="3.0" fill="#466fb1"/><rect x="715.14" y="719.70" width="1.6" height="3.0" fill="#3b7cb7"/><rect x="718.60" y="719.70" width="1.6" height="3.0" fill="#456fb1"/><rect x="722.05" y="719.70" width="1.6" height="3.0" fill="#4d65ac"/><rect x="725.50" y="719.70" width="1.6" height="3.0" fill="#555ba8"/><rect x="728.96" y="719.70" width="1.6" height="3.0" fill="#5062ab"/><rect x="732.42" y="719.70" width="1.6" height="3.0" fill="#4c66ad"/><rect x="735.87" y="719.70" width="1.6" height="3.0" fill="#4b68ae"/><rect x="739.33" y="719.70" width="1.6" height="3.0" fill="#3b7cb7"/><rect x="742.78" y="719.70" width="1.6" height="3.0" fill="#4471b2"/><rect x="746.24" y="719.70" width="1.6" height="3.0" fill="#4471b2"/><rect x="749.69" y="719.70" width="1.6" height="3.0" fill="#4c66ad"/><rect x="753.14" y="719.70" width="1.6" height="3.0" fill="#3e79b6"/><rect x="756.60" y="719.70" width="1.6" height="3.0" fill="#4570b1"/><rect x="760.06" y="719.70" width="1.6" height="3.0" fill="#486baf"/><rect x="763.51" y="719.70" width="1.6" height="3.0" fill="#5062ab"/><rect x="766.97" y="719.70" width="1.6" height="3.0" fill="#5160aa"/><rect x="770.42" y="719.70" width="1.6" height="3.0" fill="#4b68ae"/><rect x="773.88" y="719.70" width="1.6" height="3.0" fill="#3f77b5"/><rect x="777.33" y="719.70" width="1.6" height="3.0" fill="#4f62ab"/><rect x="780.79" y="719.70" width="1.6" height="3.0" fill="#535ea9"/><rect x="784.24" y="719.70" width="1.6" height="3.0" fill="#496aaf"/><rect x="787.70" y="719.70" width="1.6" height="3.0" fill="#4471b2"/><rect x="791.15" y="719.70" width="1.6" height="3.0" fill="#486baf"/><rect x="794.61" y="719.70" width="1.6" height="3.0" fill="#3f78b5"/><rect x="798.06" y="719.70" width="1.6" height="3.0" fill="#4e64ac"/><rect x="801.51" y="719.70" width="1.6" height="3.0" fill="#555ba8"/><rect x="804.97" y="719.70" width="1.6" height="3.0" fill="#486baf"/><rect x="808.43" y="719.70" width="1.6" height="3.0" fill="#4e64ac"/><rect x="811.88" y="719.70" width="1.6" height="3.0" fill="#5160aa"/><rect x="815.34" y="719.70" width="1.6" height="3.0" fill="#4076b4"/><rect x="818.79" y="719.70" width="1.6" height="3.0" fill="#545ca8"/><rect x="822.25" y="719.70" width="1.6" height="3.0" fill="#4b67ad"/><rect x="825.70" y="719.70" width="1.6" height="3.0" fill="#4076b4"/><rect x="829.16" y="719.70" width="1.6" height="3.0" fill="#3d7ab6"/><rect x="832.61" y="719.70" width="1.6" height="3.0" fill="#4174b4"/><rect x="836.07" y="719.70" width="1.6" height="3.0" fill="#4a69ae"/><rect x="839.52" y="719.70" width="1.6" height="3.0" fill="#4d65ac"/><rect x="842.98" y="719.70" width="1.6" height="3.0" fill="#4371b2"/><rect x="846.43" y="719.70" width="1.6" height="3.0" fill="#535da9"/><rect x="849.88" y="719.70" width="1.6" height="3.0" fill="#4470b2"/><rect x="853.34" y="719.70" width="1.6" height="3.0" fill="#476db0"/><rect x="856.80" y="719.70" width="1.6" height="3.0" fill="#3e78b6"/><rect x="860.25" y="719.70" width="1.6" height="3.0" fill="#555ba8"/><rect x="863.71" y="719.70" width="1.6" height="3.0" fill="#3e78b5"/><rect x="867.16" y="719.70" width="1.6" height="3.0" fill="#535ea9"/><rect x="870.62" y="719.70" width="1.6" height="3.0" fill="#496aaf"/><rect x="874.07" y="719.70" width="1.6" height="3.0" fill="#4a69af"/><rect x="877.53" y="719.70" width="1.6" height="3.0" fill="#4a69af"/><rect x="880.98" y="719.70" width="1.6" height="3.0" fill="#4274b3"/><rect x="884.44" y="719.70" width="1.6" height="3.0" fill="#535ea9"/><rect x="887.89" y="719.70" width="1.6" height="3.0" fill="#555ba8"/><rect x="65.60" y="714.90" width="1.6" height="3.0" fill="#5c51a3"/><rect x="69.06" y="714.90" width="1.6" height="3.0" fill="#5a54a4"/><rect x="72.51" y="714.90" width="1.6" height="3.0" fill="#5659a7"/><rect x="75.97" y="714.90" width="1.6" height="3.0" fill="#5c51a3"/><rect x="79.42" y="714.90" width="1.6" height="3.0" fill="#5857a6"/><rect x="82.88" y="714.90" width="1.6" height="3.0" fill="#5d50a3"/><rect x="86.33" y="714.90" width="1.6" height="3.0" fill="#5758a6"/><rect x="89.79" y="714.90" width="1.6" height="3.0" fill="#5a54a4"/><rect x="93.24" y="714.90" width="1.6" height="3.0" fill="#5d51a3"/><rect x="96.70" y="714.90" width="1.6" height="3.0" fill="#5758a6"/><rect x="100.15" y="714.90" width="1.6" height="3.0" fill="#5a54a4"/><rect x="103.61" y="714.90" width="1.6" height="3.0" fill="#565aa7"/><rect x="107.06" y="714.90" width="1.6" height="3.0" fill="#555aa7"/><rect x="110.52" y="714.90" width="1.6" height="3.0" fill="#5758a6"/><rect x="113.97" y="714.90" width="1.6" height="3.0" fill="#5e4fa2"/><rect x="117.43" y="714.90" width="1.6" height="3.0" fill="#5d50a2"/><rect x="120.88" y="714.90" width="1.6" height="3.0" fill="#5b53a4"/><rect x="124.34" y="714.90" width="1.6" height="3.0" fill="#5857a6"/><rect x="127.79" y="714.90" width="1.6" height="3.0" fill="#5b53a4"/><rect x="131.25" y="714.90" width="1.6" height="3.0" fill="#5c52a3"/><rect x="134.70" y="714.90" width="1.6" height="3.0" fill="#5956a5"/><rect x="138.16" y="714.90" width="1.6" height="3.0" fill="#5a54a4"/><rect x="141.61" y="714.90" width="1.6" height="3.0" fill="#5c51a3"/><rect x="145.06" y="714.90" width="1.6" height="3.0" fill="#555aa7"/><rect x="148.52" y="714.90" width="1.6" height="3.0" fill="#5758a6"/><rect x="151.97" y="714.90" width="1.6" height="3.0" fill="#5955a5"/><rect x="155.43" y="714.90" width="1.6" height="3.0" fill="#5659a7"/><rect x="158.88" y="714.90" width="1.6" height="3.0" fill="#5956a5"/><rect x="162.34" y="714.90" width="1.6" height="3.0" fill="#5a54a4"/><rect x="165.80" y="714.90" width="1.6" height="3.0" fill="#5758a6"/><rect x="169.25" y="714.90" width="1.6" height="3.0" fill="#5a54a5"/><rect x="172.70" y="714.90" width="1.6" height="3.0" fill="#5857a6"/><rect x="176.16" y="714.90" width="1.6" height="3.0" fill="#5a54a4"/><rect x="179.62" y="714.90" width="1.6" height="3.0" fill="#5857a6"/><rect x="183.07" y="714.90" width="1.6" height="3.0" fill="#5b53a4"/><rect x="186.52" y="714.90" width="1.6" height="3.0" fill="#565aa7"/><rect x="189.98" y="714.90" width="1.6" height="3.0" fill="#5b53a4"/><rect x="193.44" y="714.90" width="1.6" height="3.0" fill="#5659a7"/><rect x="196.89" y="714.90" width="1.6" height="3.0" fill="#5e4fa2"/><rect x="200.34" y="714.90" width="1.6" height="3.0" fill="#5a54a4"/><rect x="203.80" y="714.90" width="1.6" height="3.0" fill="#5955a5"/><rect x="207.25" y="714.90" width="1.6" height="3.0" fill="#5956a5"/><rect x="210.71" y="714.90" width="1.6" height="3.0" fill="#5b53a4"/><rect x="214.16" y="714.90" width="1.6" height="3.0" fill="#5b53a4"/><rect x="217.62" y="714.90" width="1.6" height="3.0" fill="#5c52a3"/><rect x="221.07" y="714.90" width="1.6" height="3.0" fill="#5c52a3"/><rect x="224.53" y="714.90" width="1.6" height="3.0" fill="#5955a5"/><rect x="227.98" y="714.90" width="1.6" height="3.0" fill="#5e4fa2"/><rect x="231.44" y="714.90" width="1.6" height="3.0" fill="#5d51a3"/><rect x="234.90" y="714.90" width="1.6" height="3.0" fill="#5d51a3"/><rect x="238.35" y="714.90" width="1.6" height="3.0" fill="#5956a5"/><rect x="241.81" y="714.90" width="1.6" height="3.0" fill="#5955a5"/><rect x="245.26" y="714.90" width="1.6" height="3.0" fill="#5a54a4"/><rect x="248.72" y="714.90" width="1.6" height="3.0" fill="#5d50a3"/><rect x="252.17" y="714.90" width="1.6" height="3.0" fill="#5a54a5"/><rect x="255.62" y="714.90" width="1.6" height="3.0" fill="#5a54a5"/><rect x="259.08" y="714.90" width="1.6" height="3.0" fill="#5955a5"/><rect x="262.54" y="714.90" width="1.6" height="3.0" fill="#5d50a3"/><rect x="265.99" y="714.90" width="1.6" height="3.0" fill="#5857a6"/><rect x="269.44" y="714.90" width="1.6" height="3.0" fill="#565aa7"/><rect x="272.90" y="714.90" width="1.6" height="3.0" fill="#5c52a3"/><rect x="276.35" y="714.90" width="1.6" height="3.0" fill="#5d50a3"/><rect x="279.81" y="714.90" width="1.6" height="3.0" fill="#5c52a3"/><rect x="283.26" y="714.90" width="1.6" height="3.0" fill="#5a54a4"/><rect x="286.72" y="714.90" width="1.6" height="3.0" fill="#5c52a3"/><rect x="290.18" y="714.90" width="1.6" height="3.0" fill="#5857a6"/><rect x="293.63" y="714.90" width="1.6" height="3.0" fill="#5a54a4"/><rect x="297.08" y="714.90" width="1.6" height="3.0" fill="#565aa7"/><rect x="300.54" y="714.90" width="1.6" height="3.0" fill="#5659a7"/><rect x="304.00" y="714.90" width="1.6" height="3.0" fill="#5955a5"/><rect x="307.45" y="714.90" width="1.6" height="3.0" fill="#5a55a5"/><rect x="310.91" y="714.90" width="1.6" height="3.0" fill="#5956a5"/><rect x="314.36" y="714.90" width="1.6" height="3.0" fill="#565aa7"/><rect x="317.81" y="714.90" width="1.6" height="3.0" fill="#5b52a4"/><rect x="321.27" y="714.90" width="1.6" height="3.0" fill="#5a54a5"/><rect x="324.72" y="714.90" width="1.6" height="3.0" fill="#5758a6"/><rect x="328.18" y="714.90" width="1.6" height="3.0" fill="#5857a6"/><rect x="331.64" y="714.90" width="1.6" height="3.0" fill="#5956a5"/><rect x="335.09" y="714.90" width="1.6" height="3.0" fill="#5758a6"/><rect x="338.55" y="714.90" width="1.6" height="3.0" fill="#565aa7"/><rect x="342.00" y="714.90" width="1.6" height="3.0" fill="#5d50a2"/><rect x="345.45" y="714.90" width="1.6" height="3.0" fill="#5e4fa2"/><rect x="348.91" y="714.90" width="1.6" height="3.0" fill="#5b53a4"/><rect x="352.36" y="714.90" width="1.6" height="3.0" fill="#5d51a3"/><rect x="355.82" y="714.90" width="1.6" height="3.0" fill="#5956a5"/><rect x="359.28" y="714.90" width="1.6" height="3.0" fill="#5c51a3"/><rect x="362.73" y="714.90" width="1.6" height="3.0" fill="#5758a6"/><rect x="366.19" y="714.90" width="1.6" height="3.0" fill="#5c52a3"/><rect x="369.64" y="714.90" width="1.6" height="3.0" fill="#5a54a4"/><rect x="373.09" y="714.90" width="1.6" height="3.0" fill="#5d50a3"/><rect x="376.55" y="714.90" width="1.6" height="3.0" fill="#5659a7"/><rect x="380.01" y="714.90" width="1.6" height="3.0" fill="#5c51a3"/><rect x="383.46" y="714.90" width="1.6" height="3.0" fill="#5659a7"/><rect x="386.92" y="714.90" width="1.6" height="3.0" fill="#5a54a4"/><rect x="390.37" y="714.90" width="1.6" height="3.0" fill="#5e50a2"/><rect x="393.82" y="714.90" width="1.6" height="3.0" fill="#555aa7"/><rect x="397.28" y="714.90" width="1.6" height="3.0" fill="#5758a6"/><rect x="400.73" y="714.90" width="1.6" height="3.0" fill="#5857a6"/><rect x="404.19" y="714.90" width="1.6" height="3.0" fill="#5857a6"/><rect x="407.65" y="714.90" width="1.6" height="3.0" fill="#565aa7"/><rect x="411.10" y="714.90" width="1.6" height="3.0" fill="#5d50a3"/><rect x="414.56" y="714.90" width="1.6" height="3.0" fill="#5c51a3"/><rect x="418.01" y="714.90" width="1.6" height="3.0" fill="#5956a5"/><rect x="421.46" y="714.90" width="1.6" height="3.0" fill="#5856a5"/><rect x="424.92" y="714.90" width="1.6" height="3.0" fill="#5a54a4"/><rect x="428.38" y="714.90" width="1.6" height="3.0" fill="#565aa7"/><rect x="431.83" y="714.90" width="1.6" height="3.0" fill="#555aa7"/><rect x="435.29" y="714.90" width="1.6" height="3.0" fill="#5d50a3"/><rect x="438.74" y="714.90" width="1.6" height="3.0" fill="#5857a6"/><rect x="442.19" y="714.90" width="1.6" height="3.0" fill="#5a55a5"/><rect x="445.65" y="714.90" width="1.6" height="3.0" fill="#5d50a2"/><rect x="449.10" y="714.90" width="1.6" height="3.0" fill="#5e4fa2"/><rect x="452.56" y="714.90" width="1.6" height="3.0" fill="#5955a5"/><rect x="456.02" y="714.90" width="1.6" height="3.0" fill="#5758a6"/><rect x="459.47" y="714.90" width="1.6" height="3.0" fill="#5857a6"/><rect x="462.93" y="714.90" width="1.6" height="3.0" fill="#5d50a2"/><rect x="466.38" y="714.90" width="1.6" height="3.0" fill="#5d50a3"/><rect x="469.83" y="714.90" width="1.6" height="3.0" fill="#5758a6"/><rect x="473.29" y="714.90" width="1.6" height="3.0" fill="#5d51a3"/><rect x="476.74" y="714.90" width="1.6" height="3.0" fill="#5856a5"/><rect x="480.20" y="714.90" width="1.6" height="3.0" fill="#5955a5"/><rect x="483.66" y="714.90" width="1.6" height="3.0" fill="#5758a6"/><rect x="487.11" y="714.90" width="1.6" height="3.0" fill="#5d50a3"/><rect x="490.56" y="714.90" width="1.6" height="3.0" fill="#5e4fa2"/><rect x="494.02" y="714.90" width="1.6" height="3.0" fill="#5758a6"/><rect x="497.47" y="714.90" width="1.6" height="3.0" fill="#5b53a4"/><rect x="500.93" y="714.90" width="1.6" height="3.0" fill="#5758a6"/><rect x="504.39" y="714.90" width="1.6" height="3.0" fill="#5d50a3"/><rect x="507.84" y="714.90" width="1.6" height="3.0" fill="#565aa7"/><rect x="511.30" y="714.90" width="1.6" height="3.0" fill="#5659a7"/><rect x="514.75" y="714.90" width="1.6" height="3.0" fill="#5c52a3"/><rect x="518.21" y="714.90" width="1.6" height="3.0" fill="#5857a6"/><rect x="521.66" y="714.90" width="1.6" height="3.0" fill="#5d50a3"/><rect x="525.12" y="714.90" width="1.6" height="3.0" fill="#5d50a3"/><rect x="528.57" y="714.90" width="1.6" height="3.0" fill="#5b52a4"/><rect x="532.03" y="714.90" width="1.6" height="3.0" fill="#5659a7"/><rect x="535.48" y="714.90" width="1.6" height="3.0" fill="#5b52a4"/><rect x="538.94" y="714.90" width="1.6" height="3.0" fill="#5d50a2"/><rect x="542.39" y="714.90" width="1.6" height="3.0" fill="#5955a5"/><rect x="545.85" y="714.90" width="1.6" height="3.0" fill="#5659a7"/><rect x="549.30" y="714.90" width="1.6" height="3.0" fill="#5758a6"/><rect x="552.76" y="714.90" width="1.6" height="3.0" fill="#5857a6"/><rect x="556.21" y="714.90" width="1.6" height="3.0" fill="#5b52a4"/><rect x="559.67" y="714.90" width="1.6" height="3.0" fill="#5758a6"/><rect x="563.12" y="714.90" width="1.6" height="3.0" fill="#5758a6"/><rect x="566.58" y="714.90" width="1.6" height="3.0" fill="#5758a6"/><rect x="570.03" y="714.90" width="1.6" height="3.0" fill="#5b53a4"/><rect x="573.49" y="714.90" width="1.6" height="3.0" fill="#5c51a3"/><rect x="576.94" y="714.90" width="1.6" height="3.0" fill="#5856a5"/><rect x="580.39" y="714.90" width="1.6" height="3.0" fill="#5b53a4"/><rect x="583.85" y="714.90" width="1.6" height="3.0" fill="#5d50a3"/><rect x="587.31" y="714.90" width="1.6" height="3.0" fill="#5a54a4"/><rect x="590.76" y="714.90" width="1.6" height="3.0" fill="#5758a6"/><rect x="594.22" y="714.90" width="1.6" height="3.0" fill="#5857a6"/><rect x="597.67" y="714.90" width="1.6" height="3.0" fill="#5d50a2"/><rect x="601.12" y="714.90" width="1.6" height="3.0" fill="#5b53a4"/><rect x="604.58" y="714.90" width="1.6" height="3.0" fill="#5857a6"/><rect x="608.04" y="714.90" width="1.6" height="3.0" fill="#5b53a4"/><rect x="611.49" y="714.90" width="1.6" height="3.0" fill="#5659a7"/><rect x="614.95" y="714.90" width="1.6" height="3.0" fill="#5e4fa2"/><rect x="618.40" y="714.90" width="1.6" height="3.0" fill="#5955a5"/><rect x="621.86" y="714.90" width="1.6" height="3.0" fill="#5a54a5"/><rect x="625.31" y="714.90" width="1.6" height="3.0" fill="#5a54a5"/><rect x="628.76" y="714.90" width="1.6" height="3.0" fill="#565aa7"/><rect x="632.22" y="714.90" width="1.6" height="3.0" fill="#5a54a4"/><rect x="635.68" y="714.90" width="1.6" height="3.0" fill="#5857a6"/><rect x="639.13" y="714.90" width="1.6" height="3.0" fill="#5758a6"/><rect x="642.59" y="714.90" width="1.6" height="3.0" fill="#5c51a3"/><rect x="646.04" y="714.90" width="1.6" height="3.0" fill="#5659a7"/><rect x="649.50" y="714.90" width="1.6" height="3.0" fill="#5857a6"/><rect x="652.95" y="714.90" width="1.6" height="3.0" fill="#5c52a3"/><rect x="656.41" y="714.90" width="1.6" height="3.0" fill="#5758a6"/><rect x="659.86" y="714.90" width="1.6" height="3.0" fill="#5857a6"/><rect x="663.32" y="714.90" width="1.6" height="3.0" fill="#5a54a4"/><rect x="666.77" y="714.90" width="1.6" height="3.0" fill="#5758a6"/><rect x="670.23" y="714.90" width="1.6" height="3.0" fill="#5d50a3"/><rect x="673.68" y="714.90" width="1.6" height="3.0" fill="#5e4fa2"/><rect x="677.13" y="714.90" width="1.6" height="3.0" fill="#555aa7"/><rect x="680.59" y="714.90" width="1.6" height="3.0" fill="#5955a5"/><rect x="684.05" y="714.90" width="1.6" height="3.0" fill="#5c52a3"/><rect x="687.50" y="714.90" width="1.6" height="3.0" fill="#5956a5"/><rect x="690.96" y="714.90" width="1.6" height="3.0" fill="#5d50a2"/><rect x="694.41" y="714.90" width="1.6" height="3.0" fill="#5a55a5"/><rect x="697.87" y="714.90" width="1.6" height="3.0" fill="#5758a6"/><rect x="701.32" y="714.90" width="1.6" height="3.0" fill="#5a54a4"/><rect x="704.78" y="714.90" width="1.6" height="3.0" fill="#5b53a4"/><rect x="708.23" y="714.90" width="1.6" height="3.0" fill="#5856a5"/><rect x="711.69" y="714.90" width="1.6" height="3.0" fill="#5b53a4"/><rect x="715.14" y="714.90" width="1.6" height="3.0" fill="#5c51a3"/><rect x="718.60" y="714.90" width="1.6" height="3.0" fill="#5a55a5"/><rect x="722.05" y="714.90" width="1.6" height="3.0" fill="#5a55a5"/><rect x="725.50" y="714.90" width="1.6" height="3.0" fill="#5d51a3"/><rect x="728.96" y="714.90" width="1.6" height="3.0" fill="#5b53a4"/><rect x="732.42" y="714.90" width="1.6" height="3.0" fill="#5a54a5"/><rect x="735.87" y="714.90" width="1.6" height="3.0" fill="#5e50a2"/><rect x="739.33" y="714.90" width="1.6" height="3.0" fill="#5758a6"/><rect x="742.78" y="714.90" width="1.6" height="3.0" fill="#5c52a3"/><rect x="746.24" y="714.90" width="1.6" height="3.0" fill="#5759a7"/><rect x="749.69" y="714.90" width="1.6" height="3.0" fill="#5b53a4"/><rect x="753.14" y="714.90" width="1.6" height="3.0" fill="#5758a6"/><rect x="756.60" y="714.90" width="1.6" height="3.0" fill="#5955a5"/><rect x="760.06" y="714.90" width="1.6" height="3.0" fill="#5c52a3"/><rect x="763.51" y="714.90" width="1.6" height="3.0" fill="#5c51a3"/><rect x="766.97" y="714.90" width="1.6" height="3.0" fill="#5c51a3"/><rect x="770.42" y="714.90" width="1.6" height="3.0" fill="#5758a6"/><rect x="773.88" y="714.90" width="1.6" height="3.0" fill="#5a55a5"/><rect x="777.33" y="714.90" width="1.6" height="3.0" fill="#5758a6"/><rect x="780.79" y="714.90" width="1.6" height="3.0" fill="#5a54a4"/><rect x="784.24" y="714.90" width="1.6" height="3.0" fill="#5a55a5"/><rect x="787.70" y="714.90" width="1.6" height="3.0" fill="#565aa7"/><rect x="791.15" y="714.90" width="1.6" height="3.0" fill="#5a54a4"/><rect x="794.61" y="714.90" width="1.6" height="3.0" fill="#5b52a4"/><rect x="798.06" y="714.90" width="1.6" height="3.0" fill="#5a54a4"/><rect x="801.51" y="714.90" width="1.6" height="3.0" fill="#5d50a3"/><rect x="804.97" y="714.90" width="1.6" height="3.0" fill="#5758a6"/><rect x="808.43" y="714.90" width="1.6" height="3.0" fill="#5759a7"/><rect x="811.88" y="714.90" width="1.6" height="3.0" fill="#555aa7"/><rect x="815.34" y="714.90" width="1.6" height="3.0" fill="#5a55a5"/><rect x="818.79" y="714.90" width="1.6" height="3.0" fill="#5955a5"/><rect x="822.25" y="714.90" width="1.6" height="3.0" fill="#5955a5"/><rect x="825.70" y="714.90" width="1.6" height="3.0" fill="#5857a6"/><rect x="829.16" y="714.90" width="1.6" height="3.0" fill="#5c51a3"/><rect x="832.61" y="714.90" width="1.6" height="3.0" fill="#565aa7"/><rect x="836.07" y="714.90" width="1.6" height="3.0" fill="#5d50a3"/><rect x="839.52" y="714.90" width="1.6" height="3.0" fill="#5a54a4"/><rect x="842.98" y="714.90" width="1.6" height="3.0" fill="#5a54a4"/><rect x="846.43" y="714.90" width="1.6" height="3.0" fill="#5c51a3"/><rect x="849.88" y="714.90" width="1.6" height="3.0" fill="#5758a6"/><rect x="853.34" y="714.90" width="1.6" height="3.0" fill="#5659a7"/><rect x="856.80" y="714.90" width="1.6" height="3.0" fill="#5857a6"/><rect x="860.25" y="714.90" width="1.6" height="3.0" fill="#565aa7"/><rect x="863.71" y="714.90" width="1.6" height="3.0" fill="#5857a6"/><rect x="867.16" y="714.90" width="1.6" height="3.0" fill="#5b53a4"/><rect x="870.62" y="714.90" width="1.6" height="3.0" fill="#5a54a5"/><rect x="874.07" y="714.90" width="1.6" height="3.0" fill="#5857a6"/><rect x="877.53" y="714.90" width="1.6" height="3.0" fill="#5a54a4"/><rect x="880.98" y="714.90" width="1.6" height="3.0" fill="#5659a7"/><rect x="884.44" y="714.90" width="1.6" height="3.0" fill="#5c51a3"/><rect x="887.89" y="714.90" width="1.6" height="3.0" fill="#5758a6"/><rect x="65.60" y="710.10" width="1.6" height="3.0" fill="#5a55a5"/><rect x="69.06" y="710.10" width="1.6" height="3.0" fill="#5a55a5"/><rect x="72.51" y="710.10" width="1.6" height="3.0" fill="#5a55a5"/><rect x="75.97" y="710.10" width="1.6" height="3.0" fill="#5a55a5"/><rect x="79.42" y="710.10" width="1.6" height="3.0" fill="#5a55a5"/><rect x="82.88" y="710.10" width="1.6" height="3.0" fill="#5a55a5"/><rect x="86.33" y="710.10" width="1.6" height="3.0" fill="#5a55a5"/><rect x="89.79" y="710.10" width="1.6" height="3.0" fill="#5a55a5"/><rect x="96.70" y="710.10" width="1.6" height="3.0" fill="#5a55a5"/><rect x="100.15" y="710.10" width="1.6" height="3.0" fill="#5a55a5"/><rect x="103.61" y="710.10" width="1.6" height="3.0" fill="#5a55a5"/><rect x="107.06" y="710.10" width="1.6" height="3.0" fill="#5a55a5"/><rect x="110.52" y="710.10" width="1.6" height="3.0" fill="#5a55a5"/><rect x="113.97" y="710.10" width="1.6" height="3.0" fill="#5a55a5"/><rect x="117.43" y="710.10" width="1.6" height="3.0" fill="#5a55a5"/><rect x="120.88" y="710.10" width="1.6" height="3.0" fill="#5a55a5"/><rect x="124.34" y="710.10" width="1.6" height="3.0" fill="#5a55a5"/><rect x="127.79" y="710.10" width="1.6" height="3.0" fill="#5a55a5"/><rect x="131.25" y="710.10" width="1.6" height="3.0" fill="#5a55a5"/><rect x="134.70" y="710.10" width="1.6" height="3.0" fill="#5a55a5"/><rect x="138.16" y="710.10" width="1.6" height="3.0" fill="#5a55a5"/><rect x="141.61" y="710.10" width="1.6" height="3.0" fill="#5a55a5"/><rect x="145.06" y="710.10" width="1.6" height="3.0" fill="#5a55a5"/><rect x="148.52" y="710.10" width="1.6" height="3.0" fill="#5a55a5"/><rect x="151.97" y="710.10" width="1.6" height="3.0" fill="#5a55a5"/><rect x="155.43" y="710.10" width="1.6" height="3.0" fill="#5a55a5"/><rect x="158.88" y="710.10" width="1.6" height="3.0" fill="#5a55a5"/><rect x="162.34" y="710.10" width="1.6" height="3.0" fill="#5a55a5"/><rect x="165.80" y="710.10" width="1.6" height="3.0" fill="#5a55a5"/><rect x="169.25" y="710.10" width="1.6" height="3.0" fill="#5a55a5"/><rect x="172.70" y="710.10" width="1.6" height="3.0" fill="#5a55a5"/><rect x="176.16" y="710.10" width="1.6" height="3.0" fill="#5a55a5"/><rect x="179.62" y="710.10" width="1.6" height="3.0" fill="#5a55a5"/><rect x="183.07" y="710.10" width="1.6" height="3.0" fill="#5a55a5"/><rect x="186.52" y="710.10" width="1.6" height="3.0" fill="#5a55a5"/><rect x="189.98" y="710.10" width="1.6" height="3.0" fill="#5a55a5"/><rect x="193.44" y="710.10" width="1.6" height="3.0" fill="#5a55a5"/><rect x="196.89" y="710.10" width="1.6" height="3.0" fill="#5a55a5"/><rect x="200.34" y="710.10" width="1.6" height="3.0" fill="#5a55a5"/><rect x="203.80" y="710.10" width="1.6" height="3.0" fill="#5a55a5"/><rect x="207.25" y="710.10" width="1.6" height="3.0" fill="#5a55a5"/><rect x="210.71" y="710.10" width="1.6" height="3.0" fill="#5a55a5"/><rect x="214.16" y="710.10" width="1.6" height="3.0" fill="#5a55a5"/><rect x="217.62" y="710.10" width="1.6" height="3.0" fill="#5a55a5"/><rect x="221.07" y="710.10" width="1.6" height="3.0" fill="#5a55a5"/><rect x="224.53" y="710.10" width="1.6" height="3.0" fill="#5a55a5"/><rect x="227.98" y="710.10" width="1.6" height="3.0" fill="#5a55a5"/><rect x="231.44" y="710.10" width="1.6" height="3.0" fill="#5a55a5"/><rect x="234.90" y="710.10" width="1.6" height="3.0" fill="#5a55a5"/><rect x="238.35" y="710.10" width="1.6" height="3.0" fill="#5a55a5"/><rect x="241.81" y="710.10" width="1.6" height="3.0" fill="#5a55a5"/><rect x="245.26" y="710.10" width="1.6" height="3.0" fill="#5a55a5"/><rect x="248.72" y="710.10" width="1.6" height="3.0" fill="#5a55a5"/><rect x="252.17" y="710.10" width="1.6" height="3.0" fill="#5a55a5"/><rect x="255.62" y="710.10" width="1.6" height="3.0" fill="#5a55a5"/><rect x="259.08" y="710.10" width="1.6" height="3.0" fill="#5a55a5"/><rect x="262.54" y="710.10" width="1.6" height="3.0" fill="#5a55a5"/><rect x="265.99" y="710.10" width="1.6" height="3.0" fill="#5a55a5"/><rect x="269.44" y="710.10" width="1.6" height="3.0" fill="#5a55a5"/><rect x="272.90" y="710.10" width="1.6" height="3.0" fill="#5a55a5"/><rect x="276.35" y="710.10" width="1.6" height="3.0" fill="#5a55a5"/><rect x="279.81" y="710.10" width="1.6" height="3.0" fill="#5a55a5"/><rect x="283.26" y="710.10" width="1.6" height="3.0" fill="#5a55a5"/><rect x="286.72" y="710.10" width="1.6" height="3.0" fill="#5a55a5"/><rect x="290.18" y="710.10" width="1.6" height="3.0" fill="#5a55a5"/><rect x="293.63" y="710.10" width="1.6" height="3.0" fill="#5a55a5"/><rect x="297.08" y="710.10" width="1.6" height="3.0" fill="#5a55a5"/><rect x="300.54" y="710.10" width="1.6" height="3.0" fill="#5a55a5"/><rect x="304.00" y="710.10" width="1.6" height="3.0" fill="#5a55a5"/><rect x="307.45" y="710.10" width="1.6" height="3.0" fill="#5a55a5"/><rect x="310.91" y="710.10" width="1.6" height="3.0" fill="#5a55a5"/><rect x="314.36" y="710.10" width="1.6" height="3.0" fill="#5a55a5"/><rect x="317.81" y="710.10" width="1.6" height="3.0" fill="#5a55a5"/><rect x="321.27" y="710.10" width="1.6" height="3.0" fill="#5a55a5"/><rect x="324.72" y="710.10" width="1.6" height="3.0" fill="#5a55a5"/><rect x="328.18" y="710.10" width="1.6" height="3.0" fill="#5a55a5"/><rect x="331.64" y="710.10" width="1.6" height="3.0" fill="#5a55a5"/><rect x="335.09" y="710.10" width="1.6" height="3.0" fill="#5a55a5"/><rect x="338.55" y="710.10" width="1.6" height="3.0" fill="#5a55a5"/><rect x="342.00" y="710.10" width="1.6" height="3.0" fill="#5a55a5"/><rect x="345.45" y="710.10" width="1.6" height="3.0" fill="#5a55a5"/><rect x="348.91" y="710.10" width="1.6" height="3.0" fill="#5a55a5"/><rect x="352.36" y="710.10" width="1.6" height="3.0" fill="#5a55a5"/><rect x="355.82" y="710.10" width="1.6" height="3.0" fill="#5a55a5"/><rect x="359.28" y="710.10" width="1.6" height="3.0" fill="#5a55a5"/><rect x="362.73" y="710.10" width="1.6" height="3.0" fill="#5a55a5"/><rect x="366.19" y="710.10" width="1.6" height="3.0" fill="#5a55a5"/><rect x="369.64" y="710.10" width="1.6" height="3.0" fill="#5a55a5"/><rect x="373.09" y="710.10" width="1.6" height="3.0" fill="#5a55a5"/><rect x="376.55" y="710.10" width="1.6" height="3.0" fill="#5a55a5"/><rect x="380.01" y="710.10" width="1.6" height="3.0" fill="#5a55a5"/><rect x="383.46" y="710.10" width="1.6" height="3.0" fill="#5a55a5"/><rect x="386.92" y="710.10" width="1.6" height="3.0" fill="#5a55a5"/><rect x="390.37" y="710.10" width="1.6" height="3.0" fill="#5a55a5"/><rect x="393.82" y="710.10" width="1.6" height="3.0" fill="#5a55a5"/><rect x="397.28" y="710.10" width="1.6" height="3.0" fill="#5a55a5"/><rect x="400.73" y="710.10" width="1.6" height="3.0" fill="#5a55a5"/><rect x="404.19" y="710.10" width="1.6" height="3.0" fill="#5a55a5"/><rect x="407.65" y="710.10" width="1.6" height="3.0" fill="#5a55a5"/><rect x="411.10" y="710.10" width="1.6" height="3.0" fill="#5a55a5"/><rect x="414.56" y="710.10" width="1.6" height="3.0" fill="#5a55a5"/><rect x="418.01" y="710.10" width="1.6" height="3.0" fill="#5a55a5"/><rect x="421.46" y="710.10" width="1.6" height="3.0" fill="#5a55a5"/><rect x="424.92" y="710.10" width="1.6" height="3.0" fill="#5a55a5"/><rect x="428.38" y="710.10" width="1.6" height="3.0" fill="#5a55a5"/><rect x="431.83" y="710.10" width="1.6" height="3.0" fill="#5a55a5"/><rect x="435.29" y="710.10" width="1.6" height="3.0" fill="#5a55a5"/><rect x="438.74" y="710.10" width="1.6" height="3.0" fill="#5a55a5"/><rect x="442.19" y="710.10" width="1.6" height="3.0" fill="#5a55a5"/><rect x="445.65" y="710.10" width="1.6" height="3.0" fill="#5a55a5"/><rect x="449.10" y="710.10" width="1.6" height="3.0" fill="#5a55a5"/><rect x="452.56" y="710.10" width="1.6" height="3.0" fill="#5a55a5"/><rect x="456.02" y="710.10" width="1.6" height="3.0" fill="#5a55a5"/><rect x="459.47" y="710.10" width="1.6" height="3.0" fill="#5a55a5"/><rect x="462.93" y="710.10" width="1.6" height="3.0" fill="#5a55a5"/><rect x="466.38" y="710.10" width="1.6" height="3.0" fill="#5a55a5"/><rect x="469.83" y="710.10" width="1.6" height="3.0" fill="#5a55a5"/><rect x="473.29" y="710.10" width="1.6" height="3.0" fill="#5a55a5"/><rect x="476.74" y="710.10" width="1.6" height="3.0" fill="#5a55a5"/><rect x="480.20" y="710.10" width="1.6" height="3.0" fill="#5a55a5"/><rect x="483.66" y="710.10" width="1.6" height="3.0" fill="#5a55a5"/><rect x="487.11" y="710.10" width="1.6" height="3.0" fill="#5a55a5"/><rect x="490.56" y="710.10" width="1.6" height="3.0" fill="#5a55a5"/><rect x="494.02" y="710.10" width="1.6" height="3.0" fill="#5a55a5"/><rect x="497.47" y="710.10" width="1.6" height="3.0" fill="#5a55a5"/><rect x="500.93" y="710.10" width="1.6" height="3.0" fill="#5a55a5"/><rect x="504.39" y="710.10" width="1.6" height="3.0" fill="#5a55a5"/><rect x="507.84" y="710.10" width="1.6" height="3.0" fill="#5a55a5"/><rect x="511.30" y="710.10" width="1.6" height="3.0" fill="#5a55a5"/><rect x="514.75" y="710.10" width="1.6" height="3.0" fill="#5a55a5"/><rect x="518.21" y="710.10" width="1.6" height="3.0" fill="#5a55a5"/><rect x="521.66" y="710.10" width="1.6" height="3.0" fill="#5a55a5"/><rect x="525.12" y="710.10" width="1.6" height="3.0" fill="#5a55a5"/><rect x="528.57" y="710.10" width="1.6" height="3.0" fill="#5a55a5"/><rect x="532.03" y="710.10" width="1.6" height="3.0" fill="#5a55a5"/><rect x="535.48" y="710.10" width="1.6" height="3.0" fill="#5a55a5"/><rect x="538.94" y="710.10" width="1.6" height="3.0" fill="#5a55a5"/><rect x="542.39" y="710.10" width="1.6" height="3.0" fill="#5a55a5"/><rect x="545.85" y="710.10" width="1.6" height="3.0" fill="#5a55a5"/><rect x="549.30" y="710.10" width="1.6" height="3.0" fill="#5a55a5"/><rect x="552.76" y="710.10" width="1.6" height="3.0" fill="#5a55a5"/><rect x="556.21" y="710.10" width="1.6" height="3.0" fill="#5a55a5"/><rect x="563.12" y="710.10" width="1.6" height="3.0" fill="#5a55a5"/><rect x="566.58" y="710.10" width="1.6" height="3.0" fill="#5a55a5"/><rect x="570.03" y="710.10" width="1.6" height="3.0" fill="#5a55a5"/><rect x="573.49" y="710.10" width="1.6" height="3.0" fill="#5a55a5"/><rect x="576.94" y="710.10" width="1.6" height="3.0" fill="#5a55a5"/><rect x="580.39" y="710.10" width="1.6" height="3.0" fill="#5a55a5"/><rect x="583.85" y="710.10" width="1.6" height="3.0" fill="#5a55a5"/><rect x="587.31" y="710.10" width="1.6" height="3.0" fill="#5a55a5"/><rect x="590.76" y="710.10" width="1.6" height="3.0" fill="#5a55a5"/><rect x="594.22" y="710.10" width="1.6" height="3.0" fill="#5a55a5"/><rect x="597.67" y="710.10" width="1.6" height="3.0" fill="#5a55a5"/><rect x="601.12" y="710.10" width="1.6" height="3.0" fill="#5a55a5"/><rect x="604.58" y="710.10" width="1.6" height="3.0" fill="#5a55a5"/><rect x="608.04" y="710.10" width="1.6" height="3.0" fill="#5a55a5"/><rect x="611.49" y="710.10" width="1.6" height="3.0" fill="#5a55a5"/><rect x="614.95" y="710.10" width="1.6" height="3.0" fill="#5a55a5"/><rect x="618.40" y="710.10" width="1.6" height="3.0" fill="#5a55a5"/><rect x="621.86" y="710.10" width="1.6" height="3.0" fill="#5a55a5"/><rect x="625.31" y="710.10" width="1.6" height="3.0" fill="#5a55a5"/><rect x="628.76" y="710.10" width="1.6" height="3.0" fill="#5a55a5"/><rect x="632.22" y="710.10" width="1.6" height="3.0" fill="#5a55a5"/><rect x="635.68" y="710.10" width="1.6" height="3.0" fill="#5a55a5"/><rect x="639.13" y="710.10" width="1.6" height="3.0" fill="#5a55a5"/><rect x="642.59" y="710.10" width="1.6" height="3.0" fill="#5a55a5"/><rect x="646.04" y="710.10" width="1.6" height="3.0" fill="#5a55a5"/><rect x="649.50" y="710.10" width="1.6" height="3.0" fill="#5a55a5"/><rect x="652.95" y="710.10" width="1.6" height="3.0" fill="#5a55a5"/><rect x="656.41" y="710.10" width="1.6" height="3.0" fill="#5a55a5"/><rect x="659.86" y="710.10" width="1.6" height="3.0" fill="#5a55a5"/><rect x="663.32" y="710.10" width="1.6" height="3.0" fill="#5a55a5"/><rect x="666.77" y="710.10" width="1.6" height="3.0" fill="#5a55a5"/><rect x="670.23" y="710.10" width="1.6" height="3.0" fill="#5a55a5"/><rect x="673.68" y="710.10" width="1.6" height="3.0" fill="#5a55a5"/><rect x="677.13" y="710.10" width="1.6" height="3.0" fill="#5a55a5"/><rect x="680.59" y="710.10" width="1.6" height="3.0" fill="#5a55a5"/><rect x="684.05" y="710.10" width="1.6" height="3.0" fill="#5a55a5"/><rect x="687.50" y="710.10" width="1.6" height="3.0" fill="#5a55a5"/><rect x="690.96" y="710.10" width="1.6" height="3.0" fill="#5a55a5"/><rect x="694.41" y="710.10" width="1.6" height="3.0" fill="#5a55a5"/><rect x="697.87" y="710.10" width="1.6" height="3.0" fill="#5a55a5"/><rect x="701.32" y="710.10" width="1.6" height="3.0" fill="#5a55a5"/><rect x="704.78" y="710.10" width="1.6" height="3.0" fill="#5a55a5"/><rect x="708.23" y="710.10" width="1.6" height="3.0" fill="#5a55a5"/><rect x="711.69" y="710.10" width="1.6" height="3.0" fill="#5a55a5"/><rect x="715.14" y="710.10" width="1.6" height="3.0" fill="#5a55a5"/><rect x="718.60" y="710.10" width="1.6" height="3.0" fill="#5a55a5"/><rect x="722.05" y="710.10" width="1.6" height="3.0" fill="#5a55a5"/><rect x="725.50" y="710.10" width="1.6" height="3.0" fill="#5a55a5"/><rect x="728.96" y="710.10" width="1.6" height="3.0" fill="#5a55a5"/><rect x="732.42" y="710.10" width="1.6" height="3.0" fill="#5a55a5"/><rect x="735.87" y="710.10" width="1.6" height="3.0" fill="#5a55a5"/><rect x="739.33" y="710.10" width="1.6" height="3.0" fill="#5a55a5"/><rect x="742.78" y="710.10" width="1.6" height="3.0" fill="#5a55a5"/><rect x="746.24" y="710.10" width="1.6" height="3.0" fill="#5a55a5"/><rect x="749.69" y="710.10" width="1.6" height="3.0" fill="#5a55a5"/><rect x="753.14" y="710.10" width="1.6" height="3.0" fill="#5a55a5"/><rect x="756.60" y="710.10" width="1.6" height="3.0" fill="#5a55a5"/><rect x="760.06" y="710.10" width="1.6" height="3.0" fill="#5a55a5"/><rect x="763.51" y="710.10" width="1.6" height="3.0" fill="#5a55a5"/><rect x="766.97" y="710.10" width="1.6" height="3.0" fill="#5a55a5"/><rect x="770.42" y="710.10" width="1.6" height="3.0" fill="#5a55a5"/><rect x="773.88" y="710.10" width="1.6" height="3.0" fill="#5a55a5"/><rect x="777.33" y="710.10" width="1.6" height="3.0" fill="#5a55a5"/><rect x="780.79" y="710.10" width="1.6" height="3.0" fill="#5a55a5"/><rect x="784.24" y="710.10" width="1.6" height="3.0" fill="#5a55a5"/><rect x="787.70" y="710.10" width="1.6" height="3.0" fill="#5a55a5"/><rect x="791.15" y="710.10" width="1.6" height="3.0" fill="#5a55a5"/><rect x="794.61" y="710.10" width="1.6" height="3.0" fill="#5a55a5"/><rect x="798.06" y="710.10" width="1.6" height="3.0" fill="#5a55a5"/><rect x="801.51" y="710.10" width="1.6" height="3.0" fill="#5a55a5"/><rect x="804.97" y="710.10" width="1.6" height="3.0" fill="#5a55a5"/><rect x="808.43" y="710.10" width="1.6" height="3.0" fill="#5a55a5"/><rect x="811.88" y="710.10" width="1.6" height="3.0" fill="#5a55a5"/><rect x="815.34" y="710.10" width="1.6" height="3.0" fill="#5a55a5"/><rect x="818.79" y="710.10" width="1.6" height="3.0" fill="#5a55a5"/><rect x="822.25" y="710.10" width="1.6" height="3.0" fill="#5a55a5"/><rect x="825.70" y="710.10" width="1.6" height="3.0" fill="#5a55a5"/><rect x="829.16" y="710.10" width="1.6" height="3.0" fill="#5a55a5"/><rect x="832.61" y="710.10" width="1.6" height="3.0" fill="#5a55a5"/><rect x="836.07" y="710.10" width="1.6" height="3.0" fill="#5a55a5"/><rect x="839.52" y="710.10" width="1.6" height="3.0" fill="#5a55a5"/><rect x="842.98" y="710.10" width="1.6" height="3.0" fill="#5a55a5"/><rect x="846.43" y="710.10" width="1.6" height="3.0" fill="#5a55a5"/><rect x="849.88" y="710.10" width="1.6" height="3.0" fill="#5a55a5"/><rect x="853.34" y="710.10" width="1.6" height="3.0" fill="#5a55a5"/><rect x="856.80" y="710.10" width="1.6" height="3.0" fill="#5a55a5"/><rect x="860.25" y="710.10" width="1.6" height="3.0" fill="#5a55a5"/><rect x="863.71" y="710.10" width="1.6" height="3.0" fill="#5a55a5"/><rect x="867.16" y="710.10" width="1.6" height="3.0" fill="#5a55a5"/><rect x="870.62" y="710.10" width="1.6" height="3.0" fill="#5a55a5"/><rect x="874.07" y="710.10" width="1.6" height="3.0" fill="#5a55a5"/><rect x="877.53" y="710.10" width="1.6" height="3.0" fill="#5a55a5"/><rect x="880.98" y="710.10" width="1.6" height="3.0" fill="#5a55a5"/><rect x="884.44" y="710.10" width="1.6" height="3.0" fill="#5a55a5"/><rect x="887.89" y="710.10" width="1.6" height="3.0" fill="#5a55a5"/><rect x="65.60" y="705.20" width="1.6" height="3.0" fill="#5a55a5"/><rect x="69.06" y="705.20" width="1.6" height="3.0" fill="#5a55a5"/><rect x="72.51" y="705.20" width="1.6" height="3.0" fill="#5a55a5"/><rect x="75.97" y="705.20" width="1.6" height="3.0" fill="#5a55a5"/><rect x="79.42" y="705.20" width="1.6" height="3.0" fill="#5a55a5"/><rect x="82.88" y="705.20" width="1.6" height="3.0" fill="#5a55a5"/><rect x="86.33" y="705.20" width="1.6" height="3.0" fill="#5a55a5"/><rect x="89.79" y="705.20" width="1.6" height="3.0" fill="#5a55a5"/><rect x="93.24" y="705.20" width="1.6" height="3.0" fill="#5a55a5"/><rect x="96.70" y="705.20" width="1.6" height="3.0" fill="#5a55a5"/><rect x="100.15" y="705.20" width="1.6" height="3.0" fill="#5a55a5"/><rect x="103.61" y="705.20" width="1.6" height="3.0" fill="#5a55a5"/><rect x="107.06" y="705.20" width="1.6" height="3.0" fill="#5a55a5"/><rect x="110.52" y="705.20" width="1.6" height="3.0" fill="#5a55a5"/><rect x="113.97" y="705.20" width="1.6" height="3.0" fill="#5a55a5"/><rect x="117.43" y="705.20" width="1.6" height="3.0" fill="#5a55a5"/><rect x="120.88" y="705.20" width="1.6" height="3.0" fill="#5a55a5"/><rect x="124.34" y="705.20" width="1.6" height="3.0" fill="#5a55a5"/><rect x="127.79" y="705.20" width="1.6" height="3.0" fill="#5a55a5"/><rect x="131.25" y="705.20" width="1.6" height="3.0" fill="#5a55a5"/><rect x="134.70" y="705.20" width="1.6" height="3.0" fill="#5a55a5"/><rect x="138.16" y="705.20" width="1.6" height="3.0" fill="#5a55a5"/><rect x="141.61" y="705.20" width="1.6" height="3.0" fill="#5a55a5"/><rect x="145.06" y="705.20" width="1.6" height="3.0" fill="#5a55a5"/><rect x="148.52" y="705.20" width="1.6" height="3.0" fill="#5a55a5"/><rect x="151.97" y="705.20" width="1.6" height="3.0" fill="#5a55a5"/><rect x="155.43" y="705.20" width="1.6" height="3.0" fill="#5a55a5"/><rect x="158.88" y="705.20" width="1.6" height="3.0" fill="#5a55a5"/><rect x="162.34" y="705.20" width="1.6" height="3.0" fill="#5a55a5"/><rect x="165.80" y="705.20" width="1.6" height="3.0" fill="#5a55a5"/><rect x="169.25" y="705.20" width="1.6" height="3.0" fill="#5a55a5"/><rect x="172.70" y="705.20" width="1.6" height="3.0" fill="#5a55a5"/><rect x="176.16" y="705.20" width="1.6" height="3.0" fill="#5a55a5"/><rect x="179.62" y="705.20" width="1.6" height="3.0" fill="#5a55a5"/><rect x="183.07" y="705.20" width="1.6" height="3.0" fill="#5a55a5"/><rect x="186.52" y="705.20" width="1.6" height="3.0" fill="#5a55a5"/><rect x="189.98" y="705.20" width="1.6" height="3.0" fill="#5a55a5"/><rect x="193.44" y="705.20" width="1.6" height="3.0" fill="#5a55a5"/><rect x="200.34" y="705.20" width="1.6" height="3.0" fill="#5a55a5"/><rect x="203.80" y="705.20" width="1.6" height="3.0" fill="#5a55a5"/><rect x="207.25" y="705.20" width="1.6" height="3.0" fill="#5a55a5"/><rect x="210.71" y="705.20" width="1.6" height="3.0" fill="#5a55a5"/><rect x="214.16" y="705.20" width="1.6" height="3.0" fill="#5a55a5"/><rect x="217.62" y="705.20" width="1.6" height="3.0" fill="#5a55a5"/><rect x="221.07" y="705.20" width="1.6" height="3.0" fill="#5a55a5"/><rect x="224.53" y="705.20" width="1.6" height="3.0" fill="#5a55a5"/><rect x="227.98" y="705.20" width="1.6" height="3.0" fill="#5a55a5"/><rect x="231.44" y="705.20" width="1.6" height="3.0" fill="#5a55a5"/><rect x="234.90" y="705.20" width="1.6" height="3.0" fill="#5a55a5"/><rect x="238.35" y="705.20" width="1.6" height="3.0" fill="#5a55a5"/><rect x="241.81" y="705.20" width="1.6" height="3.0" fill="#5a55a5"/><rect x="245.26" y="705.20" width="1.6" height="3.0" fill="#5a55a5"/><rect x="248.72" y="705.20" width="1.6" height="3.0" fill="#5a55a5"/><rect x="252.17" y="705.20" width="1.6" height="3.0" fill="#5a55a5"/><rect x="255.62" y="705.20" width="1.6" height="3.0" fill="#5a55a5"/><rect x="259.08" y="705.20" width="1.6" height="3.0" fill="#5a55a5"/><rect x="262.54" y="705.20" width="1.6" height="3.0" fill="#5a55a5"/><rect x="265.99" y="705.20" width="1.6" height="3.0" fill="#5a55a5"/><rect x="269.44" y="705.20" width="1.6" height="3.0" fill="#5a55a5"/><rect x="272.90" y="705.20" width="1.6" height="3.0" fill="#5a55a5"/><rect x="279.81" y="705.20" width="1.6" height="3.0" fill="#5a55a5"/><rect x="283.26" y="705.20" width="1.6" height="3.0" fill="#5a55a5"/><rect x="290.18" y="705.20" width="1.6" height="3.0" fill="#5a55a5"/><rect x="293.63" y="705.20" width="1.6" height="3.0" fill="#5a55a5"/><rect x="297.08" y="705.20" width="1.6" height="3.0" fill="#5a55a5"/><rect x="300.54" y="705.20" width="1.6" height="3.0" fill="#5a55a5"/><rect x="304.00" y="705.20" width="1.6" height="3.0" fill="#5a55a5"/><rect x="307.45" y="705.20" width="1.6" height="3.0" fill="#5a55a5"/><rect x="310.91" y="705.20" width="1.6" height="3.0" fill="#5a55a5"/><rect x="314.36" y="705.20" width="1.6" height="3.0" fill="#5a55a5"/><rect x="317.81" y="705.20" width="1.6" height="3.0" fill="#5a55a5"/><rect x="321.27" y="705.20" width="1.6" height="3.0" fill="#5a55a5"/><rect x="324.72" y="705.20" width="1.6" height="3.0" fill="#5a55a5"/><rect x="328.18" y="705.20" width="1.6" height="3.0" fill="#5a55a5"/><rect x="331.64" y="705.20" width="1.6" height="3.0" fill="#5a55a5"/><rect x="335.09" y="705.20" width="1.6" height="3.0" fill="#5a55a5"/><rect x="338.55" y="705.20" width="1.6" height="3.0" fill="#5a55a5"/><rect x="342.00" y="705.20" width="1.6" height="3.0" fill="#5a55a5"/><rect x="345.45" y="705.20" width="1.6" height="3.0" fill="#5a55a5"/><rect x="348.91" y="705.20" width="1.6" height="3.0" fill="#5a55a5"/><rect x="352.36" y="705.20" width="1.6" height="3.0" fill="#5a55a5"/><rect x="355.82" y="705.20" width="1.6" height="3.0" fill="#5a55a5"/><rect x="359.28" y="705.20" width="1.6" height="3.0" fill="#5a55a5"/><rect x="362.73" y="705.20" width="1.6" height="3.0" fill="#5a55a5"/><rect x="366.19" y="705.20" width="1.6" height="3.0" fill="#5a55a5"/><rect x="369.64" y="705.20" width="1.6" height="3.0" fill="#5a55a5"/><rect x="373.09" y="705.20" width="1.6" height="3.0" fill="#5a55a5"/><rect x="376.55" y="705.20" width="1.6" height="3.0" fill="#5a55a5"/><rect x="380.01" y="705.20" width="1.6" height="3.0" fill="#5a55a5"/><rect x="383.46" y="705.20" width="1.6" height="3.0" fill="#5a55a5"/><rect x="386.92" y="705.20" width="1.6" height="3.0" fill="#5a55a5"/><rect x="390.37" y="705.20" width="1.6" height="3.0" fill="#5a55a5"/><rect x="393.82" y="705.20" width="1.6" height="3.0" fill="#5a55a5"/><rect x="397.28" y="705.20" width="1.6" height="3.0" fill="#5a55a5"/><rect x="400.73" y="705.20" width="1.6" height="3.0" fill="#5a55a5"/><rect x="404.19" y="705.20" width="1.6" height="3.0" fill="#5a55a5"/><rect x="407.65" y="705.20" width="1.6" height="3.0" fill="#5a55a5"/><rect x="411.10" y="705.20" width="1.6" height="3.0" fill="#5a55a5"/><rect x="414.56" y="705.20" width="1.6" height="3.0" fill="#5a55a5"/><rect x="418.01" y="705.20" width="1.6" height="3.0" fill="#5a55a5"/><rect x="421.46" y="705.20" width="1.6" height="3.0" fill="#5a55a5"/><rect x="424.92" y="705.20" width="1.6" height="3.0" fill="#5a55a5"/><rect x="428.38" y="705.20" width="1.6" height="3.0" fill="#5a55a5"/><rect x="431.83" y="705.20" width="1.6" height="3.0" fill="#5a55a5"/><rect x="435.29" y="705.20" width="1.6" height="3.0" fill="#5a55a5"/><rect x="438.74" y="705.20" width="1.6" height="3.0" fill="#5a55a5"/><rect x="442.19" y="705.20" width="1.6" height="3.0" fill="#5a55a5"/><rect x="445.65" y="705.20" width="1.6" height="3.0" fill="#5a55a5"/><rect x="449.10" y="705.20" width="1.6" height="3.0" fill="#5a55a5"/><rect x="452.56" y="705.20" width="1.6" height="3.0" fill="#5a55a5"/><rect x="456.02" y="705.20" width="1.6" height="3.0" fill="#5a55a5"/><rect x="459.47" y="705.20" width="1.6" height="3.0" fill="#5a55a5"/><rect x="462.93" y="705.20" width="1.6" height="3.0" fill="#5a55a5"/><rect x="466.38" y="705.20" width="1.6" height="3.0" fill="#5a55a5"/><rect x="469.83" y="705.20" width="1.6" height="3.0" fill="#5a55a5"/><rect x="473.29" y="705.20" width="1.6" height="3.0" fill="#5a55a5"/><rect x="476.74" y="705.20" width="1.6" height="3.0" fill="#5a55a5"/><rect x="480.20" y="705.20" width="1.6" height="3.0" fill="#5a55a5"/><rect x="483.66" y="705.20" width="1.6" height="3.0" fill="#5a55a5"/><rect x="487.11" y="705.20" width="1.6" height="3.0" fill="#5a55a5"/><rect x="490.56" y="705.20" width="1.6" height="3.0" fill="#5a55a5"/><rect x="494.02" y="705.20" width="1.6" height="3.0" fill="#5a55a5"/><rect x="497.47" y="705.20" width="1.6" height="3.0" fill="#5a55a5"/><rect x="500.93" y="705.20" width="1.6" height="3.0" fill="#5a55a5"/><rect x="504.39" y="705.20" width="1.6" height="3.0" fill="#5a55a5"/><rect x="507.84" y="705.20" width="1.6" height="3.0" fill="#5a55a5"/><rect x="511.30" y="705.20" width="1.6" height="3.0" fill="#5a55a5"/><rect x="514.75" y="705.20" width="1.6" height="3.0" fill="#5a55a5"/><rect x="518.21" y="705.20" width="1.6" height="3.0" fill="#5a55a5"/><rect x="521.66" y="705.20" width="1.6" height="3.0" fill="#5a55a5"/><rect x="525.12" y="705.20" width="1.6" height="3.0" fill="#5a55a5"/><rect x="528.57" y="705.20" width="1.6" height="3.0" fill="#5a55a5"/><rect x="532.03" y="705.20" width="1.6" height="3.0" fill="#5a55a5"/><rect x="535.48" y="705.20" width="1.6" height="3.0" fill="#5a55a5"/><rect x="538.94" y="705.20" width="1.6" height="3.0" fill="#5a55a5"/><rect x="542.39" y="705.20" width="1.6" height="3.0" fill="#5a55a5"/><rect x="545.85" y="705.20" width="1.6" height="3.0" fill="#5a55a5"/><rect x="549.30" y="705.20" width="1.6" height="3.0" fill="#5a55a5"/><rect x="552.76" y="705.20" width="1.6" height="3.0" fill="#5a55a5"/><rect x="556.21" y="705.20" width="1.6" height="3.0" fill="#5a55a5"/><rect x="559.67" y="705.20" width="1.6" height="3.0" fill="#5a55a5"/><rect x="563.12" y="705.20" width="1.6" height="3.0" fill="#5a55a5"/><rect x="566.58" y="705.20" width="1.6" height="3.0" fill="#5a55a5"/><rect x="570.03" y="705.20" width="1.6" height="3.0" fill="#5a55a5"/><rect x="573.49" y="705.20" width="1.6" height="3.0" fill="#5a55a5"/><rect x="576.94" y="705.20" width="1.6" height="3.0" fill="#5a55a5"/><rect x="580.39" y="705.20" width="1.6" height="3.0" fill="#5a55a5"/><rect x="583.85" y="705.20" width="1.6" height="3.0" fill="#5a55a5"/><rect x="587.31" y="705.20" width="1.6" height="3.0" fill="#5a55a5"/><rect x="590.76" y="705.20" width="1.6" height="3.0" fill="#5a55a5"/><rect x="594.22" y="705.20" width="1.6" height="3.0" fill="#5a55a5"/><rect x="597.67" y="705.20" width="1.6" height="3.0" fill="#5a55a5"/><rect x="601.12" y="705.20" width="1.6" height="3.0" fill="#5a55a5"/><rect x="604.58" y="705.20" width="1.6" height="3.0" fill="#5a55a5"/><rect x="608.04" y="705.20" width="1.6" height="3.0" fill="#5a55a5"/><rect x="611.49" y="705.20" width="1.6" height="3.0" fill="#5a55a5"/><rect x="614.95" y="705.20" width="1.6" height="3.0" fill="#5a55a5"/><rect x="618.40" y="705.20" width="1.6" height="3.0" fill="#5a55a5"/><rect x="621.86" y="705.20" width="1.6" height="3.0" fill="#5a55a5"/><rect x="625.31" y="705.20" width="1.6" height="3.0" fill="#5a55a5"/><rect x="628.76" y="705.20" width="1.6" height="3.0" fill="#5a55a5"/><rect x="632.22" y="705.20" width="1.6" height="3.0" fill="#5a55a5"/><rect x="635.68" y="705.20" width="1.6" height="3.0" fill="#5a55a5"/><rect x="639.13" y="705.20" width="1.6" height="3.0" fill="#5a55a5"/><rect x="642.59" y="705.20" width="1.6" height="3.0" fill="#5a55a5"/><rect x="646.04" y="705.20" width="1.6" height="3.0" fill="#5a55a5"/><rect x="649.50" y="705.20" width="1.6" height="3.0" fill="#5a55a5"/><rect x="652.95" y="705.20" width="1.6" height="3.0" fill="#5a55a5"/><rect x="656.41" y="705.20" width="1.6" height="3.0" fill="#5a55a5"/><rect x="659.86" y="705.20" width="1.6" height="3.0" fill="#5a55a5"/><rect x="663.32" y="705.20" width="1.6" height="3.0" fill="#5a55a5"/><rect x="666.77" y="705.20" width="1.6" height="3.0" fill="#5a55a5"/><rect x="670.23" y="705.20" width="1.6" height="3.0" fill="#5a55a5"/><rect x="673.68" y="705.20" width="1.6" height="3.0" fill="#5a55a5"/><rect x="677.13" y="705.20" width="1.6" height="3.0" fill="#5a55a5"/><rect x="680.59" y="705.20" width="1.6" height="3.0" fill="#5a55a5"/><rect x="684.05" y="705.20" width="1.6" height="3.0" fill="#5a55a5"/><rect x="687.50" y="705.20" width="1.6" height="3.0" fill="#5a55a5"/><rect x="690.96" y="705.20" width="1.6" height="3.0" fill="#5a55a5"/><rect x="694.41" y="705.20" width="1.6" height="3.0" fill="#5a55a5"/><rect x="697.87" y="705.20" width="1.6" height="3.0" fill="#5a55a5"/><rect x="701.32" y="705.20" width="1.6" height="3.0" fill="#5a55a5"/><rect x="704.78" y="705.20" width="1.6" height="3.0" fill="#5a55a5"/><rect x="708.23" y="705.20" width="1.6" height="3.0" fill="#5a55a5"/><rect x="711.69" y="705.20" width="1.6" height="3.0" fill="#5a55a5"/><rect x="715.14" y="705.20" width="1.6" height="3.0" fill="#5a55a5"/><rect x="718.60" y="705.20" width="1.6" height="3.0" fill="#5a55a5"/><rect x="722.05" y="705.20" width="1.6" height="3.0" fill="#5a55a5"/><rect x="725.50" y="705.20" width="1.6" height="3.0" fill="#5a55a5"/><rect x="728.96" y="705.20" width="1.6" height="3.0" fill="#5a55a5"/><rect x="732.42" y="705.20" width="1.6" height="3.0" fill="#5a55a5"/><rect x="735.87" y="705.20" width="1.6" height="3.0" fill="#5a55a5"/><rect x="739.33" y="705.20" width="1.6" height="3.0" fill="#5a55a5"/><rect x="742.78" y="705.20" width="1.6" height="3.0" fill="#5a55a5"/><rect x="746.24" y="705.20" width="1.6" height="3.0" fill="#5a55a5"/><rect x="749.69" y="705.20" width="1.6" height="3.0" fill="#5a55a5"/><rect x="753.14" y="705.20" width="1.6" height="3.0" fill="#5a55a5"/><rect x="756.60" y="705.20" width="1.6" height="3.0" fill="#5a55a5"/><rect x="760.06" y="705.20" width="1.6" height="3.0" fill="#5a55a5"/><rect x="763.51" y="705.20" width="1.6" height="3.0" fill="#5a55a5"/><rect x="766.97" y="705.20" width="1.6" height="3.0" fill="#5a55a5"/><rect x="770.42" y="705.20" width="1.6" height="3.0" fill="#5a55a5"/><rect x="773.88" y="705.20" width="1.6" height="3.0" fill="#5a55a5"/><rect x="777.33" y="705.20" width="1.6" height="3.0" fill="#5a55a5"/><rect x="780.79" y="705.20" width="1.6" height="3.0" fill="#5a55a5"/><rect x="784.24" y="705.20" width="1.6" height="3.0" fill="#5a55a5"/><rect x="787.70" y="705.20" width="1.6" height="3.0" fill="#5a55a5"/><rect x="791.15" y="705.20" width="1.6" height="3.0" fill="#5a55a5"/><rect x="794.61" y="705.20" width="1.6" height="3.0" fill="#5a55a5"/><rect x="798.06" y="705.20" width="1.6" height="3.0" fill="#5a55a5"/><rect x="801.51" y="705.20" width="1.6" height="3.0" fill="#5a55a5"/><rect x="804.97" y="705.20" width="1.6" height="3.0" fill="#5a55a5"/><rect x="808.43" y="705.20" width="1.6" height="3.0" fill="#5a55a5"/><rect x="811.88" y="705.20" width="1.6" height="3.0" fill="#5a55a5"/><rect x="815.34" y="705.20" width="1.6" height="3.0" fill="#5a55a5"/><rect x="818.79" y="705.20" width="1.6" height="3.0" fill="#5a55a5"/><rect x="822.25" y="705.20" width="1.6" height="3.0" fill="#5a55a5"/><rect x="825.70" y="705.20" width="1.6" height="3.0" fill="#5a55a5"/><rect x="829.16" y="705.20" width="1.6" height="3.0" fill="#5a55a5"/><rect x="832.61" y="705.20" width="1.6" height="3.0" fill="#5a55a5"/><rect x="836.07" y="705.20" width="1.6" height="3.0" fill="#5a55a5"/><rect x="839.52" y="705.20" width="1.6" height="3.0" fill="#5a55a5"/><rect x="842.98" y="705.20" width="1.6" height="3.0" fill="#5a55a5"/><rect x="846.43" y="705.20" width="1.6" height="3.0" fill="#5a55a5"/><rect x="849.88" y="705.20" width="1.6" height="3.0" fill="#5a55a5"/><rect x="853.34" y="705.20" width="1.6" height="3.0" fill="#5a55a5"/><rect x="856.80" y="705.20" width="1.6" height="3.0" fill="#5a55a5"/><rect x="860.25" y="705.20" width="1.6" height="3.0" fill="#5a55a5"/><rect x="863.71" y="705.20" width="1.6" height="3.0" fill="#5a55a5"/><rect x="867.16" y="705.20" width="1.6" height="3.0" fill="#5a55a5"/><rect x="870.62" y="705.20" width="1.6" height="3.0" fill="#5a55a5"/><rect x="874.07" y="705.20" width="1.6" height="3.0" fill="#5a55a5"/><rect x="877.53" y="705.20" width="1.6" height="3.0" fill="#5a55a5"/><rect x="880.98" y="705.20" width="1.6" height="3.0" fill="#5a55a5"/><rect x="884.44" y="705.20" width="1.6" height="3.0" fill="#5a55a5"/><rect x="887.89" y="705.20" width="1.6" height="3.0" fill="#5a55a5"/><rect x="65.60" y="700.40" width="1.6" height="3.0" fill="#5a55a5"/><rect x="69.06" y="700.40" width="1.6" height="3.0" fill="#5a55a5"/><rect x="72.51" y="700.40" width="1.6" height="3.0" fill="#5a55a5"/><rect x="75.97" y="700.40" width="1.6" height="3.0" fill="#5a55a5"/><rect x="79.42" y="700.40" width="1.6" height="3.0" fill="#5a55a5"/><rect x="82.88" y="700.40" width="1.6" height="3.0" fill="#5a55a5"/><rect x="86.33" y="700.40" width="1.6" height="3.0" fill="#5a55a5"/><rect x="89.79" y="700.40" width="1.6" height="3.0" fill="#5a55a5"/><rect x="93.24" y="700.40" width="1.6" height="3.0" fill="#5a55a5"/><rect x="96.70" y="700.40" width="1.6" height="3.0" fill="#5a55a5"/><rect x="100.15" y="700.40" width="1.6" height="3.0" fill="#5a55a5"/><rect x="103.61" y="700.40" width="1.6" height="3.0" fill="#5a55a5"/><rect x="107.06" y="700.40" width="1.6" height="3.0" fill="#5a55a5"/><rect x="110.52" y="700.40" width="1.6" height="3.0" fill="#5a55a5"/><rect x="113.97" y="700.40" width="1.6" height="3.0" fill="#5a55a5"/><rect x="117.43" y="700.40" width="1.6" height="3.0" fill="#5a55a5"/><rect x="120.88" y="700.40" width="1.6" height="3.0" fill="#5a55a5"/><rect x="124.34" y="700.40" width="1.6" height="3.0" fill="#5a55a5"/><rect x="127.79" y="700.40" width="1.6" height="3.0" fill="#5a55a5"/><rect x="131.25" y="700.40" width="1.6" height="3.0" fill="#5a55a5"/><rect x="134.70" y="700.40" width="1.6" height="3.0" fill="#5a55a5"/><rect x="138.16" y="700.40" width="1.6" height="3.0" fill="#5a55a5"/><rect x="141.61" y="700.40" width="1.6" height="3.0" fill="#5a55a5"/><rect x="145.06" y="700.40" width="1.6" height="3.0" fill="#5a55a5"/><rect x="148.52" y="700.40" width="1.6" height="3.0" fill="#5a55a5"/><rect x="151.97" y="700.40" width="1.6" height="3.0" fill="#5a55a5"/><rect x="155.43" y="700.40" width="1.6" height="3.0" fill="#5a55a5"/><rect x="158.88" y="700.40" width="1.6" height="3.0" fill="#5a55a5"/><rect x="162.34" y="700.40" width="1.6" height="3.0" fill="#5a55a5"/><rect x="165.80" y="700.40" width="1.6" height="3.0" fill="#5a55a5"/><rect x="169.25" y="700.40" width="1.6" height="3.0" fill="#5a55a5"/><rect x="172.70" y="700.40" width="1.6" height="3.0" fill="#5a55a5"/><rect x="176.16" y="700.40" width="1.6" height="3.0" fill="#5a55a5"/><rect x="179.62" y="700.40" width="1.6" height="3.0" fill="#5a55a5"/><rect x="183.07" y="700.40" width="1.6" height="3.0" fill="#5a55a5"/><rect x="186.52" y="700.40" width="1.6" height="3.0" fill="#5a55a5"/><rect x="189.98" y="700.40" width="1.6" height="3.0" fill="#5a55a5"/><rect x="193.44" y="700.40" width="1.6" height="3.0" fill="#5a55a5"/><rect x="196.89" y="700.40" width="1.6" height="3.0" fill="#5a55a5"/><rect x="200.34" y="700.40" width="1.6" height="3.0" fill="#5a55a5"/><rect x="203.80" y="700.40" width="1.6" height="3.0" fill="#5a55a5"/><rect x="207.25" y="700.40" width="1.6" height="3.0" fill="#5a55a5"/><rect x="210.71" y="700.40" width="1.6" height="3.0" fill="#5a55a5"/><rect x="214.16" y="700.40" width="1.6" height="3.0" fill="#5a55a5"/><rect x="217.62" y="700.40" width="1.6" height="3.0" fill="#5a55a5"/><rect x="221.07" y="700.40" width="1.6" height="3.0" fill="#5a55a5"/><rect x="224.53" y="700.40" width="1.6" height="3.0" fill="#5a55a5"/><rect x="227.98" y="700.40" width="1.6" height="3.0" fill="#5a55a5"/><rect x="231.44" y="700.40" width="1.6" height="3.0" fill="#5a55a5"/><rect x="234.90" y="700.40" width="1.6" height="3.0" fill="#5a55a5"/><rect x="238.35" y="700.40" width="1.6" height="3.0" fill="#5a55a5"/><rect x="241.81" y="700.40" width="1.6" height="3.0" fill="#5a55a5"/><rect x="245.26" y="700.40" width="1.6" height="3.0" fill="#5a55a5"/><rect x="248.72" y="700.40" width="1.6" height="3.0" fill="#5a55a5"/><rect x="252.17" y="700.40" width="1.6" height="3.0" fill="#5a55a5"/><rect x="255.62" y="700.40" width="1.6" height="3.0" fill="#5a55a5"/><rect x="259.08" y="700.40" width="1.6" height="3.0" fill="#5a55a5"/><rect x="262.54" y="700.40" width="1.6" height="3.0" fill="#5a55a5"/><rect x="265.99" y="700.40" width="1.6" height="3.0" fill="#5a55a5"/><rect x="269.44" y="700.40" width="1.6" height="3.0" fill="#5a55a5"/><rect x="272.90" y="700.40" width="1.6" height="3.0" fill="#5a55a5"/><rect x="276.35" y="700.40" width="1.6" height="3.0" fill="#5a55a5"/><rect x="279.81" y="700.40" width="1.6" height="3.0" fill="#5a55a5"/><rect x="283.26" y="700.40" width="1.6" height="3.0" fill="#5a55a5"/><rect x="286.72" y="700.40" width="1.6" height="3.0" fill="#5a55a5"/><rect x="290.18" y="700.40" width="1.6" height="3.0" fill="#5a55a5"/><rect x="293.63" y="700.40" width="1.6" height="3.0" fill="#5a55a5"/><rect x="297.08" y="700.40" width="1.6" height="3.0" fill="#5a55a5"/><rect x="300.54" y="700.40" width="1.6" height="3.0" fill="#5a55a5"/><rect x="304.00" y="700.40" width="1.6" height="3.0" fill="#5a55a5"/><rect x="307.45" y="700.40" width="1.6" height="3.0" fill="#5a55a5"/><rect x="310.91" y="700.40" width="1.6" height="3.0" fill="#5a55a5"/><rect x="314.36" y="700.40" width="1.6" height="3.0" fill="#5a55a5"/><rect x="317.81" y="700.40" width="1.6" height="3.0" fill="#5a55a5"/><rect x="321.27" y="700.40" width="1.6" height="3.0" fill="#5a55a5"/><rect x="324.72" y="700.40" width="1.6" height="3.0" fill="#5a55a5"/><rect x="328.18" y="700.40" width="1.6" height="3.0" fill="#5a55a5"/><rect x="331.64" y="700.40" width="1.6" height="3.0" fill="#5a55a5"/><rect x="335.09" y="700.40" width="1.6" height="3.0" fill="#5a55a5"/><rect x="338.55" y="700.40" width="1.6" height="3.0" fill="#5a55a5"/><rect x="342.00" y="700.40" width="1.6" height="3.0" fill="#5a55a5"/><rect x="345.45" y="700.40" width="1.6" height="3.0" fill="#5a55a5"/><rect x="348.91" y="700.40" width="1.6" height="3.0" fill="#5a55a5"/><rect x="352.36" y="700.40" width="1.6" height="3.0" fill="#5a55a5"/><rect x="355.82" y="700.40" width="1.6" height="3.0" fill="#5a55a5"/><rect x="359.28" y="700.40" width="1.6" height="3.0" fill="#5a55a5"/><rect x="362.73" y="700.40" width="1.6" height="3.0" fill="#5a55a5"/><rect x="366.19" y="700.40" width="1.6" height="3.0" fill="#5a55a5"/><rect x="369.64" y="700.40" width="1.6" height="3.0" fill="#5a55a5"/><rect x="373.09" y="700.40" width="1.6" height="3.0" fill="#5a55a5"/><rect x="376.55" y="700.40" width="1.6" height="3.0" fill="#5a55a5"/><rect x="380.01" y="700.40" width="1.6" height="3.0" fill="#5a55a5"/><rect x="383.46" y="700.40" width="1.6" height="3.0" fill="#5a55a5"/><rect x="386.92" y="700.40" width="1.6" height="3.0" fill="#5a55a5"/><rect x="390.37" y="700.40" width="1.6" height="3.0" fill="#5a55a5"/><rect x="414.56" y="700.40" width="1.6" height="3.0" fill="#5a55a5"/><rect x="418.01" y="700.40" width="1.6" height="3.0" fill="#5a55a5"/><rect x="424.92" y="700.40" width="1.6" height="3.0" fill="#5a55a5"/><rect x="428.38" y="700.40" width="1.6" height="3.0" fill="#5a55a5"/><rect x="431.83" y="700.40" width="1.6" height="3.0" fill="#5a55a5"/><rect x="435.29" y="700.40" width="1.6" height="3.0" fill="#5a55a5"/><rect x="438.74" y="700.40" width="1.6" height="3.0" fill="#5a55a5"/><rect x="442.19" y="700.40" width="1.6" height="3.0" fill="#5a55a5"/><rect x="445.65" y="700.40" width="1.6" height="3.0" fill="#5a55a5"/><rect x="449.10" y="700.40" width="1.6" height="3.0" fill="#5a55a5"/><rect x="452.56" y="700.40" width="1.6" height="3.0" fill="#5a55a5"/><rect x="456.02" y="700.40" width="1.6" height="3.0" fill="#5a55a5"/><rect x="459.47" y="700.40" width="1.6" height="3.0" fill="#5a55a5"/><rect x="462.93" y="700.40" width="1.6" height="3.0" fill="#5a55a5"/><rect x="466.38" y="700.40" width="1.6" height="3.0" fill="#5a55a5"/><rect x="469.83" y="700.40" width="1.6" height="3.0" fill="#5a55a5"/><rect x="473.29" y="700.40" width="1.6" height="3.0" fill="#5a55a5"/><rect x="476.74" y="700.40" width="1.6" height="3.0" fill="#5a55a5"/><rect x="480.20" y="700.40" width="1.6" height="3.0" fill="#5a55a5"/><rect x="483.66" y="700.40" width="1.6" height="3.0" fill="#5a55a5"/><rect x="487.11" y="700.40" width="1.6" height="3.0" fill="#5a55a5"/><rect x="490.56" y="700.40" width="1.6" height="3.0" fill="#5a55a5"/><rect x="494.02" y="700.40" width="1.6" height="3.0" fill="#5a55a5"/><rect x="497.47" y="700.40" width="1.6" height="3.0" fill="#5a55a5"/><rect x="500.93" y="700.40" width="1.6" height="3.0" fill="#5a55a5"/><rect x="504.39" y="700.40" width="1.6" height="3.0" fill="#5a55a5"/><rect x="507.84" y="700.40" width="1.6" height="3.0" fill="#5a55a5"/><rect x="511.30" y="700.40" width="1.6" height="3.0" fill="#5a55a5"/><rect x="514.75" y="700.40" width="1.6" height="3.0" fill="#5a55a5"/><rect x="518.21" y="700.40" width="1.6" height="3.0" fill="#5a55a5"/><rect x="521.66" y="700.40" width="1.6" height="3.0" fill="#5a55a5"/><rect x="525.12" y="700.40" width="1.6" height="3.0" fill="#5a55a5"/><rect x="528.57" y="700.40" width="1.6" height="3.0" fill="#5a55a5"/><rect x="532.03" y="700.40" width="1.6" height="3.0" fill="#5a55a5"/><rect x="535.48" y="700.40" width="1.6" height="3.0" fill="#5a55a5"/><rect x="538.94" y="700.40" width="1.6" height="3.0" fill="#5a55a5"/><rect x="542.39" y="700.40" width="1.6" height="3.0" fill="#5a55a5"/><rect x="545.85" y="700.40" width="1.6" height="3.0" fill="#5a55a5"/><rect x="549.30" y="700.40" width="1.6" height="3.0" fill="#5a55a5"/><rect x="552.76" y="700.40" width="1.6" height="3.0" fill="#5a55a5"/><rect x="556.21" y="700.40" width="1.6" height="3.0" fill="#5a55a5"/><rect x="559.67" y="700.40" width="1.6" height="3.0" fill="#5a55a5"/><rect x="563.12" y="700.40" width="1.6" height="3.0" fill="#5a55a5"/><rect x="566.58" y="700.40" width="1.6" height="3.0" fill="#5a55a5"/><rect x="570.03" y="700.40" width="1.6" height="3.0" fill="#5a55a5"/><rect x="573.49" y="700.40" width="1.6" height="3.0" fill="#5a55a5"/><rect x="576.94" y="700.40" width="1.6" height="3.0" fill="#5a55a5"/><rect x="580.39" y="700.40" width="1.6" height="3.0" fill="#5a55a5"/><rect x="583.85" y="700.40" width="1.6" height="3.0" fill="#5a55a5"/><rect x="587.31" y="700.40" width="1.6" height="3.0" fill="#5a55a5"/><rect x="590.76" y="700.40" width="1.6" height="3.0" fill="#5a55a5"/><rect x="594.22" y="700.40" width="1.6" height="3.0" fill="#5a55a5"/><rect x="597.67" y="700.40" width="1.6" height="3.0" fill="#5a55a5"/><rect x="601.12" y="700.40" width="1.6" height="3.0" fill="#5a55a5"/><rect x="608.04" y="700.40" width="1.6" height="3.0" fill="#5a55a5"/><rect x="611.49" y="700.40" width="1.6" height="3.0" fill="#5a55a5"/><rect x="614.95" y="700.40" width="1.6" height="3.0" fill="#5a55a5"/><rect x="618.40" y="700.40" width="1.6" height="3.0" fill="#5a55a5"/><rect x="621.86" y="700.40" width="1.6" height="3.0" fill="#5a55a5"/><rect x="625.31" y="700.40" width="1.6" height="3.0" fill="#5a55a5"/><rect x="628.76" y="700.40" width="1.6" height="3.0" fill="#5a55a5"/><rect x="632.22" y="700.40" width="1.6" height="3.0" fill="#5a55a5"/><rect x="635.68" y="700.40" width="1.6" height="3.0" fill="#5a55a5"/><rect x="639.13" y="700.40" width="1.6" height="3.0" fill="#5a55a5"/><rect x="642.59" y="700.40" width="1.6" height="3.0" fill="#5a55a5"/><rect x="646.04" y="700.40" width="1.6" height="3.0" fill="#5a55a5"/><rect x="649.50" y="700.40" width="1.6" height="3.0" fill="#5a55a5"/><rect x="652.95" y="700.40" width="1.6" height="3.0" fill="#5a55a5"/><rect x="656.41" y="700.40" width="1.6" height="3.0" fill="#5a55a5"/><rect x="659.86" y="700.40" width="1.6" height="3.0" fill="#5a55a5"/><rect x="663.32" y="700.40" width="1.6" height="3.0" fill="#5a55a5"/><rect x="666.77" y="700.40" width="1.6" height="3.0" fill="#5a55a5"/><rect x="670.23" y="700.40" width="1.6" height="3.0" fill="#5a55a5"/><rect x="673.68" y="700.40" width="1.6" height="3.0" fill="#5a55a5"/><rect x="677.13" y="700.40" width="1.6" height="3.0" fill="#5a55a5"/><rect x="680.59" y="700.40" width="1.6" height="3.0" fill="#5a55a5"/><rect x="684.05" y="700.40" width="1.6" height="3.0" fill="#5a55a5"/><rect x="687.50" y="700.40" width="1.6" height="3.0" fill="#5a55a5"/><rect x="694.41" y="700.40" width="1.6" height="3.0" fill="#5a55a5"/><rect x="697.87" y="700.40" width="1.6" height="3.0" fill="#5a55a5"/><rect x="701.32" y="700.40" width="1.6" height="3.0" fill="#5a55a5"/><rect x="704.78" y="700.40" width="1.6" height="3.0" fill="#5a55a5"/><rect x="708.23" y="700.40" width="1.6" height="3.0" fill="#5a55a5"/><rect x="711.69" y="700.40" width="1.6" height="3.0" fill="#5a55a5"/><rect x="715.14" y="700.40" width="1.6" height="3.0" fill="#5a55a5"/><rect x="718.60" y="700.40" width="1.6" height="3.0" fill="#5a55a5"/><rect x="722.05" y="700.40" width="1.6" height="3.0" fill="#5a55a5"/><rect x="725.50" y="700.40" width="1.6" height="3.0" fill="#5a55a5"/><rect x="728.96" y="700.40" width="1.6" height="3.0" fill="#5a55a5"/><rect x="732.42" y="700.40" width="1.6" height="3.0" fill="#5a55a5"/><rect x="735.87" y="700.40" width="1.6" height="3.0" fill="#5a55a5"/><rect x="739.33" y="700.40" width="1.6" height="3.0" fill="#5a55a5"/><rect x="742.78" y="700.40" width="1.6" height="3.0" fill="#5a55a5"/><rect x="746.24" y="700.40" width="1.6" height="3.0" fill="#5a55a5"/><rect x="753.14" y="700.40" width="1.6" height="3.0" fill="#5a55a5"/><rect x="756.60" y="700.40" width="1.6" height="3.0" fill="#5a55a5"/><rect x="760.06" y="700.40" width="1.6" height="3.0" fill="#5a55a5"/><rect x="763.51" y="700.40" width="1.6" height="3.0" fill="#5a55a5"/><rect x="766.97" y="700.40" width="1.6" height="3.0" fill="#5a55a5"/><rect x="770.42" y="700.40" width="1.6" height="3.0" fill="#5a55a5"/><rect x="773.88" y="700.40" width="1.6" height="3.0" fill="#5a55a5"/><rect x="777.33" y="700.40" width="1.6" height="3.0" fill="#5a55a5"/><rect x="780.79" y="700.40" width="1.6" height="3.0" fill="#5a55a5"/><rect x="784.24" y="700.40" width="1.6" height="3.0" fill="#5a55a5"/><rect x="787.70" y="700.40" width="1.6" height="3.0" fill="#5a55a5"/><rect x="791.15" y="700.40" width="1.6" height="3.0" fill="#5a55a5"/><rect x="794.61" y="700.40" width="1.6" height="3.0" fill="#5a55a5"/><rect x="798.06" y="700.40" width="1.6" height="3.0" fill="#5a55a5"/><rect x="801.51" y="700.40" width="1.6" height="3.0" fill="#5a55a5"/><rect x="804.97" y="700.40" width="1.6" height="3.0" fill="#5a55a5"/><rect x="808.43" y="700.40" width="1.6" height="3.0" fill="#5a55a5"/><rect x="811.88" y="700.40" width="1.6" height="3.0" fill="#5a55a5"/><rect x="815.34" y="700.40" width="1.6" height="3.0" fill="#5a55a5"/><rect x="818.79" y="700.40" width="1.6" height="3.0" fill="#5a55a5"/><rect x="822.25" y="700.40" width="1.6" height="3.0" fill="#5a55a5"/><rect x="825.70" y="700.40" width="1.6" height="3.0" fill="#5a55a5"/><rect x="829.16" y="700.40" width="1.6" height="3.0" fill="#5a55a5"/><rect x="832.61" y="700.40" width="1.6" height="3.0" fill="#5a55a5"/><rect x="836.07" y="700.40" width="1.6" height="3.0" fill="#5a55a5"/><rect x="839.52" y="700.40" width="1.6" height="3.0" fill="#5a55a5"/><rect x="842.98" y="700.40" width="1.6" height="3.0" fill="#5a55a5"/><rect x="846.43" y="700.40" width="1.6" height="3.0" fill="#5a55a5"/><rect x="849.88" y="700.40" width="1.6" height="3.0" fill="#5a55a5"/><rect x="853.34" y="700.40" width="1.6" height="3.0" fill="#5a55a5"/><rect x="856.80" y="700.40" width="1.6" height="3.0" fill="#5a55a5"/><rect x="860.25" y="700.40" width="1.6" height="3.0" fill="#5a55a5"/><rect x="863.71" y="700.40" width="1.6" height="3.0" fill="#5a55a5"/><rect x="867.16" y="700.40" width="1.6" height="3.0" fill="#5a55a5"/><rect x="870.62" y="700.40" width="1.6" height="3.0" fill="#5a55a5"/><rect x="874.07" y="700.40" width="1.6" height="3.0" fill="#5a55a5"/><rect x="877.53" y="700.40" width="1.6" height="3.0" fill="#5a55a5"/><rect x="880.98" y="700.40" width="1.6" height="3.0" fill="#5a55a5"/><rect x="884.44" y="700.40" width="1.6" height="3.0" fill="#5a55a5"/><rect x="887.89" y="700.40" width="1.6" height="3.0" fill="#5a55a5"/><rect x="65.60" y="695.60" width="1.6" height="3.0" fill="#5a55a5"/><rect x="69.06" y="695.60" width="1.6" height="3.0" fill="#5a55a5"/><rect x="72.51" y="695.60" width="1.6" height="3.0" fill="#5a55a5"/><rect x="75.97" y="695.60" width="1.6" height="3.0" fill="#5a55a5"/><rect x="79.42" y="695.60" width="1.6" height="3.0" fill="#5a55a5"/><rect x="82.88" y="695.60" width="1.6" height="3.0" fill="#5a55a5"/><rect x="86.33" y="695.60" width="1.6" height="3.0" fill="#5a55a5"/><rect x="89.79" y="695.60" width="1.6" height="3.0" fill="#5a55a5"/><rect x="93.24" y="695.60" width="1.6" height="3.0" fill="#5a55a5"/><rect x="96.70" y="695.60" width="1.6" height="3.0" fill="#5a55a5"/><rect x="100.15" y="695.60" width="1.6" height="3.0" fill="#5a55a5"/><rect x="103.61" y="695.60" width="1.6" height="3.0" fill="#5a55a5"/><rect x="107.06" y="695.60" width="1.6" height="3.0" fill="#5a55a5"/><rect x="110.52" y="695.60" width="1.6" height="3.0" fill="#5a55a5"/><rect x="113.97" y="695.60" width="1.6" height="3.0" fill="#5a55a5"/><rect x="117.43" y="695.60" width="1.6" height="3.0" fill="#5a55a5"/><rect x="120.88" y="695.60" width="1.6" height="3.0" fill="#5a55a5"/><rect x="124.34" y="695.60" width="1.6" height="3.0" fill="#5a55a5"/><rect x="127.79" y="695.60" width="1.6" height="3.0" fill="#5a55a5"/><rect x="131.25" y="695.60" width="1.6" height="3.0" fill="#5a55a5"/><rect x="134.70" y="695.60" width="1.6" height="3.0" fill="#5a55a5"/><rect x="138.16" y="695.60" width="1.6" height="3.0" fill="#5a55a5"/><rect x="141.61" y="695.60" width="1.6" height="3.0" fill="#5a55a5"/><rect x="145.06" y="695.60" width="1.6" height="3.0" fill="#5a55a5"/><rect x="148.52" y="695.60" width="1.6" height="3.0" fill="#5a55a5"/><rect x="151.97" y="695.60" width="1.6" height="3.0" fill="#5a55a5"/><rect x="155.43" y="695.60" width="1.6" height="3.0" fill="#5a55a5"/><rect x="158.88" y="695.60" width="1.6" height="3.0" fill="#5a55a5"/><rect x="162.34" y="695.60" width="1.6" height="3.0" fill="#5a55a5"/><rect x="165.80" y="695.60" width="1.6" height="3.0" fill="#5a55a5"/><rect x="169.25" y="695.60" width="1.6" height="3.0" fill="#5a55a5"/><rect x="172.70" y="695.60" width="1.6" height="3.0" fill="#5a55a5"/><rect x="176.16" y="695.60" width="1.6" height="3.0" fill="#5a55a5"/><rect x="179.62" y="695.60" width="1.6" height="3.0" fill="#5a55a5"/><rect x="183.07" y="695.60" width="1.6" height="3.0" fill="#5a55a5"/><rect x="186.52" y="695.60" width="1.6" height="3.0" fill="#5a55a5"/><rect x="189.98" y="695.60" width="1.6" height="3.0" fill="#5a55a5"/><rect x="193.44" y="695.60" width="1.6" height="3.0" fill="#5a55a5"/><rect x="196.89" y="695.60" width="1.6" height="3.0" fill="#5a55a5"/><rect x="200.34" y="695.60" width="1.6" height="3.0" fill="#5a55a5"/><rect x="203.80" y="695.60" width="1.6" height="3.0" fill="#5a55a5"/><rect x="207.25" y="695.60" width="1.6" height="3.0" fill="#5a55a5"/><rect x="210.71" y="695.60" width="1.6" height="3.0" fill="#5a55a5"/><rect x="214.16" y="695.60" width="1.6" height="3.0" fill="#5a55a5"/><rect x="217.62" y="695.60" width="1.6" height="3.0" fill="#5a55a5"/><rect x="221.07" y="695.60" width="1.6" height="3.0" fill="#5a55a5"/><rect x="224.53" y="695.60" width="1.6" height="3.0" fill="#5a55a5"/><rect x="227.98" y="695.60" width="1.6" height="3.0" fill="#5a55a5"/><rect x="231.44" y="695.60" width="1.6" height="3.0" fill="#5a55a5"/><rect x="234.90" y="695.60" width="1.6" height="3.0" fill="#5a55a5"/><rect x="238.35" y="695.60" width="1.6" height="3.0" fill="#5a55a5"/><rect x="241.81" y="695.60" width="1.6" height="3.0" fill="#5a55a5"/><rect x="245.26" y="695.60" width="1.6" height="3.0" fill="#5a55a5"/><rect x="248.72" y="695.60" width="1.6" height="3.0" fill="#5a55a5"/><rect x="252.17" y="695.60" width="1.6" height="3.0" fill="#5a55a5"/><rect x="255.62" y="695.60" width="1.6" height="3.0" fill="#5a55a5"/><rect x="259.08" y="695.60" width="1.6" height="3.0" fill="#5a55a5"/><rect x="262.54" y="695.60" width="1.6" height="3.0" fill="#5a55a5"/><rect x="265.99" y="695.60" width="1.6" height="3.0" fill="#5a55a5"/><rect x="269.44" y="695.60" width="1.6" height="3.0" fill="#5a55a5"/><rect x="272.90" y="695.60" width="1.6" height="3.0" fill="#5a55a5"/><rect x="276.35" y="695.60" width="1.6" height="3.0" fill="#5a55a5"/><rect x="279.81" y="695.60" width="1.6" height="3.0" fill="#5a55a5"/><rect x="283.26" y="695.60" width="1.6" height="3.0" fill="#5a55a5"/><rect x="286.72" y="695.60" width="1.6" height="3.0" fill="#5a55a5"/><rect x="290.18" y="695.60" width="1.6" height="3.0" fill="#5a55a5"/><rect x="293.63" y="695.60" width="1.6" height="3.0" fill="#5a55a5"/><rect x="297.08" y="695.60" width="1.6" height="3.0" fill="#5a55a5"/><rect x="300.54" y="695.60" width="1.6" height="3.0" fill="#5a55a5"/><rect x="304.00" y="695.60" width="1.6" height="3.0" fill="#5a55a5"/><rect x="307.45" y="695.60" width="1.6" height="3.0" fill="#5a55a5"/><rect x="310.91" y="695.60" width="1.6" height="3.0" fill="#5a55a5"/><rect x="314.36" y="695.60" width="1.6" height="3.0" fill="#5a55a5"/><rect x="317.81" y="695.60" width="1.6" height="3.0" fill="#5a55a5"/><rect x="321.27" y="695.60" width="1.6" height="3.0" fill="#5a55a5"/><rect x="328.18" y="695.60" width="1.6" height="3.0" fill="#5a55a5"/><rect x="342.00" y="695.60" width="1.6" height="3.0" fill="#5a55a5"/><rect x="345.45" y="695.60" width="1.6" height="3.0" fill="#5a55a5"/><rect x="348.91" y="695.60" width="1.6" height="3.0" fill="#5a55a5"/><rect x="352.36" y="695.60" width="1.6" height="3.0" fill="#5a55a5"/><rect x="355.82" y="695.60" width="1.6" height="3.0" fill="#5a55a5"/><rect x="359.28" y="695.60" width="1.6" height="3.0" fill="#5a55a5"/><rect x="362.73" y="695.60" width="1.6" height="3.0" fill="#5a55a5"/><rect x="369.64" y="695.60" width="1.6" height="3.0" fill="#5a55a5"/><rect x="373.09" y="695.60" width="1.6" height="3.0" fill="#5a55a5"/><rect x="376.55" y="695.60" width="1.6" height="3.0" fill="#5a55a5"/><rect x="380.01" y="695.60" width="1.6" height="3.0" fill="#5a55a5"/><rect x="386.92" y="695.60" width="1.6" height="3.0" fill="#5a55a5"/><rect x="390.37" y="695.60" width="1.6" height="3.0" fill="#5a55a5"/><rect x="393.82" y="695.60" width="1.6" height="3.0" fill="#5a55a5"/><rect x="397.28" y="695.60" width="1.6" height="3.0" fill="#5a55a5"/><rect x="400.73" y="695.60" width="1.6" height="3.0" fill="#5a55a5"/><rect x="404.19" y="695.60" width="1.6" height="3.0" fill="#5a55a5"/><rect x="407.65" y="695.60" width="1.6" height="3.0" fill="#5a55a5"/><rect x="411.10" y="695.60" width="1.6" height="3.0" fill="#5a55a5"/><rect x="414.56" y="695.60" width="1.6" height="3.0" fill="#5a55a5"/><rect x="418.01" y="695.60" width="1.6" height="3.0" fill="#5a55a5"/><rect x="421.46" y="695.60" width="1.6" height="3.0" fill="#5a55a5"/><rect x="424.92" y="695.60" width="1.6" height="3.0" fill="#5a55a5"/><rect x="428.38" y="695.60" width="1.6" height="3.0" fill="#5a55a5"/><rect x="431.83" y="695.60" width="1.6" height="3.0" fill="#5a55a5"/><rect x="435.29" y="695.60" width="1.6" height="3.0" fill="#5a55a5"/><rect x="438.74" y="695.60" width="1.6" height="3.0" fill="#5a55a5"/><rect x="442.19" y="695.60" width="1.6" height="3.0" fill="#5a55a5"/><rect x="445.65" y="695.60" width="1.6" height="3.0" fill="#5a55a5"/><rect x="449.10" y="695.60" width="1.6" height="3.0" fill="#5a55a5"/><rect x="452.56" y="695.60" width="1.6" height="3.0" fill="#5a55a5"/><rect x="456.02" y="695.60" width="1.6" height="3.0" fill="#5a55a5"/><rect x="459.47" y="695.60" width="1.6" height="3.0" fill="#5a55a5"/><rect x="462.93" y="695.60" width="1.6" height="3.0" fill="#5a55a5"/><rect x="466.38" y="695.60" width="1.6" height="3.0" fill="#5a55a5"/><rect x="469.83" y="695.60" width="1.6" height="3.0" fill="#5a55a5"/><rect x="473.29" y="695.60" width="1.6" height="3.0" fill="#5a55a5"/><rect x="476.74" y="695.60" width="1.6" height="3.0" fill="#5a55a5"/><rect x="480.20" y="695.60" width="1.6" height="3.0" fill="#5a55a5"/><rect x="483.66" y="695.60" width="1.6" height="3.0" fill="#5a55a5"/><rect x="487.11" y="695.60" width="1.6" height="3.0" fill="#5a55a5"/><rect x="490.56" y="695.60" width="1.6" height="3.0" fill="#5a55a5"/><rect x="494.02" y="695.60" width="1.6" height="3.0" fill="#5a55a5"/><rect x="497.47" y="695.60" width="1.6" height="3.0" fill="#5a55a5"/><rect x="500.93" y="695.60" width="1.6" height="3.0" fill="#5a55a5"/><rect x="504.39" y="695.60" width="1.6" height="3.0" fill="#5a55a5"/><rect x="507.84" y="695.60" width="1.6" height="3.0" fill="#5a55a5"/><rect x="511.30" y="695.60" width="1.6" height="3.0" fill="#5a55a5"/><rect x="514.75" y="695.60" width="1.6" height="3.0" fill="#5a55a5"/><rect x="518.21" y="695.60" width="1.6" height="3.0" fill="#5a55a5"/><rect x="521.66" y="695.60" width="1.6" height="3.0" fill="#5a55a5"/><rect x="525.12" y="695.60" width="1.6" height="3.0" fill="#5a55a5"/><rect x="528.57" y="695.60" width="1.6" height="3.0" fill="#5a55a5"/><rect x="532.03" y="695.60" width="1.6" height="3.0" fill="#5a55a5"/><rect x="535.48" y="695.60" width="1.6" height="3.0" fill="#5a55a5"/><rect x="538.94" y="695.60" width="1.6" height="3.0" fill="#5a55a5"/><rect x="542.39" y="695.60" width="1.6" height="3.0" fill="#5a55a5"/><rect x="545.85" y="695.60" width="1.6" height="3.0" fill="#5a55a5"/><rect x="549.30" y="695.60" width="1.6" height="3.0" fill="#5a55a5"/><rect x="552.76" y="695.60" width="1.6" height="3.0" fill="#5a55a5"/><rect x="556.21" y="695.60" width="1.6" height="3.0" fill="#5a55a5"/><rect x="559.67" y="695.60" width="1.6" height="3.0" fill="#5a55a5"/><rect x="563.12" y="695.60" width="1.6" height="3.0" fill="#5a55a5"/><rect x="566.58" y="695.60" width="1.6" height="3.0" fill="#5a55a5"/><rect x="570.03" y="695.60" width="1.6" height="3.0" fill="#5a55a5"/><rect x="573.49" y="695.60" width="1.6" height="3.0" fill="#5a55a5"/><rect x="576.94" y="695.60" width="1.6" height="3.0" fill="#5a55a5"/><rect x="580.39" y="695.60" width="1.6" height="3.0" fill="#5a55a5"/><rect x="583.85" y="695.60" width="1.6" height="3.0" fill="#5a55a5"/><rect x="587.31" y="695.60" width="1.6" height="3.0" fill="#5a55a5"/><rect x="590.76" y="695.60" width="1.6" height="3.0" fill="#5a55a5"/><rect x="594.22" y="695.60" width="1.6" height="3.0" fill="#5a55a5"/><rect x="597.67" y="695.60" width="1.6" height="3.0" fill="#5a55a5"/><rect x="601.12" y="695.60" width="1.6" height="3.0" fill="#5a55a5"/><rect x="604.58" y="695.60" width="1.6" height="3.0" fill="#5a55a5"/><rect x="608.04" y="695.60" width="1.6" height="3.0" fill="#5a55a5"/><rect x="611.49" y="695.60" width="1.6" height="3.0" fill="#5a55a5"/><rect x="614.95" y="695.60" width="1.6" height="3.0" fill="#5a55a5"/><rect x="618.40" y="695.60" width="1.6" height="3.0" fill="#5a55a5"/><rect x="621.86" y="695.60" width="1.6" height="3.0" fill="#5a55a5"/><rect x="625.31" y="695.60" width="1.6" height="3.0" fill="#5a55a5"/><rect x="628.76" y="695.60" width="1.6" height="3.0" fill="#5a55a5"/><rect x="632.22" y="695.60" width="1.6" height="3.0" fill="#5a55a5"/><rect x="635.68" y="695.60" width="1.6" height="3.0" fill="#5a55a5"/><rect x="639.13" y="695.60" width="1.6" height="3.0" fill="#5a55a5"/><rect x="642.59" y="695.60" width="1.6" height="3.0" fill="#5a55a5"/><rect x="646.04" y="695.60" width="1.6" height="3.0" fill="#5a55a5"/><rect x="649.50" y="695.60" width="1.6" height="3.0" fill="#5a55a5"/><rect x="666.77" y="695.60" width="1.6" height="3.0" fill="#5a55a5"/><rect x="670.23" y="695.60" width="1.6" height="3.0" fill="#5a55a5"/><rect x="673.68" y="695.60" width="1.6" height="3.0" fill="#5a55a5"/><rect x="677.13" y="695.60" width="1.6" height="3.0" fill="#5a55a5"/><rect x="680.59" y="695.60" width="1.6" height="3.0" fill="#5a55a5"/><rect x="684.05" y="695.60" width="1.6" height="3.0" fill="#5a55a5"/><rect x="687.50" y="695.60" width="1.6" height="3.0" fill="#5a55a5"/><rect x="690.96" y="695.60" width="1.6" height="3.0" fill="#5a55a5"/><rect x="694.41" y="695.60" width="1.6" height="3.0" fill="#5a55a5"/><rect x="697.87" y="695.60" width="1.6" height="3.0" fill="#5a55a5"/><rect x="701.32" y="695.60" width="1.6" height="3.0" fill="#5a55a5"/><rect x="704.78" y="695.60" width="1.6" height="3.0" fill="#5a55a5"/><rect x="715.14" y="695.60" width="1.6" height="3.0" fill="#5a55a5"/><rect x="718.60" y="695.60" width="1.6" height="3.0" fill="#5a55a5"/><rect x="722.05" y="695.60" width="1.6" height="3.0" fill="#5a55a5"/><rect x="725.50" y="695.60" width="1.6" height="3.0" fill="#5a55a5"/><rect x="728.96" y="695.60" width="1.6" height="3.0" fill="#5a55a5"/><rect x="742.78" y="695.60" width="1.6" height="3.0" fill="#5a55a5"/><rect x="746.24" y="695.60" width="1.6" height="3.0" fill="#5a55a5"/><rect x="749.69" y="695.60" width="1.6" height="3.0" fill="#5a55a5"/><rect x="753.14" y="695.60" width="1.6" height="3.0" fill="#5a55a5"/><rect x="756.60" y="695.60" width="1.6" height="3.0" fill="#5a55a5"/><rect x="760.06" y="695.60" width="1.6" height="3.0" fill="#5a55a5"/><rect x="763.51" y="695.60" width="1.6" height="3.0" fill="#5a55a5"/><rect x="766.97" y="695.60" width="1.6" height="3.0" fill="#5a55a5"/><rect x="770.42" y="695.60" width="1.6" height="3.0" fill="#5a55a5"/><rect x="777.33" y="695.60" width="1.6" height="3.0" fill="#5a55a5"/><rect x="780.79" y="695.60" width="1.6" height="3.0" fill="#5a55a5"/><rect x="784.24" y="695.60" width="1.6" height="3.0" fill="#5a55a5"/><rect x="787.70" y="695.60" width="1.6" height="3.0" fill="#5a55a5"/><rect x="791.15" y="695.60" width="1.6" height="3.0" fill="#5a55a5"/><rect x="794.61" y="695.60" width="1.6" height="3.0" fill="#5a55a5"/><rect x="798.06" y="695.60" width="1.6" height="3.0" fill="#5a55a5"/><rect x="801.51" y="695.60" width="1.6" height="3.0" fill="#5a55a5"/><rect x="804.97" y="695.60" width="1.6" height="3.0" fill="#5a55a5"/><rect x="808.43" y="695.60" width="1.6" height="3.0" fill="#5a55a5"/><rect x="811.88" y="695.60" width="1.6" height="3.0" fill="#5a55a5"/><rect x="815.34" y="695.60" width="1.6" height="3.0" fill="#5a55a5"/><rect x="818.79" y="695.60" width="1.6" height="3.0" fill="#5a55a5"/><rect x="822.25" y="695.60" width="1.6" height="3.0" fill="#5a55a5"/><rect x="825.70" y="695.60" width="1.6" height="3.0" fill="#5a55a5"/><rect x="829.16" y="695.60" width="1.6" height="3.0" fill="#5a55a5"/><rect x="832.61" y="695.60" width="1.6" height="3.0" fill="#5a55a5"/><rect x="836.07" y="695.60" width="1.6" height="3.0" fill="#5a55a5"/><rect x="839.52" y="695.60" width="1.6" height="3.0" fill="#5a55a5"/><rect x="842.98" y="695.60" width="1.6" height="3.0" fill="#5a55a5"/><rect x="846.43" y="695.60" width="1.6" height="3.0" fill="#5a55a5"/><rect x="849.88" y="695.60" width="1.6" height="3.0" fill="#5a55a5"/><rect x="853.34" y="695.60" width="1.6" height="3.0" fill="#5a55a5"/><rect x="856.80" y="695.60" width="1.6" height="3.0" fill="#5a55a5"/><rect x="860.25" y="695.60" width="1.6" height="3.0" fill="#5a55a5"/><rect x="863.71" y="695.60" width="1.6" height="3.0" fill="#5a55a5"/><rect x="867.16" y="695.60" width="1.6" height="3.0" fill="#5a55a5"/><rect x="870.62" y="695.60" width="1.6" height="3.0" fill="#5a55a5"/><rect x="874.07" y="695.60" width="1.6" height="3.0" fill="#5a55a5"/><rect x="877.53" y="695.60" width="1.6" height="3.0" fill="#5a55a5"/><rect x="880.98" y="695.60" width="1.6" height="3.0" fill="#5a55a5"/><rect x="884.44" y="695.60" width="1.6" height="3.0" fill="#5a55a5"/><rect x="887.89" y="695.60" width="1.6" height="3.0" fill="#5a55a5"/><rect x="65.60" y="690.70" width="1.6" height="3.0" fill="#5e4fa2"/><rect x="69.06" y="690.70" width="1.6" height="3.0" fill="#5e4fa2"/><rect x="72.51" y="690.70" width="1.6" height="3.0" fill="#5e4fa2"/><rect x="103.61" y="690.70" width="1.6" height="3.0" fill="#5e4fa2"/><rect x="107.06" y="690.70" width="1.6" height="3.0" fill="#5e4fa2"/><rect x="110.52" y="690.70" width="1.6" height="3.0" fill="#5e4fa2"/><rect x="127.79" y="690.70" width="1.6" height="3.0" fill="#5e4fa2"/><rect x="158.88" y="690.70" width="1.6" height="3.0" fill="#5e4fa2"/><rect x="162.34" y="690.70" width="1.6" height="3.0" fill="#5e4fa2"/><rect x="165.80" y="690.70" width="1.6" height="3.0" fill="#5e4fa2"/><rect x="169.25" y="690.70" width="1.6" height="3.0" fill="#5e4fa2"/><rect x="172.70" y="690.70" width="1.6" height="3.0" fill="#5e4fa2"/><rect x="176.16" y="690.70" width="1.6" height="3.0" fill="#5e4fa2"/><rect x="179.62" y="690.70" width="1.6" height="3.0" fill="#5e4fa2"/><rect x="183.07" y="690.70" width="1.6" height="3.0" fill="#5e4fa2"/><rect x="186.52" y="690.70" width="1.6" height="3.0" fill="#5e4fa2"/><rect x="189.98" y="690.70" width="1.6" height="3.0" fill="#5e4fa2"/><rect x="193.44" y="690.70" width="1.6" height="3.0" fill="#5e4fa2"/><rect x="196.89" y="690.70" width="1.6" height="3.0" fill="#5e4fa2"/><rect x="200.34" y="690.70" width="1.6" height="3.0" fill="#5e4fa2"/><rect x="203.80" y="690.70" width="1.6" height="3.0" fill="#5e4fa2"/><rect x="207.25" y="690.70" width="1.6" height="3.0" fill="#5e4fa2"/><rect x="210.71" y="690.70" width="1.6" height="3.0" fill="#5e4fa2"/><rect x="214.16" y="690.70" width="1.6" height="3.0" fill="#5e4fa2"/><rect x="217.62" y="690.70" width="1.6" height="3.0" fill="#5e4fa2"/><rect x="221.07" y="690.70" width="1.6" height="3.0" fill="#5e4fa2"/><rect x="224.53" y="690.70" width="1.6" height="3.0" fill="#5e4fa2"/><rect x="227.98" y="690.70" width="1.6" height="3.0" fill="#5e4fa2"/><rect x="234.90" y="690.70" width="1.6" height="3.0" fill="#5e4fa2"/><rect x="238.35" y="690.70" width="1.6" height="3.0" fill="#5e4fa2"/><rect x="241.81" y="690.70" width="1.6" height="3.0" fill="#5e4fa2"/><rect x="245.26" y="690.70" width="1.6" height="3.0" fill="#5e4fa2"/><rect x="248.72" y="690.70" width="1.6" height="3.0" fill="#5e4fa2"/><rect x="252.17" y="690.70" width="1.6" height="3.0" fill="#5e4fa2"/><rect x="255.62" y="690.70" width="1.6" height="3.0" fill="#5e4fa2"/><rect x="259.08" y="690.70" width="1.6" height="3.0" fill="#5e4fa2"/><rect x="262.54" y="690.70" width="1.6" height="3.0" fill="#5e4fa2"/><rect x="265.99" y="690.70" width="1.6" height="3.0" fill="#5e4fa2"/><rect x="269.44" y="690.70" width="1.6" height="3.0" fill="#5e4fa2"/><rect x="272.90" y="690.70" width="1.6" height="3.0" fill="#5e4fa2"/><rect x="276.35" y="690.70" width="1.6" height="3.0" fill="#5e4fa2"/><rect x="279.81" y="690.70" width="1.6" height="3.0" fill="#5e4fa2"/><rect x="283.26" y="690.70" width="1.6" height="3.0" fill="#5e4fa2"/><rect x="352.36" y="690.70" width="1.6" height="3.0" fill="#5e4fa2"/><rect x="355.82" y="690.70" width="1.6" height="3.0" fill="#5e4fa2"/><rect x="359.28" y="690.70" width="1.6" height="3.0" fill="#5e4fa2"/><rect x="362.73" y="690.70" width="1.6" height="3.0" fill="#5e4fa2"/><rect x="366.19" y="690.70" width="1.6" height="3.0" fill="#5e4fa2"/><rect x="373.09" y="690.70" width="1.6" height="3.0" fill="#5e4fa2"/><rect x="376.55" y="690.70" width="1.6" height="3.0" fill="#5e4fa2"/><rect x="393.82" y="690.70" width="1.6" height="3.0" fill="#5e4fa2"/><rect x="397.28" y="690.70" width="1.6" height="3.0" fill="#5e4fa2"/><rect x="400.73" y="690.70" width="1.6" height="3.0" fill="#5e4fa2"/><rect x="404.19" y="690.70" width="1.6" height="3.0" fill="#5e4fa2"/><rect x="407.65" y="690.70" width="1.6" height="3.0" fill="#5e4fa2"/><rect x="411.10" y="690.70" width="1.6" height="3.0" fill="#5e4fa2"/><rect x="414.56" y="690.70" width="1.6" height="3.0" fill="#5e4fa2"/><rect x="418.01" y="690.70" width="1.6" height="3.0" fill="#5e4fa2"/><rect x="421.46" y="690.70" width="1.6" height="3.0" fill="#5e4fa2"/><rect x="424.92" y="690.70" width="1.6" height="3.0" fill="#5e4fa2"/><rect x="428.38" y="690.70" width="1.6" height="3.0" fill="#5e4fa2"/><rect x="431.83" y="690.70" width="1.6" height="3.0" fill="#5e4fa2"/><rect x="435.29" y="690.70" width="1.6" height="3.0" fill="#5e4fa2"/><rect x="438.74" y="690.70" width="1.6" height="3.0" fill="#5e4fa2"/><rect x="442.19" y="690.70" width="1.6" height="3.0" fill="#5e4fa2"/><rect x="445.65" y="690.70" width="1.6" height="3.0" fill="#5e4fa2"/><rect x="449.10" y="690.70" width="1.6" height="3.0" fill="#5e4fa2"/><rect x="452.56" y="690.70" width="1.6" height="3.0" fill="#5e4fa2"/><rect x="462.93" y="690.70" width="1.6" height="3.0" fill="#5e4fa2"/><rect x="476.74" y="690.70" width="1.6" height="3.0" fill="#5e4fa2"/><rect x="480.20" y="690.70" width="1.6" height="3.0" fill="#5e4fa2"/><rect x="483.66" y="690.70" width="1.6" height="3.0" fill="#5e4fa2"/><rect x="487.11" y="690.70" width="1.6" height="3.0" fill="#5e4fa2"/><rect x="490.56" y="690.70" width="1.6" height="3.0" fill="#5e4fa2"/><rect x="494.02" y="690.70" width="1.6" height="3.0" fill="#5e4fa2"/><rect x="525.12" y="690.70" width="1.6" height="3.0" fill="#5e4fa2"/><rect x="528.57" y="690.70" width="1.6" height="3.0" fill="#5e4fa2"/><rect x="532.03" y="690.70" width="1.6" height="3.0" fill="#5e4fa2"/><rect x="535.48" y="690.70" width="1.6" height="3.0" fill="#5e4fa2"/><rect x="538.94" y="690.70" width="1.6" height="3.0" fill="#5e4fa2"/><rect x="542.39" y="690.70" width="1.6" height="3.0" fill="#5e4fa2"/><rect x="566.58" y="690.70" width="1.6" height="3.0" fill="#5e4fa2"/><rect x="570.03" y="690.70" width="1.6" height="3.0" fill="#5e4fa2"/><rect x="573.49" y="690.70" width="1.6" height="3.0" fill="#5e4fa2"/><rect x="608.04" y="690.70" width="1.6" height="3.0" fill="#5e4fa2"/><rect x="628.76" y="690.70" width="1.6" height="3.0" fill="#5e4fa2"/><rect x="632.22" y="690.70" width="1.6" height="3.0" fill="#5e4fa2"/><rect x="635.68" y="690.70" width="1.6" height="3.0" fill="#5e4fa2"/><rect x="639.13" y="690.70" width="1.6" height="3.0" fill="#5e4fa2"/><rect x="642.59" y="690.70" width="1.6" height="3.0" fill="#5e4fa2"/><rect x="646.04" y="690.70" width="1.6" height="3.0" fill="#5e4fa2"/><rect x="649.50" y="690.70" width="1.6" height="3.0" fill="#5e4fa2"/><rect x="652.95" y="690.70" width="1.6" height="3.0" fill="#5e4fa2"/><rect x="687.50" y="690.70" width="1.6" height="3.0" fill="#5e4fa2"/><rect x="690.96" y="690.70" width="1.6" height="3.0" fill="#5e4fa2"/><rect x="694.41" y="690.70" width="1.6" height="3.0" fill="#5e4fa2"/><rect x="697.87" y="690.70" width="1.6" height="3.0" fill="#5e4fa2"/><rect x="711.69" y="690.70" width="1.6" height="3.0" fill="#5e4fa2"/><rect x="756.60" y="690.70" width="1.6" height="3.0" fill="#5e4fa2"/><rect x="760.06" y="690.70" width="1.6" height="3.0" fill="#5e4fa2"/><rect x="773.88" y="690.70" width="1.6" height="3.0" fill="#5e4fa2"/><rect x="777.33" y="690.70" width="1.6" height="3.0" fill="#5e4fa2"/><rect x="780.79" y="690.70" width="1.6" height="3.0" fill="#5e4fa2"/><rect x="784.24" y="690.70" width="1.6" height="3.0" fill="#5e4fa2"/><rect x="794.61" y="690.70" width="1.6" height="3.0" fill="#5e4fa2"/><rect x="808.43" y="690.70" width="1.6" height="3.0" fill="#5e4fa2"/><rect x="811.88" y="690.70" width="1.6" height="3.0" fill="#5e4fa2"/><rect x="815.34" y="690.70" width="1.6" height="3.0" fill="#5e4fa2"/><rect x="818.79" y="690.70" width="1.6" height="3.0" fill="#5e4fa2"/><rect x="822.25" y="690.70" width="1.6" height="3.0" fill="#5e4fa2"/><rect x="825.70" y="690.70" width="1.6" height="3.0" fill="#5e4fa2"/><rect x="829.16" y="690.70" width="1.6" height="3.0" fill="#5e4fa2"/><rect x="832.61" y="690.70" width="1.6" height="3.0" fill="#5e4fa2"/><rect x="836.07" y="690.70" width="1.6" height="3.0" fill="#5e4fa2"/><rect x="839.52" y="690.70" width="1.6" height="3.0" fill="#5e4fa2"/><rect x="842.98" y="690.70" width="1.6" height="3.0" fill="#5e4fa2"/><rect x="846.43" y="690.70" width="1.6" height="3.0" fill="#5e4fa2"/><rect x="849.88" y="690.70" width="1.6" height="3.0" fill="#5e4fa2"/><rect x="853.34" y="690.70" width="1.6" height="3.0" fill="#5e4fa2"/><rect x="856.80" y="690.70" width="1.6" height="3.0" fill="#5e4fa2"/><rect x="870.62" y="690.70" width="1.6" height="3.0" fill="#5e4fa2"/><rect x="874.07" y="690.70" width="1.6" height="3.0" fill="#5e4fa2"/><rect x="877.53" y="690.70" width="1.6" height="3.0" fill="#5e4fa2"/><rect x="880.98" y="690.70" width="1.6" height="3.0" fill="#5e4fa2"/><rect x="884.44" y="690.70" width="1.6" height="3.0" fill="#5e4fa2"/><rect x="887.89" y="690.70" width="1.6" height="3.0" fill="#5e4fa2"/><rect x="65.60" y="685.90" width="1.6" height="3.0" fill="#5e4fa2"/><rect x="69.06" y="685.90" width="1.6" height="3.0" fill="#5e4fa2"/><rect x="72.51" y="685.90" width="1.6" height="3.0" fill="#5e4fa2"/><rect x="75.97" y="685.90" width="1.6" height="3.0" fill="#5e4fa2"/><rect x="79.42" y="685.90" width="1.6" height="3.0" fill="#5e4fa2"/><rect x="82.88" y="685.90" width="1.6" height="3.0" fill="#5e4fa2"/><rect x="86.33" y="685.90" width="1.6" height="3.0" fill="#5e4fa2"/><rect x="89.79" y="685.90" width="1.6" height="3.0" fill="#5e4fa2"/><rect x="93.24" y="685.90" width="1.6" height="3.0" fill="#5e4fa2"/><rect x="96.70" y="685.90" width="1.6" height="3.0" fill="#5e4fa2"/><rect x="100.15" y="685.90" width="1.6" height="3.0" fill="#5e4fa2"/><rect x="103.61" y="685.90" width="1.6" height="3.0" fill="#5e4fa2"/><rect x="107.06" y="685.90" width="1.6" height="3.0" fill="#5e4fa2"/><rect x="110.52" y="685.90" width="1.6" height="3.0" fill="#5e4fa2"/><rect x="113.97" y="685.90" width="1.6" height="3.0" fill="#5e4fa2"/><rect x="241.81" y="685.90" width="1.6" height="3.0" fill="#5e4fa2"/><rect x="245.26" y="685.90" width="1.6" height="3.0" fill="#5e4fa2"/><rect x="290.18" y="685.90" width="1.6" height="3.0" fill="#5e4fa2"/><rect x="293.63" y="685.90" width="1.6" height="3.0" fill="#5e4fa2"/><rect x="297.08" y="685.90" width="1.6" height="3.0" fill="#5e4fa2"/><rect x="494.02" y="685.90" width="1.6" height="3.0" fill="#5e4fa2"/><rect x="497.47" y="685.90" width="1.6" height="3.0" fill="#5e4fa2"/><rect x="521.66" y="685.90" width="1.6" height="3.0" fill="#5e4fa2"/><rect x="525.12" y="685.90" width="1.6" height="3.0" fill="#5e4fa2"/><rect x="528.57" y="685.90" width="1.6" height="3.0" fill="#5e4fa2"/><rect x="532.03" y="685.90" width="1.6" height="3.0" fill="#5e4fa2"/><rect x="677.13" y="685.90" width="1.6" height="3.0" fill="#5e4fa2"/><rect x="680.59" y="685.90" width="1.6" height="3.0" fill="#5e4fa2"/><rect x="722.05" y="685.90" width="1.6" height="3.0" fill="#5e4fa2"/><rect x="725.50" y="685.90" width="1.6" height="3.0" fill="#5e4fa2"/><rect x="728.96" y="685.90" width="1.6" height="3.0" fill="#5e4fa2"/><rect x="732.42" y="685.90" width="1.6" height="3.0" fill="#5e4fa2"/><rect x="735.87" y="685.90" width="1.6" height="3.0" fill="#5e4fa2"/><rect x="739.33" y="685.90" width="1.6" height="3.0" fill="#5e4fa2"/><rect x="770.42" y="685.90" width="1.6" height="3.0" fill="#5e4fa2"/><rect x="773.88" y="685.90" width="1.6" height="3.0" fill="#5e4fa2"/><rect x="777.33" y="685.90" width="1.6" height="3.0" fill="#5e4fa2"/><rect x="780.79" y="685.90" width="1.6" height="3.0" fill="#5e4fa2"/><rect x="784.24" y="685.90" width="1.6" height="3.0" fill="#5e4fa2"/><rect x="787.70" y="685.90" width="1.6" height="3.0" fill="#5e4fa2"/><rect x="804.97" y="685.90" width="1.6" height="3.0" fill="#5e4fa2"/><rect x="808.43" y="685.90" width="1.6" height="3.0" fill="#5e4fa2"/><rect x="811.88" y="685.90" width="1.6" height="3.0" fill="#5e4fa2"/><rect x="815.34" y="685.90" width="1.6" height="3.0" fill="#5e4fa2"/><rect x="818.79" y="685.90" width="1.6" height="3.0" fill="#5e4fa2"/><rect x="642.59" y="681.10" width="1.6" height="3.0" fill="#5e4fa2"/><rect x="646.04" y="681.10" width="1.6" height="3.0" fill="#5e4fa2"/><rect x="867.16" y="681.10" width="1.6" height="3.0" fill="#5e4fa2"/><rect x="884.44" y="681.10" width="1.6" height="3.0" fill="#5e4fa2"/><rect x="86.33" y="676.20" width="1.6" height="3.0" fill="#5e4fa2"/><rect x="290.18" y="676.20" width="1.6" height="3.0" fill="#5e4fa2"/><rect x="293.63" y="676.20" width="1.6" height="3.0" fill="#5e4fa2"/><rect x="304.00" y="676.20" width="1.6" height="3.0" fill="#5e4fa2"/><rect x="307.45" y="676.20" width="1.6" height="3.0" fill="#5e4fa2"/><rect x="310.91" y="676.20" width="1.6" height="3.0" fill="#5e4fa2"/><rect x="442.19" y="676.20" width="1.6" height="3.0" fill="#5e4fa2"/><rect x="445.65" y="676.20" width="1.6" height="3.0" fill="#5e4fa2"/><rect x="449.10" y="676.20" width="1.6" height="3.0" fill="#5e4fa2"/><rect x="452.56" y="676.20" width="1.6" height="3.0" fill="#5e4fa2"/><rect x="456.02" y="676.20" width="1.6" height="3.0" fill="#5e4fa2"/><rect x="459.47" y="676.20" width="1.6" height="3.0" fill="#5e4fa2"/><rect x="462.93" y="676.20" width="1.6" height="3.0" fill="#5e4fa2"/><rect x="466.38" y="676.20" width="1.6" height="3.0" fill="#5e4fa2"/><rect x="469.83" y="676.20" width="1.6" height="3.0" fill="#5e4fa2"/><rect x="473.29" y="676.20" width="1.6" height="3.0" fill="#5e4fa2"/><rect x="476.74" y="676.20" width="1.6" height="3.0" fill="#5e4fa2"/><rect x="480.20" y="676.20" width="1.6" height="3.0" fill="#5e4fa2"/><rect x="760.06" y="676.20" width="1.6" height="3.0" fill="#5e4fa2"/><rect x="763.51" y="676.20" width="1.6" height="3.0" fill="#5e4fa2"/><rect x="766.97" y="676.20" width="1.6" height="3.0" fill="#5e4fa2"/><rect x="770.42" y="676.20" width="1.6" height="3.0" fill="#5e4fa2"/><rect x="773.88" y="676.20" width="1.6" height="3.0" fill="#5e4fa2"/><rect x="777.33" y="676.20" width="1.6" height="3.0" fill="#5e4fa2"/><rect x="780.79" y="676.20" width="1.6" height="3.0" fill="#5e4fa2"/><rect x="784.24" y="676.20" width="1.6" height="3.0" fill="#5e4fa2"/><rect x="787.70" y="676.20" width="1.6" height="3.0" fill="#5e4fa2"/><rect x="145.06" y="671.50" width="1.6" height="3.0" fill="#5e4fa2"/><rect x="331.64" y="671.50" width="1.6" height="3.0" fill="#5e4fa2"/><rect x="335.09" y="671.50" width="1.6" height="3.0" fill="#5e4fa2"/><rect x="338.55" y="671.50" width="1.6" height="3.0" fill="#5e4fa2"/><rect x="487.11" y="671.50" width="1.6" height="3.0" fill="#5e4fa2"/><rect x="570.03" y="671.50" width="1.6" height="3.0" fill="#5e4fa2"/><rect x="608.04" y="666.60" width="1.6" height="3.0" fill="#5e4fa2"/><rect x="611.49" y="666.60" width="1.6" height="3.0" fill="#5e4fa2"/></g>
<rect x="922.5" y="534.5" width="911" height="242" rx="3" fill="none" stroke="#060709" stroke-width="1"/>
<rect x="923.5" y="535.5" width="909" height="240" rx="2.5" fill="#131519" stroke="#222128" stroke-width="1"/>
<path d="M924 538.5 Q924 536 926.5 536 L951 536 L924 563 Z" fill="#202226"/>
<path d="M931 539h2.6v2.2h-2.6z M930 542.2h3.6v4.6h1v1.6h-4.6v-1.6h1v-3h-1z" fill="#9ea3a8"/>
<text x="1378.0" y="553.7" font-size="14.25" fill="#d8d9da" text-anchor="middle" font-weight="normal" stroke="#d8d9da" stroke-width="0.45">Storage async snapshot duration</text>
<line x1="972" y1="577.7" x2="1610" y2="577.7" stroke="#35373b" stroke-width="1"/>
<line x1="972" y1="611.4" x2="1610" y2="611.4" stroke="#35373b" stroke-width="1"/>
<line x1="972" y1="645.0" x2="1610" y2="645.0" stroke="#35373b" stroke-width="1"/>
<line x1="972" y1="678.7" x2="1610" y2="678.7" stroke="#35373b" stroke-width="1"/>
<line x1="972" y1="712.3" x2="1610" y2="712.3" stroke="#35373b" stroke-width="1"/>
<line x1="972" y1="746.0" x2="1610" y2="746.0" stroke="#35373b" stroke-width="1"/>
<line x1="1056.8" y1="577" x2="1056.8" y2="746" stroke="#35373b" stroke-width="1"/>
<line x1="1163.2" y1="577" x2="1163.2" y2="746" stroke="#35373b" stroke-width="1"/>
<line x1="1269.7" y1="577" x2="1269.7" y2="746" stroke="#35373b" stroke-width="1"/>
<line x1="1376.2" y1="577" x2="1376.2" y2="746" stroke="#35373b" stroke-width="1"/>
<line x1="1482.6" y1="577" x2="1482.6" y2="746" stroke="#35373b" stroke-width="1"/>
<line x1="1589.0" y1="577" x2="1589.0" y2="746" stroke="#35373b" stroke-width="1"/>
<text x="966" y="580.7" font-size="12.4" fill="#c7d0d9" text-anchor="end" font-weight="normal" >50 ms</text>
<text x="966" y="614.3" font-size="12.4" fill="#c7d0d9" text-anchor="end" font-weight="normal" >40 ms</text>
<text x="966" y="648.0" font-size="12.4" fill="#c7d0d9" text-anchor="end" font-weight="normal" >30 ms</text>
<text x="966" y="681.7" font-size="12.4" fill="#c7d0d9" text-anchor="end" font-weight="normal" >20 ms</text>
<text x="966" y="715.3" font-size="12.4" fill="#c7d0d9" text-anchor="end" font-weight="normal" >10 ms</text>
<text x="966" y="749.0" font-size="12.4" fill="#c7d0d9" text-anchor="end" font-weight="normal" >0 s</text>
<text x="1056.3" y="762.5" font-size="12.4" fill="#c7d0d9" text-anchor="middle" font-weight="normal" >14:50</text>
<text x="1162.75" y="762.5" font-size="12.4" fill="#c7d0d9" text-anchor="middle" font-weight="normal" >15:00</text>
<text x="1269.2" y="762.5" font-size="12.4" fill="#c7d0d9" text-anchor="middle" font-weight="normal" >15:10</text>
<text x="1375.65" y="762.5" font-size="12.4" fill="#c7d0d9" text-anchor="middle" font-weight="normal" >15:20</text>
<text x="1482.1" y="762.5" font-size="12.4" fill="#c7d0d9" text-anchor="middle" font-weight="normal" >15:30</text>
<text x="1588.55" y="762.5" font-size="12.4" fill="#c7d0d9" text-anchor="middle" font-weight="normal" >15:40</text>
<clipPath id="cF"><rect x="972" y="570" width="638" height="177"/></clipPath>
<linearGradient id="gGrnF" x1="0" y1="577" x2="0" y2="745" gradientUnits="userSpaceOnUse"><stop offset="0" stop-color="#7EB26D" stop-opacity="0.14"/><stop offset="1" stop-color="#7EB26D" stop-opacity="0.04"/></linearGradient>
<path d="M972.0 740.1 L975.0 737.5 L982.0 737.5 L985.0 740.0 L990.0 739.0 L994.0 740.0 L998.0 738.5 L1001.0 741.5 L1007.5 732.0 L1013.0 741.5 L1017.0 735.0 L1022.0 733.0 L1025.0 737.5 L1033.0 737.5 L1036.0 740.0 L1041.0 734.0 L1044.0 731.5 L1045.6 718.6 L1047.5 737.0 L1049.0 718.6 L1052.0 741.5 L1055.0 738.0 L1058.0 741.0 L1063.0 735.0 L1066.0 734.0 L1071.0 737.0 L1075.0 736.5 L1076.0 733.0 L1079.0 732.0 L1083.0 733.5 L1085.0 738.0 L1090.0 740.0 L1093.0 741.0 L1097.0 735.0 L1101.0 732.0 L1106.0 733.5 L1110.0 737.0 L1112.0 735.0 L1113.5 694.0 L1117.0 689.0 L1119.0 683.5 L1120.5 736.0 L1125.0 737.0 L1128.0 738.5 L1131.0 732.5 L1135.0 732.5 L1137.0 733.0 L1139.0 741.0 L1141.0 728.0 L1142.0 672.0 L1144.0 671.5 L1147.5 671.5 L1148.0 673.0 L1150.0 735.5 L1153.0 740.5 L1156.0 737.0 L1160.0 737.0 L1166.0 736.5 L1170.0 737.5 L1174.0 738.0 L1180.0 737.0 L1190.0 737.0 L1193.0 742.0 L1200.0 740.5 L1203.0 737.0 L1208.0 737.0 L1212.0 742.0 L1219.0 733.0 L1222.0 730.5 L1229.0 729.5 L1232.0 728.0 L1241.0 727.0 L1245.0 726.5 L1249.0 739.0 L1253.0 737.0 L1258.0 734.0 L1260.0 736.5 L1263.0 709.5 L1270.0 709.5 L1273.0 736.0 L1278.0 736.0 L1282.0 741.5 L1295.0 741.5 L1300.0 737.5 L1302.0 728.5 L1307.0 727.5 L1310.0 737.5 L1314.0 737.5 L1316.0 740.0 L1318.0 736.0 L1327.0 737.0 L1335.0 735.0 L1338.0 641.4 L1344.0 641.4 L1347.0 737.0 L1352.0 740.0 L1354.0 739.0 L1360.0 727.0 L1362.0 648.2 L1367.0 646.5 L1370.0 720.5 L1373.0 721.0 L1376.0 737.5 L1380.0 733.0 L1388.0 729.5 L1392.0 731.0 L1396.0 737.5 L1400.0 723.0 L1402.0 722.0 L1405.0 735.0 L1408.0 736.5 L1412.0 721.0 L1416.0 719.0 L1418.0 715.5 L1420.0 731.5 L1431.0 731.5 L1435.0 730.0 L1440.0 730.0 L1442.0 733.0 L1445.0 726.0 L1448.0 726.0 L1448.5 720.5 L1451.0 729.0 L1455.0 730.0 L1458.0 733.0 L1463.0 734.0 L1466.0 732.0 L1469.0 733.0 L1471.0 730.5 L1473.0 724.0 L1478.0 723.0 L1480.0 729.5 L1484.0 725.5 L1489.0 725.5 L1492.0 734.0 L1494.0 734.0 L1496.0 737.0 L1500.0 720.0 L1505.0 720.0 L1508.0 728.0 L1513.0 727.5 L1517.0 734.0 L1522.0 729.0 L1525.0 726.0 L1527.0 726.0 L1529.0 600.5 L1532.0 600.0 L1535.0 601.5 L1537.0 601.0 L1538.0 728.0 L1543.0 729.5 L1547.0 731.0 L1551.0 727.5 L1554.0 727.5 L1557.0 738.5 L1560.0 741.0 L1562.0 737.5 L1567.0 737.0 L1569.0 728.0 L1574.0 728.0 L1576.0 738.0 L1579.0 685.0 L1585.0 685.0 L1587.0 733.0 L1590.0 731.0 L1593.0 735.5 L1600.0 738.5 L1604.0 739.0 L1607.0 737.0 L1610.0 736.5 L1610.0 746 L972.0 746 Z" fill="url(#gGrnF)" stroke="none" clip-path="url(#cF)"/>
<path d="M972.0 740.1 L975.0 737.5 L982.0 737.5 L985.0 740.0 L990.0 739.0 L994.0 740.0 L998.0 738.5 L1001.0 741.5 L1007.5 732.0 L1013.0 741.5 L1017.0 735.0 L1022.0 733.0 L1025.0 737.5 L1033.0 737.5 L1036.0 740.0 L1041.0 734.0 L1044.0 731.5 L1045.6 718.6 L1047.5 737.0 L1049.0 718.6 L1052.0 741.5 L1055.0 738.0 L1058.0 741.0 L1063.0 735.0 L1066.0 734.0 L1071.0 737.0 L1075.0 736.5 L1076.0 733.0 L1079.0 732.0 L1083.0 733.5 L1085.0 738.0 L1090.0 740.0 L1093.0 741.0 L1097.0 735.0 L1101.0 732.0 L1106.0 733.5 L1110.0 737.0 L1112.0 735.0 L1113.5 694.0 L1117.0 689.0 L1119.0 683.5 L1120.5 736.0 L1125.0 737.0 L1128.0 738.5 L1131.0 732.5 L1135.0 732.5 L1137.0 733.0 L1139.0 741.0 L1141.0 728.0 L1142.0 672.0 L1144.0 671.5 L1147.5 671.5 L1148.0 673.0 L1150.0 735.5 L1153.0 740.5 L1156.0 737.0 L1160.0 737.0 L1166.0 736.5 L1170.0 737.5 L1174.0 738.0 L1180.0 737.0 L1190.0 737.0 L1193.0 742.0 L1200.0 740.5 L1203.0 737.0 L1208.0 737.0 L1212.0 742.0 L1219.0 733.0 L1222.0 730.5 L1229.0 729.5 L1232.0 728.0 L1241.0 727.0 L1245.0 726.5 L1249.0 739.0 L1253.0 737.0 L1258.0 734.0 L1260.0 736.5 L1263.0 709.5 L1270.0 709.5 L1273.0 736.0 L1278.0 736.0 L1282.0 741.5 L1295.0 741.5 L1300.0 737.5 L1302.0 728.5 L1307.0 727.5 L1310.0 737.5 L1314.0 737.5 L1316.0 740.0 L1318.0 736.0 L1327.0 737.0 L1335.0 735.0 L1338.0 641.4 L1344.0 641.4 L1347.0 737.0 L1352.0 740.0 L1354.0 739.0 L1360.0 727.0 L1362.0 648.2 L1367.0 646.5 L1370.0 720.5 L1373.0 721.0 L1376.0 737.5 L1380.0 733.0 L1388.0 729.5 L1392.0 731.0 L1396.0 737.5 L1400.0 723.0 L1402.0 722.0 L1405.0 735.0 L1408.0 736.5 L1412.0 721.0 L1416.0 719.0 L1418.0 715.5 L1420.0 731.5 L1431.0 731.5 L1435.0 730.0 L1440.0 730.0 L1442.0 733.0 L1445.0 726.0 L1448.0 726.0 L1448.5 720.5 L1451.0 729.0 L1455.0 730.0 L1458.0 733.0 L1463.0 734.0 L1466.0 732.0 L1469.0 733.0 L1471.0 730.5 L1473.0 724.0 L1478.0 723.0 L1480.0 729.5 L1484.0 725.5 L1489.0 725.5 L1492.0 734.0 L1494.0 734.0 L1496.0 737.0 L1500.0 720.0 L1505.0 720.0 L1508.0 728.0 L1513.0 727.5 L1517.0 734.0 L1522.0 729.0 L1525.0 726.0 L1527.0 726.0 L1529.0 600.5 L1532.0 600.0 L1535.0 601.5 L1537.0 601.0 L1538.0 728.0 L1543.0 729.5 L1547.0 731.0 L1551.0 727.5 L1554.0 727.5 L1557.0 738.5 L1560.0 741.0 L1562.0 737.5 L1567.0 737.0 L1569.0 728.0 L1574.0 728.0 L1576.0 738.0 L1579.0 685.0 L1585.0 685.0 L1587.0 733.0 L1590.0 731.0 L1593.0 735.5 L1600.0 738.5 L1604.0 739.0 L1607.0 737.0 L1610.0 736.5" stroke="#7EB26D" stroke-width="1.1" fill="none" stroke-linejoin="round" clip-path="url(#cF)"/>
<line x1="972" y1="745.8" x2="1610" y2="745.8" stroke="#A9D9B8" stroke-width="1.3"/>
<text x="1710" y="586.8" font-size="11.5" fill="#33a2e5" text-anchor="start" font-weight="bold" >max</text>
<path d="M1737 581.1999999999999 l3.5 3.5 l3.5 -3.5" stroke="#33a2e5" stroke-width="1.4" fill="none"/>
<text x="1770.3" y="586.8" font-size="11.5" fill="#33a2e5" text-anchor="start" font-weight="bold" >current</text>
<rect x="1632" y="604.0" width="14" height="4" rx="1" fill="#7EB26D"/>
<text x="1656" y="608.9" font-size="12" fill="#c7d0d9" text-anchor="start" font-weight="normal" >99.99%</text>
<text x="1757" y="608.9" font-size="12.3" fill="#c7d0d9" text-anchor="end" font-weight="normal" >43.7 ms</text>
<text x="1817" y="608.9" font-size="12.3" fill="#c7d0d9" text-anchor="end" font-weight="normal" >2.61 ms</text>
<rect x="1630" y="617.6" width="189" height="24.2" fill="#1b1d21"/>
<rect x="1632" y="628.2" width="14" height="4" rx="1" fill="#EAB839"/>
<text x="1656" y="633.1" font-size="12" fill="#c7d0d9" text-anchor="start" font-weight="normal" >99%</text>
<text x="1757" y="633.1" font-size="12.3" fill="#c7d0d9" text-anchor="end" font-weight="normal" >174 µs</text>
<text x="1817" y="633.1" font-size="12.3" fill="#c7d0d9" text-anchor="end" font-weight="normal" >103 µs</text>
<rect x="1632" y="652.5" width="14" height="4" rx="1" fill="#6ED0E0"/>
<text x="1656" y="657.4" font-size="12" fill="#c7d0d9" text-anchor="start" font-weight="normal" >avg</text>
<text x="1757" y="657.4" font-size="12.3" fill="#c7d0d9" text-anchor="end" font-weight="normal" >46.8 µs</text>
<text x="1817" y="657.4" font-size="12.3" fill="#c7d0d9" text-anchor="end" font-weight="normal" >24.4 µs</text>
<filter id="shd" x="-20%" y="-20%" width="140%" height="150%"><feGaussianBlur stdDeviation="3"/></filter>
<rect x="1491" y="357" width="148" height="84" fill="#000" opacity="0.55" filter="url(#shd)"/>
<rect x="1492.5" y="355.5" width="145.5" height="82" rx="1.5" fill="#0b0c0f"/>
<text x="1505" y="374.6" font-size="12.2" fill="#e1e3e6" text-anchor="start" font-weight="normal" >2025-04-23 15:27:45</text>
<rect x="1505" y="387.8" width="14" height="4" rx="1" fill="#7EB26D"/>
<text x="1531" y="392.2" font-size="12" fill="#c7d0d9" text-anchor="start" font-weight="normal" >99.99%</text>
<line x1="1493" y1="404.5" x2="1638" y2="404.5" stroke="#3b3d42" stroke-width="1"/>
<path d="M1507.6 416.7 h10.8 q1.3 0 1.3 1.3 v10.6 l-3.6 -3.6 h-8.5 q-1.3 0 -1.3 -1.3 v-5.7 q0 -1.3 1.3 -1.3 z" fill="none" stroke="#7e8185" stroke-width="1.5" stroke-linejoin="round"/>
<text x="1531" y="426.6" font-size="14" fill="#d2d4d8" text-anchor="start" font-weight="normal" >Add annotation</text>
<rect x="5.5" y="783.5" width="909" height="40" rx="2.5" fill="#131519" stroke="#222128"/>
<path d="M6 787 Q6 784 8.5 784 L33 784 L6 811 Z" fill="#202226"/>
<path d="M13 788h2.6v2.2h-2.6z" fill="#9ea3a8"/>
<rect x="923.5" y="783.5" width="909" height="40" rx="2.5" fill="#131519" stroke="#222128"/>
<path d="M924 787 Q924 784 926.5 784 L951 784 L924 811 Z" fill="#202226"/>
<path d="M931 788h2.6v2.2h-2.6z" fill="#9ea3a8"/></svg></body></html>
